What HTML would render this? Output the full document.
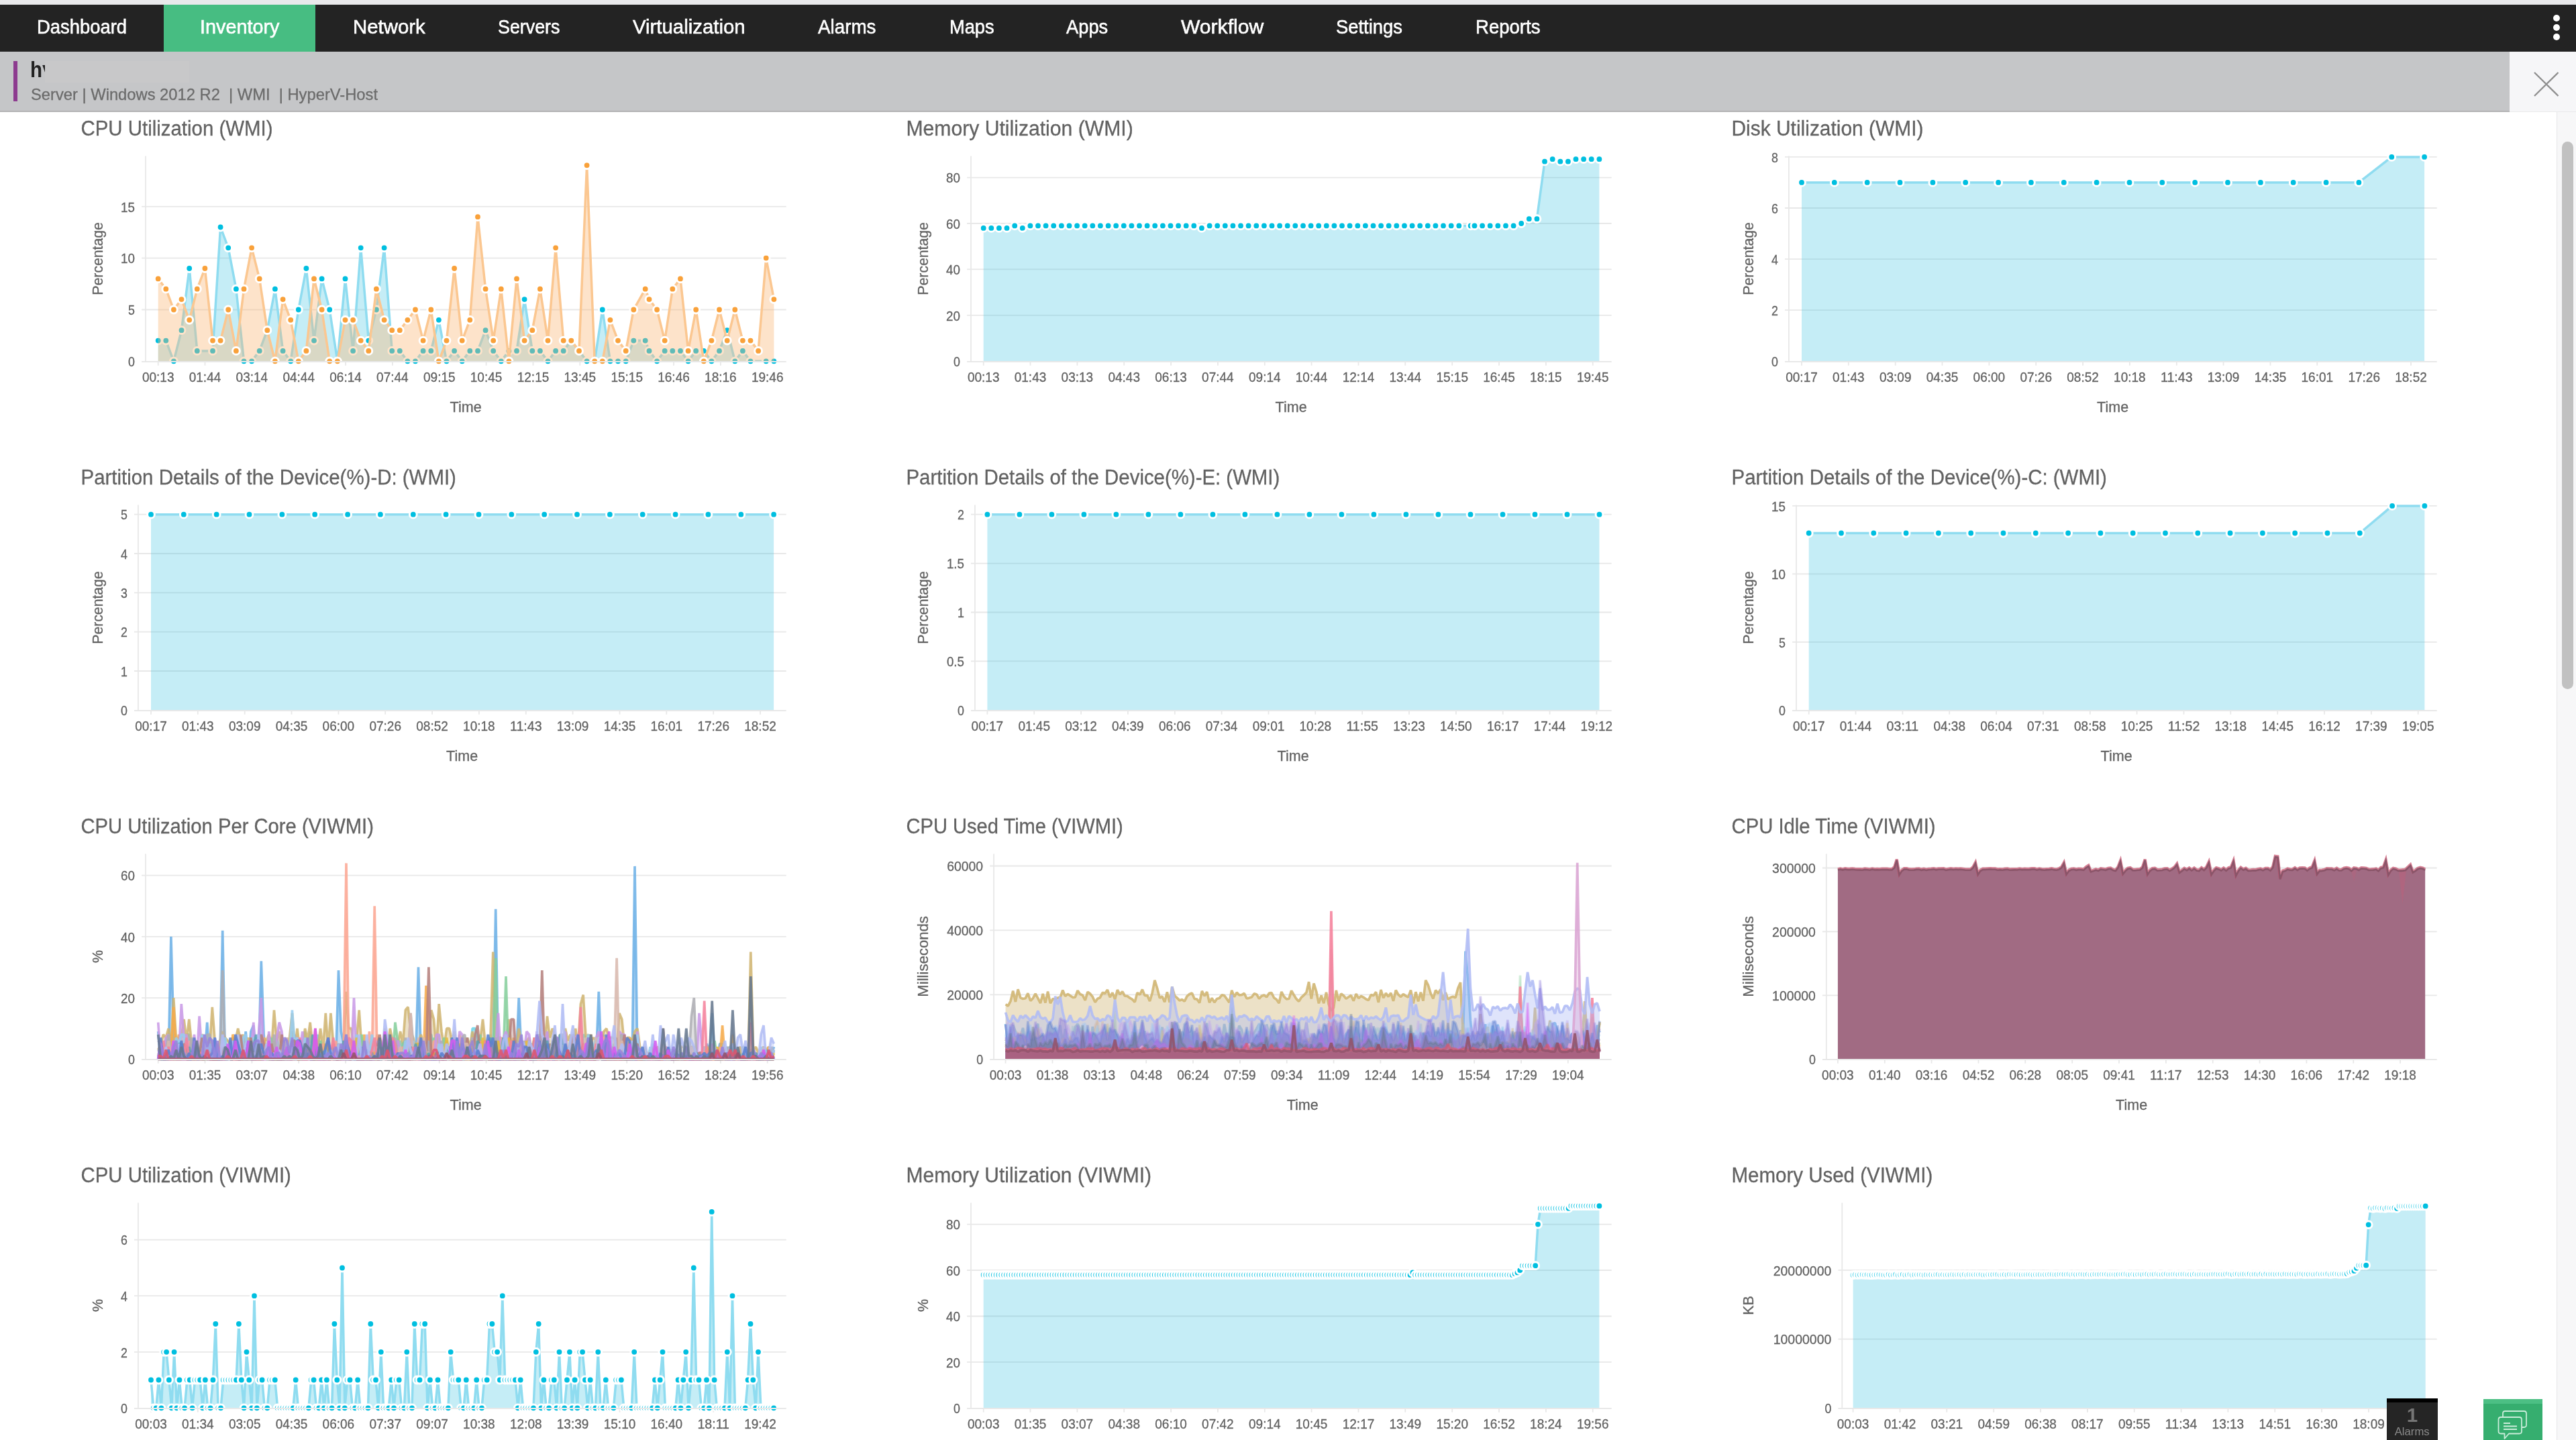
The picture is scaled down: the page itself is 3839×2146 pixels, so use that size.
<!DOCTYPE html>
<html lang="en">
<head>
<meta charset="utf-8">
<title>Inventory - Server graphs</title>
<style>
html,body{margin:0;padding:0;background:#fff;}
html{width:3839px;height:2146px;overflow:hidden;}
body{width:3839px;height:2146px;overflow:hidden;position:relative;font-family:"Liberation Sans", Arial, sans-serif;color:#666;}
.strip{position:absolute;left:0;top:0;width:100%;height:7px;background:#e9e9eb;}
.nav{position:absolute;left:0;top:7px;width:100%;height:70px;background:#232323;will-change:transform;}
.nav .tab{position:absolute;left:244px;top:0;width:226px;height:70px;background:#47bd82;}
.nav a{position:absolute;top:0;height:70px;line-height:66px;color:#fff;font-size:29.2px;-webkit-text-stroke:0.6px #fff;white-space:nowrap;text-decoration:none;}
.nav a span, .sub span, .alarms span{display:inline-block;transform-origin:0 50%;white-space:nowrap;}
.kebab{position:absolute;left:3805px;top:15px;width:11px;}
.kebab i{display:block;width:10.4px;height:10.4px;border-radius:50%;background:#fff;margin:0 0 3.4px 0;}
.hdr{position:absolute;left:0;top:77px;width:3740px;height:88px;background:#c5c6c8;border-bottom:2px solid #b3b3b5;will-change:transform;}
.hdr .bar{position:absolute;left:20px;top:14px;width:6px;height:60px;background:#8d3b8f;}
.hdr .name{position:absolute;left:45.4px;top:6.6px;font-size:33.5px;line-height:40px;height:31.6px;overflow:hidden;font-weight:bold;color:#222;transform:scaleX(0.88);transform-origin:0 50%;}
.hdr .mask{position:absolute;left:67px;top:13.8px;width:215px;height:32px;background:#c8c8c9;}
.hdr .sub{-webkit-text-stroke:0.3px #6b6b6b;position:absolute;left:46px;top:48.7px;font-size:24px;line-height:30px;color:#6b6b6b;white-space:nowrap;}
.close{position:absolute;left:3740px;top:77px;width:99px;height:89px;background:#f6f6f8;border-bottom:1px solid #e9e9eb;}
.track{position:absolute;left:3810px;top:167px;width:29px;height:1979px;background:#f7f7f8;border-left:1.5px solid #e7e7e9;box-sizing:border-box;}
.thumb{position:absolute;left:3817.5px;top:211px;width:17px;height:816px;border-radius:9px;background:#c1c1c1;}
svg.charts{position:absolute;left:0;top:0;will-change:transform;}
svg.charts text{stroke:#626262;stroke-width:0.3px;}
.alarms{position:absolute;left:3557px;top:2084px;width:76px;height:62px;background:#252525;border-top:6.5px solid #000;box-sizing:border-box;text-align:center;color:#777;will-change:transform;}
.alarms b{display:block;font-size:29.5px;line-height:28px;margin-top:5.2px;color:#757575;}
.alarms span{display:inline-block;font-size:16.5px;line-height:17px;color:#8a8a8a;transform-origin:50% 50%;position:relative;top:1.5px;}
.chat{overflow:hidden;position:absolute;left:3701px;top:2085px;width:88px;height:61px;background:#36ae6f;border-top:7.5px solid #4cbf84;box-sizing:border-box;}
.chat svg{position:absolute;left:20px;top:6px;}
</style>
</head>
<body>
<div class="strip"></div>
<div class="nav"><div class="tab"></div>
<a style="left:54.7px"><span id="nav_Dashboard" style="transform:scaleX(0.9391)">Dashboard</span></a>
<a class="act" style="left:298px"><span id="nav_Inventory" style="transform:scaleX(0.9862)">Inventory</span></a>
<a style="left:525.7px"><span id="nav_Network" style="transform:scaleX(1.0070)">Network</span></a>
<a style="left:742.4px"><span id="nav_Servers" style="transform:scaleX(0.9188)">Servers</span></a>
<a style="left:943px"><span id="nav_Virtualization" style="transform:scaleX(1.0061)">Virtualization</span></a>
<a style="left:1218.9px"><span id="nav_Alarms" style="transform:scaleX(0.9514)">Alarms</span></a>
<a style="left:1414.7px"><span id="nav_Maps" style="transform:scaleX(0.9317)">Maps</span></a>
<a style="left:1589px"><span id="nav_Apps" style="transform:scaleX(0.9349)">Apps</span></a>
<a style="left:1760px"><span id="nav_Workflow" style="transform:scaleX(1.0311)">Workflow</span></a>
<a style="left:1991px"><span id="nav_Settings" style="transform:scaleX(0.9387)">Settings</span></a>
<a style="left:2199.3px"><span id="nav_Reports" style="transform:scaleX(0.9432)">Reports</span></a>
<div class="kebab"><i></i><i></i><i></i></div>
</div>
<div class="hdr"><div class="bar"></div><div class="name">hy</div><div class="mask"></div>
<div class="sub"><span id="sub" style="transform:scaleX(0.9888)">Server | Windows 2012 R2&nbsp; | WMI&nbsp; | HyperV-Host</span></div></div>
<div class="close"><svg width="99" height="89" viewBox="0 0 99 89"><path d="M37 31L72.5 66M72.5 31L37 66" stroke="#8f8f8f" stroke-width="2.4" fill="none"/></svg></div>
<svg class="charts" width="3839" height="2146" viewBox="0 0 3839 2146" font-family='"Liberation Sans", Arial, sans-serif' fill="#626262">
<g>
<text x="120.5" y="202.3" font-size="30.6" textLength="286" lengthAdjust="spacingAndGlyphs">CPU Utilization (WMI)</text>
<text x="201" y="546" font-size="20.4" text-anchor="end" textLength="9.9" lengthAdjust="spacingAndGlyphs">0</text>
<path d="M211.1 461.5H1171.7" stroke="#e8e8e8" stroke-width="1.8"/>
<text x="201" y="469.2" font-size="20.4" text-anchor="end" textLength="9.9" lengthAdjust="spacingAndGlyphs">5</text>
<path d="M211.1 384.6H1171.7" stroke="#e8e8e8" stroke-width="1.8"/>
<text x="201" y="392.3" font-size="20.4" text-anchor="end" textLength="20.9" lengthAdjust="spacingAndGlyphs">10</text>
<path d="M211.1 307.8H1171.7" stroke="#e8e8e8" stroke-width="1.8"/>
<text x="201" y="315.5" font-size="20.4" text-anchor="end" textLength="20.9" lengthAdjust="spacingAndGlyphs">15</text>
<path d="M217 232.6V538.3" stroke="#e8e8e8" stroke-width="1.8"/>
<path d="M235.7 538.3V544.7" stroke="#e8e8e8" stroke-width="1.8"/>
<text x="235.7" y="569.2" font-size="20.4" text-anchor="middle" textLength="47.6" lengthAdjust="spacingAndGlyphs">00:13</text>
<path d="M305.5 538.3V544.7" stroke="#e8e8e8" stroke-width="1.8"/>
<text x="305.5" y="569.2" font-size="20.4" text-anchor="middle" textLength="47.6" lengthAdjust="spacingAndGlyphs">01:44</text>
<path d="M375.4 538.3V544.7" stroke="#e8e8e8" stroke-width="1.8"/>
<text x="375.4" y="569.2" font-size="20.4" text-anchor="middle" textLength="47.6" lengthAdjust="spacingAndGlyphs">03:14</text>
<path d="M445.2 538.3V544.7" stroke="#e8e8e8" stroke-width="1.8"/>
<text x="445.2" y="569.2" font-size="20.4" text-anchor="middle" textLength="47.6" lengthAdjust="spacingAndGlyphs">04:44</text>
<path d="M515.1 538.3V544.7" stroke="#e8e8e8" stroke-width="1.8"/>
<text x="515.1" y="569.2" font-size="20.4" text-anchor="middle" textLength="47.6" lengthAdjust="spacingAndGlyphs">06:14</text>
<path d="M584.9 538.3V544.7" stroke="#e8e8e8" stroke-width="1.8"/>
<text x="584.9" y="569.2" font-size="20.4" text-anchor="middle" textLength="47.6" lengthAdjust="spacingAndGlyphs">07:44</text>
<path d="M654.8 538.3V544.7" stroke="#e8e8e8" stroke-width="1.8"/>
<text x="654.8" y="569.2" font-size="20.4" text-anchor="middle" textLength="47.6" lengthAdjust="spacingAndGlyphs">09:15</text>
<path d="M724.6 538.3V544.7" stroke="#e8e8e8" stroke-width="1.8"/>
<text x="724.6" y="569.2" font-size="20.4" text-anchor="middle" textLength="47.6" lengthAdjust="spacingAndGlyphs">10:45</text>
<path d="M794.5 538.3V544.7" stroke="#e8e8e8" stroke-width="1.8"/>
<text x="794.5" y="569.2" font-size="20.4" text-anchor="middle" textLength="47.6" lengthAdjust="spacingAndGlyphs">12:15</text>
<path d="M864.3 538.3V544.7" stroke="#e8e8e8" stroke-width="1.8"/>
<text x="864.3" y="569.2" font-size="20.4" text-anchor="middle" textLength="47.6" lengthAdjust="spacingAndGlyphs">13:45</text>
<path d="M934.2 538.3V544.7" stroke="#e8e8e8" stroke-width="1.8"/>
<text x="934.2" y="569.2" font-size="20.4" text-anchor="middle" textLength="47.6" lengthAdjust="spacingAndGlyphs">15:15</text>
<path d="M1004 538.3V544.7" stroke="#e8e8e8" stroke-width="1.8"/>
<text x="1004" y="569.2" font-size="20.4" text-anchor="middle" textLength="47.6" lengthAdjust="spacingAndGlyphs">16:46</text>
<path d="M1073.9 538.3V544.7" stroke="#e8e8e8" stroke-width="1.8"/>
<text x="1073.9" y="569.2" font-size="20.4" text-anchor="middle" textLength="47.6" lengthAdjust="spacingAndGlyphs">18:16</text>
<path d="M1143.7 538.3V544.7" stroke="#e8e8e8" stroke-width="1.8"/>
<text x="1143.7" y="569.2" font-size="20.4" text-anchor="middle" textLength="47.6" lengthAdjust="spacingAndGlyphs">19:46</text>
<text x="694.1" y="613.7" font-size="21.5" text-anchor="middle" textLength="47" lengthAdjust="spacingAndGlyphs">Time</text>
<text transform="translate(152.5 385.4) rotate(-90)" font-size="21.5" text-anchor="middle" textLength="108.5" lengthAdjust="spacingAndGlyphs">Percentage</text>
<polygon points="235.7,538.3 235.7,507.6 247.3,507.6 258.9,538.3 270.5,492.2 282.2,400 293.8,522.9 305.4,522.9 317,522.9 328.6,338.5 340.2,369.3 351.9,430.7 363.5,538.3 375.1,538.3 386.7,522.9 398.3,492.2 409.9,430.7 421.6,522.9 433.2,538.3 444.8,461.5 456.4,400 468,507.6 479.6,415.4 491.2,461.5 502.9,538.3 514.5,415.4 526.1,522.9 537.7,369.3 549.3,507.6 560.9,461.5 572.6,369.3 584.2,522.9 595.8,522.9 607.4,538.3 619,538.3 630.6,522.9 642.3,522.9 653.9,476.8 665.5,538.3 677.1,522.9 688.7,538.3 700.3,522.9 712,522.9 723.6,492.2 735.2,522.9 746.8,538.3 758.4,522.9 770,522.9 781.6,446.1 793.3,522.9 804.9,522.9 816.5,538.3 828.1,522.9 839.7,522.9 851.3,507.6 863,522.9 874.6,538.3 886.2,538.3 897.8,461.5 909.4,538.3 921,538.3 932.7,538.3 944.3,507.6 961.7,507.6 967.5,522.9 979.1,538.3 990.7,522.9 1002.3,522.9 1014,522.9 1025.6,538.3 1037.2,522.9 1048.8,522.9 1060.4,538.3 1072,522.9 1083.7,492.2 1095.3,538.3 1106.9,522.9 1118.5,538.3 1130.1,538.3 1141.7,538.3 1153.4,538.3 1153.4,538.3" fill="rgba(30,185,220,0.26)"/>
<polyline points="235.7,507.6 247.3,507.6 258.9,538.3 270.5,492.2 282.2,400 293.8,522.9 305.4,522.9 317,522.9 328.6,338.5 340.2,369.3 351.9,430.7 363.5,538.3 375.1,538.3 386.7,522.9 398.3,492.2 409.9,430.7 421.6,522.9 433.2,538.3 444.8,461.5 456.4,400 468,507.6 479.6,415.4 491.2,461.5 502.9,538.3 514.5,415.4 526.1,522.9 537.7,369.3 549.3,507.6 560.9,461.5 572.6,369.3 584.2,522.9 595.8,522.9 607.4,538.3 619,538.3 630.6,522.9 642.3,522.9 653.9,476.8 665.5,538.3 677.1,522.9 688.7,538.3 700.3,522.9 712,522.9 723.6,492.2 735.2,522.9 746.8,538.3 758.4,522.9 770,522.9 781.6,446.1 793.3,522.9 804.9,522.9 816.5,538.3 828.1,522.9 839.7,522.9 851.3,507.6 863,522.9 874.6,538.3 886.2,538.3 897.8,461.5 909.4,538.3 921,538.3 932.7,538.3 944.3,507.6 961.7,507.6 967.5,522.9 979.1,538.3 990.7,522.9 1002.3,522.9 1014,522.9 1025.6,538.3 1037.2,522.9 1048.8,522.9 1060.4,538.3 1072,522.9 1083.7,492.2 1095.3,538.3 1106.9,522.9 1118.5,538.3 1130.1,538.3 1141.7,538.3 1153.4,538.3" fill="none" stroke="#8fdcf0" stroke-width="3.5" stroke-linejoin="round"/>
<g fill="#00bfe0" stroke="#fff" stroke-width="3"><circle cx="235.7" cy="507.6" r="5.4"/><circle cx="247.3" cy="507.6" r="5.4"/><circle cx="258.9" cy="538.3" r="5.4"/><circle cx="270.5" cy="492.2" r="5.4"/><circle cx="282.2" cy="400" r="5.4"/><circle cx="293.8" cy="522.9" r="5.4"/><circle cx="317" cy="522.9" r="5.4"/><circle cx="328.6" cy="338.5" r="5.4"/><circle cx="340.2" cy="369.3" r="5.4"/><circle cx="351.9" cy="430.7" r="5.4"/><circle cx="363.5" cy="538.3" r="5.4"/><circle cx="375.1" cy="538.3" r="5.4"/><circle cx="386.7" cy="522.9" r="5.4"/><circle cx="398.3" cy="492.2" r="5.4"/><circle cx="409.9" cy="430.7" r="5.4"/><circle cx="421.6" cy="522.9" r="5.4"/><circle cx="433.2" cy="538.3" r="5.4"/><circle cx="444.8" cy="461.5" r="5.4"/><circle cx="456.4" cy="400" r="5.4"/><circle cx="468" cy="507.6" r="5.4"/><circle cx="479.6" cy="415.4" r="5.4"/><circle cx="491.2" cy="461.5" r="5.4"/><circle cx="502.9" cy="538.3" r="5.4"/><circle cx="514.5" cy="415.4" r="5.4"/><circle cx="526.1" cy="522.9" r="5.4"/><circle cx="537.7" cy="369.3" r="5.4"/><circle cx="549.3" cy="507.6" r="5.4"/><circle cx="560.9" cy="461.5" r="5.4"/><circle cx="572.6" cy="369.3" r="5.4"/><circle cx="584.2" cy="522.9" r="5.4"/><circle cx="595.8" cy="522.9" r="5.4"/><circle cx="607.4" cy="538.3" r="5.4"/><circle cx="619" cy="538.3" r="5.4"/><circle cx="630.6" cy="522.9" r="5.4"/><circle cx="642.3" cy="522.9" r="5.4"/><circle cx="653.9" cy="476.8" r="5.4"/><circle cx="665.5" cy="538.3" r="5.4"/><circle cx="677.1" cy="522.9" r="5.4"/><circle cx="688.7" cy="538.3" r="5.4"/><circle cx="700.3" cy="522.9" r="5.4"/><circle cx="712" cy="522.9" r="5.4"/><circle cx="723.6" cy="492.2" r="5.4"/><circle cx="735.2" cy="522.9" r="5.4"/><circle cx="746.8" cy="538.3" r="5.4"/><circle cx="758.4" cy="522.9" r="5.4"/><circle cx="770" cy="522.9" r="5.4"/><circle cx="781.6" cy="446.1" r="5.4"/><circle cx="793.3" cy="522.9" r="5.4"/><circle cx="804.9" cy="522.9" r="5.4"/><circle cx="816.5" cy="538.3" r="5.4"/><circle cx="828.1" cy="522.9" r="5.4"/><circle cx="839.7" cy="522.9" r="5.4"/><circle cx="851.3" cy="507.6" r="5.4"/><circle cx="863" cy="522.9" r="5.4"/><circle cx="874.6" cy="538.3" r="5.4"/><circle cx="886.2" cy="538.3" r="5.4"/><circle cx="897.8" cy="461.5" r="5.4"/><circle cx="909.4" cy="538.3" r="5.4"/><circle cx="921" cy="538.3" r="5.4"/><circle cx="932.7" cy="538.3" r="5.4"/><circle cx="944.3" cy="507.6" r="5.4"/><circle cx="961.7" cy="507.6" r="5.4"/><circle cx="967.5" cy="522.9" r="5.4"/><circle cx="979.1" cy="538.3" r="5.4"/><circle cx="990.7" cy="522.9" r="5.4"/><circle cx="1002.3" cy="522.9" r="5.4"/><circle cx="1014" cy="522.9" r="5.4"/><circle cx="1025.6" cy="538.3" r="5.4"/><circle cx="1037.2" cy="522.9" r="5.4"/><circle cx="1048.8" cy="522.9" r="5.4"/><circle cx="1060.4" cy="538.3" r="5.4"/><circle cx="1072" cy="522.9" r="5.4"/><circle cx="1083.7" cy="492.2" r="5.4"/><circle cx="1095.3" cy="538.3" r="5.4"/><circle cx="1106.9" cy="522.9" r="5.4"/><circle cx="1118.5" cy="538.3" r="5.4"/><circle cx="1141.7" cy="538.3" r="5.4"/><circle cx="1153.4" cy="538.3" r="5.4"/></g>
<polygon points="235.7,538.3 235.7,415.4 247.3,430.7 258.9,461.5 270.5,446.1 282.2,476.8 293.8,430.7 305.4,400 317,507.6 328.6,507.6 340.2,461.5 351.9,522.9 363.5,430.7 375.1,369.3 386.7,415.4 398.3,492.2 409.9,538.3 421.6,446.1 433.2,476.8 444.8,538.3 456.4,522.9 468,415.4 479.6,461.5 491.2,538.3 502.9,538.3 514.5,476.8 526.1,476.8 537.7,507.6 549.3,522.9 560.9,430.7 572.6,476.8 584.2,492.2 595.8,492.2 607.4,476.8 619,461.5 630.6,507.6 642.3,461.5 653.9,538.3 665.5,507.6 677.1,400 688.7,507.6 700.3,476.8 712,323.2 723.6,430.7 735.2,507.6 746.8,430.7 758.4,538.3 770,415.4 781.6,507.6 793.3,492.2 804.9,430.7 816.5,507.6 828.1,369.3 839.7,507.6 851.3,507.6 863,522.9 874.6,246.3 886.2,538.3 897.8,538.3 909.4,476.8 921,507.6 932.7,522.9 944.3,461.5 961.7,430.7 967.5,446.1 979.1,461.5 990.7,507.6 1002.3,430.7 1014,415.4 1025.6,522.9 1037.2,461.5 1048.8,538.3 1060.4,507.6 1072,461.5 1083.7,507.6 1095.3,461.5 1106.9,507.6 1118.5,507.6 1130.1,522.9 1141.7,384.6 1153.4,446.1 1153.4,538.3" fill="rgba(251,182,115,0.38)"/>
<polyline points="235.7,415.4 247.3,430.7 258.9,461.5 270.5,446.1 282.2,476.8 293.8,430.7 305.4,400 317,507.6 328.6,507.6 340.2,461.5 351.9,522.9 363.5,430.7 375.1,369.3 386.7,415.4 398.3,492.2 409.9,538.3 421.6,446.1 433.2,476.8 444.8,538.3 456.4,522.9 468,415.4 479.6,461.5 491.2,538.3 502.9,538.3 514.5,476.8 526.1,476.8 537.7,507.6 549.3,522.9 560.9,430.7 572.6,476.8 584.2,492.2 595.8,492.2 607.4,476.8 619,461.5 630.6,507.6 642.3,461.5 653.9,538.3 665.5,507.6 677.1,400 688.7,507.6 700.3,476.8 712,323.2 723.6,430.7 735.2,507.6 746.8,430.7 758.4,538.3 770,415.4 781.6,507.6 793.3,492.2 804.9,430.7 816.5,507.6 828.1,369.3 839.7,507.6 851.3,507.6 863,522.9 874.6,246.3 886.2,538.3 897.8,538.3 909.4,476.8 921,507.6 932.7,522.9 944.3,461.5 961.7,430.7 967.5,446.1 979.1,461.5 990.7,507.6 1002.3,430.7 1014,415.4 1025.6,522.9 1037.2,461.5 1048.8,538.3 1060.4,507.6 1072,461.5 1083.7,507.6 1095.3,461.5 1106.9,507.6 1118.5,507.6 1130.1,522.9 1141.7,384.6 1153.4,446.1" fill="none" stroke="#fbc791" stroke-width="3.5" stroke-linejoin="round"/>
<g fill="#f9a13a" stroke="#fff" stroke-width="3"><circle cx="235.7" cy="415.4" r="5.4"/><circle cx="247.3" cy="430.7" r="5.4"/><circle cx="258.9" cy="461.5" r="5.4"/><circle cx="270.5" cy="446.1" r="5.4"/><circle cx="282.2" cy="476.8" r="5.4"/><circle cx="293.8" cy="430.7" r="5.4"/><circle cx="305.4" cy="400" r="5.4"/><circle cx="317" cy="507.6" r="5.4"/><circle cx="328.6" cy="507.6" r="5.4"/><circle cx="340.2" cy="461.5" r="5.4"/><circle cx="351.9" cy="522.9" r="5.4"/><circle cx="363.5" cy="430.7" r="5.4"/><circle cx="375.1" cy="369.3" r="5.4"/><circle cx="386.7" cy="415.4" r="5.4"/><circle cx="398.3" cy="492.2" r="5.4"/><circle cx="409.9" cy="538.3" r="5.4"/><circle cx="421.6" cy="446.1" r="5.4"/><circle cx="433.2" cy="476.8" r="5.4"/><circle cx="444.8" cy="538.3" r="5.4"/><circle cx="456.4" cy="522.9" r="5.4"/><circle cx="468" cy="415.4" r="5.4"/><circle cx="479.6" cy="461.5" r="5.4"/><circle cx="491.2" cy="538.3" r="5.4"/><circle cx="502.9" cy="538.3" r="5.4"/><circle cx="514.5" cy="476.8" r="5.4"/><circle cx="526.1" cy="476.8" r="5.4"/><circle cx="537.7" cy="507.6" r="5.4"/><circle cx="549.3" cy="522.9" r="5.4"/><circle cx="560.9" cy="430.7" r="5.4"/><circle cx="572.6" cy="476.8" r="5.4"/><circle cx="584.2" cy="492.2" r="5.4"/><circle cx="595.8" cy="492.2" r="5.4"/><circle cx="607.4" cy="476.8" r="5.4"/><circle cx="619" cy="461.5" r="5.4"/><circle cx="630.6" cy="507.6" r="5.4"/><circle cx="642.3" cy="461.5" r="5.4"/><circle cx="653.9" cy="538.3" r="5.4"/><circle cx="665.5" cy="507.6" r="5.4"/><circle cx="677.1" cy="400" r="5.4"/><circle cx="688.7" cy="507.6" r="5.4"/><circle cx="700.3" cy="476.8" r="5.4"/><circle cx="712" cy="323.2" r="5.4"/><circle cx="723.6" cy="430.7" r="5.4"/><circle cx="735.2" cy="507.6" r="5.4"/><circle cx="746.8" cy="430.7" r="5.4"/><circle cx="758.4" cy="538.3" r="5.4"/><circle cx="770" cy="415.4" r="5.4"/><circle cx="781.6" cy="507.6" r="5.4"/><circle cx="793.3" cy="492.2" r="5.4"/><circle cx="804.9" cy="430.7" r="5.4"/><circle cx="816.5" cy="507.6" r="5.4"/><circle cx="828.1" cy="369.3" r="5.4"/><circle cx="839.7" cy="507.6" r="5.4"/><circle cx="851.3" cy="507.6" r="5.4"/><circle cx="863" cy="522.9" r="5.4"/><circle cx="874.6" cy="246.3" r="5.4"/><circle cx="886.2" cy="538.3" r="5.4"/><circle cx="897.8" cy="538.3" r="5.4"/><circle cx="909.4" cy="476.8" r="5.4"/><circle cx="921" cy="507.6" r="5.4"/><circle cx="932.7" cy="522.9" r="5.4"/><circle cx="944.3" cy="461.5" r="5.4"/><circle cx="961.7" cy="430.7" r="5.4"/><circle cx="967.5" cy="446.1" r="5.4"/><circle cx="979.1" cy="461.5" r="5.4"/><circle cx="990.7" cy="507.6" r="5.4"/><circle cx="1002.3" cy="430.7" r="5.4"/><circle cx="1014" cy="415.4" r="5.4"/><circle cx="1025.6" cy="522.9" r="5.4"/><circle cx="1037.2" cy="461.5" r="5.4"/><circle cx="1048.8" cy="538.3" r="5.4"/><circle cx="1060.4" cy="507.6" r="5.4"/><circle cx="1072" cy="461.5" r="5.4"/><circle cx="1083.7" cy="507.6" r="5.4"/><circle cx="1095.3" cy="461.5" r="5.4"/><circle cx="1106.9" cy="507.6" r="5.4"/><circle cx="1118.5" cy="507.6" r="5.4"/><circle cx="1130.1" cy="522.9" r="5.4"/><circle cx="1141.7" cy="384.6" r="5.4"/><circle cx="1153.4" cy="446.1" r="5.4"/></g>
<path d="M211.1 539.1H1171.7" stroke="#e8e8e8" stroke-width="2"/>
</g>
<g>
<text x="1350.5" y="202.3" font-size="30.6" textLength="338.2" lengthAdjust="spacingAndGlyphs">Memory Utilization (WMI)</text>
<text x="1431" y="546" font-size="20.4" text-anchor="end" textLength="9.9" lengthAdjust="spacingAndGlyphs">0</text>
<path d="M1441.1 469.9H2401.7" stroke="#e8e8e8" stroke-width="1.8"/>
<text x="1431" y="477.6" font-size="20.4" text-anchor="end" textLength="20.9" lengthAdjust="spacingAndGlyphs">20</text>
<path d="M1441.1 401.4H2401.7" stroke="#e8e8e8" stroke-width="1.8"/>
<text x="1431" y="409.1" font-size="20.4" text-anchor="end" textLength="20.9" lengthAdjust="spacingAndGlyphs">40</text>
<path d="M1441.1 333H2401.7" stroke="#e8e8e8" stroke-width="1.8"/>
<text x="1431" y="340.7" font-size="20.4" text-anchor="end" textLength="20.9" lengthAdjust="spacingAndGlyphs">60</text>
<path d="M1441.1 264.6H2401.7" stroke="#e8e8e8" stroke-width="1.8"/>
<text x="1431" y="272.3" font-size="20.4" text-anchor="end" textLength="20.9" lengthAdjust="spacingAndGlyphs">80</text>
<path d="M1447 232.6V538.3" stroke="#e8e8e8" stroke-width="1.8"/>
<path d="M1465.7 538.3V544.7" stroke="#e8e8e8" stroke-width="1.8"/>
<text x="1465.7" y="569.2" font-size="20.4" text-anchor="middle" textLength="47.6" lengthAdjust="spacingAndGlyphs">00:13</text>
<path d="M1535.5 538.3V544.7" stroke="#e8e8e8" stroke-width="1.8"/>
<text x="1535.5" y="569.2" font-size="20.4" text-anchor="middle" textLength="47.6" lengthAdjust="spacingAndGlyphs">01:43</text>
<path d="M1605.4 538.3V544.7" stroke="#e8e8e8" stroke-width="1.8"/>
<text x="1605.4" y="569.2" font-size="20.4" text-anchor="middle" textLength="47.6" lengthAdjust="spacingAndGlyphs">03:13</text>
<path d="M1675.2 538.3V544.7" stroke="#e8e8e8" stroke-width="1.8"/>
<text x="1675.2" y="569.2" font-size="20.4" text-anchor="middle" textLength="47.6" lengthAdjust="spacingAndGlyphs">04:43</text>
<path d="M1745.1 538.3V544.7" stroke="#e8e8e8" stroke-width="1.8"/>
<text x="1745.1" y="569.2" font-size="20.4" text-anchor="middle" textLength="47.6" lengthAdjust="spacingAndGlyphs">06:13</text>
<path d="M1814.9 538.3V544.7" stroke="#e8e8e8" stroke-width="1.8"/>
<text x="1814.9" y="569.2" font-size="20.4" text-anchor="middle" textLength="47.6" lengthAdjust="spacingAndGlyphs">07:44</text>
<path d="M1884.8 538.3V544.7" stroke="#e8e8e8" stroke-width="1.8"/>
<text x="1884.8" y="569.2" font-size="20.4" text-anchor="middle" textLength="47.6" lengthAdjust="spacingAndGlyphs">09:14</text>
<path d="M1954.6 538.3V544.7" stroke="#e8e8e8" stroke-width="1.8"/>
<text x="1954.6" y="569.2" font-size="20.4" text-anchor="middle" textLength="47.6" lengthAdjust="spacingAndGlyphs">10:44</text>
<path d="M2024.5 538.3V544.7" stroke="#e8e8e8" stroke-width="1.8"/>
<text x="2024.5" y="569.2" font-size="20.4" text-anchor="middle" textLength="47.6" lengthAdjust="spacingAndGlyphs">12:14</text>
<path d="M2094.3 538.3V544.7" stroke="#e8e8e8" stroke-width="1.8"/>
<text x="2094.3" y="569.2" font-size="20.4" text-anchor="middle" textLength="47.6" lengthAdjust="spacingAndGlyphs">13:44</text>
<path d="M2164.2 538.3V544.7" stroke="#e8e8e8" stroke-width="1.8"/>
<text x="2164.2" y="569.2" font-size="20.4" text-anchor="middle" textLength="47.6" lengthAdjust="spacingAndGlyphs">15:15</text>
<path d="M2234 538.3V544.7" stroke="#e8e8e8" stroke-width="1.8"/>
<text x="2234" y="569.2" font-size="20.4" text-anchor="middle" textLength="47.6" lengthAdjust="spacingAndGlyphs">16:45</text>
<path d="M2303.9 538.3V544.7" stroke="#e8e8e8" stroke-width="1.8"/>
<text x="2303.9" y="569.2" font-size="20.4" text-anchor="middle" textLength="47.6" lengthAdjust="spacingAndGlyphs">18:15</text>
<path d="M2373.7 538.3V544.7" stroke="#e8e8e8" stroke-width="1.8"/>
<text x="2373.7" y="569.2" font-size="20.4" text-anchor="middle" textLength="47.6" lengthAdjust="spacingAndGlyphs">19:45</text>
<text x="1924.1" y="613.7" font-size="21.5" text-anchor="middle" textLength="47" lengthAdjust="spacingAndGlyphs">Time</text>
<text transform="translate(1382.5 385.4) rotate(-90)" font-size="21.5" text-anchor="middle" textLength="108.5" lengthAdjust="spacingAndGlyphs">Percentage</text>
<polygon points="1465.7,538.3 1465.7,339.9 1477.3,339.9 1488.9,339.9 1500.5,339.9 1512.2,336.4 1523.8,339.9 1535.4,336.4 1547,336.4 1558.6,336.4 1570.2,336.4 1581.9,336.4 1593.5,336.4 1605.1,336.4 1616.7,336.4 1628.3,336.4 1639.9,336.4 1651.6,336.4 1663.2,336.4 1674.8,336.4 1686.4,336.4 1698,336.4 1709.6,336.4 1721.2,336.4 1732.9,336.4 1744.5,336.4 1756.1,336.4 1767.7,336.4 1779.3,336.4 1790.9,339.9 1802.6,336.4 1814.2,336.4 1825.8,336.4 1837.4,336.4 1849,336.4 1860.6,336.4 1872.3,336.4 1883.9,336.4 1895.5,336.4 1907.1,336.4 1918.7,336.4 1930.3,336.4 1942,336.4 1953.6,336.4 1965.2,336.4 1976.8,336.4 1988.4,336.4 2000,336.4 2011.6,336.4 2023.3,336.4 2034.9,336.4 2046.5,336.4 2058.1,336.4 2069.7,336.4 2081.3,336.4 2093,336.4 2104.6,336.4 2116.2,336.4 2127.8,336.4 2139.4,336.4 2151,336.4 2162.7,336.4 2174.3,336.4 2191.7,336.4 2197.5,336.4 2209.1,336.4 2220.7,336.4 2232.3,336.4 2244,336.4 2255.6,336.4 2267.2,333 2278.8,326.2 2290.4,326.2 2302,240.7 2313.7,237.2 2325.3,240.7 2336.9,240.7 2348.5,237.2 2360.1,237.2 2371.7,237.2 2383.4,237.2 2383.4,538.3" fill="rgba(30,185,220,0.26)"/>
<polyline points="1465.7,339.9 1477.3,339.9 1488.9,339.9 1500.5,339.9 1512.2,336.4 1523.8,339.9 1535.4,336.4 1547,336.4 1558.6,336.4 1570.2,336.4 1581.9,336.4 1593.5,336.4 1605.1,336.4 1616.7,336.4 1628.3,336.4 1639.9,336.4 1651.6,336.4 1663.2,336.4 1674.8,336.4 1686.4,336.4 1698,336.4 1709.6,336.4 1721.2,336.4 1732.9,336.4 1744.5,336.4 1756.1,336.4 1767.7,336.4 1779.3,336.4 1790.9,339.9 1802.6,336.4 1814.2,336.4 1825.8,336.4 1837.4,336.4 1849,336.4 1860.6,336.4 1872.3,336.4 1883.9,336.4 1895.5,336.4 1907.1,336.4 1918.7,336.4 1930.3,336.4 1942,336.4 1953.6,336.4 1965.2,336.4 1976.8,336.4 1988.4,336.4 2000,336.4 2011.6,336.4 2023.3,336.4 2034.9,336.4 2046.5,336.4 2058.1,336.4 2069.7,336.4 2081.3,336.4 2093,336.4 2104.6,336.4 2116.2,336.4 2127.8,336.4 2139.4,336.4 2151,336.4 2162.7,336.4 2174.3,336.4 2191.7,336.4 2197.5,336.4 2209.1,336.4 2220.7,336.4 2232.3,336.4 2244,336.4 2255.6,336.4 2267.2,333 2278.8,326.2 2290.4,326.2 2302,240.7 2313.7,237.2 2325.3,240.7 2336.9,240.7 2348.5,237.2 2360.1,237.2 2371.7,237.2 2383.4,237.2" fill="none" stroke="#8fdcf0" stroke-width="3.5" stroke-linejoin="round"/>
<g fill="#00bfe0" stroke="#fff" stroke-width="3"><circle cx="1465.7" cy="339.9" r="5.4"/><circle cx="1477.3" cy="339.9" r="5.4"/><circle cx="1488.9" cy="339.9" r="5.4"/><circle cx="1500.5" cy="339.9" r="5.4"/><circle cx="1512.2" cy="336.4" r="5.4"/><circle cx="1523.8" cy="339.9" r="5.4"/><circle cx="1535.4" cy="336.4" r="5.4"/><circle cx="1547" cy="336.4" r="5.4"/><circle cx="1558.6" cy="336.4" r="5.4"/><circle cx="1570.2" cy="336.4" r="5.4"/><circle cx="1581.9" cy="336.4" r="5.4"/><circle cx="1593.5" cy="336.4" r="5.4"/><circle cx="1605.1" cy="336.4" r="5.4"/><circle cx="1616.7" cy="336.4" r="5.4"/><circle cx="1628.3" cy="336.4" r="5.4"/><circle cx="1639.9" cy="336.4" r="5.4"/><circle cx="1651.6" cy="336.4" r="5.4"/><circle cx="1663.2" cy="336.4" r="5.4"/><circle cx="1674.8" cy="336.4" r="5.4"/><circle cx="1686.4" cy="336.4" r="5.4"/><circle cx="1698" cy="336.4" r="5.4"/><circle cx="1709.6" cy="336.4" r="5.4"/><circle cx="1721.2" cy="336.4" r="5.4"/><circle cx="1732.9" cy="336.4" r="5.4"/><circle cx="1744.5" cy="336.4" r="5.4"/><circle cx="1756.1" cy="336.4" r="5.4"/><circle cx="1767.7" cy="336.4" r="5.4"/><circle cx="1779.3" cy="336.4" r="5.4"/><circle cx="1790.9" cy="339.9" r="5.4"/><circle cx="1802.6" cy="336.4" r="5.4"/><circle cx="1814.2" cy="336.4" r="5.4"/><circle cx="1825.8" cy="336.4" r="5.4"/><circle cx="1837.4" cy="336.4" r="5.4"/><circle cx="1849" cy="336.4" r="5.4"/><circle cx="1860.6" cy="336.4" r="5.4"/><circle cx="1872.3" cy="336.4" r="5.4"/><circle cx="1883.9" cy="336.4" r="5.4"/><circle cx="1895.5" cy="336.4" r="5.4"/><circle cx="1907.1" cy="336.4" r="5.4"/><circle cx="1918.7" cy="336.4" r="5.4"/><circle cx="1930.3" cy="336.4" r="5.4"/><circle cx="1942" cy="336.4" r="5.4"/><circle cx="1953.6" cy="336.4" r="5.4"/><circle cx="1965.2" cy="336.4" r="5.4"/><circle cx="1976.8" cy="336.4" r="5.4"/><circle cx="1988.4" cy="336.4" r="5.4"/><circle cx="2000" cy="336.4" r="5.4"/><circle cx="2011.6" cy="336.4" r="5.4"/><circle cx="2023.3" cy="336.4" r="5.4"/><circle cx="2034.9" cy="336.4" r="5.4"/><circle cx="2046.5" cy="336.4" r="5.4"/><circle cx="2058.1" cy="336.4" r="5.4"/><circle cx="2069.7" cy="336.4" r="5.4"/><circle cx="2081.3" cy="336.4" r="5.4"/><circle cx="2093" cy="336.4" r="5.4"/><circle cx="2104.6" cy="336.4" r="5.4"/><circle cx="2116.2" cy="336.4" r="5.4"/><circle cx="2127.8" cy="336.4" r="5.4"/><circle cx="2139.4" cy="336.4" r="5.4"/><circle cx="2151" cy="336.4" r="5.4"/><circle cx="2162.7" cy="336.4" r="5.4"/><circle cx="2174.3" cy="336.4" r="5.4"/><circle cx="2191.7" cy="336.4" r="5.4"/><circle cx="2197.5" cy="336.4" r="5.4"/><circle cx="2209.1" cy="336.4" r="5.4"/><circle cx="2220.7" cy="336.4" r="5.4"/><circle cx="2232.3" cy="336.4" r="5.4"/><circle cx="2244" cy="336.4" r="5.4"/><circle cx="2255.6" cy="336.4" r="5.4"/><circle cx="2267.2" cy="333" r="5.4"/><circle cx="2278.8" cy="326.2" r="5.4"/><circle cx="2290.4" cy="326.2" r="5.4"/><circle cx="2302" cy="240.7" r="5.4"/><circle cx="2313.7" cy="237.2" r="5.4"/><circle cx="2325.3" cy="240.7" r="5.4"/><circle cx="2336.9" cy="240.7" r="5.4"/><circle cx="2348.5" cy="237.2" r="5.4"/><circle cx="2360.1" cy="237.2" r="5.4"/><circle cx="2371.7" cy="237.2" r="5.4"/><circle cx="2383.4" cy="237.2" r="5.4"/></g>
<path d="M1441.1 539.1H2401.7" stroke="#e8e8e8" stroke-width="2"/>
</g>
<g>
<text x="2580.5" y="202.3" font-size="30.6" textLength="286" lengthAdjust="spacingAndGlyphs">Disk Utilization (WMI)</text>
<text x="2649.9" y="546" font-size="20.4" text-anchor="end" textLength="9.9" lengthAdjust="spacingAndGlyphs">0</text>
<path d="M2660 462.2H3631.7" stroke="#e8e8e8" stroke-width="1.8"/>
<text x="2649.9" y="469.9" font-size="20.4" text-anchor="end" textLength="9.9" lengthAdjust="spacingAndGlyphs">2</text>
<path d="M2660 386.1H3631.7" stroke="#e8e8e8" stroke-width="1.8"/>
<text x="2649.9" y="393.8" font-size="20.4" text-anchor="end" textLength="9.9" lengthAdjust="spacingAndGlyphs">4</text>
<path d="M2660 310H3631.7" stroke="#e8e8e8" stroke-width="1.8"/>
<text x="2649.9" y="317.7" font-size="20.4" text-anchor="end" textLength="9.9" lengthAdjust="spacingAndGlyphs">6</text>
<path d="M2660 233.9H3631.7" stroke="#e8e8e8" stroke-width="1.8"/>
<text x="2649.9" y="241.6" font-size="20.4" text-anchor="end" textLength="9.9" lengthAdjust="spacingAndGlyphs">8</text>
<path d="M2665.9 232.6V538.3" stroke="#e8e8e8" stroke-width="1.8"/>
<path d="M2685 538.3V544.7" stroke="#e8e8e8" stroke-width="1.8"/>
<text x="2685" y="569.2" font-size="20.4" text-anchor="middle" textLength="47.6" lengthAdjust="spacingAndGlyphs">00:17</text>
<path d="M2754.8 538.3V544.7" stroke="#e8e8e8" stroke-width="1.8"/>
<text x="2754.8" y="569.2" font-size="20.4" text-anchor="middle" textLength="47.6" lengthAdjust="spacingAndGlyphs">01:43</text>
<path d="M2824.7 538.3V544.7" stroke="#e8e8e8" stroke-width="1.8"/>
<text x="2824.7" y="569.2" font-size="20.4" text-anchor="middle" textLength="47.6" lengthAdjust="spacingAndGlyphs">03:09</text>
<path d="M2894.5 538.3V544.7" stroke="#e8e8e8" stroke-width="1.8"/>
<text x="2894.5" y="569.2" font-size="20.4" text-anchor="middle" textLength="47.6" lengthAdjust="spacingAndGlyphs">04:35</text>
<path d="M2964.4 538.3V544.7" stroke="#e8e8e8" stroke-width="1.8"/>
<text x="2964.4" y="569.2" font-size="20.4" text-anchor="middle" textLength="47.6" lengthAdjust="spacingAndGlyphs">06:00</text>
<path d="M3034.2 538.3V544.7" stroke="#e8e8e8" stroke-width="1.8"/>
<text x="3034.2" y="569.2" font-size="20.4" text-anchor="middle" textLength="47.6" lengthAdjust="spacingAndGlyphs">07:26</text>
<path d="M3104.1 538.3V544.7" stroke="#e8e8e8" stroke-width="1.8"/>
<text x="3104.1" y="569.2" font-size="20.4" text-anchor="middle" textLength="47.6" lengthAdjust="spacingAndGlyphs">08:52</text>
<path d="M3173.9 538.3V544.7" stroke="#e8e8e8" stroke-width="1.8"/>
<text x="3173.9" y="569.2" font-size="20.4" text-anchor="middle" textLength="47.6" lengthAdjust="spacingAndGlyphs">10:18</text>
<path d="M3243.8 538.3V544.7" stroke="#e8e8e8" stroke-width="1.8"/>
<text x="3243.8" y="569.2" font-size="20.4" text-anchor="middle" textLength="47.6" lengthAdjust="spacingAndGlyphs">11:43</text>
<path d="M3313.6 538.3V544.7" stroke="#e8e8e8" stroke-width="1.8"/>
<text x="3313.6" y="569.2" font-size="20.4" text-anchor="middle" textLength="47.6" lengthAdjust="spacingAndGlyphs">13:09</text>
<path d="M3383.5 538.3V544.7" stroke="#e8e8e8" stroke-width="1.8"/>
<text x="3383.5" y="569.2" font-size="20.4" text-anchor="middle" textLength="47.6" lengthAdjust="spacingAndGlyphs">14:35</text>
<path d="M3453.3 538.3V544.7" stroke="#e8e8e8" stroke-width="1.8"/>
<text x="3453.3" y="569.2" font-size="20.4" text-anchor="middle" textLength="47.6" lengthAdjust="spacingAndGlyphs">16:01</text>
<path d="M3523.2 538.3V544.7" stroke="#e8e8e8" stroke-width="1.8"/>
<text x="3523.2" y="569.2" font-size="20.4" text-anchor="middle" textLength="47.6" lengthAdjust="spacingAndGlyphs">17:26</text>
<path d="M3593 538.3V544.7" stroke="#e8e8e8" stroke-width="1.8"/>
<text x="3593" y="569.2" font-size="20.4" text-anchor="middle" textLength="47.6" lengthAdjust="spacingAndGlyphs">18:52</text>
<text x="3148.6" y="613.7" font-size="21.5" text-anchor="middle" textLength="47" lengthAdjust="spacingAndGlyphs">Time</text>
<text transform="translate(2612.5 385.4) rotate(-90)" font-size="21.5" text-anchor="middle" textLength="108.5" lengthAdjust="spacingAndGlyphs">Percentage</text>
<polygon points="2685,538.3 2685,271.9 2733.8,271.9 2782.7,271.9 2831.5,271.9 2880.4,271.9 2929.2,271.9 2978.1,271.9 3026.9,271.9 3075.8,271.9 3124.6,271.9 3173.5,271.9 3222.3,271.9 3271.2,271.9 3320,271.9 3368.9,271.9 3417.7,271.9 3466.6,271.9 3515.4,271.9 3564.3,233.9 3613.1,233.9 3613.1,538.3" fill="rgba(30,185,220,0.26)"/>
<polyline points="2685,271.9 2733.8,271.9 2782.7,271.9 2831.5,271.9 2880.4,271.9 2929.2,271.9 2978.1,271.9 3026.9,271.9 3075.8,271.9 3124.6,271.9 3173.5,271.9 3222.3,271.9 3271.2,271.9 3320,271.9 3368.9,271.9 3417.7,271.9 3466.6,271.9 3515.4,271.9 3564.3,233.9 3613.1,233.9" fill="none" stroke="#8fdcf0" stroke-width="3.5" stroke-linejoin="round"/>
<g fill="#00bfe0" stroke="#fff" stroke-width="3"><circle cx="2685" cy="271.9" r="5.4"/><circle cx="2733.8" cy="271.9" r="5.4"/><circle cx="2782.7" cy="271.9" r="5.4"/><circle cx="2831.5" cy="271.9" r="5.4"/><circle cx="2880.4" cy="271.9" r="5.4"/><circle cx="2929.2" cy="271.9" r="5.4"/><circle cx="2978.1" cy="271.9" r="5.4"/><circle cx="3026.9" cy="271.9" r="5.4"/><circle cx="3075.8" cy="271.9" r="5.4"/><circle cx="3124.6" cy="271.9" r="5.4"/><circle cx="3173.5" cy="271.9" r="5.4"/><circle cx="3222.3" cy="271.9" r="5.4"/><circle cx="3271.2" cy="271.9" r="5.4"/><circle cx="3320" cy="271.9" r="5.4"/><circle cx="3368.9" cy="271.9" r="5.4"/><circle cx="3417.7" cy="271.9" r="5.4"/><circle cx="3466.6" cy="271.9" r="5.4"/><circle cx="3515.4" cy="271.9" r="5.4"/><circle cx="3564.3" cy="233.9" r="5.4"/><circle cx="3613.1" cy="233.9" r="5.4"/></g>
<path d="M2660 539.1H3631.7" stroke="#e8e8e8" stroke-width="2"/>
</g>
<g>
<text x="120.5" y="722.3" font-size="30.6" textLength="559.4" lengthAdjust="spacingAndGlyphs">Partition Details of the Device(%)-D: (WMI)</text>
<text x="189.9" y="1066" font-size="20.4" text-anchor="end" textLength="9.9" lengthAdjust="spacingAndGlyphs">0</text>
<path d="M200 1000H1171.7" stroke="#e8e8e8" stroke-width="1.8"/>
<text x="189.9" y="1007.7" font-size="20.4" text-anchor="end" textLength="9.9" lengthAdjust="spacingAndGlyphs">1</text>
<path d="M200 941.7H1171.7" stroke="#e8e8e8" stroke-width="1.8"/>
<text x="189.9" y="949.4" font-size="20.4" text-anchor="end" textLength="9.9" lengthAdjust="spacingAndGlyphs">2</text>
<path d="M200 883.3H1171.7" stroke="#e8e8e8" stroke-width="1.8"/>
<text x="189.9" y="891" font-size="20.4" text-anchor="end" textLength="9.9" lengthAdjust="spacingAndGlyphs">3</text>
<path d="M200 825H1171.7" stroke="#e8e8e8" stroke-width="1.8"/>
<text x="189.9" y="832.7" font-size="20.4" text-anchor="end" textLength="9.9" lengthAdjust="spacingAndGlyphs">4</text>
<path d="M200 766.7H1171.7" stroke="#e8e8e8" stroke-width="1.8"/>
<text x="189.9" y="774.4" font-size="20.4" text-anchor="end" textLength="9.9" lengthAdjust="spacingAndGlyphs">5</text>
<path d="M205.9 752.6V1058.3" stroke="#e8e8e8" stroke-width="1.8"/>
<path d="M225 1058.3V1064.7" stroke="#e8e8e8" stroke-width="1.8"/>
<text x="225" y="1089.2" font-size="20.4" text-anchor="middle" textLength="47.6" lengthAdjust="spacingAndGlyphs">00:17</text>
<path d="M294.8 1058.3V1064.7" stroke="#e8e8e8" stroke-width="1.8"/>
<text x="294.8" y="1089.2" font-size="20.4" text-anchor="middle" textLength="47.6" lengthAdjust="spacingAndGlyphs">01:43</text>
<path d="M364.7 1058.3V1064.7" stroke="#e8e8e8" stroke-width="1.8"/>
<text x="364.7" y="1089.2" font-size="20.4" text-anchor="middle" textLength="47.6" lengthAdjust="spacingAndGlyphs">03:09</text>
<path d="M434.5 1058.3V1064.7" stroke="#e8e8e8" stroke-width="1.8"/>
<text x="434.5" y="1089.2" font-size="20.4" text-anchor="middle" textLength="47.6" lengthAdjust="spacingAndGlyphs">04:35</text>
<path d="M504.4 1058.3V1064.7" stroke="#e8e8e8" stroke-width="1.8"/>
<text x="504.4" y="1089.2" font-size="20.4" text-anchor="middle" textLength="47.6" lengthAdjust="spacingAndGlyphs">06:00</text>
<path d="M574.2 1058.3V1064.7" stroke="#e8e8e8" stroke-width="1.8"/>
<text x="574.2" y="1089.2" font-size="20.4" text-anchor="middle" textLength="47.6" lengthAdjust="spacingAndGlyphs">07:26</text>
<path d="M644.1 1058.3V1064.7" stroke="#e8e8e8" stroke-width="1.8"/>
<text x="644.1" y="1089.2" font-size="20.4" text-anchor="middle" textLength="47.6" lengthAdjust="spacingAndGlyphs">08:52</text>
<path d="M713.9 1058.3V1064.7" stroke="#e8e8e8" stroke-width="1.8"/>
<text x="713.9" y="1089.2" font-size="20.4" text-anchor="middle" textLength="47.6" lengthAdjust="spacingAndGlyphs">10:18</text>
<path d="M783.8 1058.3V1064.7" stroke="#e8e8e8" stroke-width="1.8"/>
<text x="783.8" y="1089.2" font-size="20.4" text-anchor="middle" textLength="47.6" lengthAdjust="spacingAndGlyphs">11:43</text>
<path d="M853.6 1058.3V1064.7" stroke="#e8e8e8" stroke-width="1.8"/>
<text x="853.6" y="1089.2" font-size="20.4" text-anchor="middle" textLength="47.6" lengthAdjust="spacingAndGlyphs">13:09</text>
<path d="M923.5 1058.3V1064.7" stroke="#e8e8e8" stroke-width="1.8"/>
<text x="923.5" y="1089.2" font-size="20.4" text-anchor="middle" textLength="47.6" lengthAdjust="spacingAndGlyphs">14:35</text>
<path d="M993.3 1058.3V1064.7" stroke="#e8e8e8" stroke-width="1.8"/>
<text x="993.3" y="1089.2" font-size="20.4" text-anchor="middle" textLength="47.6" lengthAdjust="spacingAndGlyphs">16:01</text>
<path d="M1063.2 1058.3V1064.7" stroke="#e8e8e8" stroke-width="1.8"/>
<text x="1063.2" y="1089.2" font-size="20.4" text-anchor="middle" textLength="47.6" lengthAdjust="spacingAndGlyphs">17:26</text>
<path d="M1133 1058.3V1064.7" stroke="#e8e8e8" stroke-width="1.8"/>
<text x="1133" y="1089.2" font-size="20.4" text-anchor="middle" textLength="47.6" lengthAdjust="spacingAndGlyphs">18:52</text>
<text x="688.6" y="1133.7" font-size="21.5" text-anchor="middle" textLength="47" lengthAdjust="spacingAndGlyphs">Time</text>
<text transform="translate(152.5 905.5) rotate(-90)" font-size="21.5" text-anchor="middle" textLength="108.5" lengthAdjust="spacingAndGlyphs">Percentage</text>
<polygon points="225,1058.3 225,766.7 273.8,766.7 322.7,766.7 371.5,766.7 420.4,766.7 469.2,766.7 518.1,766.7 566.9,766.7 615.8,766.7 664.6,766.7 713.5,766.7 762.3,766.7 811.2,766.7 860,766.7 908.9,766.7 957.7,766.7 1006.6,766.7 1055.4,766.7 1104.3,766.7 1153.1,766.7 1153.1,1058.3" fill="rgba(30,185,220,0.26)"/>
<polyline points="225,766.7 273.8,766.7 322.7,766.7 371.5,766.7 420.4,766.7 469.2,766.7 518.1,766.7 566.9,766.7 615.8,766.7 664.6,766.7 713.5,766.7 762.3,766.7 811.2,766.7 860,766.7 908.9,766.7 957.7,766.7 1006.6,766.7 1055.4,766.7 1104.3,766.7 1153.1,766.7" fill="none" stroke="#8fdcf0" stroke-width="3.5" stroke-linejoin="round"/>
<g fill="#00bfe0" stroke="#fff" stroke-width="3"><circle cx="225" cy="766.7" r="5.4"/><circle cx="273.8" cy="766.7" r="5.4"/><circle cx="322.7" cy="766.7" r="5.4"/><circle cx="371.5" cy="766.7" r="5.4"/><circle cx="420.4" cy="766.7" r="5.4"/><circle cx="469.2" cy="766.7" r="5.4"/><circle cx="518.1" cy="766.7" r="5.4"/><circle cx="566.9" cy="766.7" r="5.4"/><circle cx="615.8" cy="766.7" r="5.4"/><circle cx="664.6" cy="766.7" r="5.4"/><circle cx="713.5" cy="766.7" r="5.4"/><circle cx="762.3" cy="766.7" r="5.4"/><circle cx="811.2" cy="766.7" r="5.4"/><circle cx="860" cy="766.7" r="5.4"/><circle cx="908.9" cy="766.7" r="5.4"/><circle cx="957.7" cy="766.7" r="5.4"/><circle cx="1006.6" cy="766.7" r="5.4"/><circle cx="1055.4" cy="766.7" r="5.4"/><circle cx="1104.3" cy="766.7" r="5.4"/><circle cx="1153.1" cy="766.7" r="5.4"/></g>
<path d="M200 1059.1H1171.7" stroke="#e8e8e8" stroke-width="2"/>
</g>
<g>
<text x="1350.5" y="722.3" font-size="30.6" textLength="556.8" lengthAdjust="spacingAndGlyphs">Partition Details of the Device(%)-E: (WMI)</text>
<text x="1436.9" y="1066" font-size="20.4" text-anchor="end" textLength="9.9" lengthAdjust="spacingAndGlyphs">0</text>
<path d="M1447 985.4H2401.7" stroke="#e8e8e8" stroke-width="1.8"/>
<text x="1436.9" y="993.1" font-size="20.4" text-anchor="end" textLength="26" lengthAdjust="spacingAndGlyphs">0.5</text>
<path d="M1447 912.5H2401.7" stroke="#e8e8e8" stroke-width="1.8"/>
<text x="1436.9" y="920.2" font-size="20.4" text-anchor="end" textLength="9.9" lengthAdjust="spacingAndGlyphs">1</text>
<path d="M1447 839.6H2401.7" stroke="#e8e8e8" stroke-width="1.8"/>
<text x="1436.9" y="847.3" font-size="20.4" text-anchor="end" textLength="26" lengthAdjust="spacingAndGlyphs">1.5</text>
<path d="M1447 766.7H2401.7" stroke="#e8e8e8" stroke-width="1.8"/>
<text x="1436.9" y="774.4" font-size="20.4" text-anchor="end" textLength="9.9" lengthAdjust="spacingAndGlyphs">2</text>
<path d="M1452.9 752.6V1058.3" stroke="#e8e8e8" stroke-width="1.8"/>
<path d="M1471.4 1058.3V1064.7" stroke="#e8e8e8" stroke-width="1.8"/>
<text x="1471.4" y="1089.2" font-size="20.4" text-anchor="middle" textLength="47.6" lengthAdjust="spacingAndGlyphs">00:17</text>
<path d="M1541.2 1058.3V1064.7" stroke="#e8e8e8" stroke-width="1.8"/>
<text x="1541.2" y="1089.2" font-size="20.4" text-anchor="middle" textLength="47.6" lengthAdjust="spacingAndGlyphs">01:45</text>
<path d="M1611.1 1058.3V1064.7" stroke="#e8e8e8" stroke-width="1.8"/>
<text x="1611.1" y="1089.2" font-size="20.4" text-anchor="middle" textLength="47.6" lengthAdjust="spacingAndGlyphs">03:12</text>
<path d="M1680.9 1058.3V1064.7" stroke="#e8e8e8" stroke-width="1.8"/>
<text x="1680.9" y="1089.2" font-size="20.4" text-anchor="middle" textLength="47.6" lengthAdjust="spacingAndGlyphs">04:39</text>
<path d="M1750.8 1058.3V1064.7" stroke="#e8e8e8" stroke-width="1.8"/>
<text x="1750.8" y="1089.2" font-size="20.4" text-anchor="middle" textLength="47.6" lengthAdjust="spacingAndGlyphs">06:06</text>
<path d="M1820.6 1058.3V1064.7" stroke="#e8e8e8" stroke-width="1.8"/>
<text x="1820.6" y="1089.2" font-size="20.4" text-anchor="middle" textLength="47.6" lengthAdjust="spacingAndGlyphs">07:34</text>
<path d="M1890.5 1058.3V1064.7" stroke="#e8e8e8" stroke-width="1.8"/>
<text x="1890.5" y="1089.2" font-size="20.4" text-anchor="middle" textLength="47.6" lengthAdjust="spacingAndGlyphs">09:01</text>
<path d="M1960.3 1058.3V1064.7" stroke="#e8e8e8" stroke-width="1.8"/>
<text x="1960.3" y="1089.2" font-size="20.4" text-anchor="middle" textLength="47.6" lengthAdjust="spacingAndGlyphs">10:28</text>
<path d="M2030.2 1058.3V1064.7" stroke="#e8e8e8" stroke-width="1.8"/>
<text x="2030.2" y="1089.2" font-size="20.4" text-anchor="middle" textLength="47.6" lengthAdjust="spacingAndGlyphs">11:55</text>
<path d="M2100 1058.3V1064.7" stroke="#e8e8e8" stroke-width="1.8"/>
<text x="2100" y="1089.2" font-size="20.4" text-anchor="middle" textLength="47.6" lengthAdjust="spacingAndGlyphs">13:23</text>
<path d="M2169.9 1058.3V1064.7" stroke="#e8e8e8" stroke-width="1.8"/>
<text x="2169.9" y="1089.2" font-size="20.4" text-anchor="middle" textLength="47.6" lengthAdjust="spacingAndGlyphs">14:50</text>
<path d="M2239.7 1058.3V1064.7" stroke="#e8e8e8" stroke-width="1.8"/>
<text x="2239.7" y="1089.2" font-size="20.4" text-anchor="middle" textLength="47.6" lengthAdjust="spacingAndGlyphs">16:17</text>
<path d="M2309.6 1058.3V1064.7" stroke="#e8e8e8" stroke-width="1.8"/>
<text x="2309.6" y="1089.2" font-size="20.4" text-anchor="middle" textLength="47.6" lengthAdjust="spacingAndGlyphs">17:44</text>
<path d="M2379.4 1058.3V1064.7" stroke="#e8e8e8" stroke-width="1.8"/>
<text x="2379.4" y="1089.2" font-size="20.4" text-anchor="middle" textLength="47.6" lengthAdjust="spacingAndGlyphs">19:12</text>
<text x="1927.1" y="1133.7" font-size="21.5" text-anchor="middle" textLength="47" lengthAdjust="spacingAndGlyphs">Time</text>
<text transform="translate(1382.5 905.5) rotate(-90)" font-size="21.5" text-anchor="middle" textLength="108.5" lengthAdjust="spacingAndGlyphs">Percentage</text>
<polygon points="1471.4,1058.3 1471.4,766.7 1519.4,766.7 1567.4,766.7 1615.4,766.7 1663.4,766.7 1711.4,766.7 1759.4,766.7 1807.4,766.7 1855.4,766.7 1903.4,766.7 1951.4,766.7 1999.4,766.7 2047.4,766.7 2095.4,766.7 2143.4,766.7 2191.5,766.7 2239.5,766.7 2287.5,766.7 2335.5,766.7 2383.5,766.7 2383.5,1058.3" fill="rgba(30,185,220,0.26)"/>
<polyline points="1471.4,766.7 1519.4,766.7 1567.4,766.7 1615.4,766.7 1663.4,766.7 1711.4,766.7 1759.4,766.7 1807.4,766.7 1855.4,766.7 1903.4,766.7 1951.4,766.7 1999.4,766.7 2047.4,766.7 2095.4,766.7 2143.4,766.7 2191.5,766.7 2239.5,766.7 2287.5,766.7 2335.5,766.7 2383.5,766.7" fill="none" stroke="#8fdcf0" stroke-width="3.5" stroke-linejoin="round"/>
<g fill="#00bfe0" stroke="#fff" stroke-width="3"><circle cx="1471.4" cy="766.7" r="5.4"/><circle cx="1519.4" cy="766.7" r="5.4"/><circle cx="1567.4" cy="766.7" r="5.4"/><circle cx="1615.4" cy="766.7" r="5.4"/><circle cx="1663.4" cy="766.7" r="5.4"/><circle cx="1711.4" cy="766.7" r="5.4"/><circle cx="1759.4" cy="766.7" r="5.4"/><circle cx="1807.4" cy="766.7" r="5.4"/><circle cx="1855.4" cy="766.7" r="5.4"/><circle cx="1903.4" cy="766.7" r="5.4"/><circle cx="1951.4" cy="766.7" r="5.4"/><circle cx="1999.4" cy="766.7" r="5.4"/><circle cx="2047.4" cy="766.7" r="5.4"/><circle cx="2095.4" cy="766.7" r="5.4"/><circle cx="2143.4" cy="766.7" r="5.4"/><circle cx="2191.5" cy="766.7" r="5.4"/><circle cx="2239.5" cy="766.7" r="5.4"/><circle cx="2287.5" cy="766.7" r="5.4"/><circle cx="2335.5" cy="766.7" r="5.4"/><circle cx="2383.5" cy="766.7" r="5.4"/></g>
<path d="M1447 1059.1H2401.7" stroke="#e8e8e8" stroke-width="2"/>
</g>
<g>
<text x="2580.5" y="722.3" font-size="30.6" textLength="559.4" lengthAdjust="spacingAndGlyphs">Partition Details of the Device(%)-C: (WMI)</text>
<text x="2661" y="1066" font-size="20.4" text-anchor="end" textLength="9.9" lengthAdjust="spacingAndGlyphs">0</text>
<path d="M2671.1 956.8H3631.7" stroke="#e8e8e8" stroke-width="1.8"/>
<text x="2661" y="964.5" font-size="20.4" text-anchor="end" textLength="9.9" lengthAdjust="spacingAndGlyphs">5</text>
<path d="M2671.1 855.4H3631.7" stroke="#e8e8e8" stroke-width="1.8"/>
<text x="2661" y="863.1" font-size="20.4" text-anchor="end" textLength="20.9" lengthAdjust="spacingAndGlyphs">10</text>
<path d="M2671.1 753.9H3631.7" stroke="#e8e8e8" stroke-width="1.8"/>
<text x="2661" y="761.6" font-size="20.4" text-anchor="end" textLength="20.9" lengthAdjust="spacingAndGlyphs">15</text>
<path d="M2677 752.6V1058.3" stroke="#e8e8e8" stroke-width="1.8"/>
<path d="M2695.7 1058.3V1064.7" stroke="#e8e8e8" stroke-width="1.8"/>
<text x="2695.7" y="1089.2" font-size="20.4" text-anchor="middle" textLength="47.6" lengthAdjust="spacingAndGlyphs">00:17</text>
<path d="M2765.5 1058.3V1064.7" stroke="#e8e8e8" stroke-width="1.8"/>
<text x="2765.5" y="1089.2" font-size="20.4" text-anchor="middle" textLength="47.6" lengthAdjust="spacingAndGlyphs">01:44</text>
<path d="M2835.4 1058.3V1064.7" stroke="#e8e8e8" stroke-width="1.8"/>
<text x="2835.4" y="1089.2" font-size="20.4" text-anchor="middle" textLength="47.6" lengthAdjust="spacingAndGlyphs">03:11</text>
<path d="M2905.2 1058.3V1064.7" stroke="#e8e8e8" stroke-width="1.8"/>
<text x="2905.2" y="1089.2" font-size="20.4" text-anchor="middle" textLength="47.6" lengthAdjust="spacingAndGlyphs">04:38</text>
<path d="M2975.1 1058.3V1064.7" stroke="#e8e8e8" stroke-width="1.8"/>
<text x="2975.1" y="1089.2" font-size="20.4" text-anchor="middle" textLength="47.6" lengthAdjust="spacingAndGlyphs">06:04</text>
<path d="M3044.9 1058.3V1064.7" stroke="#e8e8e8" stroke-width="1.8"/>
<text x="3044.9" y="1089.2" font-size="20.4" text-anchor="middle" textLength="47.6" lengthAdjust="spacingAndGlyphs">07:31</text>
<path d="M3114.8 1058.3V1064.7" stroke="#e8e8e8" stroke-width="1.8"/>
<text x="3114.8" y="1089.2" font-size="20.4" text-anchor="middle" textLength="47.6" lengthAdjust="spacingAndGlyphs">08:58</text>
<path d="M3184.6 1058.3V1064.7" stroke="#e8e8e8" stroke-width="1.8"/>
<text x="3184.6" y="1089.2" font-size="20.4" text-anchor="middle" textLength="47.6" lengthAdjust="spacingAndGlyphs">10:25</text>
<path d="M3254.5 1058.3V1064.7" stroke="#e8e8e8" stroke-width="1.8"/>
<text x="3254.5" y="1089.2" font-size="20.4" text-anchor="middle" textLength="47.6" lengthAdjust="spacingAndGlyphs">11:52</text>
<path d="M3324.3 1058.3V1064.7" stroke="#e8e8e8" stroke-width="1.8"/>
<text x="3324.3" y="1089.2" font-size="20.4" text-anchor="middle" textLength="47.6" lengthAdjust="spacingAndGlyphs">13:18</text>
<path d="M3394.2 1058.3V1064.7" stroke="#e8e8e8" stroke-width="1.8"/>
<text x="3394.2" y="1089.2" font-size="20.4" text-anchor="middle" textLength="47.6" lengthAdjust="spacingAndGlyphs">14:45</text>
<path d="M3464 1058.3V1064.7" stroke="#e8e8e8" stroke-width="1.8"/>
<text x="3464" y="1089.2" font-size="20.4" text-anchor="middle" textLength="47.6" lengthAdjust="spacingAndGlyphs">16:12</text>
<path d="M3533.9 1058.3V1064.7" stroke="#e8e8e8" stroke-width="1.8"/>
<text x="3533.9" y="1089.2" font-size="20.4" text-anchor="middle" textLength="47.6" lengthAdjust="spacingAndGlyphs">17:39</text>
<path d="M3603.7 1058.3V1064.7" stroke="#e8e8e8" stroke-width="1.8"/>
<text x="3603.7" y="1089.2" font-size="20.4" text-anchor="middle" textLength="47.6" lengthAdjust="spacingAndGlyphs">19:05</text>
<text x="3154.1" y="1133.7" font-size="21.5" text-anchor="middle" textLength="47" lengthAdjust="spacingAndGlyphs">Time</text>
<text transform="translate(2612.5 905.5) rotate(-90)" font-size="21.5" text-anchor="middle" textLength="108.5" lengthAdjust="spacingAndGlyphs">Percentage</text>
<polygon points="2695.7,1058.3 2695.7,794.5 2744,794.5 2792.3,794.5 2840.6,794.5 2888.9,794.5 2937.2,794.5 2985.5,794.5 3033.8,794.5 3082.1,794.5 3130.4,794.5 3178.7,794.5 3227,794.5 3275.3,794.5 3323.6,794.5 3371.9,794.5 3420.2,794.5 3468.5,794.5 3516.8,794.5 3565.1,753.9 3613.4,753.9 3613.4,1058.3" fill="rgba(30,185,220,0.26)"/>
<polyline points="2695.7,794.5 2744,794.5 2792.3,794.5 2840.6,794.5 2888.9,794.5 2937.2,794.5 2985.5,794.5 3033.8,794.5 3082.1,794.5 3130.4,794.5 3178.7,794.5 3227,794.5 3275.3,794.5 3323.6,794.5 3371.9,794.5 3420.2,794.5 3468.5,794.5 3516.8,794.5 3565.1,753.9 3613.4,753.9" fill="none" stroke="#8fdcf0" stroke-width="3.5" stroke-linejoin="round"/>
<g fill="#00bfe0" stroke="#fff" stroke-width="3"><circle cx="2695.7" cy="794.5" r="5.4"/><circle cx="2744" cy="794.5" r="5.4"/><circle cx="2792.3" cy="794.5" r="5.4"/><circle cx="2840.6" cy="794.5" r="5.4"/><circle cx="2888.9" cy="794.5" r="5.4"/><circle cx="2937.2" cy="794.5" r="5.4"/><circle cx="2985.5" cy="794.5" r="5.4"/><circle cx="3033.8" cy="794.5" r="5.4"/><circle cx="3082.1" cy="794.5" r="5.4"/><circle cx="3130.4" cy="794.5" r="5.4"/><circle cx="3178.7" cy="794.5" r="5.4"/><circle cx="3227" cy="794.5" r="5.4"/><circle cx="3275.3" cy="794.5" r="5.4"/><circle cx="3323.6" cy="794.5" r="5.4"/><circle cx="3371.9" cy="794.5" r="5.4"/><circle cx="3420.2" cy="794.5" r="5.4"/><circle cx="3468.5" cy="794.5" r="5.4"/><circle cx="3516.8" cy="794.5" r="5.4"/><circle cx="3565.1" cy="753.9" r="5.4"/><circle cx="3613.4" cy="753.9" r="5.4"/></g>
<path d="M2671.1 1059.1H3631.7" stroke="#e8e8e8" stroke-width="2"/>
</g>
<g>
<text x="120.5" y="1242.3" font-size="30.6" textLength="436.4" lengthAdjust="spacingAndGlyphs">CPU Utilization Per Core (VIWMI)</text>
<text x="201" y="1586" font-size="20.4" text-anchor="end" textLength="9.9" lengthAdjust="spacingAndGlyphs">0</text>
<path d="M211.1 1487.1H1171.7" stroke="#e8e8e8" stroke-width="1.8"/>
<text x="201" y="1494.8" font-size="20.4" text-anchor="end" textLength="20.9" lengthAdjust="spacingAndGlyphs">20</text>
<path d="M211.1 1395.8H1171.7" stroke="#e8e8e8" stroke-width="1.8"/>
<text x="201" y="1403.5" font-size="20.4" text-anchor="end" textLength="20.9" lengthAdjust="spacingAndGlyphs">40</text>
<path d="M211.1 1304.6H1171.7" stroke="#e8e8e8" stroke-width="1.8"/>
<text x="201" y="1312.3" font-size="20.4" text-anchor="end" textLength="20.9" lengthAdjust="spacingAndGlyphs">60</text>
<path d="M217 1272.6V1578.3" stroke="#e8e8e8" stroke-width="1.8"/>
<path d="M235.7 1578.3V1584.7" stroke="#e8e8e8" stroke-width="1.8"/>
<text x="235.7" y="1609.2" font-size="20.4" text-anchor="middle" textLength="47.6" lengthAdjust="spacingAndGlyphs">00:03</text>
<path d="M305.5 1578.3V1584.7" stroke="#e8e8e8" stroke-width="1.8"/>
<text x="305.5" y="1609.2" font-size="20.4" text-anchor="middle" textLength="47.6" lengthAdjust="spacingAndGlyphs">01:35</text>
<path d="M375.4 1578.3V1584.7" stroke="#e8e8e8" stroke-width="1.8"/>
<text x="375.4" y="1609.2" font-size="20.4" text-anchor="middle" textLength="47.6" lengthAdjust="spacingAndGlyphs">03:07</text>
<path d="M445.2 1578.3V1584.7" stroke="#e8e8e8" stroke-width="1.8"/>
<text x="445.2" y="1609.2" font-size="20.4" text-anchor="middle" textLength="47.6" lengthAdjust="spacingAndGlyphs">04:38</text>
<path d="M515.1 1578.3V1584.7" stroke="#e8e8e8" stroke-width="1.8"/>
<text x="515.1" y="1609.2" font-size="20.4" text-anchor="middle" textLength="47.6" lengthAdjust="spacingAndGlyphs">06:10</text>
<path d="M584.9 1578.3V1584.7" stroke="#e8e8e8" stroke-width="1.8"/>
<text x="584.9" y="1609.2" font-size="20.4" text-anchor="middle" textLength="47.6" lengthAdjust="spacingAndGlyphs">07:42</text>
<path d="M654.8 1578.3V1584.7" stroke="#e8e8e8" stroke-width="1.8"/>
<text x="654.8" y="1609.2" font-size="20.4" text-anchor="middle" textLength="47.6" lengthAdjust="spacingAndGlyphs">09:14</text>
<path d="M724.6 1578.3V1584.7" stroke="#e8e8e8" stroke-width="1.8"/>
<text x="724.6" y="1609.2" font-size="20.4" text-anchor="middle" textLength="47.6" lengthAdjust="spacingAndGlyphs">10:45</text>
<path d="M794.5 1578.3V1584.7" stroke="#e8e8e8" stroke-width="1.8"/>
<text x="794.5" y="1609.2" font-size="20.4" text-anchor="middle" textLength="47.6" lengthAdjust="spacingAndGlyphs">12:17</text>
<path d="M864.3 1578.3V1584.7" stroke="#e8e8e8" stroke-width="1.8"/>
<text x="864.3" y="1609.2" font-size="20.4" text-anchor="middle" textLength="47.6" lengthAdjust="spacingAndGlyphs">13:49</text>
<path d="M934.2 1578.3V1584.7" stroke="#e8e8e8" stroke-width="1.8"/>
<text x="934.2" y="1609.2" font-size="20.4" text-anchor="middle" textLength="47.6" lengthAdjust="spacingAndGlyphs">15:20</text>
<path d="M1004 1578.3V1584.7" stroke="#e8e8e8" stroke-width="1.8"/>
<text x="1004" y="1609.2" font-size="20.4" text-anchor="middle" textLength="47.6" lengthAdjust="spacingAndGlyphs">16:52</text>
<path d="M1073.9 1578.3V1584.7" stroke="#e8e8e8" stroke-width="1.8"/>
<text x="1073.9" y="1609.2" font-size="20.4" text-anchor="middle" textLength="47.6" lengthAdjust="spacingAndGlyphs">18:24</text>
<path d="M1143.7 1578.3V1584.7" stroke="#e8e8e8" stroke-width="1.8"/>
<text x="1143.7" y="1609.2" font-size="20.4" text-anchor="middle" textLength="47.6" lengthAdjust="spacingAndGlyphs">19:56</text>
<text x="694.1" y="1653.7" font-size="21.5" text-anchor="middle" textLength="47" lengthAdjust="spacingAndGlyphs">Time</text>
<text transform="translate(152.5 1425.4) rotate(-90)" font-size="21.5" text-anchor="middle">%</text>
<polygon points="235.7,1578.3 235.7,1564.6 239.5,1569.2 243.4,1578.3 247.2,1546.4 251.1,1578.3 254.9,1541.8 258.7,1569.2 262.6,1569.2 266.4,1578.3 270.3,1550.9 274.1,1578.3 277.9,1541.8 281.8,1573.7 285.6,1550.9 289.5,1550.9 293.3,1564.6 297.1,1573.7 301,1578.3 304.8,1560.1 308.7,1578.3 312.5,1569.2 316.3,1564.6 320.2,1578.3 324,1573.7 327.8,1578.3 331.7,1555.5 335.5,1578.3 339.4,1578.3 343.2,1578.3 347,1546.4 350.9,1564.6 354.7,1569.2 358.6,1550.9 362.4,1578.3 366.2,1569.2 370.1,1569.2 373.9,1578.3 377.8,1578.3 381.6,1546.4 385.4,1578.3 389.3,1578.3 393.1,1573.7 397,1573.7 400.8,1546.4 404.6,1578.3 408.5,1569.2 412.3,1541.8 416.2,1569.2 420,1578.3 423.8,1578.3 427.7,1573.7 431.5,1578.3 435.4,1546.4 439.2,1569.2 443,1578.3 446.9,1578.3 450.7,1555.5 454.6,1537.2 458.4,1573.7 462.2,1573.7 466.1,1578.3 469.9,1578.3 473.8,1541.8 477.6,1578.3 481.4,1560.1 485.3,1573.7 489.1,1578.3 492.9,1573.7 496.8,1578.3 500.6,1573.7 504.5,1569.2 508.3,1578.3 512.1,1578.3 516,1578.3 519.8,1578.3 523.7,1573.7 527.5,1573.7 531.3,1573.7 535.2,1569.2 539,1578.3 542.9,1578.3 546.7,1560.1 550.5,1578.3 554.4,1578.3 558.2,1578.3 562.1,1578.3 565.9,1550.9 569.7,1564.6 573.6,1578.3 577.4,1573.7 581.3,1569.2 585.1,1578.3 588.9,1569.2 592.8,1578.3 596.6,1550.9 600.5,1560.1 604.3,1550.9 608.1,1564.6 612,1578.3 615.8,1573.7 619.7,1573.7 623.5,1569.2 627.3,1578.3 631.2,1569.2 635,1578.3 638.9,1541.8 642.7,1541.8 646.5,1569.2 650.4,1578.3 654.2,1541.8 658.1,1578.3 661.9,1569.2 665.7,1573.7 669.6,1573.7 673.4,1573.7 677.2,1578.3 681.1,1550.9 684.9,1569.2 688.8,1573.7 692.6,1578.3 696.4,1546.4 700.3,1578.3 704.1,1532.7 708,1532.7 711.8,1546.4 715.6,1578.3 719.5,1578.3 723.3,1555.5 727.2,1578.3 731,1541.8 734.8,1569.2 738.7,1578.3 742.5,1578.3 746.4,1578.3 750.2,1569.2 754,1546.4 757.9,1573.7 761.7,1573.7 765.6,1569.2 769.4,1578.3 773.2,1578.3 777.1,1578.3 780.9,1569.2 784.8,1573.7 788.6,1578.3 792.4,1560.1 796.3,1578.3 800.1,1578.3 804,1541.8 807.8,1578.3 811.6,1569.2 815.5,1569.2 819.3,1564.6 823.2,1578.3 827,1573.7 830.8,1573.7 834.7,1578.3 838.5,1578.3 842.4,1578.3 846.2,1578.3 850,1578.3 853.9,1578.3 857.7,1541.8 861.5,1578.3 865.4,1573.7 869.2,1541.8 873.1,1546.4 876.9,1578.3 880.7,1578.3 884.6,1555.5 888.4,1578.3 892.3,1573.7 896.1,1578.3 899.9,1569.2 903.8,1569.2 907.6,1578.3 911.5,1573.7 915.3,1573.7 919.1,1564.6 923,1564.6 926.8,1569.2 930.7,1560.1 934.5,1578.3 938.3,1578.3 942.2,1560.1 946,1578.3 949.9,1578.3 953.7,1569.2 957.5,1578.3 961.4,1573.7 965.2,1573.7 969.1,1573.7 972.9,1560.1 976.7,1573.7 980.6,1569.2 984.4,1578.3 988.3,1573.7 992.1,1578.3 995.9,1564.6 999.8,1578.3 1003.6,1578.3 1007.5,1569.2 1011.3,1578.3 1015.1,1569.2 1019,1573.7 1022.8,1569.2 1026.6,1578.3 1030.5,1578.3 1034.3,1578.3 1038.2,1573.7 1042,1569.2 1045.8,1578.3 1049.7,1578.3 1053.5,1564.6 1057.4,1573.7 1061.2,1578.3 1065,1573.7 1068.9,1578.3 1072.7,1569.2 1076.6,1578.3 1080.4,1569.2 1084.2,1578.3 1088.1,1578.3 1091.9,1578.3 1095.8,1573.7 1099.6,1573.7 1103.4,1569.2 1107.3,1578.3 1111.1,1578.3 1115,1569.2 1118.8,1578.3 1122.6,1569.2 1126.5,1578.3 1130.3,1578.3 1134.2,1573.7 1138,1573.7 1141.8,1569.2 1145.7,1564.6 1149.5,1573.7 1153.4,1578.3 1153.4,1578.3" fill="#6fd3e6" fill-opacity="0.4"/>
<polyline points="235.7,1564.6 239.5,1569.2 243.4,1578.3 247.2,1546.4 251.1,1578.3 254.9,1541.8 258.7,1569.2 262.6,1569.2 266.4,1578.3 270.3,1550.9 274.1,1578.3 277.9,1541.8 281.8,1573.7 285.6,1550.9 289.5,1550.9 293.3,1564.6 297.1,1573.7 301,1578.3 304.8,1560.1 308.7,1578.3 312.5,1569.2 316.3,1564.6 320.2,1578.3 324,1573.7 327.8,1578.3 331.7,1555.5 335.5,1578.3 339.4,1578.3 343.2,1578.3 347,1546.4 350.9,1564.6 354.7,1569.2 358.6,1550.9 362.4,1578.3 366.2,1569.2 370.1,1569.2 373.9,1578.3 377.8,1578.3 381.6,1546.4 385.4,1578.3 389.3,1578.3 393.1,1573.7 397,1573.7 400.8,1546.4 404.6,1578.3 408.5,1569.2 412.3,1541.8 416.2,1569.2 420,1578.3 423.8,1578.3 427.7,1573.7 431.5,1578.3 435.4,1546.4 439.2,1569.2 443,1578.3 446.9,1578.3 450.7,1555.5 454.6,1537.2 458.4,1573.7 462.2,1573.7 466.1,1578.3 469.9,1578.3 473.8,1541.8 477.6,1578.3 481.4,1560.1 485.3,1573.7 489.1,1578.3 492.9,1573.7 496.8,1578.3 500.6,1573.7 504.5,1569.2 508.3,1578.3 512.1,1578.3 516,1578.3 519.8,1578.3 523.7,1573.7 527.5,1573.7 531.3,1573.7 535.2,1569.2 539,1578.3 542.9,1578.3 546.7,1560.1 550.5,1578.3 554.4,1578.3 558.2,1578.3 562.1,1578.3 565.9,1550.9 569.7,1564.6 573.6,1578.3 577.4,1573.7 581.3,1569.2 585.1,1578.3 588.9,1569.2 592.8,1578.3 596.6,1550.9 600.5,1560.1 604.3,1550.9 608.1,1564.6 612,1578.3 615.8,1573.7 619.7,1573.7 623.5,1569.2 627.3,1578.3 631.2,1569.2 635,1578.3 638.9,1541.8 642.7,1541.8 646.5,1569.2 650.4,1578.3 654.2,1541.8 658.1,1578.3 661.9,1569.2 665.7,1573.7 669.6,1573.7 673.4,1573.7 677.2,1578.3 681.1,1550.9 684.9,1569.2 688.8,1573.7 692.6,1578.3 696.4,1546.4 700.3,1578.3 704.1,1532.7 708,1532.7 711.8,1546.4 715.6,1578.3 719.5,1578.3 723.3,1555.5 727.2,1578.3 731,1541.8 734.8,1569.2 738.7,1578.3 742.5,1578.3 746.4,1578.3 750.2,1569.2 754,1546.4 757.9,1573.7 761.7,1573.7 765.6,1569.2 769.4,1578.3 773.2,1578.3 777.1,1578.3 780.9,1569.2 784.8,1573.7 788.6,1578.3 792.4,1560.1 796.3,1578.3 800.1,1578.3 804,1541.8 807.8,1578.3 811.6,1569.2 815.5,1569.2 819.3,1564.6 823.2,1578.3 827,1573.7 830.8,1573.7 834.7,1578.3 838.5,1578.3 842.4,1578.3 846.2,1578.3 850,1578.3 853.9,1578.3 857.7,1541.8 861.5,1578.3 865.4,1573.7 869.2,1541.8 873.1,1546.4 876.9,1578.3 880.7,1578.3 884.6,1555.5 888.4,1578.3 892.3,1573.7 896.1,1578.3 899.9,1569.2 903.8,1569.2 907.6,1578.3 911.5,1573.7 915.3,1573.7 919.1,1564.6 923,1564.6 926.8,1569.2 930.7,1560.1 934.5,1578.3 938.3,1578.3 942.2,1560.1 946,1578.3 949.9,1578.3 953.7,1569.2 957.5,1578.3 961.4,1573.7 965.2,1573.7 969.1,1573.7 972.9,1560.1 976.7,1573.7 980.6,1569.2 984.4,1578.3 988.3,1573.7 992.1,1578.3 995.9,1564.6 999.8,1578.3 1003.6,1578.3 1007.5,1569.2 1011.3,1578.3 1015.1,1569.2 1019,1573.7 1022.8,1569.2 1026.6,1578.3 1030.5,1578.3 1034.3,1578.3 1038.2,1573.7 1042,1569.2 1045.8,1578.3 1049.7,1578.3 1053.5,1564.6 1057.4,1573.7 1061.2,1578.3 1065,1573.7 1068.9,1578.3 1072.7,1569.2 1076.6,1578.3 1080.4,1569.2 1084.2,1578.3 1088.1,1578.3 1091.9,1578.3 1095.8,1573.7 1099.6,1573.7 1103.4,1569.2 1107.3,1578.3 1111.1,1578.3 1115,1569.2 1118.8,1578.3 1122.6,1569.2 1126.5,1578.3 1130.3,1578.3 1134.2,1573.7 1138,1573.7 1141.8,1569.2 1145.7,1564.6 1149.5,1573.7 1153.4,1578.3" fill="none" stroke="#6fd3e6" stroke-width="3.7" stroke-linejoin="bevel" stroke-opacity="0.85"/>
<polygon points="235.7,1578.3 235.7,1537.2 239.5,1578.3 243.4,1578.3 247.2,1555.5 251.1,1578.3 254.9,1395.8 258.7,1537.2 262.6,1578.3 266.4,1578.3 270.3,1578.3 274.1,1578.3 277.9,1541.8 281.8,1541.8 285.6,1573.7 289.5,1578.3 293.3,1578.3 297.1,1578.3 301,1578.3 304.8,1578.3 308.7,1523.6 312.5,1578.3 316.3,1578.3 320.2,1578.3 324,1578.3 327.8,1578.3 331.7,1386.7 335.5,1578.3 339.4,1569.2 343.2,1578.3 347,1578.3 350.9,1569.2 354.7,1550.9 358.6,1573.7 362.4,1578.3 366.2,1537.2 370.1,1578.3 373.9,1537.2 377.8,1528.1 381.6,1578.3 385.4,1578.3 389.3,1432.3 393.1,1541.8 397,1578.3 400.8,1541.8 404.6,1560.1 408.5,1573.7 412.3,1578.3 416.2,1578.3 420,1578.3 423.8,1578.3 427.7,1546.4 431.5,1578.3 435.4,1537.2 439.2,1573.7 443,1578.3 446.9,1560.1 450.7,1569.2 454.6,1578.3 458.4,1569.2 462.2,1537.2 466.1,1578.3 469.9,1573.7 473.8,1564.6 477.6,1578.3 481.4,1578.3 485.3,1555.5 489.1,1564.6 492.9,1573.7 496.8,1573.7 500.6,1578.3 504.5,1446 508.3,1537.2 512.1,1555.5 516,1573.7 519.8,1578.3 523.7,1578.3 527.5,1569.2 531.3,1573.7 535.2,1578.3 539,1550.9 542.9,1564.6 546.7,1573.7 550.5,1564.6 554.4,1578.3 558.2,1578.3 562.1,1569.2 565.9,1578.3 569.7,1578.3 573.6,1555.5 577.4,1578.3 581.3,1578.3 585.1,1578.3 588.9,1564.6 592.8,1573.7 596.6,1573.7 600.5,1578.3 604.3,1569.2 608.1,1573.7 612,1573.7 615.8,1573.7 619.7,1573.7 623.5,1441.4 627.3,1569.2 631.2,1569.2 635,1578.3 638.9,1564.6 642.7,1578.3 646.5,1573.7 650.4,1578.3 654.2,1578.3 658.1,1564.6 661.9,1578.3 665.7,1578.3 669.6,1578.3 673.4,1578.3 677.2,1578.3 681.1,1564.6 684.9,1573.7 688.8,1573.7 692.6,1569.2 696.4,1560.1 700.3,1578.3 704.1,1578.3 708,1578.3 711.8,1573.7 715.6,1578.3 719.5,1564.6 723.3,1578.3 727.2,1569.2 731,1564.6 734.8,1573.7 738.7,1354.8 742.5,1578.3 746.4,1578.3 750.2,1578.3 754,1573.7 757.9,1546.4 761.7,1560.1 765.6,1578.3 769.4,1578.3 773.2,1487.1 777.1,1569.2 780.9,1578.3 784.8,1578.3 788.6,1569.2 792.4,1555.5 796.3,1560.1 800.1,1564.6 804,1578.3 807.8,1573.7 811.6,1578.3 815.5,1537.2 819.3,1578.3 823.2,1564.6 827,1578.3 830.8,1573.7 834.7,1546.4 838.5,1578.3 842.4,1578.3 846.2,1569.2 850,1550.9 853.9,1550.9 857.7,1578.3 861.5,1550.9 865.4,1573.7 869.2,1573.7 873.1,1569.2 876.9,1578.3 880.7,1578.3 884.6,1569.2 888.4,1578.3 892.3,1477.9 896.1,1578.3 899.9,1541.8 903.8,1564.6 907.6,1555.5 911.5,1573.7 915.3,1573.7 919.1,1573.7 923,1569.2 926.8,1569.2 930.7,1578.3 934.5,1578.3 938.3,1573.7 942.2,1578.3 946,1290.9 949.9,1578.3 953.7,1573.7 957.5,1573.7 961.4,1573.7 965.2,1578.3 969.1,1578.3 972.9,1555.5 976.7,1569.2 980.6,1578.3 984.4,1573.7 988.3,1578.3 992.1,1569.2 995.9,1578.3 999.8,1578.3 1003.6,1578.3 1007.5,1578.3 1011.3,1578.3 1015.1,1578.3 1019,1569.2 1022.8,1560.1 1026.6,1564.6 1030.5,1569.2 1034.3,1573.7 1038.2,1578.3 1042,1578.3 1045.8,1573.7 1049.7,1573.7 1053.5,1555.5 1057.4,1573.7 1061.2,1509.9 1065,1569.2 1068.9,1578.3 1072.7,1555.5 1076.6,1555.5 1080.4,1573.7 1084.2,1578.3 1088.1,1564.6 1091.9,1569.2 1095.8,1578.3 1099.6,1573.7 1103.4,1578.3 1107.3,1569.2 1111.1,1573.7 1115,1578.3 1118.8,1569.2 1122.6,1578.3 1126.5,1569.2 1130.3,1578.3 1134.2,1578.3 1138,1564.6 1141.8,1569.2 1145.7,1578.3 1149.5,1573.7 1153.4,1560.1 1153.4,1578.3" fill="#6cb0e6" fill-opacity="0.4"/>
<polyline points="235.7,1537.2 239.5,1578.3 243.4,1578.3 247.2,1555.5 251.1,1578.3 254.9,1395.8 258.7,1537.2 262.6,1578.3 266.4,1578.3 270.3,1578.3 274.1,1578.3 277.9,1541.8 281.8,1541.8 285.6,1573.7 289.5,1578.3 293.3,1578.3 297.1,1578.3 301,1578.3 304.8,1578.3 308.7,1523.6 312.5,1578.3 316.3,1578.3 320.2,1578.3 324,1578.3 327.8,1578.3 331.7,1386.7 335.5,1578.3 339.4,1569.2 343.2,1578.3 347,1578.3 350.9,1569.2 354.7,1550.9 358.6,1573.7 362.4,1578.3 366.2,1537.2 370.1,1578.3 373.9,1537.2 377.8,1528.1 381.6,1578.3 385.4,1578.3 389.3,1432.3 393.1,1541.8 397,1578.3 400.8,1541.8 404.6,1560.1 408.5,1573.7 412.3,1578.3 416.2,1578.3 420,1578.3 423.8,1578.3 427.7,1546.4 431.5,1578.3 435.4,1537.2 439.2,1573.7 443,1578.3 446.9,1560.1 450.7,1569.2 454.6,1578.3 458.4,1569.2 462.2,1537.2 466.1,1578.3 469.9,1573.7 473.8,1564.6 477.6,1578.3 481.4,1578.3 485.3,1555.5 489.1,1564.6 492.9,1573.7 496.8,1573.7 500.6,1578.3 504.5,1446 508.3,1537.2 512.1,1555.5 516,1573.7 519.8,1578.3 523.7,1578.3 527.5,1569.2 531.3,1573.7 535.2,1578.3 539,1550.9 542.9,1564.6 546.7,1573.7 550.5,1564.6 554.4,1578.3 558.2,1578.3 562.1,1569.2 565.9,1578.3 569.7,1578.3 573.6,1555.5 577.4,1578.3 581.3,1578.3 585.1,1578.3 588.9,1564.6 592.8,1573.7 596.6,1573.7 600.5,1578.3 604.3,1569.2 608.1,1573.7 612,1573.7 615.8,1573.7 619.7,1573.7 623.5,1441.4 627.3,1569.2 631.2,1569.2 635,1578.3 638.9,1564.6 642.7,1578.3 646.5,1573.7 650.4,1578.3 654.2,1578.3 658.1,1564.6 661.9,1578.3 665.7,1578.3 669.6,1578.3 673.4,1578.3 677.2,1578.3 681.1,1564.6 684.9,1573.7 688.8,1573.7 692.6,1569.2 696.4,1560.1 700.3,1578.3 704.1,1578.3 708,1578.3 711.8,1573.7 715.6,1578.3 719.5,1564.6 723.3,1578.3 727.2,1569.2 731,1564.6 734.8,1573.7 738.7,1354.8 742.5,1578.3 746.4,1578.3 750.2,1578.3 754,1573.7 757.9,1546.4 761.7,1560.1 765.6,1578.3 769.4,1578.3 773.2,1487.1 777.1,1569.2 780.9,1578.3 784.8,1578.3 788.6,1569.2 792.4,1555.5 796.3,1560.1 800.1,1564.6 804,1578.3 807.8,1573.7 811.6,1578.3 815.5,1537.2 819.3,1578.3 823.2,1564.6 827,1578.3 830.8,1573.7 834.7,1546.4 838.5,1578.3 842.4,1578.3 846.2,1569.2 850,1550.9 853.9,1550.9 857.7,1578.3 861.5,1550.9 865.4,1573.7 869.2,1573.7 873.1,1569.2 876.9,1578.3 880.7,1578.3 884.6,1569.2 888.4,1578.3 892.3,1477.9 896.1,1578.3 899.9,1541.8 903.8,1564.6 907.6,1555.5 911.5,1573.7 915.3,1573.7 919.1,1573.7 923,1569.2 926.8,1569.2 930.7,1578.3 934.5,1578.3 938.3,1573.7 942.2,1578.3 946,1290.9 949.9,1578.3 953.7,1573.7 957.5,1573.7 961.4,1573.7 965.2,1578.3 969.1,1578.3 972.9,1555.5 976.7,1569.2 980.6,1578.3 984.4,1573.7 988.3,1578.3 992.1,1569.2 995.9,1578.3 999.8,1578.3 1003.6,1578.3 1007.5,1578.3 1011.3,1578.3 1015.1,1578.3 1019,1569.2 1022.8,1560.1 1026.6,1564.6 1030.5,1569.2 1034.3,1573.7 1038.2,1578.3 1042,1578.3 1045.8,1573.7 1049.7,1573.7 1053.5,1555.5 1057.4,1573.7 1061.2,1509.9 1065,1569.2 1068.9,1578.3 1072.7,1555.5 1076.6,1555.5 1080.4,1573.7 1084.2,1578.3 1088.1,1564.6 1091.9,1569.2 1095.8,1578.3 1099.6,1573.7 1103.4,1578.3 1107.3,1569.2 1111.1,1573.7 1115,1578.3 1118.8,1569.2 1122.6,1578.3 1126.5,1569.2 1130.3,1578.3 1134.2,1578.3 1138,1564.6 1141.8,1569.2 1145.7,1578.3 1149.5,1573.7 1153.4,1560.1" fill="none" stroke="#6cb0e6" stroke-width="3.7" stroke-linejoin="bevel" stroke-opacity="0.85"/>
<polygon points="235.7,1578.3 235.7,1564.6 239.5,1555.5 243.4,1541.8 247.2,1546.4 251.1,1532.7 254.9,1560.1 258.7,1487.1 262.6,1550.9 266.4,1546.4 270.3,1546.4 274.1,1519 277.9,1550.9 281.8,1519 285.6,1555.5 289.5,1546.4 293.3,1560.1 297.1,1564.6 301,1541.8 304.8,1546.4 308.7,1555.5 312.5,1560.1 316.3,1500.8 320.2,1550.9 324,1564.6 327.8,1550.9 331.7,1537.2 335.5,1546.4 339.4,1550.9 343.2,1555.5 347,1546.4 350.9,1550.9 354.7,1532.7 358.6,1550.9 362.4,1541.8 366.2,1560.1 370.1,1546.4 373.9,1564.6 377.8,1546.4 381.6,1555.5 385.4,1564.6 389.3,1555.5 393.1,1546.4 397,1550.9 400.8,1541.8 404.6,1564.6 408.5,1505.3 412.3,1550.9 416.2,1537.2 420,1564.6 423.8,1555.5 427.7,1560.1 431.5,1546.4 435.4,1509.9 439.2,1564.6 443,1532.7 446.9,1564.6 450.7,1564.6 454.6,1532.7 458.4,1550.9 462.2,1523.6 466.1,1560.1 469.9,1550.9 473.8,1560.1 477.6,1532.7 481.4,1564.6 485.3,1509.9 489.1,1564.6 492.9,1509.9 496.8,1555.5 500.6,1564.6 504.5,1555.5 508.3,1564.6 512.1,1560.1 516,1477.9 519.8,1532.7 523.7,1532.7 527.5,1560.1 531.3,1550.9 535.2,1505.3 539,1560.1 542.9,1555.5 546.7,1555.5 550.5,1555.5 554.4,1550.9 558.2,1564.6 562.1,1541.8 565.9,1555.5 569.7,1564.6 573.6,1532.7 577.4,1564.6 581.3,1532.7 585.1,1550.9 588.9,1564.6 592.8,1555.5 596.6,1537.2 600.5,1555.5 604.3,1505.3 608.1,1500.8 612,1537.2 615.8,1546.4 619.7,1564.6 623.5,1555.5 627.3,1541.8 631.2,1555.5 635,1555.5 638.9,1550.9 642.7,1505.3 646.5,1519 650.4,1564.6 654.2,1496.2 658.1,1537.2 661.9,1560.1 665.7,1532.7 669.6,1532.7 673.4,1550.9 677.2,1537.2 681.1,1564.6 684.9,1560.1 688.8,1560.1 692.6,1564.6 696.4,1546.4 700.3,1560.1 704.1,1537.2 708,1560.1 711.8,1550.9 715.6,1550.9 719.5,1519 723.3,1555.5 727.2,1560.1 731,1546.4 734.8,1418.6 738.7,1560.1 742.5,1546.4 746.4,1546.4 750.2,1560.1 754,1555.5 757.9,1519 761.7,1555.5 765.6,1550.9 769.4,1564.6 773.2,1532.7 777.1,1555.5 780.9,1564.6 784.8,1550.9 788.6,1546.4 792.4,1564.6 796.3,1546.4 800.1,1564.6 804,1564.6 807.8,1564.6 811.6,1555.5 815.5,1514.4 819.3,1546.4 823.2,1532.7 827,1541.8 830.8,1550.9 834.7,1546.4 838.5,1560.1 842.4,1532.7 846.2,1550.9 850,1541.8 853.9,1555.5 857.7,1532.7 861.5,1560.1 865.4,1496.2 869.2,1482.5 873.1,1546.4 876.9,1541.8 880.7,1550.9 884.6,1546.4 888.4,1550.9 892.3,1541.8 896.1,1550.9 899.9,1537.2 903.8,1532.7 907.6,1546.4 911.5,1546.4 915.3,1546.4 919.1,1560.1 923,1509.9 926.8,1519 930.7,1560.1 934.5,1546.4 938.3,1546.4 942.2,1550.9 946,1537.2 949.9,1532.7 953.7,1560.1 957.5,1573.7 961.4,1560.1 965.2,1573.7 969.1,1573.7 972.9,1564.6 976.7,1573.7 980.6,1564.6 984.4,1564.6 988.3,1578.3 992.1,1569.2 995.9,1564.6 999.8,1564.6 1003.6,1578.3 1007.5,1573.7 1011.3,1569.2 1015.1,1560.1 1019,1560.1 1022.8,1560.1 1026.6,1569.2 1030.5,1560.1 1034.3,1560.1 1038.2,1578.3 1042,1573.7 1045.8,1569.2 1049.7,1560.1 1053.5,1578.3 1057.4,1564.6 1061.2,1564.6 1065,1578.3 1068.9,1569.2 1072.7,1564.6 1076.6,1560.1 1080.4,1578.3 1084.2,1569.2 1088.1,1560.1 1091.9,1569.2 1095.8,1569.2 1099.6,1564.6 1103.4,1560.1 1107.3,1573.7 1111.1,1560.1 1115,1573.7 1118.8,1418.6 1122.6,1564.6 1126.5,1560.1 1130.3,1569.2 1134.2,1564.6 1138,1560.1 1141.8,1564.6 1145.7,1560.1 1149.5,1569.2 1153.4,1573.7 1153.4,1578.3" fill="#d0b572" fill-opacity="0.4"/>
<polyline points="235.7,1564.6 239.5,1555.5 243.4,1541.8 247.2,1546.4 251.1,1532.7 254.9,1560.1 258.7,1487.1 262.6,1550.9 266.4,1546.4 270.3,1546.4 274.1,1519 277.9,1550.9 281.8,1519 285.6,1555.5 289.5,1546.4 293.3,1560.1 297.1,1564.6 301,1541.8 304.8,1546.4 308.7,1555.5 312.5,1560.1 316.3,1500.8 320.2,1550.9 324,1564.6 327.8,1550.9 331.7,1537.2 335.5,1546.4 339.4,1550.9 343.2,1555.5 347,1546.4 350.9,1550.9 354.7,1532.7 358.6,1550.9 362.4,1541.8 366.2,1560.1 370.1,1546.4 373.9,1564.6 377.8,1546.4 381.6,1555.5 385.4,1564.6 389.3,1555.5 393.1,1546.4 397,1550.9 400.8,1541.8 404.6,1564.6 408.5,1505.3 412.3,1550.9 416.2,1537.2 420,1564.6 423.8,1555.5 427.7,1560.1 431.5,1546.4 435.4,1509.9 439.2,1564.6 443,1532.7 446.9,1564.6 450.7,1564.6 454.6,1532.7 458.4,1550.9 462.2,1523.6 466.1,1560.1 469.9,1550.9 473.8,1560.1 477.6,1532.7 481.4,1564.6 485.3,1509.9 489.1,1564.6 492.9,1509.9 496.8,1555.5 500.6,1564.6 504.5,1555.5 508.3,1564.6 512.1,1560.1 516,1477.9 519.8,1532.7 523.7,1532.7 527.5,1560.1 531.3,1550.9 535.2,1505.3 539,1560.1 542.9,1555.5 546.7,1555.5 550.5,1555.5 554.4,1550.9 558.2,1564.6 562.1,1541.8 565.9,1555.5 569.7,1564.6 573.6,1532.7 577.4,1564.6 581.3,1532.7 585.1,1550.9 588.9,1564.6 592.8,1555.5 596.6,1537.2 600.5,1555.5 604.3,1505.3 608.1,1500.8 612,1537.2 615.8,1546.4 619.7,1564.6 623.5,1555.5 627.3,1541.8 631.2,1555.5 635,1555.5 638.9,1550.9 642.7,1505.3 646.5,1519 650.4,1564.6 654.2,1496.2 658.1,1537.2 661.9,1560.1 665.7,1532.7 669.6,1532.7 673.4,1550.9 677.2,1537.2 681.1,1564.6 684.9,1560.1 688.8,1560.1 692.6,1564.6 696.4,1546.4 700.3,1560.1 704.1,1537.2 708,1560.1 711.8,1550.9 715.6,1550.9 719.5,1519 723.3,1555.5 727.2,1560.1 731,1546.4 734.8,1418.6 738.7,1560.1 742.5,1546.4 746.4,1546.4 750.2,1560.1 754,1555.5 757.9,1519 761.7,1555.5 765.6,1550.9 769.4,1564.6 773.2,1532.7 777.1,1555.5 780.9,1564.6 784.8,1550.9 788.6,1546.4 792.4,1564.6 796.3,1546.4 800.1,1564.6 804,1564.6 807.8,1564.6 811.6,1555.5 815.5,1514.4 819.3,1546.4 823.2,1532.7 827,1541.8 830.8,1550.9 834.7,1546.4 838.5,1560.1 842.4,1532.7 846.2,1550.9 850,1541.8 853.9,1555.5 857.7,1532.7 861.5,1560.1 865.4,1496.2 869.2,1482.5 873.1,1546.4 876.9,1541.8 880.7,1550.9 884.6,1546.4 888.4,1550.9 892.3,1541.8 896.1,1550.9 899.9,1537.2 903.8,1532.7 907.6,1546.4 911.5,1546.4 915.3,1546.4 919.1,1560.1 923,1509.9 926.8,1519 930.7,1560.1 934.5,1546.4 938.3,1546.4 942.2,1550.9 946,1537.2 949.9,1532.7 953.7,1560.1 957.5,1573.7 961.4,1560.1 965.2,1573.7 969.1,1573.7 972.9,1564.6 976.7,1573.7 980.6,1564.6 984.4,1564.6 988.3,1578.3 992.1,1569.2 995.9,1564.6 999.8,1564.6 1003.6,1578.3 1007.5,1573.7 1011.3,1569.2 1015.1,1560.1 1019,1560.1 1022.8,1560.1 1026.6,1569.2 1030.5,1560.1 1034.3,1560.1 1038.2,1578.3 1042,1573.7 1045.8,1569.2 1049.7,1560.1 1053.5,1578.3 1057.4,1564.6 1061.2,1564.6 1065,1578.3 1068.9,1569.2 1072.7,1564.6 1076.6,1560.1 1080.4,1578.3 1084.2,1569.2 1088.1,1560.1 1091.9,1569.2 1095.8,1569.2 1099.6,1564.6 1103.4,1560.1 1107.3,1573.7 1111.1,1560.1 1115,1573.7 1118.8,1418.6 1122.6,1564.6 1126.5,1560.1 1130.3,1569.2 1134.2,1564.6 1138,1560.1 1141.8,1564.6 1145.7,1560.1 1149.5,1569.2 1153.4,1573.7" fill="none" stroke="#d0b572" stroke-width="3.7" stroke-linejoin="bevel" stroke-opacity="0.85"/>
<polygon points="235.7,1578.3 235.7,1569.2 239.5,1573.7 243.4,1578.3 247.2,1569.2 251.1,1578.3 254.9,1569.2 258.7,1500.8 262.6,1569.2 266.4,1541.8 270.3,1555.5 274.1,1569.2 277.9,1578.3 281.8,1578.3 285.6,1578.3 289.5,1578.3 293.3,1578.3 297.1,1573.7 301,1578.3 304.8,1573.7 308.7,1578.3 312.5,1569.2 316.3,1578.3 320.2,1578.3 324,1555.5 327.8,1578.3 331.7,1573.7 335.5,1578.3 339.4,1569.2 343.2,1578.3 347,1541.8 350.9,1550.9 354.7,1578.3 358.6,1578.3 362.4,1578.3 366.2,1573.7 370.1,1578.3 373.9,1550.9 377.8,1578.3 381.6,1578.3 385.4,1578.3 389.3,1578.3 393.1,1546.4 397,1578.3 400.8,1573.7 404.6,1569.2 408.5,1578.3 412.3,1573.7 416.2,1578.3 420,1578.3 423.8,1573.7 427.7,1573.7 431.5,1560.1 435.4,1578.3 439.2,1578.3 443,1569.2 446.9,1573.7 450.7,1573.7 454.6,1550.9 458.4,1573.7 462.2,1578.3 466.1,1578.3 469.9,1578.3 473.8,1573.7 477.6,1578.3 481.4,1573.7 485.3,1578.3 489.1,1555.5 492.9,1578.3 496.8,1555.5 500.6,1564.6 504.5,1573.7 508.3,1578.3 512.1,1578.3 516,1578.3 519.8,1573.7 523.7,1569.2 527.5,1569.2 531.3,1578.3 535.2,1578.3 539,1569.2 542.9,1541.8 546.7,1578.3 550.5,1578.3 554.4,1555.5 558.2,1578.3 562.1,1578.3 565.9,1578.3 569.7,1573.7 573.6,1569.2 577.4,1578.3 581.3,1564.6 585.1,1578.3 588.9,1578.3 592.8,1578.3 596.6,1569.2 600.5,1573.7 604.3,1573.7 608.1,1578.3 612,1578.3 615.8,1560.1 619.7,1578.3 623.5,1564.6 627.3,1578.3 631.2,1578.3 635,1468.8 638.9,1546.4 642.7,1569.2 646.5,1578.3 650.4,1560.1 654.2,1573.7 658.1,1578.3 661.9,1578.3 665.7,1578.3 669.6,1573.7 673.4,1578.3 677.2,1569.2 681.1,1578.3 684.9,1541.8 688.8,1578.3 692.6,1546.4 696.4,1560.1 700.3,1578.3 704.1,1578.3 708,1578.3 711.8,1564.6 715.6,1578.3 719.5,1555.5 723.3,1550.9 727.2,1578.3 731,1578.3 734.8,1569.2 738.7,1573.7 742.5,1564.6 746.4,1569.2 750.2,1578.3 754,1578.3 757.9,1541.8 761.7,1578.3 765.6,1546.4 769.4,1573.7 773.2,1555.5 777.1,1569.2 780.9,1573.7 784.8,1578.3 788.6,1569.2 792.4,1578.3 796.3,1569.2 800.1,1578.3 804,1541.8 807.8,1569.2 811.6,1578.3 815.5,1550.9 819.3,1578.3 823.2,1578.3 827,1550.9 830.8,1569.2 834.7,1578.3 838.5,1573.7 842.4,1578.3 846.2,1573.7 850,1573.7 853.9,1578.3 857.7,1573.7 861.5,1569.2 865.4,1578.3 869.2,1578.3 873.1,1578.3 876.9,1578.3 880.7,1541.8 884.6,1578.3 888.4,1578.3 892.3,1546.4 896.1,1550.9 899.9,1578.3 903.8,1569.2 907.6,1569.2 911.5,1560.1 915.3,1578.3 919.1,1578.3 923,1541.8 926.8,1578.3 930.7,1569.2 934.5,1573.7 938.3,1546.4 942.2,1578.3 946,1546.4 949.9,1573.7 953.7,1573.7 957.5,1573.7 961.4,1569.2 965.2,1578.3 969.1,1573.7 972.9,1569.2 976.7,1564.6 980.6,1578.3 984.4,1578.3 988.3,1578.3 992.1,1573.7 995.9,1573.7 999.8,1573.7 1003.6,1578.3 1007.5,1569.2 1011.3,1578.3 1015.1,1578.3 1019,1573.7 1022.8,1578.3 1026.6,1569.2 1030.5,1578.3 1034.3,1578.3 1038.2,1578.3 1042,1578.3 1045.8,1573.7 1049.7,1578.3 1053.5,1573.7 1057.4,1573.7 1061.2,1573.7 1065,1578.3 1068.9,1578.3 1072.7,1578.3 1076.6,1528.1 1080.4,1578.3 1084.2,1578.3 1088.1,1569.2 1091.9,1541.8 1095.8,1578.3 1099.6,1578.3 1103.4,1569.2 1107.3,1560.1 1111.1,1578.3 1115,1573.7 1118.8,1573.7 1122.6,1578.3 1126.5,1573.7 1130.3,1578.3 1134.2,1573.7 1138,1578.3 1141.8,1573.7 1145.7,1560.1 1149.5,1578.3 1153.4,1578.3 1153.4,1578.3" fill="#f6ab4c" fill-opacity="0.4"/>
<polyline points="235.7,1569.2 239.5,1573.7 243.4,1578.3 247.2,1569.2 251.1,1578.3 254.9,1569.2 258.7,1500.8 262.6,1569.2 266.4,1541.8 270.3,1555.5 274.1,1569.2 277.9,1578.3 281.8,1578.3 285.6,1578.3 289.5,1578.3 293.3,1578.3 297.1,1573.7 301,1578.3 304.8,1573.7 308.7,1578.3 312.5,1569.2 316.3,1578.3 320.2,1578.3 324,1555.5 327.8,1578.3 331.7,1573.7 335.5,1578.3 339.4,1569.2 343.2,1578.3 347,1541.8 350.9,1550.9 354.7,1578.3 358.6,1578.3 362.4,1578.3 366.2,1573.7 370.1,1578.3 373.9,1550.9 377.8,1578.3 381.6,1578.3 385.4,1578.3 389.3,1578.3 393.1,1546.4 397,1578.3 400.8,1573.7 404.6,1569.2 408.5,1578.3 412.3,1573.7 416.2,1578.3 420,1578.3 423.8,1573.7 427.7,1573.7 431.5,1560.1 435.4,1578.3 439.2,1578.3 443,1569.2 446.9,1573.7 450.7,1573.7 454.6,1550.9 458.4,1573.7 462.2,1578.3 466.1,1578.3 469.9,1578.3 473.8,1573.7 477.6,1578.3 481.4,1573.7 485.3,1578.3 489.1,1555.5 492.9,1578.3 496.8,1555.5 500.6,1564.6 504.5,1573.7 508.3,1578.3 512.1,1578.3 516,1578.3 519.8,1573.7 523.7,1569.2 527.5,1569.2 531.3,1578.3 535.2,1578.3 539,1569.2 542.9,1541.8 546.7,1578.3 550.5,1578.3 554.4,1555.5 558.2,1578.3 562.1,1578.3 565.9,1578.3 569.7,1573.7 573.6,1569.2 577.4,1578.3 581.3,1564.6 585.1,1578.3 588.9,1578.3 592.8,1578.3 596.6,1569.2 600.5,1573.7 604.3,1573.7 608.1,1578.3 612,1578.3 615.8,1560.1 619.7,1578.3 623.5,1564.6 627.3,1578.3 631.2,1578.3 635,1468.8 638.9,1546.4 642.7,1569.2 646.5,1578.3 650.4,1560.1 654.2,1573.7 658.1,1578.3 661.9,1578.3 665.7,1578.3 669.6,1573.7 673.4,1578.3 677.2,1569.2 681.1,1578.3 684.9,1541.8 688.8,1578.3 692.6,1546.4 696.4,1560.1 700.3,1578.3 704.1,1578.3 708,1578.3 711.8,1564.6 715.6,1578.3 719.5,1555.5 723.3,1550.9 727.2,1578.3 731,1578.3 734.8,1569.2 738.7,1573.7 742.5,1564.6 746.4,1569.2 750.2,1578.3 754,1578.3 757.9,1541.8 761.7,1578.3 765.6,1546.4 769.4,1573.7 773.2,1555.5 777.1,1569.2 780.9,1573.7 784.8,1578.3 788.6,1569.2 792.4,1578.3 796.3,1569.2 800.1,1578.3 804,1541.8 807.8,1569.2 811.6,1578.3 815.5,1550.9 819.3,1578.3 823.2,1578.3 827,1550.9 830.8,1569.2 834.7,1578.3 838.5,1573.7 842.4,1578.3 846.2,1573.7 850,1573.7 853.9,1578.3 857.7,1573.7 861.5,1569.2 865.4,1578.3 869.2,1578.3 873.1,1578.3 876.9,1578.3 880.7,1541.8 884.6,1578.3 888.4,1578.3 892.3,1546.4 896.1,1550.9 899.9,1578.3 903.8,1569.2 907.6,1569.2 911.5,1560.1 915.3,1578.3 919.1,1578.3 923,1541.8 926.8,1578.3 930.7,1569.2 934.5,1573.7 938.3,1546.4 942.2,1578.3 946,1546.4 949.9,1573.7 953.7,1573.7 957.5,1573.7 961.4,1569.2 965.2,1578.3 969.1,1573.7 972.9,1569.2 976.7,1564.6 980.6,1578.3 984.4,1578.3 988.3,1578.3 992.1,1573.7 995.9,1573.7 999.8,1573.7 1003.6,1578.3 1007.5,1569.2 1011.3,1578.3 1015.1,1578.3 1019,1573.7 1022.8,1578.3 1026.6,1569.2 1030.5,1578.3 1034.3,1578.3 1038.2,1578.3 1042,1578.3 1045.8,1573.7 1049.7,1578.3 1053.5,1573.7 1057.4,1573.7 1061.2,1573.7 1065,1578.3 1068.9,1578.3 1072.7,1578.3 1076.6,1528.1 1080.4,1578.3 1084.2,1578.3 1088.1,1569.2 1091.9,1541.8 1095.8,1578.3 1099.6,1578.3 1103.4,1569.2 1107.3,1560.1 1111.1,1578.3 1115,1573.7 1118.8,1573.7 1122.6,1578.3 1126.5,1573.7 1130.3,1578.3 1134.2,1573.7 1138,1578.3 1141.8,1573.7 1145.7,1560.1 1149.5,1578.3 1153.4,1578.3" fill="none" stroke="#f6ab4c" stroke-width="3.7" stroke-linejoin="bevel" stroke-opacity="0.85"/>
<polygon points="235.7,1578.3 235.7,1569.2 239.5,1569.2 243.4,1578.3 247.2,1578.3 251.1,1578.3 254.9,1564.6 258.7,1573.7 262.6,1564.6 266.4,1550.9 270.3,1569.2 274.1,1555.5 277.9,1569.2 281.8,1578.3 285.6,1578.3 289.5,1569.2 293.3,1578.3 297.1,1569.2 301,1578.3 304.8,1573.7 308.7,1578.3 312.5,1560.1 316.3,1578.3 320.2,1578.3 324,1578.3 327.8,1578.3 331.7,1578.3 335.5,1578.3 339.4,1573.7 343.2,1578.3 347,1578.3 350.9,1569.2 354.7,1578.3 358.6,1578.3 362.4,1578.3 366.2,1578.3 370.1,1578.3 373.9,1578.3 377.8,1578.3 381.6,1546.4 385.4,1578.3 389.3,1578.3 393.1,1569.2 397,1578.3 400.8,1578.3 404.6,1546.4 408.5,1578.3 412.3,1578.3 416.2,1578.3 420,1550.9 423.8,1578.3 427.7,1578.3 431.5,1569.2 435.4,1578.3 439.2,1578.3 443,1578.3 446.9,1573.7 450.7,1578.3 454.6,1560.1 458.4,1550.9 462.2,1578.3 466.1,1578.3 469.9,1578.3 473.8,1578.3 477.6,1550.9 481.4,1573.7 485.3,1560.1 489.1,1578.3 492.9,1578.3 496.8,1569.2 500.6,1578.3 504.5,1578.3 508.3,1573.7 512.1,1578.3 516,1569.2 519.8,1578.3 523.7,1560.1 527.5,1578.3 531.3,1578.3 535.2,1578.3 539,1541.8 542.9,1578.3 546.7,1578.3 550.5,1569.2 554.4,1569.2 558.2,1573.7 562.1,1560.1 565.9,1578.3 569.7,1564.6 573.6,1578.3 577.4,1541.8 581.3,1578.3 585.1,1578.3 588.9,1523.6 592.8,1550.9 596.6,1578.3 600.5,1555.5 604.3,1550.9 608.1,1569.2 612,1578.3 615.8,1569.2 619.7,1555.5 623.5,1569.2 627.3,1578.3 631.2,1578.3 635,1578.3 638.9,1569.2 642.7,1578.3 646.5,1546.4 650.4,1578.3 654.2,1569.2 658.1,1564.6 661.9,1546.4 665.7,1578.3 669.6,1569.2 673.4,1573.7 677.2,1564.6 681.1,1569.2 684.9,1569.2 688.8,1569.2 692.6,1578.3 696.4,1578.3 700.3,1578.3 704.1,1560.1 708,1578.3 711.8,1569.2 715.6,1541.8 719.5,1578.3 723.3,1578.3 727.2,1578.3 731,1578.3 734.8,1578.3 738.7,1427.8 742.5,1578.3 746.4,1569.2 750.2,1573.7 754,1455.1 757.9,1578.3 761.7,1560.1 765.6,1569.2 769.4,1578.3 773.2,1564.6 777.1,1569.2 780.9,1578.3 784.8,1573.7 788.6,1578.3 792.4,1578.3 796.3,1578.3 800.1,1578.3 804,1541.8 807.8,1555.5 811.6,1555.5 815.5,1578.3 819.3,1555.5 823.2,1578.3 827,1578.3 830.8,1569.2 834.7,1541.8 838.5,1569.2 842.4,1541.8 846.2,1578.3 850,1560.1 853.9,1569.2 857.7,1578.3 861.5,1578.3 865.4,1578.3 869.2,1573.7 873.1,1578.3 876.9,1573.7 880.7,1578.3 884.6,1578.3 888.4,1578.3 892.3,1578.3 896.1,1578.3 899.9,1578.3 903.8,1578.3 907.6,1578.3 911.5,1569.2 915.3,1555.5 919.1,1573.7 923,1578.3 926.8,1573.7 930.7,1578.3 934.5,1569.2 938.3,1578.3 942.2,1578.3 946,1578.3 949.9,1560.1 953.7,1578.3 957.5,1578.3 961.4,1578.3 965.2,1573.7 969.1,1573.7 972.9,1573.7 976.7,1569.2 980.6,1569.2 984.4,1569.2 988.3,1578.3 992.1,1569.2 995.9,1573.7 999.8,1578.3 1003.6,1578.3 1007.5,1569.2 1011.3,1578.3 1015.1,1578.3 1019,1578.3 1022.8,1578.3 1026.6,1569.2 1030.5,1569.2 1034.3,1573.7 1038.2,1578.3 1042,1578.3 1045.8,1578.3 1049.7,1560.1 1053.5,1573.7 1057.4,1578.3 1061.2,1578.3 1065,1550.9 1068.9,1578.3 1072.7,1573.7 1076.6,1578.3 1080.4,1578.3 1084.2,1560.1 1088.1,1573.7 1091.9,1573.7 1095.8,1578.3 1099.6,1573.7 1103.4,1578.3 1107.3,1560.1 1111.1,1564.6 1115,1578.3 1118.8,1564.6 1122.6,1578.3 1126.5,1569.2 1130.3,1578.3 1134.2,1569.2 1138,1573.7 1141.8,1573.7 1145.7,1578.3 1149.5,1578.3 1153.4,1573.7 1153.4,1578.3" fill="#86cf9c" fill-opacity="0.4"/>
<polyline points="235.7,1569.2 239.5,1569.2 243.4,1578.3 247.2,1578.3 251.1,1578.3 254.9,1564.6 258.7,1573.7 262.6,1564.6 266.4,1550.9 270.3,1569.2 274.1,1555.5 277.9,1569.2 281.8,1578.3 285.6,1578.3 289.5,1569.2 293.3,1578.3 297.1,1569.2 301,1578.3 304.8,1573.7 308.7,1578.3 312.5,1560.1 316.3,1578.3 320.2,1578.3 324,1578.3 327.8,1578.3 331.7,1578.3 335.5,1578.3 339.4,1573.7 343.2,1578.3 347,1578.3 350.9,1569.2 354.7,1578.3 358.6,1578.3 362.4,1578.3 366.2,1578.3 370.1,1578.3 373.9,1578.3 377.8,1578.3 381.6,1546.4 385.4,1578.3 389.3,1578.3 393.1,1569.2 397,1578.3 400.8,1578.3 404.6,1546.4 408.5,1578.3 412.3,1578.3 416.2,1578.3 420,1550.9 423.8,1578.3 427.7,1578.3 431.5,1569.2 435.4,1578.3 439.2,1578.3 443,1578.3 446.9,1573.7 450.7,1578.3 454.6,1560.1 458.4,1550.9 462.2,1578.3 466.1,1578.3 469.9,1578.3 473.8,1578.3 477.6,1550.9 481.4,1573.7 485.3,1560.1 489.1,1578.3 492.9,1578.3 496.8,1569.2 500.6,1578.3 504.5,1578.3 508.3,1573.7 512.1,1578.3 516,1569.2 519.8,1578.3 523.7,1560.1 527.5,1578.3 531.3,1578.3 535.2,1578.3 539,1541.8 542.9,1578.3 546.7,1578.3 550.5,1569.2 554.4,1569.2 558.2,1573.7 562.1,1560.1 565.9,1578.3 569.7,1564.6 573.6,1578.3 577.4,1541.8 581.3,1578.3 585.1,1578.3 588.9,1523.6 592.8,1550.9 596.6,1578.3 600.5,1555.5 604.3,1550.9 608.1,1569.2 612,1578.3 615.8,1569.2 619.7,1555.5 623.5,1569.2 627.3,1578.3 631.2,1578.3 635,1578.3 638.9,1569.2 642.7,1578.3 646.5,1546.4 650.4,1578.3 654.2,1569.2 658.1,1564.6 661.9,1546.4 665.7,1578.3 669.6,1569.2 673.4,1573.7 677.2,1564.6 681.1,1569.2 684.9,1569.2 688.8,1569.2 692.6,1578.3 696.4,1578.3 700.3,1578.3 704.1,1560.1 708,1578.3 711.8,1569.2 715.6,1541.8 719.5,1578.3 723.3,1578.3 727.2,1578.3 731,1578.3 734.8,1578.3 738.7,1427.8 742.5,1578.3 746.4,1569.2 750.2,1573.7 754,1455.1 757.9,1578.3 761.7,1560.1 765.6,1569.2 769.4,1578.3 773.2,1564.6 777.1,1569.2 780.9,1578.3 784.8,1573.7 788.6,1578.3 792.4,1578.3 796.3,1578.3 800.1,1578.3 804,1541.8 807.8,1555.5 811.6,1555.5 815.5,1578.3 819.3,1555.5 823.2,1578.3 827,1578.3 830.8,1569.2 834.7,1541.8 838.5,1569.2 842.4,1541.8 846.2,1578.3 850,1560.1 853.9,1569.2 857.7,1578.3 861.5,1578.3 865.4,1578.3 869.2,1573.7 873.1,1578.3 876.9,1573.7 880.7,1578.3 884.6,1578.3 888.4,1578.3 892.3,1578.3 896.1,1578.3 899.9,1578.3 903.8,1578.3 907.6,1578.3 911.5,1569.2 915.3,1555.5 919.1,1573.7 923,1578.3 926.8,1573.7 930.7,1578.3 934.5,1569.2 938.3,1578.3 942.2,1578.3 946,1578.3 949.9,1560.1 953.7,1578.3 957.5,1578.3 961.4,1578.3 965.2,1573.7 969.1,1573.7 972.9,1573.7 976.7,1569.2 980.6,1569.2 984.4,1569.2 988.3,1578.3 992.1,1569.2 995.9,1573.7 999.8,1578.3 1003.6,1578.3 1007.5,1569.2 1011.3,1578.3 1015.1,1578.3 1019,1578.3 1022.8,1578.3 1026.6,1569.2 1030.5,1569.2 1034.3,1573.7 1038.2,1578.3 1042,1578.3 1045.8,1578.3 1049.7,1560.1 1053.5,1573.7 1057.4,1578.3 1061.2,1578.3 1065,1550.9 1068.9,1578.3 1072.7,1573.7 1076.6,1578.3 1080.4,1578.3 1084.2,1560.1 1088.1,1573.7 1091.9,1573.7 1095.8,1578.3 1099.6,1573.7 1103.4,1578.3 1107.3,1560.1 1111.1,1564.6 1115,1578.3 1118.8,1564.6 1122.6,1578.3 1126.5,1569.2 1130.3,1578.3 1134.2,1569.2 1138,1573.7 1141.8,1573.7 1145.7,1578.3 1149.5,1578.3 1153.4,1573.7" fill="none" stroke="#86cf9c" stroke-width="3.7" stroke-linejoin="bevel" stroke-opacity="0.85"/>
<polygon points="235.7,1578.3 235.7,1564.6 239.5,1569.2 243.4,1569.2 247.2,1573.7 251.1,1569.2 254.9,1578.3 258.7,1573.7 262.6,1573.7 266.4,1578.3 270.3,1546.4 274.1,1573.7 277.9,1578.3 281.8,1550.9 285.6,1578.3 289.5,1569.2 293.3,1578.3 297.1,1569.2 301,1578.3 304.8,1569.2 308.7,1550.9 312.5,1578.3 316.3,1578.3 320.2,1578.3 324,1578.3 327.8,1550.9 331.7,1569.2 335.5,1550.9 339.4,1578.3 343.2,1569.2 347,1578.3 350.9,1578.3 354.7,1555.5 358.6,1578.3 362.4,1578.3 366.2,1569.2 370.1,1569.2 373.9,1578.3 377.8,1578.3 381.6,1573.7 385.4,1560.1 389.3,1578.3 393.1,1578.3 397,1573.7 400.8,1578.3 404.6,1578.3 408.5,1550.9 412.3,1578.3 416.2,1578.3 420,1578.3 423.8,1569.2 427.7,1578.3 431.5,1578.3 435.4,1578.3 439.2,1569.2 443,1578.3 446.9,1555.5 450.7,1569.2 454.6,1578.3 458.4,1573.7 462.2,1578.3 466.1,1573.7 469.9,1578.3 473.8,1578.3 477.6,1578.3 481.4,1555.5 485.3,1573.7 489.1,1578.3 492.9,1564.6 496.8,1578.3 500.6,1550.9 504.5,1578.3 508.3,1573.7 512.1,1569.2 516,1286.4 519.8,1578.3 523.7,1578.3 527.5,1573.7 531.3,1569.2 535.2,1560.1 539,1578.3 542.9,1578.3 546.7,1578.3 550.5,1537.2 554.4,1573.7 558.2,1350.2 562.1,1578.3 565.9,1578.3 569.7,1578.3 573.6,1573.7 577.4,1573.7 581.3,1573.7 585.1,1578.3 588.9,1578.3 592.8,1560.1 596.6,1578.3 600.5,1560.1 604.3,1564.6 608.1,1578.3 612,1578.3 615.8,1573.7 619.7,1560.1 623.5,1573.7 627.3,1573.7 631.2,1550.9 635,1578.3 638.9,1578.3 642.7,1578.3 646.5,1550.9 650.4,1555.5 654.2,1569.2 658.1,1569.2 661.9,1569.2 665.7,1578.3 669.6,1578.3 673.4,1578.3 677.2,1573.7 681.1,1578.3 684.9,1546.4 688.8,1550.9 692.6,1578.3 696.4,1578.3 700.3,1578.3 704.1,1578.3 708,1573.7 711.8,1578.3 715.6,1550.9 719.5,1578.3 723.3,1569.2 727.2,1578.3 731,1578.3 734.8,1578.3 738.7,1546.4 742.5,1569.2 746.4,1546.4 750.2,1573.7 754,1578.3 757.9,1578.3 761.7,1578.3 765.6,1560.1 769.4,1578.3 773.2,1573.7 777.1,1573.7 780.9,1569.2 784.8,1578.3 788.6,1569.2 792.4,1569.2 796.3,1564.6 800.1,1546.4 804,1546.4 807.8,1578.3 811.6,1578.3 815.5,1578.3 819.3,1560.1 823.2,1569.2 827,1569.2 830.8,1569.2 834.7,1578.3 838.5,1578.3 842.4,1560.1 846.2,1569.2 850,1578.3 853.9,1578.3 857.7,1578.3 861.5,1555.5 865.4,1569.2 869.2,1573.7 873.1,1569.2 876.9,1573.7 880.7,1546.4 884.6,1569.2 888.4,1578.3 892.3,1560.1 896.1,1569.2 899.9,1546.4 903.8,1546.4 907.6,1555.5 911.5,1569.2 915.3,1573.7 919.1,1578.3 923,1578.3 926.8,1550.9 930.7,1546.4 934.5,1578.3 938.3,1578.3 942.2,1569.2 946,1578.3 949.9,1550.9 953.7,1578.3 957.5,1569.2 961.4,1573.7 965.2,1573.7 969.1,1578.3 972.9,1573.7 976.7,1578.3 980.6,1578.3 984.4,1578.3 988.3,1578.3 992.1,1578.3 995.9,1569.2 999.8,1578.3 1003.6,1569.2 1007.5,1569.2 1011.3,1578.3 1015.1,1573.7 1019,1578.3 1022.8,1560.1 1026.6,1560.1 1030.5,1578.3 1034.3,1569.2 1038.2,1573.7 1042,1569.2 1045.8,1569.2 1049.7,1578.3 1053.5,1573.7 1057.4,1569.2 1061.2,1578.3 1065,1578.3 1068.9,1578.3 1072.7,1560.1 1076.6,1578.3 1080.4,1578.3 1084.2,1573.7 1088.1,1578.3 1091.9,1569.2 1095.8,1578.3 1099.6,1573.7 1103.4,1578.3 1107.3,1578.3 1111.1,1578.3 1115,1573.7 1118.8,1573.7 1122.6,1569.2 1126.5,1573.7 1130.3,1569.2 1134.2,1564.6 1138,1578.3 1141.8,1573.7 1145.7,1578.3 1149.5,1578.3 1153.4,1564.6 1153.4,1578.3" fill="#fba692" fill-opacity="0.4"/>
<polyline points="235.7,1564.6 239.5,1569.2 243.4,1569.2 247.2,1573.7 251.1,1569.2 254.9,1578.3 258.7,1573.7 262.6,1573.7 266.4,1578.3 270.3,1546.4 274.1,1573.7 277.9,1578.3 281.8,1550.9 285.6,1578.3 289.5,1569.2 293.3,1578.3 297.1,1569.2 301,1578.3 304.8,1569.2 308.7,1550.9 312.5,1578.3 316.3,1578.3 320.2,1578.3 324,1578.3 327.8,1550.9 331.7,1569.2 335.5,1550.9 339.4,1578.3 343.2,1569.2 347,1578.3 350.9,1578.3 354.7,1555.5 358.6,1578.3 362.4,1578.3 366.2,1569.2 370.1,1569.2 373.9,1578.3 377.8,1578.3 381.6,1573.7 385.4,1560.1 389.3,1578.3 393.1,1578.3 397,1573.7 400.8,1578.3 404.6,1578.3 408.5,1550.9 412.3,1578.3 416.2,1578.3 420,1578.3 423.8,1569.2 427.7,1578.3 431.5,1578.3 435.4,1578.3 439.2,1569.2 443,1578.3 446.9,1555.5 450.7,1569.2 454.6,1578.3 458.4,1573.7 462.2,1578.3 466.1,1573.7 469.9,1578.3 473.8,1578.3 477.6,1578.3 481.4,1555.5 485.3,1573.7 489.1,1578.3 492.9,1564.6 496.8,1578.3 500.6,1550.9 504.5,1578.3 508.3,1573.7 512.1,1569.2 516,1286.4 519.8,1578.3 523.7,1578.3 527.5,1573.7 531.3,1569.2 535.2,1560.1 539,1578.3 542.9,1578.3 546.7,1578.3 550.5,1537.2 554.4,1573.7 558.2,1350.2 562.1,1578.3 565.9,1578.3 569.7,1578.3 573.6,1573.7 577.4,1573.7 581.3,1573.7 585.1,1578.3 588.9,1578.3 592.8,1560.1 596.6,1578.3 600.5,1560.1 604.3,1564.6 608.1,1578.3 612,1578.3 615.8,1573.7 619.7,1560.1 623.5,1573.7 627.3,1573.7 631.2,1550.9 635,1578.3 638.9,1578.3 642.7,1578.3 646.5,1550.9 650.4,1555.5 654.2,1569.2 658.1,1569.2 661.9,1569.2 665.7,1578.3 669.6,1578.3 673.4,1578.3 677.2,1573.7 681.1,1578.3 684.9,1546.4 688.8,1550.9 692.6,1578.3 696.4,1578.3 700.3,1578.3 704.1,1578.3 708,1573.7 711.8,1578.3 715.6,1550.9 719.5,1578.3 723.3,1569.2 727.2,1578.3 731,1578.3 734.8,1578.3 738.7,1546.4 742.5,1569.2 746.4,1546.4 750.2,1573.7 754,1578.3 757.9,1578.3 761.7,1578.3 765.6,1560.1 769.4,1578.3 773.2,1573.7 777.1,1573.7 780.9,1569.2 784.8,1578.3 788.6,1569.2 792.4,1569.2 796.3,1564.6 800.1,1546.4 804,1546.4 807.8,1578.3 811.6,1578.3 815.5,1578.3 819.3,1560.1 823.2,1569.2 827,1569.2 830.8,1569.2 834.7,1578.3 838.5,1578.3 842.4,1560.1 846.2,1569.2 850,1578.3 853.9,1578.3 857.7,1578.3 861.5,1555.5 865.4,1569.2 869.2,1573.7 873.1,1569.2 876.9,1573.7 880.7,1546.4 884.6,1569.2 888.4,1578.3 892.3,1560.1 896.1,1569.2 899.9,1546.4 903.8,1546.4 907.6,1555.5 911.5,1569.2 915.3,1573.7 919.1,1578.3 923,1578.3 926.8,1550.9 930.7,1546.4 934.5,1578.3 938.3,1578.3 942.2,1569.2 946,1578.3 949.9,1550.9 953.7,1578.3 957.5,1569.2 961.4,1573.7 965.2,1573.7 969.1,1578.3 972.9,1573.7 976.7,1578.3 980.6,1578.3 984.4,1578.3 988.3,1578.3 992.1,1578.3 995.9,1569.2 999.8,1578.3 1003.6,1569.2 1007.5,1569.2 1011.3,1578.3 1015.1,1573.7 1019,1578.3 1022.8,1560.1 1026.6,1560.1 1030.5,1578.3 1034.3,1569.2 1038.2,1573.7 1042,1569.2 1045.8,1569.2 1049.7,1578.3 1053.5,1573.7 1057.4,1569.2 1061.2,1578.3 1065,1578.3 1068.9,1578.3 1072.7,1560.1 1076.6,1578.3 1080.4,1578.3 1084.2,1573.7 1088.1,1578.3 1091.9,1569.2 1095.8,1578.3 1099.6,1573.7 1103.4,1578.3 1107.3,1578.3 1111.1,1578.3 1115,1573.7 1118.8,1573.7 1122.6,1569.2 1126.5,1573.7 1130.3,1569.2 1134.2,1564.6 1138,1578.3 1141.8,1573.7 1145.7,1578.3 1149.5,1578.3 1153.4,1564.6" fill="none" stroke="#fba692" stroke-width="3.7" stroke-linejoin="bevel" stroke-opacity="0.85"/>
<polygon points="235.7,1578.3 235.7,1523.6 239.5,1578.3 243.4,1573.7 247.2,1546.4 251.1,1541.8 254.9,1573.7 258.7,1550.9 262.6,1569.2 266.4,1573.7 270.3,1496.2 274.1,1546.4 277.9,1541.8 281.8,1578.3 285.6,1578.3 289.5,1541.8 293.3,1578.3 297.1,1514.4 301,1569.2 304.8,1560.1 308.7,1573.7 312.5,1578.3 316.3,1578.3 320.2,1546.4 324,1573.7 327.8,1578.3 331.7,1578.3 335.5,1578.3 339.4,1569.2 343.2,1569.2 347,1569.2 350.9,1578.3 354.7,1578.3 358.6,1564.6 362.4,1564.6 366.2,1560.1 370.1,1564.6 373.9,1569.2 377.8,1523.6 381.6,1578.3 385.4,1541.8 389.3,1487.1 393.1,1578.3 397,1578.3 400.8,1537.2 404.6,1573.7 408.5,1569.2 412.3,1546.4 416.2,1523.6 420,1537.2 423.8,1578.3 427.7,1555.5 431.5,1578.3 435.4,1546.4 439.2,1550.9 443,1546.4 446.9,1564.6 450.7,1537.2 454.6,1578.3 458.4,1569.2 462.2,1573.7 466.1,1560.1 469.9,1573.7 473.8,1564.6 477.6,1569.2 481.4,1578.3 485.3,1578.3 489.1,1546.4 492.9,1578.3 496.8,1564.6 500.6,1578.3 504.5,1573.7 508.3,1578.3 512.1,1573.7 516,1564.6 519.8,1564.6 523.7,1573.7 527.5,1487.1 531.3,1578.3 535.2,1573.7 539,1560.1 542.9,1564.6 546.7,1564.6 550.5,1560.1 554.4,1569.2 558.2,1573.7 562.1,1550.9 565.9,1578.3 569.7,1573.7 573.6,1578.3 577.4,1578.3 581.3,1569.2 585.1,1569.2 588.9,1555.5 592.8,1550.9 596.6,1569.2 600.5,1578.3 604.3,1569.2 608.1,1578.3 612,1546.4 615.8,1578.3 619.7,1564.6 623.5,1569.2 627.3,1573.7 631.2,1564.6 635,1569.2 638.9,1578.3 642.7,1569.2 646.5,1578.3 650.4,1541.8 654.2,1541.8 658.1,1578.3 661.9,1573.7 665.7,1569.2 669.6,1578.3 673.4,1560.1 677.2,1550.9 681.1,1573.7 684.9,1537.2 688.8,1541.8 692.6,1578.3 696.4,1578.3 700.3,1573.7 704.1,1546.4 708,1555.5 711.8,1569.2 715.6,1569.2 719.5,1578.3 723.3,1573.7 727.2,1578.3 731,1569.2 734.8,1578.3 738.7,1560.1 742.5,1509.9 746.4,1573.7 750.2,1546.4 754,1537.2 757.9,1550.9 761.7,1560.1 765.6,1578.3 769.4,1578.3 773.2,1578.3 777.1,1573.7 780.9,1569.2 784.8,1537.2 788.6,1541.8 792.4,1573.7 796.3,1578.3 800.1,1537.2 804,1578.3 807.8,1550.9 811.6,1555.5 815.5,1537.2 819.3,1578.3 823.2,1578.3 827,1564.6 830.8,1578.3 834.7,1578.3 838.5,1578.3 842.4,1537.2 846.2,1578.3 850,1578.3 853.9,1578.3 857.7,1546.4 861.5,1541.8 865.4,1578.3 869.2,1564.6 873.1,1578.3 876.9,1578.3 880.7,1578.3 884.6,1578.3 888.4,1546.4 892.3,1537.2 896.1,1555.5 899.9,1550.9 903.8,1550.9 907.6,1578.3 911.5,1569.2 915.3,1578.3 919.1,1578.3 923,1537.2 926.8,1541.8 930.7,1541.8 934.5,1573.7 938.3,1569.2 942.2,1578.3 946,1573.7 949.9,1537.2 953.7,1578.3 957.5,1573.7 961.4,1573.7 965.2,1578.3 969.1,1578.3 972.9,1569.2 976.7,1573.7 980.6,1578.3 984.4,1578.3 988.3,1578.3 992.1,1578.3 995.9,1573.7 999.8,1578.3 1003.6,1578.3 1007.5,1578.3 1011.3,1569.2 1015.1,1578.3 1019,1569.2 1022.8,1578.3 1026.6,1578.3 1030.5,1578.3 1034.3,1578.3 1038.2,1578.3 1042,1509.9 1045.8,1555.5 1049.7,1578.3 1053.5,1560.1 1057.4,1573.7 1061.2,1555.5 1065,1578.3 1068.9,1578.3 1072.7,1578.3 1076.6,1578.3 1080.4,1573.7 1084.2,1578.3 1088.1,1573.7 1091.9,1578.3 1095.8,1578.3 1099.6,1578.3 1103.4,1573.7 1107.3,1573.7 1111.1,1564.6 1115,1578.3 1118.8,1569.2 1122.6,1564.6 1126.5,1578.3 1130.3,1578.3 1134.2,1578.3 1138,1578.3 1141.8,1578.3 1145.7,1573.7 1149.5,1573.7 1153.4,1573.7 1153.4,1578.3" fill="#c99ae6" fill-opacity="0.4"/>
<polyline points="235.7,1523.6 239.5,1578.3 243.4,1573.7 247.2,1546.4 251.1,1541.8 254.9,1573.7 258.7,1550.9 262.6,1569.2 266.4,1573.7 270.3,1496.2 274.1,1546.4 277.9,1541.8 281.8,1578.3 285.6,1578.3 289.5,1541.8 293.3,1578.3 297.1,1514.4 301,1569.2 304.8,1560.1 308.7,1573.7 312.5,1578.3 316.3,1578.3 320.2,1546.4 324,1573.7 327.8,1578.3 331.7,1578.3 335.5,1578.3 339.4,1569.2 343.2,1569.2 347,1569.2 350.9,1578.3 354.7,1578.3 358.6,1564.6 362.4,1564.6 366.2,1560.1 370.1,1564.6 373.9,1569.2 377.8,1523.6 381.6,1578.3 385.4,1541.8 389.3,1487.1 393.1,1578.3 397,1578.3 400.8,1537.2 404.6,1573.7 408.5,1569.2 412.3,1546.4 416.2,1523.6 420,1537.2 423.8,1578.3 427.7,1555.5 431.5,1578.3 435.4,1546.4 439.2,1550.9 443,1546.4 446.9,1564.6 450.7,1537.2 454.6,1578.3 458.4,1569.2 462.2,1573.7 466.1,1560.1 469.9,1573.7 473.8,1564.6 477.6,1569.2 481.4,1578.3 485.3,1578.3 489.1,1546.4 492.9,1578.3 496.8,1564.6 500.6,1578.3 504.5,1573.7 508.3,1578.3 512.1,1573.7 516,1564.6 519.8,1564.6 523.7,1573.7 527.5,1487.1 531.3,1578.3 535.2,1573.7 539,1560.1 542.9,1564.6 546.7,1564.6 550.5,1560.1 554.4,1569.2 558.2,1573.7 562.1,1550.9 565.9,1578.3 569.7,1573.7 573.6,1578.3 577.4,1578.3 581.3,1569.2 585.1,1569.2 588.9,1555.5 592.8,1550.9 596.6,1569.2 600.5,1578.3 604.3,1569.2 608.1,1578.3 612,1546.4 615.8,1578.3 619.7,1564.6 623.5,1569.2 627.3,1573.7 631.2,1564.6 635,1569.2 638.9,1578.3 642.7,1569.2 646.5,1578.3 650.4,1541.8 654.2,1541.8 658.1,1578.3 661.9,1573.7 665.7,1569.2 669.6,1578.3 673.4,1560.1 677.2,1550.9 681.1,1573.7 684.9,1537.2 688.8,1541.8 692.6,1578.3 696.4,1578.3 700.3,1573.7 704.1,1546.4 708,1555.5 711.8,1569.2 715.6,1569.2 719.5,1578.3 723.3,1573.7 727.2,1578.3 731,1569.2 734.8,1578.3 738.7,1560.1 742.5,1509.9 746.4,1573.7 750.2,1546.4 754,1537.2 757.9,1550.9 761.7,1560.1 765.6,1578.3 769.4,1578.3 773.2,1578.3 777.1,1573.7 780.9,1569.2 784.8,1537.2 788.6,1541.8 792.4,1573.7 796.3,1578.3 800.1,1537.2 804,1578.3 807.8,1550.9 811.6,1555.5 815.5,1537.2 819.3,1578.3 823.2,1578.3 827,1564.6 830.8,1578.3 834.7,1578.3 838.5,1578.3 842.4,1537.2 846.2,1578.3 850,1578.3 853.9,1578.3 857.7,1546.4 861.5,1541.8 865.4,1578.3 869.2,1564.6 873.1,1578.3 876.9,1578.3 880.7,1578.3 884.6,1578.3 888.4,1546.4 892.3,1537.2 896.1,1555.5 899.9,1550.9 903.8,1550.9 907.6,1578.3 911.5,1569.2 915.3,1578.3 919.1,1578.3 923,1537.2 926.8,1541.8 930.7,1541.8 934.5,1573.7 938.3,1569.2 942.2,1578.3 946,1573.7 949.9,1537.2 953.7,1578.3 957.5,1573.7 961.4,1573.7 965.2,1578.3 969.1,1578.3 972.9,1569.2 976.7,1573.7 980.6,1578.3 984.4,1578.3 988.3,1578.3 992.1,1578.3 995.9,1573.7 999.8,1578.3 1003.6,1578.3 1007.5,1578.3 1011.3,1569.2 1015.1,1578.3 1019,1569.2 1022.8,1578.3 1026.6,1578.3 1030.5,1578.3 1034.3,1578.3 1038.2,1578.3 1042,1509.9 1045.8,1555.5 1049.7,1578.3 1053.5,1560.1 1057.4,1573.7 1061.2,1555.5 1065,1578.3 1068.9,1578.3 1072.7,1578.3 1076.6,1578.3 1080.4,1573.7 1084.2,1578.3 1088.1,1573.7 1091.9,1578.3 1095.8,1578.3 1099.6,1578.3 1103.4,1573.7 1107.3,1573.7 1111.1,1564.6 1115,1578.3 1118.8,1569.2 1122.6,1564.6 1126.5,1578.3 1130.3,1578.3 1134.2,1578.3 1138,1578.3 1141.8,1578.3 1145.7,1573.7 1149.5,1573.7 1153.4,1573.7" fill="none" stroke="#c99ae6" stroke-width="3.7" stroke-linejoin="bevel" stroke-opacity="0.85"/>
<polygon points="235.7,1578.3 235.7,1578.3 239.5,1578.3 243.4,1578.3 247.2,1569.2 251.1,1541.8 254.9,1569.2 258.7,1578.3 262.6,1578.3 266.4,1573.7 270.3,1578.3 274.1,1573.7 277.9,1578.3 281.8,1569.2 285.6,1546.4 289.5,1578.3 293.3,1578.3 297.1,1578.3 301,1569.2 304.8,1578.3 308.7,1541.8 312.5,1541.8 316.3,1578.3 320.2,1573.7 324,1573.7 327.8,1573.7 331.7,1446 335.5,1578.3 339.4,1569.2 343.2,1578.3 347,1569.2 350.9,1578.3 354.7,1578.3 358.6,1569.2 362.4,1546.4 366.2,1578.3 370.1,1573.7 373.9,1578.3 377.8,1578.3 381.6,1578.3 385.4,1573.7 389.3,1578.3 393.1,1573.7 397,1578.3 400.8,1555.5 404.6,1578.3 408.5,1541.8 412.3,1573.7 416.2,1569.2 420,1573.7 423.8,1564.6 427.7,1578.3 431.5,1578.3 435.4,1578.3 439.2,1541.8 443,1578.3 446.9,1578.3 450.7,1578.3 454.6,1569.2 458.4,1546.4 462.2,1578.3 466.1,1578.3 469.9,1578.3 473.8,1578.3 477.6,1573.7 481.4,1578.3 485.3,1573.7 489.1,1578.3 492.9,1569.2 496.8,1578.3 500.6,1573.7 504.5,1569.2 508.3,1578.3 512.1,1573.7 516,1541.8 519.8,1573.7 523.7,1550.9 527.5,1555.5 531.3,1573.7 535.2,1569.2 539,1578.3 542.9,1573.7 546.7,1555.5 550.5,1560.1 554.4,1573.7 558.2,1573.7 562.1,1569.2 565.9,1573.7 569.7,1564.6 573.6,1573.7 577.4,1578.3 581.3,1578.3 585.1,1578.3 588.9,1546.4 592.8,1573.7 596.6,1569.2 600.5,1573.7 604.3,1546.4 608.1,1578.3 612,1509.9 615.8,1555.5 619.7,1573.7 623.5,1560.1 627.3,1578.3 631.2,1573.7 635,1578.3 638.9,1569.2 642.7,1578.3 646.5,1569.2 650.4,1578.3 654.2,1573.7 658.1,1550.9 661.9,1578.3 665.7,1550.9 669.6,1573.7 673.4,1573.7 677.2,1550.9 681.1,1569.2 684.9,1573.7 688.8,1546.4 692.6,1541.8 696.4,1569.2 700.3,1578.3 704.1,1546.4 708,1573.7 711.8,1578.3 715.6,1573.7 719.5,1573.7 723.3,1564.6 727.2,1578.3 731,1569.2 734.8,1564.6 738.7,1546.4 742.5,1578.3 746.4,1560.1 750.2,1546.4 754,1578.3 757.9,1578.3 761.7,1573.7 765.6,1578.3 769.4,1550.9 773.2,1578.3 777.1,1578.3 780.9,1550.9 784.8,1578.3 788.6,1578.3 792.4,1578.3 796.3,1578.3 800.1,1541.8 804,1550.9 807.8,1578.3 811.6,1578.3 815.5,1560.1 819.3,1569.2 823.2,1560.1 827,1578.3 830.8,1569.2 834.7,1541.8 838.5,1541.8 842.4,1578.3 846.2,1578.3 850,1578.3 853.9,1578.3 857.7,1573.7 861.5,1555.5 865.4,1578.3 869.2,1578.3 873.1,1573.7 876.9,1550.9 880.7,1573.7 884.6,1555.5 888.4,1578.3 892.3,1569.2 896.1,1573.7 899.9,1550.9 903.8,1564.6 907.6,1560.1 911.5,1573.7 915.3,1573.7 919.1,1573.7 923,1546.4 926.8,1541.8 930.7,1578.3 934.5,1578.3 938.3,1578.3 942.2,1578.3 946,1578.3 949.9,1578.3 953.7,1578.3 957.5,1578.3 961.4,1578.3 965.2,1578.3 969.1,1564.6 972.9,1578.3 976.7,1578.3 980.6,1560.1 984.4,1564.6 988.3,1569.2 992.1,1578.3 995.9,1569.2 999.8,1564.6 1003.6,1578.3 1007.5,1578.3 1011.3,1569.2 1015.1,1578.3 1019,1578.3 1022.8,1578.3 1026.6,1578.3 1030.5,1514.4 1034.3,1487.1 1038.2,1578.3 1042,1578.3 1045.8,1578.3 1049.7,1569.2 1053.5,1560.1 1057.4,1560.1 1061.2,1578.3 1065,1573.7 1068.9,1578.3 1072.7,1569.2 1076.6,1569.2 1080.4,1569.2 1084.2,1560.1 1088.1,1578.3 1091.9,1569.2 1095.8,1569.2 1099.6,1578.3 1103.4,1578.3 1107.3,1578.3 1111.1,1578.3 1115,1569.2 1118.8,1578.3 1122.6,1560.1 1126.5,1578.3 1130.3,1569.2 1134.2,1578.3 1138,1578.3 1141.8,1578.3 1145.7,1578.3 1149.5,1560.1 1153.4,1569.2 1153.4,1578.3" fill="#aeaeb4" fill-opacity="0.4"/>
<polyline points="235.7,1578.3 239.5,1578.3 243.4,1578.3 247.2,1569.2 251.1,1541.8 254.9,1569.2 258.7,1578.3 262.6,1578.3 266.4,1573.7 270.3,1578.3 274.1,1573.7 277.9,1578.3 281.8,1569.2 285.6,1546.4 289.5,1578.3 293.3,1578.3 297.1,1578.3 301,1569.2 304.8,1578.3 308.7,1541.8 312.5,1541.8 316.3,1578.3 320.2,1573.7 324,1573.7 327.8,1573.7 331.7,1446 335.5,1578.3 339.4,1569.2 343.2,1578.3 347,1569.2 350.9,1578.3 354.7,1578.3 358.6,1569.2 362.4,1546.4 366.2,1578.3 370.1,1573.7 373.9,1578.3 377.8,1578.3 381.6,1578.3 385.4,1573.7 389.3,1578.3 393.1,1573.7 397,1578.3 400.8,1555.5 404.6,1578.3 408.5,1541.8 412.3,1573.7 416.2,1569.2 420,1573.7 423.8,1564.6 427.7,1578.3 431.5,1578.3 435.4,1578.3 439.2,1541.8 443,1578.3 446.9,1578.3 450.7,1578.3 454.6,1569.2 458.4,1546.4 462.2,1578.3 466.1,1578.3 469.9,1578.3 473.8,1578.3 477.6,1573.7 481.4,1578.3 485.3,1573.7 489.1,1578.3 492.9,1569.2 496.8,1578.3 500.6,1573.7 504.5,1569.2 508.3,1578.3 512.1,1573.7 516,1541.8 519.8,1573.7 523.7,1550.9 527.5,1555.5 531.3,1573.7 535.2,1569.2 539,1578.3 542.9,1573.7 546.7,1555.5 550.5,1560.1 554.4,1573.7 558.2,1573.7 562.1,1569.2 565.9,1573.7 569.7,1564.6 573.6,1573.7 577.4,1578.3 581.3,1578.3 585.1,1578.3 588.9,1546.4 592.8,1573.7 596.6,1569.2 600.5,1573.7 604.3,1546.4 608.1,1578.3 612,1509.9 615.8,1555.5 619.7,1573.7 623.5,1560.1 627.3,1578.3 631.2,1573.7 635,1578.3 638.9,1569.2 642.7,1578.3 646.5,1569.2 650.4,1578.3 654.2,1573.7 658.1,1550.9 661.9,1578.3 665.7,1550.9 669.6,1573.7 673.4,1573.7 677.2,1550.9 681.1,1569.2 684.9,1573.7 688.8,1546.4 692.6,1541.8 696.4,1569.2 700.3,1578.3 704.1,1546.4 708,1573.7 711.8,1578.3 715.6,1573.7 719.5,1573.7 723.3,1564.6 727.2,1578.3 731,1569.2 734.8,1564.6 738.7,1546.4 742.5,1578.3 746.4,1560.1 750.2,1546.4 754,1578.3 757.9,1578.3 761.7,1573.7 765.6,1578.3 769.4,1550.9 773.2,1578.3 777.1,1578.3 780.9,1550.9 784.8,1578.3 788.6,1578.3 792.4,1578.3 796.3,1578.3 800.1,1541.8 804,1550.9 807.8,1578.3 811.6,1578.3 815.5,1560.1 819.3,1569.2 823.2,1560.1 827,1578.3 830.8,1569.2 834.7,1541.8 838.5,1541.8 842.4,1578.3 846.2,1578.3 850,1578.3 853.9,1578.3 857.7,1573.7 861.5,1555.5 865.4,1578.3 869.2,1578.3 873.1,1573.7 876.9,1550.9 880.7,1573.7 884.6,1555.5 888.4,1578.3 892.3,1569.2 896.1,1573.7 899.9,1550.9 903.8,1564.6 907.6,1560.1 911.5,1573.7 915.3,1573.7 919.1,1573.7 923,1546.4 926.8,1541.8 930.7,1578.3 934.5,1578.3 938.3,1578.3 942.2,1578.3 946,1578.3 949.9,1578.3 953.7,1578.3 957.5,1578.3 961.4,1578.3 965.2,1578.3 969.1,1564.6 972.9,1578.3 976.7,1578.3 980.6,1560.1 984.4,1564.6 988.3,1569.2 992.1,1578.3 995.9,1569.2 999.8,1564.6 1003.6,1578.3 1007.5,1578.3 1011.3,1569.2 1015.1,1578.3 1019,1578.3 1022.8,1578.3 1026.6,1578.3 1030.5,1514.4 1034.3,1487.1 1038.2,1578.3 1042,1578.3 1045.8,1578.3 1049.7,1569.2 1053.5,1560.1 1057.4,1560.1 1061.2,1578.3 1065,1573.7 1068.9,1578.3 1072.7,1569.2 1076.6,1569.2 1080.4,1569.2 1084.2,1560.1 1088.1,1578.3 1091.9,1569.2 1095.8,1569.2 1099.6,1578.3 1103.4,1578.3 1107.3,1578.3 1111.1,1578.3 1115,1569.2 1118.8,1578.3 1122.6,1560.1 1126.5,1578.3 1130.3,1569.2 1134.2,1578.3 1138,1578.3 1141.8,1578.3 1145.7,1578.3 1149.5,1560.1 1153.4,1569.2" fill="none" stroke="#aeaeb4" stroke-width="3.7" stroke-linejoin="bevel" stroke-opacity="0.85"/>
<polygon points="235.7,1578.3 235.7,1578.3 239.5,1573.7 243.4,1578.3 247.2,1578.3 251.1,1573.7 254.9,1578.3 258.7,1578.3 262.6,1546.4 266.4,1555.5 270.3,1541.8 274.1,1541.8 277.9,1573.7 281.8,1578.3 285.6,1578.3 289.5,1569.2 293.3,1573.7 297.1,1578.3 301,1541.8 304.8,1578.3 308.7,1573.7 312.5,1555.5 316.3,1578.3 320.2,1550.9 324,1578.3 327.8,1578.3 331.7,1569.2 335.5,1546.4 339.4,1569.2 343.2,1560.1 347,1578.3 350.9,1564.6 354.7,1573.7 358.6,1573.7 362.4,1546.4 366.2,1541.8 370.1,1578.3 373.9,1555.5 377.8,1546.4 381.6,1550.9 385.4,1578.3 389.3,1569.2 393.1,1578.3 397,1573.7 400.8,1578.3 404.6,1578.3 408.5,1578.3 412.3,1573.7 416.2,1569.2 420,1555.5 423.8,1550.9 427.7,1555.5 431.5,1578.3 435.4,1505.3 439.2,1555.5 443,1546.4 446.9,1578.3 450.7,1578.3 454.6,1546.4 458.4,1578.3 462.2,1555.5 466.1,1578.3 469.9,1578.3 473.8,1569.2 477.6,1573.7 481.4,1578.3 485.3,1578.3 489.1,1578.3 492.9,1560.1 496.8,1569.2 500.6,1578.3 504.5,1560.1 508.3,1573.7 512.1,1569.2 516,1578.3 519.8,1569.2 523.7,1569.2 527.5,1578.3 531.3,1541.8 535.2,1560.1 539,1569.2 542.9,1573.7 546.7,1564.6 550.5,1569.2 554.4,1541.8 558.2,1564.6 562.1,1578.3 565.9,1578.3 569.7,1578.3 573.6,1569.2 577.4,1555.5 581.3,1578.3 585.1,1555.5 588.9,1573.7 592.8,1578.3 596.6,1578.3 600.5,1578.3 604.3,1550.9 608.1,1555.5 612,1578.3 615.8,1550.9 619.7,1578.3 623.5,1573.7 627.3,1573.7 631.2,1573.7 635,1569.2 638.9,1550.9 642.7,1578.3 646.5,1578.3 650.4,1578.3 654.2,1555.5 658.1,1578.3 661.9,1578.3 665.7,1560.1 669.6,1573.7 673.4,1578.3 677.2,1541.8 681.1,1573.7 684.9,1569.2 688.8,1578.3 692.6,1555.5 696.4,1578.3 700.3,1564.6 704.1,1573.7 708,1578.3 711.8,1578.3 715.6,1573.7 719.5,1555.5 723.3,1578.3 727.2,1564.6 731,1578.3 734.8,1578.3 738.7,1564.6 742.5,1578.3 746.4,1578.3 750.2,1569.2 754,1546.4 757.9,1569.2 761.7,1578.3 765.6,1578.3 769.4,1578.3 773.2,1578.3 777.1,1573.7 780.9,1578.3 784.8,1578.3 788.6,1573.7 792.4,1578.3 796.3,1569.2 800.1,1573.7 804,1541.8 807.8,1573.7 811.6,1569.2 815.5,1569.2 819.3,1578.3 823.2,1573.7 827,1578.3 830.8,1578.3 834.7,1573.7 838.5,1569.2 842.4,1573.7 846.2,1578.3 850,1573.7 853.9,1555.5 857.7,1569.2 861.5,1564.6 865.4,1573.7 869.2,1578.3 873.1,1555.5 876.9,1541.8 880.7,1550.9 884.6,1560.1 888.4,1546.4 892.3,1578.3 896.1,1578.3 899.9,1578.3 903.8,1578.3 907.6,1569.2 911.5,1573.7 915.3,1578.3 919.1,1550.9 923,1569.2 926.8,1578.3 930.7,1578.3 934.5,1578.3 938.3,1578.3 942.2,1578.3 946,1578.3 949.9,1541.8 953.7,1578.3 957.5,1578.3 961.4,1578.3 965.2,1578.3 969.1,1560.1 972.9,1578.3 976.7,1578.3 980.6,1569.2 984.4,1564.6 988.3,1569.2 992.1,1573.7 995.9,1569.2 999.8,1573.7 1003.6,1578.3 1007.5,1578.3 1011.3,1578.3 1015.1,1578.3 1019,1573.7 1022.8,1578.3 1026.6,1569.2 1030.5,1578.3 1034.3,1569.2 1038.2,1578.3 1042,1573.7 1045.8,1578.3 1049.7,1560.1 1053.5,1578.3 1057.4,1578.3 1061.2,1573.7 1065,1569.2 1068.9,1578.3 1072.7,1578.3 1076.6,1578.3 1080.4,1569.2 1084.2,1573.7 1088.1,1578.3 1091.9,1569.2 1095.8,1573.7 1099.6,1573.7 1103.4,1578.3 1107.3,1578.3 1111.1,1578.3 1115,1573.7 1118.8,1578.3 1122.6,1569.2 1126.5,1578.3 1130.3,1578.3 1134.2,1560.1 1138,1569.2 1141.8,1578.3 1145.7,1564.6 1149.5,1578.3 1153.4,1564.6 1153.4,1578.3" fill="#98cdf0" fill-opacity="0.4"/>
<polyline points="235.7,1578.3 239.5,1573.7 243.4,1578.3 247.2,1578.3 251.1,1573.7 254.9,1578.3 258.7,1578.3 262.6,1546.4 266.4,1555.5 270.3,1541.8 274.1,1541.8 277.9,1573.7 281.8,1578.3 285.6,1578.3 289.5,1569.2 293.3,1573.7 297.1,1578.3 301,1541.8 304.8,1578.3 308.7,1573.7 312.5,1555.5 316.3,1578.3 320.2,1550.9 324,1578.3 327.8,1578.3 331.7,1569.2 335.5,1546.4 339.4,1569.2 343.2,1560.1 347,1578.3 350.9,1564.6 354.7,1573.7 358.6,1573.7 362.4,1546.4 366.2,1541.8 370.1,1578.3 373.9,1555.5 377.8,1546.4 381.6,1550.9 385.4,1578.3 389.3,1569.2 393.1,1578.3 397,1573.7 400.8,1578.3 404.6,1578.3 408.5,1578.3 412.3,1573.7 416.2,1569.2 420,1555.5 423.8,1550.9 427.7,1555.5 431.5,1578.3 435.4,1505.3 439.2,1555.5 443,1546.4 446.9,1578.3 450.7,1578.3 454.6,1546.4 458.4,1578.3 462.2,1555.5 466.1,1578.3 469.9,1578.3 473.8,1569.2 477.6,1573.7 481.4,1578.3 485.3,1578.3 489.1,1578.3 492.9,1560.1 496.8,1569.2 500.6,1578.3 504.5,1560.1 508.3,1573.7 512.1,1569.2 516,1578.3 519.8,1569.2 523.7,1569.2 527.5,1578.3 531.3,1541.8 535.2,1560.1 539,1569.2 542.9,1573.7 546.7,1564.6 550.5,1569.2 554.4,1541.8 558.2,1564.6 562.1,1578.3 565.9,1578.3 569.7,1578.3 573.6,1569.2 577.4,1555.5 581.3,1578.3 585.1,1555.5 588.9,1573.7 592.8,1578.3 596.6,1578.3 600.5,1578.3 604.3,1550.9 608.1,1555.5 612,1578.3 615.8,1550.9 619.7,1578.3 623.5,1573.7 627.3,1573.7 631.2,1573.7 635,1569.2 638.9,1550.9 642.7,1578.3 646.5,1578.3 650.4,1578.3 654.2,1555.5 658.1,1578.3 661.9,1578.3 665.7,1560.1 669.6,1573.7 673.4,1578.3 677.2,1541.8 681.1,1573.7 684.9,1569.2 688.8,1578.3 692.6,1555.5 696.4,1578.3 700.3,1564.6 704.1,1573.7 708,1578.3 711.8,1578.3 715.6,1573.7 719.5,1555.5 723.3,1578.3 727.2,1564.6 731,1578.3 734.8,1578.3 738.7,1564.6 742.5,1578.3 746.4,1578.3 750.2,1569.2 754,1546.4 757.9,1569.2 761.7,1578.3 765.6,1578.3 769.4,1578.3 773.2,1578.3 777.1,1573.7 780.9,1578.3 784.8,1578.3 788.6,1573.7 792.4,1578.3 796.3,1569.2 800.1,1573.7 804,1541.8 807.8,1573.7 811.6,1569.2 815.5,1569.2 819.3,1578.3 823.2,1573.7 827,1578.3 830.8,1578.3 834.7,1573.7 838.5,1569.2 842.4,1573.7 846.2,1578.3 850,1573.7 853.9,1555.5 857.7,1569.2 861.5,1564.6 865.4,1573.7 869.2,1578.3 873.1,1555.5 876.9,1541.8 880.7,1550.9 884.6,1560.1 888.4,1546.4 892.3,1578.3 896.1,1578.3 899.9,1578.3 903.8,1578.3 907.6,1569.2 911.5,1573.7 915.3,1578.3 919.1,1550.9 923,1569.2 926.8,1578.3 930.7,1578.3 934.5,1578.3 938.3,1578.3 942.2,1578.3 946,1578.3 949.9,1541.8 953.7,1578.3 957.5,1578.3 961.4,1578.3 965.2,1578.3 969.1,1560.1 972.9,1578.3 976.7,1578.3 980.6,1569.2 984.4,1564.6 988.3,1569.2 992.1,1573.7 995.9,1569.2 999.8,1573.7 1003.6,1578.3 1007.5,1578.3 1011.3,1578.3 1015.1,1578.3 1019,1573.7 1022.8,1578.3 1026.6,1569.2 1030.5,1578.3 1034.3,1569.2 1038.2,1578.3 1042,1573.7 1045.8,1578.3 1049.7,1560.1 1053.5,1578.3 1057.4,1578.3 1061.2,1573.7 1065,1569.2 1068.9,1578.3 1072.7,1578.3 1076.6,1578.3 1080.4,1569.2 1084.2,1573.7 1088.1,1578.3 1091.9,1569.2 1095.8,1573.7 1099.6,1573.7 1103.4,1578.3 1107.3,1578.3 1111.1,1578.3 1115,1573.7 1118.8,1578.3 1122.6,1569.2 1126.5,1578.3 1130.3,1578.3 1134.2,1560.1 1138,1569.2 1141.8,1578.3 1145.7,1564.6 1149.5,1578.3 1153.4,1564.6" fill="none" stroke="#98cdf0" stroke-width="3.7" stroke-linejoin="bevel" stroke-opacity="0.85"/>
<polygon points="235.7,1578.3 235.7,1573.7 239.5,1569.2 243.4,1578.3 247.2,1578.3 251.1,1578.3 254.9,1578.3 258.7,1573.7 262.6,1569.2 266.4,1555.5 270.3,1578.3 274.1,1555.5 277.9,1560.1 281.8,1578.3 285.6,1569.2 289.5,1578.3 293.3,1573.7 297.1,1573.7 301,1546.4 304.8,1578.3 308.7,1569.2 312.5,1569.2 316.3,1578.3 320.2,1578.3 324,1578.3 327.8,1573.7 331.7,1560.1 335.5,1578.3 339.4,1573.7 343.2,1578.3 347,1560.1 350.9,1578.3 354.7,1578.3 358.6,1541.8 362.4,1573.7 366.2,1578.3 370.1,1569.2 373.9,1546.4 377.8,1573.7 381.6,1578.3 385.4,1578.3 389.3,1541.8 393.1,1555.5 397,1573.7 400.8,1578.3 404.6,1555.5 408.5,1573.7 412.3,1578.3 416.2,1578.3 420,1541.8 423.8,1578.3 427.7,1573.7 431.5,1578.3 435.4,1550.9 439.2,1550.9 443,1578.3 446.9,1578.3 450.7,1578.3 454.6,1578.3 458.4,1578.3 462.2,1578.3 466.1,1578.3 469.9,1564.6 473.8,1578.3 477.6,1573.7 481.4,1578.3 485.3,1564.6 489.1,1550.9 492.9,1578.3 496.8,1555.5 500.6,1578.3 504.5,1578.3 508.3,1578.3 512.1,1569.2 516,1573.7 519.8,1564.6 523.7,1578.3 527.5,1578.3 531.3,1569.2 535.2,1578.3 539,1578.3 542.9,1573.7 546.7,1578.3 550.5,1578.3 554.4,1578.3 558.2,1573.7 562.1,1560.1 565.9,1541.8 569.7,1569.2 573.6,1578.3 577.4,1578.3 581.3,1578.3 585.1,1578.3 588.9,1573.7 592.8,1569.2 596.6,1578.3 600.5,1573.7 604.3,1578.3 608.1,1578.3 612,1578.3 615.8,1578.3 619.7,1573.7 623.5,1564.6 627.3,1573.7 631.2,1578.3 635,1578.3 638.9,1441.4 642.7,1578.3 646.5,1578.3 650.4,1578.3 654.2,1569.2 658.1,1578.3 661.9,1578.3 665.7,1578.3 669.6,1573.7 673.4,1578.3 677.2,1541.8 681.1,1569.2 684.9,1569.2 688.8,1573.7 692.6,1573.7 696.4,1546.4 700.3,1578.3 704.1,1578.3 708,1541.8 711.8,1528.1 715.6,1573.7 719.5,1569.2 723.3,1569.2 727.2,1578.3 731,1569.2 734.8,1578.3 738.7,1578.3 742.5,1578.3 746.4,1578.3 750.2,1578.3 754,1578.3 757.9,1569.2 761.7,1519 765.6,1519 769.4,1578.3 773.2,1573.7 777.1,1578.3 780.9,1578.3 784.8,1578.3 788.6,1550.9 792.4,1573.7 796.3,1578.3 800.1,1578.3 804,1578.3 807.8,1446 811.6,1578.3 815.5,1569.2 819.3,1555.5 823.2,1578.3 827,1573.7 830.8,1578.3 834.7,1564.6 838.5,1573.7 842.4,1573.7 846.2,1569.2 850,1569.2 853.9,1541.8 857.7,1550.9 861.5,1564.6 865.4,1569.2 869.2,1555.5 873.1,1560.1 876.9,1578.3 880.7,1578.3 884.6,1578.3 888.4,1573.7 892.3,1569.2 896.1,1546.4 899.9,1573.7 903.8,1578.3 907.6,1555.5 911.5,1578.3 915.3,1573.7 919.1,1546.4 923,1578.3 926.8,1564.6 930.7,1541.8 934.5,1578.3 938.3,1569.2 942.2,1564.6 946,1560.1 949.9,1555.5 953.7,1578.3 957.5,1578.3 961.4,1578.3 965.2,1569.2 969.1,1578.3 972.9,1560.1 976.7,1564.6 980.6,1573.7 984.4,1578.3 988.3,1532.7 992.1,1578.3 995.9,1578.3 999.8,1578.3 1003.6,1578.3 1007.5,1578.3 1011.3,1578.3 1015.1,1569.2 1019,1578.3 1022.8,1578.3 1026.6,1578.3 1030.5,1578.3 1034.3,1578.3 1038.2,1573.7 1042,1569.2 1045.8,1569.2 1049.7,1573.7 1053.5,1578.3 1057.4,1578.3 1061.2,1578.3 1065,1578.3 1068.9,1578.3 1072.7,1578.3 1076.6,1573.7 1080.4,1578.3 1084.2,1578.3 1088.1,1560.1 1091.9,1569.2 1095.8,1578.3 1099.6,1569.2 1103.4,1578.3 1107.3,1578.3 1111.1,1578.3 1115,1569.2 1118.8,1569.2 1122.6,1578.3 1126.5,1578.3 1130.3,1578.3 1134.2,1569.2 1138,1578.3 1141.8,1578.3 1145.7,1578.3 1149.5,1578.3 1153.4,1578.3 1153.4,1578.3" fill="#b5807c" fill-opacity="0.4"/>
<polyline points="235.7,1573.7 239.5,1569.2 243.4,1578.3 247.2,1578.3 251.1,1578.3 254.9,1578.3 258.7,1573.7 262.6,1569.2 266.4,1555.5 270.3,1578.3 274.1,1555.5 277.9,1560.1 281.8,1578.3 285.6,1569.2 289.5,1578.3 293.3,1573.7 297.1,1573.7 301,1546.4 304.8,1578.3 308.7,1569.2 312.5,1569.2 316.3,1578.3 320.2,1578.3 324,1578.3 327.8,1573.7 331.7,1560.1 335.5,1578.3 339.4,1573.7 343.2,1578.3 347,1560.1 350.9,1578.3 354.7,1578.3 358.6,1541.8 362.4,1573.7 366.2,1578.3 370.1,1569.2 373.9,1546.4 377.8,1573.7 381.6,1578.3 385.4,1578.3 389.3,1541.8 393.1,1555.5 397,1573.7 400.8,1578.3 404.6,1555.5 408.5,1573.7 412.3,1578.3 416.2,1578.3 420,1541.8 423.8,1578.3 427.7,1573.7 431.5,1578.3 435.4,1550.9 439.2,1550.9 443,1578.3 446.9,1578.3 450.7,1578.3 454.6,1578.3 458.4,1578.3 462.2,1578.3 466.1,1578.3 469.9,1564.6 473.8,1578.3 477.6,1573.7 481.4,1578.3 485.3,1564.6 489.1,1550.9 492.9,1578.3 496.8,1555.5 500.6,1578.3 504.5,1578.3 508.3,1578.3 512.1,1569.2 516,1573.7 519.8,1564.6 523.7,1578.3 527.5,1578.3 531.3,1569.2 535.2,1578.3 539,1578.3 542.9,1573.7 546.7,1578.3 550.5,1578.3 554.4,1578.3 558.2,1573.7 562.1,1560.1 565.9,1541.8 569.7,1569.2 573.6,1578.3 577.4,1578.3 581.3,1578.3 585.1,1578.3 588.9,1573.7 592.8,1569.2 596.6,1578.3 600.5,1573.7 604.3,1578.3 608.1,1578.3 612,1578.3 615.8,1578.3 619.7,1573.7 623.5,1564.6 627.3,1573.7 631.2,1578.3 635,1578.3 638.9,1441.4 642.7,1578.3 646.5,1578.3 650.4,1578.3 654.2,1569.2 658.1,1578.3 661.9,1578.3 665.7,1578.3 669.6,1573.7 673.4,1578.3 677.2,1541.8 681.1,1569.2 684.9,1569.2 688.8,1573.7 692.6,1573.7 696.4,1546.4 700.3,1578.3 704.1,1578.3 708,1541.8 711.8,1528.1 715.6,1573.7 719.5,1569.2 723.3,1569.2 727.2,1578.3 731,1569.2 734.8,1578.3 738.7,1578.3 742.5,1578.3 746.4,1578.3 750.2,1578.3 754,1578.3 757.9,1569.2 761.7,1519 765.6,1519 769.4,1578.3 773.2,1573.7 777.1,1578.3 780.9,1578.3 784.8,1578.3 788.6,1550.9 792.4,1573.7 796.3,1578.3 800.1,1578.3 804,1578.3 807.8,1446 811.6,1578.3 815.5,1569.2 819.3,1555.5 823.2,1578.3 827,1573.7 830.8,1578.3 834.7,1564.6 838.5,1573.7 842.4,1573.7 846.2,1569.2 850,1569.2 853.9,1541.8 857.7,1550.9 861.5,1564.6 865.4,1569.2 869.2,1555.5 873.1,1560.1 876.9,1578.3 880.7,1578.3 884.6,1578.3 888.4,1573.7 892.3,1569.2 896.1,1546.4 899.9,1573.7 903.8,1578.3 907.6,1555.5 911.5,1578.3 915.3,1573.7 919.1,1546.4 923,1578.3 926.8,1564.6 930.7,1541.8 934.5,1578.3 938.3,1569.2 942.2,1564.6 946,1560.1 949.9,1555.5 953.7,1578.3 957.5,1578.3 961.4,1578.3 965.2,1569.2 969.1,1578.3 972.9,1560.1 976.7,1564.6 980.6,1573.7 984.4,1578.3 988.3,1532.7 992.1,1578.3 995.9,1578.3 999.8,1578.3 1003.6,1578.3 1007.5,1578.3 1011.3,1578.3 1015.1,1569.2 1019,1578.3 1022.8,1578.3 1026.6,1578.3 1030.5,1578.3 1034.3,1578.3 1038.2,1573.7 1042,1569.2 1045.8,1569.2 1049.7,1573.7 1053.5,1578.3 1057.4,1578.3 1061.2,1578.3 1065,1578.3 1068.9,1578.3 1072.7,1578.3 1076.6,1573.7 1080.4,1578.3 1084.2,1578.3 1088.1,1560.1 1091.9,1569.2 1095.8,1578.3 1099.6,1569.2 1103.4,1578.3 1107.3,1578.3 1111.1,1578.3 1115,1569.2 1118.8,1569.2 1122.6,1578.3 1126.5,1578.3 1130.3,1578.3 1134.2,1569.2 1138,1578.3 1141.8,1578.3 1145.7,1578.3 1149.5,1578.3 1153.4,1578.3" fill="none" stroke="#b5807c" stroke-width="3.7" stroke-linejoin="bevel" stroke-opacity="0.85"/>
<polygon points="235.7,1578.3 235.7,1573.7 239.5,1573.7 243.4,1569.2 247.2,1578.3 251.1,1550.9 254.9,1578.3 258.7,1578.3 262.6,1569.2 266.4,1564.6 270.3,1578.3 274.1,1569.2 277.9,1573.7 281.8,1569.2 285.6,1573.7 289.5,1578.3 293.3,1578.3 297.1,1573.7 301,1578.3 304.8,1578.3 308.7,1569.2 312.5,1569.2 316.3,1578.3 320.2,1573.7 324,1578.3 327.8,1564.6 331.7,1555.5 335.5,1564.6 339.4,1564.6 343.2,1578.3 347,1578.3 350.9,1560.1 354.7,1578.3 358.6,1578.3 362.4,1573.7 366.2,1578.3 370.1,1573.7 373.9,1569.2 377.8,1578.3 381.6,1578.3 385.4,1573.7 389.3,1569.2 393.1,1578.3 397,1569.2 400.8,1578.3 404.6,1578.3 408.5,1578.3 412.3,1573.7 416.2,1578.3 420,1569.2 423.8,1555.5 427.7,1546.4 431.5,1578.3 435.4,1569.2 439.2,1569.2 443,1578.3 446.9,1578.3 450.7,1573.7 454.6,1569.2 458.4,1550.9 462.2,1564.6 466.1,1546.4 469.9,1578.3 473.8,1569.2 477.6,1578.3 481.4,1573.7 485.3,1573.7 489.1,1578.3 492.9,1578.3 496.8,1578.3 500.6,1569.2 504.5,1569.2 508.3,1573.7 512.1,1578.3 516,1550.9 519.8,1578.3 523.7,1555.5 527.5,1569.2 531.3,1573.7 535.2,1569.2 539,1578.3 542.9,1569.2 546.7,1550.9 550.5,1573.7 554.4,1578.3 558.2,1569.2 562.1,1560.1 565.9,1578.3 569.7,1569.2 573.6,1555.5 577.4,1578.3 581.3,1578.3 585.1,1578.3 588.9,1578.3 592.8,1578.3 596.6,1560.1 600.5,1573.7 604.3,1578.3 608.1,1573.7 612,1509.9 615.8,1573.7 619.7,1578.3 623.5,1546.4 627.3,1569.2 631.2,1546.4 635,1569.2 638.9,1569.2 642.7,1578.3 646.5,1569.2 650.4,1573.7 654.2,1578.3 658.1,1578.3 661.9,1578.3 665.7,1578.3 669.6,1578.3 673.4,1578.3 677.2,1573.7 681.1,1578.3 684.9,1560.1 688.8,1578.3 692.6,1555.5 696.4,1555.5 700.3,1578.3 704.1,1578.3 708,1573.7 711.8,1578.3 715.6,1578.3 719.5,1578.3 723.3,1578.3 727.2,1578.3 731,1573.7 734.8,1550.9 738.7,1578.3 742.5,1578.3 746.4,1569.2 750.2,1569.2 754,1573.7 757.9,1578.3 761.7,1578.3 765.6,1578.3 769.4,1573.7 773.2,1578.3 777.1,1573.7 780.9,1578.3 784.8,1573.7 788.6,1578.3 792.4,1578.3 796.3,1578.3 800.1,1560.1 804,1578.3 807.8,1578.3 811.6,1578.3 815.5,1578.3 819.3,1578.3 823.2,1573.7 827,1578.3 830.8,1578.3 834.7,1578.3 838.5,1573.7 842.4,1578.3 846.2,1578.3 850,1578.3 853.9,1573.7 857.7,1578.3 861.5,1546.4 865.4,1578.3 869.2,1569.2 873.1,1546.4 876.9,1569.2 880.7,1564.6 884.6,1578.3 888.4,1546.4 892.3,1573.7 896.1,1578.3 899.9,1578.3 903.8,1578.3 907.6,1578.3 911.5,1569.2 915.3,1573.7 919.1,1427.8 923,1578.3 926.8,1550.9 930.7,1569.2 934.5,1578.3 938.3,1569.2 942.2,1578.3 946,1578.3 949.9,1573.7 953.7,1573.7 957.5,1564.6 961.4,1573.7 965.2,1569.2 969.1,1578.3 972.9,1578.3 976.7,1578.3 980.6,1560.1 984.4,1578.3 988.3,1573.7 992.1,1578.3 995.9,1578.3 999.8,1573.7 1003.6,1569.2 1007.5,1578.3 1011.3,1573.7 1015.1,1578.3 1019,1578.3 1022.8,1578.3 1026.6,1573.7 1030.5,1560.1 1034.3,1578.3 1038.2,1578.3 1042,1578.3 1045.8,1578.3 1049.7,1573.7 1053.5,1573.7 1057.4,1569.2 1061.2,1569.2 1065,1578.3 1068.9,1578.3 1072.7,1578.3 1076.6,1569.2 1080.4,1569.2 1084.2,1573.7 1088.1,1564.6 1091.9,1578.3 1095.8,1578.3 1099.6,1578.3 1103.4,1569.2 1107.3,1569.2 1111.1,1573.7 1115,1578.3 1118.8,1564.6 1122.6,1564.6 1126.5,1578.3 1130.3,1573.7 1134.2,1578.3 1138,1560.1 1141.8,1578.3 1145.7,1578.3 1149.5,1578.3 1153.4,1578.3 1153.4,1578.3" fill="#d8b9ae" fill-opacity="0.4"/>
<polyline points="235.7,1573.7 239.5,1573.7 243.4,1569.2 247.2,1578.3 251.1,1550.9 254.9,1578.3 258.7,1578.3 262.6,1569.2 266.4,1564.6 270.3,1578.3 274.1,1569.2 277.9,1573.7 281.8,1569.2 285.6,1573.7 289.5,1578.3 293.3,1578.3 297.1,1573.7 301,1578.3 304.8,1578.3 308.7,1569.2 312.5,1569.2 316.3,1578.3 320.2,1573.7 324,1578.3 327.8,1564.6 331.7,1555.5 335.5,1564.6 339.4,1564.6 343.2,1578.3 347,1578.3 350.9,1560.1 354.7,1578.3 358.6,1578.3 362.4,1573.7 366.2,1578.3 370.1,1573.7 373.9,1569.2 377.8,1578.3 381.6,1578.3 385.4,1573.7 389.3,1569.2 393.1,1578.3 397,1569.2 400.8,1578.3 404.6,1578.3 408.5,1578.3 412.3,1573.7 416.2,1578.3 420,1569.2 423.8,1555.5 427.7,1546.4 431.5,1578.3 435.4,1569.2 439.2,1569.2 443,1578.3 446.9,1578.3 450.7,1573.7 454.6,1569.2 458.4,1550.9 462.2,1564.6 466.1,1546.4 469.9,1578.3 473.8,1569.2 477.6,1578.3 481.4,1573.7 485.3,1573.7 489.1,1578.3 492.9,1578.3 496.8,1578.3 500.6,1569.2 504.5,1569.2 508.3,1573.7 512.1,1578.3 516,1550.9 519.8,1578.3 523.7,1555.5 527.5,1569.2 531.3,1573.7 535.2,1569.2 539,1578.3 542.9,1569.2 546.7,1550.9 550.5,1573.7 554.4,1578.3 558.2,1569.2 562.1,1560.1 565.9,1578.3 569.7,1569.2 573.6,1555.5 577.4,1578.3 581.3,1578.3 585.1,1578.3 588.9,1578.3 592.8,1578.3 596.6,1560.1 600.5,1573.7 604.3,1578.3 608.1,1573.7 612,1509.9 615.8,1573.7 619.7,1578.3 623.5,1546.4 627.3,1569.2 631.2,1546.4 635,1569.2 638.9,1569.2 642.7,1578.3 646.5,1569.2 650.4,1573.7 654.2,1578.3 658.1,1578.3 661.9,1578.3 665.7,1578.3 669.6,1578.3 673.4,1578.3 677.2,1573.7 681.1,1578.3 684.9,1560.1 688.8,1578.3 692.6,1555.5 696.4,1555.5 700.3,1578.3 704.1,1578.3 708,1573.7 711.8,1578.3 715.6,1578.3 719.5,1578.3 723.3,1578.3 727.2,1578.3 731,1573.7 734.8,1550.9 738.7,1578.3 742.5,1578.3 746.4,1569.2 750.2,1569.2 754,1573.7 757.9,1578.3 761.7,1578.3 765.6,1578.3 769.4,1573.7 773.2,1578.3 777.1,1573.7 780.9,1578.3 784.8,1573.7 788.6,1578.3 792.4,1578.3 796.3,1578.3 800.1,1560.1 804,1578.3 807.8,1578.3 811.6,1578.3 815.5,1578.3 819.3,1578.3 823.2,1573.7 827,1578.3 830.8,1578.3 834.7,1578.3 838.5,1573.7 842.4,1578.3 846.2,1578.3 850,1578.3 853.9,1573.7 857.7,1578.3 861.5,1546.4 865.4,1578.3 869.2,1569.2 873.1,1546.4 876.9,1569.2 880.7,1564.6 884.6,1578.3 888.4,1546.4 892.3,1573.7 896.1,1578.3 899.9,1578.3 903.8,1578.3 907.6,1578.3 911.5,1569.2 915.3,1573.7 919.1,1427.8 923,1578.3 926.8,1550.9 930.7,1569.2 934.5,1578.3 938.3,1569.2 942.2,1578.3 946,1578.3 949.9,1573.7 953.7,1573.7 957.5,1564.6 961.4,1573.7 965.2,1569.2 969.1,1578.3 972.9,1578.3 976.7,1578.3 980.6,1560.1 984.4,1578.3 988.3,1573.7 992.1,1578.3 995.9,1578.3 999.8,1573.7 1003.6,1569.2 1007.5,1578.3 1011.3,1573.7 1015.1,1578.3 1019,1578.3 1022.8,1578.3 1026.6,1573.7 1030.5,1560.1 1034.3,1578.3 1038.2,1578.3 1042,1578.3 1045.8,1578.3 1049.7,1573.7 1053.5,1573.7 1057.4,1569.2 1061.2,1569.2 1065,1578.3 1068.9,1578.3 1072.7,1578.3 1076.6,1569.2 1080.4,1569.2 1084.2,1573.7 1088.1,1564.6 1091.9,1578.3 1095.8,1578.3 1099.6,1578.3 1103.4,1569.2 1107.3,1569.2 1111.1,1573.7 1115,1578.3 1118.8,1564.6 1122.6,1564.6 1126.5,1578.3 1130.3,1573.7 1134.2,1578.3 1138,1560.1 1141.8,1578.3 1145.7,1578.3 1149.5,1578.3 1153.4,1578.3" fill="none" stroke="#d8b9ae" stroke-width="3.7" stroke-linejoin="bevel" stroke-opacity="0.85"/>
<polygon points="235.7,1578.3 235.7,1578.3 239.5,1573.7 243.4,1569.2 247.2,1573.7 251.1,1569.2 254.9,1573.7 258.7,1578.3 262.6,1578.3 266.4,1578.3 270.3,1578.3 274.1,1573.7 277.9,1578.3 281.8,1573.7 285.6,1578.3 289.5,1578.3 293.3,1573.7 297.1,1578.3 301,1578.3 304.8,1578.3 308.7,1578.3 312.5,1578.3 316.3,1578.3 320.2,1578.3 324,1578.3 327.8,1573.7 331.7,1569.2 335.5,1578.3 339.4,1578.3 343.2,1564.6 347,1578.3 350.9,1569.2 354.7,1578.3 358.6,1578.3 362.4,1578.3 366.2,1578.3 370.1,1569.2 373.9,1569.2 377.8,1569.2 381.6,1573.7 385.4,1578.3 389.3,1578.3 393.1,1564.6 397,1569.2 400.8,1578.3 404.6,1569.2 408.5,1578.3 412.3,1578.3 416.2,1573.7 420,1578.3 423.8,1578.3 427.7,1569.2 431.5,1578.3 435.4,1569.2 439.2,1573.7 443,1578.3 446.9,1578.3 450.7,1569.2 454.6,1569.2 458.4,1564.6 462.2,1569.2 466.1,1578.3 469.9,1578.3 473.8,1578.3 477.6,1560.1 481.4,1578.3 485.3,1555.5 489.1,1578.3 492.9,1578.3 496.8,1564.6 500.6,1578.3 504.5,1578.3 508.3,1578.3 512.1,1573.7 516,1564.6 519.8,1578.3 523.7,1564.6 527.5,1578.3 531.3,1546.4 535.2,1578.3 539,1573.7 542.9,1564.6 546.7,1578.3 550.5,1578.3 554.4,1569.2 558.2,1569.2 562.1,1573.7 565.9,1578.3 569.7,1564.6 573.6,1578.3 577.4,1569.2 581.3,1578.3 585.1,1573.7 588.9,1578.3 592.8,1578.3 596.6,1578.3 600.5,1578.3 604.3,1578.3 608.1,1573.7 612,1560.1 615.8,1578.3 619.7,1555.5 623.5,1555.5 627.3,1573.7 631.2,1573.7 635,1569.2 638.9,1578.3 642.7,1578.3 646.5,1569.2 650.4,1573.7 654.2,1578.3 658.1,1573.7 661.9,1569.2 665.7,1546.4 669.6,1573.7 673.4,1578.3 677.2,1578.3 681.1,1578.3 684.9,1555.5 688.8,1569.2 692.6,1578.3 696.4,1578.3 700.3,1578.3 704.1,1550.9 708,1569.2 711.8,1578.3 715.6,1578.3 719.5,1546.4 723.3,1578.3 727.2,1573.7 731,1550.9 734.8,1578.3 738.7,1578.3 742.5,1550.9 746.4,1578.3 750.2,1569.2 754,1578.3 757.9,1546.4 761.7,1560.1 765.6,1569.2 769.4,1578.3 773.2,1573.7 777.1,1578.3 780.9,1578.3 784.8,1550.9 788.6,1578.3 792.4,1573.7 796.3,1569.2 800.1,1546.4 804,1578.3 807.8,1573.7 811.6,1573.7 815.5,1573.7 819.3,1578.3 823.2,1550.9 827,1578.3 830.8,1578.3 834.7,1578.3 838.5,1578.3 842.4,1564.6 846.2,1578.3 850,1578.3 853.9,1578.3 857.7,1578.3 861.5,1569.2 865.4,1578.3 869.2,1569.2 873.1,1578.3 876.9,1578.3 880.7,1560.1 884.6,1578.3 888.4,1578.3 892.3,1573.7 896.1,1569.2 899.9,1573.7 903.8,1578.3 907.6,1578.3 911.5,1569.2 915.3,1578.3 919.1,1569.2 923,1578.3 926.8,1578.3 930.7,1578.3 934.5,1578.3 938.3,1560.1 942.2,1569.2 946,1573.7 949.9,1578.3 953.7,1578.3 957.5,1578.3 961.4,1578.3 965.2,1578.3 969.1,1578.3 972.9,1569.2 976.7,1564.6 980.6,1560.1 984.4,1578.3 988.3,1578.3 992.1,1569.2 995.9,1569.2 999.8,1578.3 1003.6,1564.6 1007.5,1578.3 1011.3,1578.3 1015.1,1573.7 1019,1578.3 1022.8,1578.3 1026.6,1569.2 1030.5,1573.7 1034.3,1573.7 1038.2,1578.3 1042,1573.7 1045.8,1578.3 1049.7,1578.3 1053.5,1560.1 1057.4,1578.3 1061.2,1578.3 1065,1578.3 1068.9,1560.1 1072.7,1578.3 1076.6,1578.3 1080.4,1569.2 1084.2,1578.3 1088.1,1573.7 1091.9,1578.3 1095.8,1578.3 1099.6,1578.3 1103.4,1560.1 1107.3,1578.3 1111.1,1578.3 1115,1578.3 1118.8,1578.3 1122.6,1578.3 1126.5,1578.3 1130.3,1578.3 1134.2,1569.2 1138,1569.2 1141.8,1578.3 1145.7,1573.7 1149.5,1578.3 1153.4,1569.2 1153.4,1578.3" fill="#e6bc3c" fill-opacity="0.4"/>
<polyline points="235.7,1578.3 239.5,1573.7 243.4,1569.2 247.2,1573.7 251.1,1569.2 254.9,1573.7 258.7,1578.3 262.6,1578.3 266.4,1578.3 270.3,1578.3 274.1,1573.7 277.9,1578.3 281.8,1573.7 285.6,1578.3 289.5,1578.3 293.3,1573.7 297.1,1578.3 301,1578.3 304.8,1578.3 308.7,1578.3 312.5,1578.3 316.3,1578.3 320.2,1578.3 324,1578.3 327.8,1573.7 331.7,1569.2 335.5,1578.3 339.4,1578.3 343.2,1564.6 347,1578.3 350.9,1569.2 354.7,1578.3 358.6,1578.3 362.4,1578.3 366.2,1578.3 370.1,1569.2 373.9,1569.2 377.8,1569.2 381.6,1573.7 385.4,1578.3 389.3,1578.3 393.1,1564.6 397,1569.2 400.8,1578.3 404.6,1569.2 408.5,1578.3 412.3,1578.3 416.2,1573.7 420,1578.3 423.8,1578.3 427.7,1569.2 431.5,1578.3 435.4,1569.2 439.2,1573.7 443,1578.3 446.9,1578.3 450.7,1569.2 454.6,1569.2 458.4,1564.6 462.2,1569.2 466.1,1578.3 469.9,1578.3 473.8,1578.3 477.6,1560.1 481.4,1578.3 485.3,1555.5 489.1,1578.3 492.9,1578.3 496.8,1564.6 500.6,1578.3 504.5,1578.3 508.3,1578.3 512.1,1573.7 516,1564.6 519.8,1578.3 523.7,1564.6 527.5,1578.3 531.3,1546.4 535.2,1578.3 539,1573.7 542.9,1564.6 546.7,1578.3 550.5,1578.3 554.4,1569.2 558.2,1569.2 562.1,1573.7 565.9,1578.3 569.7,1564.6 573.6,1578.3 577.4,1569.2 581.3,1578.3 585.1,1573.7 588.9,1578.3 592.8,1578.3 596.6,1578.3 600.5,1578.3 604.3,1578.3 608.1,1573.7 612,1560.1 615.8,1578.3 619.7,1555.5 623.5,1555.5 627.3,1573.7 631.2,1573.7 635,1569.2 638.9,1578.3 642.7,1578.3 646.5,1569.2 650.4,1573.7 654.2,1578.3 658.1,1573.7 661.9,1569.2 665.7,1546.4 669.6,1573.7 673.4,1578.3 677.2,1578.3 681.1,1578.3 684.9,1555.5 688.8,1569.2 692.6,1578.3 696.4,1578.3 700.3,1578.3 704.1,1550.9 708,1569.2 711.8,1578.3 715.6,1578.3 719.5,1546.4 723.3,1578.3 727.2,1573.7 731,1550.9 734.8,1578.3 738.7,1578.3 742.5,1550.9 746.4,1578.3 750.2,1569.2 754,1578.3 757.9,1546.4 761.7,1560.1 765.6,1569.2 769.4,1578.3 773.2,1573.7 777.1,1578.3 780.9,1578.3 784.8,1550.9 788.6,1578.3 792.4,1573.7 796.3,1569.2 800.1,1546.4 804,1578.3 807.8,1573.7 811.6,1573.7 815.5,1573.7 819.3,1578.3 823.2,1550.9 827,1578.3 830.8,1578.3 834.7,1578.3 838.5,1578.3 842.4,1564.6 846.2,1578.3 850,1578.3 853.9,1578.3 857.7,1578.3 861.5,1569.2 865.4,1578.3 869.2,1569.2 873.1,1578.3 876.9,1578.3 880.7,1560.1 884.6,1578.3 888.4,1578.3 892.3,1573.7 896.1,1569.2 899.9,1573.7 903.8,1578.3 907.6,1578.3 911.5,1569.2 915.3,1578.3 919.1,1569.2 923,1578.3 926.8,1578.3 930.7,1578.3 934.5,1578.3 938.3,1560.1 942.2,1569.2 946,1573.7 949.9,1578.3 953.7,1578.3 957.5,1578.3 961.4,1578.3 965.2,1578.3 969.1,1578.3 972.9,1569.2 976.7,1564.6 980.6,1560.1 984.4,1578.3 988.3,1578.3 992.1,1569.2 995.9,1569.2 999.8,1578.3 1003.6,1564.6 1007.5,1578.3 1011.3,1578.3 1015.1,1573.7 1019,1578.3 1022.8,1578.3 1026.6,1569.2 1030.5,1573.7 1034.3,1573.7 1038.2,1578.3 1042,1573.7 1045.8,1578.3 1049.7,1578.3 1053.5,1560.1 1057.4,1578.3 1061.2,1578.3 1065,1578.3 1068.9,1560.1 1072.7,1578.3 1076.6,1578.3 1080.4,1569.2 1084.2,1578.3 1088.1,1573.7 1091.9,1578.3 1095.8,1578.3 1099.6,1578.3 1103.4,1560.1 1107.3,1578.3 1111.1,1578.3 1115,1578.3 1118.8,1578.3 1122.6,1578.3 1126.5,1578.3 1130.3,1578.3 1134.2,1569.2 1138,1569.2 1141.8,1578.3 1145.7,1573.7 1149.5,1578.3 1153.4,1569.2" fill="none" stroke="#e6bc3c" stroke-width="3.7" stroke-linejoin="bevel" stroke-opacity="0.85"/>
<polygon points="235.7,1578.3 235.7,1578.3 239.5,1578.3 243.4,1578.3 247.2,1573.7 251.1,1578.3 254.9,1569.2 258.7,1569.2 262.6,1578.3 266.4,1555.5 270.3,1555.5 274.1,1569.2 277.9,1578.3 281.8,1560.1 285.6,1578.3 289.5,1573.7 293.3,1564.6 297.1,1569.2 301,1578.3 304.8,1578.3 308.7,1578.3 312.5,1573.7 316.3,1578.3 320.2,1578.3 324,1578.3 327.8,1578.3 331.7,1569.2 335.5,1578.3 339.4,1573.7 343.2,1578.3 347,1550.9 350.9,1578.3 354.7,1569.2 358.6,1569.2 362.4,1569.2 366.2,1578.3 370.1,1578.3 373.9,1578.3 377.8,1560.1 381.6,1541.8 385.4,1578.3 389.3,1569.2 393.1,1578.3 397,1573.7 400.8,1573.7 404.6,1578.3 408.5,1578.3 412.3,1578.3 416.2,1578.3 420,1569.2 423.8,1578.3 427.7,1569.2 431.5,1569.2 435.4,1573.7 439.2,1578.3 443,1560.1 446.9,1578.3 450.7,1573.7 454.6,1564.6 458.4,1578.3 462.2,1573.7 466.1,1541.8 469.9,1564.6 473.8,1578.3 477.6,1578.3 481.4,1569.2 485.3,1564.6 489.1,1578.3 492.9,1578.3 496.8,1560.1 500.6,1578.3 504.5,1555.5 508.3,1578.3 512.1,1550.9 516,1573.7 519.8,1573.7 523.7,1578.3 527.5,1573.7 531.3,1569.2 535.2,1573.7 539,1560.1 542.9,1578.3 546.7,1564.6 550.5,1569.2 554.4,1569.2 558.2,1578.3 562.1,1578.3 565.9,1578.3 569.7,1578.3 573.6,1546.4 577.4,1578.3 581.3,1578.3 585.1,1569.2 588.9,1578.3 592.8,1578.3 596.6,1578.3 600.5,1578.3 604.3,1569.2 608.1,1578.3 612,1560.1 615.8,1569.2 619.7,1555.5 623.5,1578.3 627.3,1569.2 631.2,1578.3 635,1578.3 638.9,1569.2 642.7,1578.3 646.5,1578.3 650.4,1569.2 654.2,1569.2 658.1,1573.7 661.9,1578.3 665.7,1569.2 669.6,1560.1 673.4,1578.3 677.2,1578.3 681.1,1569.2 684.9,1569.2 688.8,1578.3 692.6,1578.3 696.4,1560.1 700.3,1573.7 704.1,1569.2 708,1578.3 711.8,1550.9 715.6,1560.1 719.5,1578.3 723.3,1569.2 727.2,1555.5 731,1546.4 734.8,1573.7 738.7,1578.3 742.5,1578.3 746.4,1578.3 750.2,1546.4 754,1578.3 757.9,1578.3 761.7,1573.7 765.6,1573.7 769.4,1578.3 773.2,1569.2 777.1,1573.7 780.9,1573.7 784.8,1578.3 788.6,1573.7 792.4,1578.3 796.3,1550.9 800.1,1569.2 804,1578.3 807.8,1578.3 811.6,1569.2 815.5,1550.9 819.3,1573.7 823.2,1578.3 827,1578.3 830.8,1569.2 834.7,1541.8 838.5,1555.5 842.4,1555.5 846.2,1573.7 850,1578.3 853.9,1564.6 857.7,1573.7 861.5,1578.3 865.4,1569.2 869.2,1578.3 873.1,1578.3 876.9,1546.4 880.7,1569.2 884.6,1578.3 888.4,1578.3 892.3,1578.3 896.1,1573.7 899.9,1578.3 903.8,1578.3 907.6,1550.9 911.5,1573.7 915.3,1573.7 919.1,1578.3 923,1569.2 926.8,1578.3 930.7,1578.3 934.5,1578.3 938.3,1569.2 942.2,1578.3 946,1578.3 949.9,1578.3 953.7,1578.3 957.5,1578.3 961.4,1578.3 965.2,1573.7 969.1,1569.2 972.9,1569.2 976.7,1569.2 980.6,1569.2 984.4,1573.7 988.3,1569.2 992.1,1578.3 995.9,1573.7 999.8,1578.3 1003.6,1564.6 1007.5,1578.3 1011.3,1578.3 1015.1,1569.2 1019,1578.3 1022.8,1573.7 1026.6,1569.2 1030.5,1578.3 1034.3,1569.2 1038.2,1569.2 1042,1578.3 1045.8,1569.2 1049.7,1578.3 1053.5,1578.3 1057.4,1578.3 1061.2,1578.3 1065,1573.7 1068.9,1578.3 1072.7,1573.7 1076.6,1573.7 1080.4,1578.3 1084.2,1578.3 1088.1,1564.6 1091.9,1560.1 1095.8,1573.7 1099.6,1578.3 1103.4,1578.3 1107.3,1569.2 1111.1,1578.3 1115,1569.2 1118.8,1578.3 1122.6,1578.3 1126.5,1569.2 1130.3,1578.3 1134.2,1578.3 1138,1578.3 1141.8,1564.6 1145.7,1578.3 1149.5,1578.3 1153.4,1578.3 1153.4,1578.3" fill="#5aa0b4" fill-opacity="0.4"/>
<polyline points="235.7,1578.3 239.5,1578.3 243.4,1578.3 247.2,1573.7 251.1,1578.3 254.9,1569.2 258.7,1569.2 262.6,1578.3 266.4,1555.5 270.3,1555.5 274.1,1569.2 277.9,1578.3 281.8,1560.1 285.6,1578.3 289.5,1573.7 293.3,1564.6 297.1,1569.2 301,1578.3 304.8,1578.3 308.7,1578.3 312.5,1573.7 316.3,1578.3 320.2,1578.3 324,1578.3 327.8,1578.3 331.7,1569.2 335.5,1578.3 339.4,1573.7 343.2,1578.3 347,1550.9 350.9,1578.3 354.7,1569.2 358.6,1569.2 362.4,1569.2 366.2,1578.3 370.1,1578.3 373.9,1578.3 377.8,1560.1 381.6,1541.8 385.4,1578.3 389.3,1569.2 393.1,1578.3 397,1573.7 400.8,1573.7 404.6,1578.3 408.5,1578.3 412.3,1578.3 416.2,1578.3 420,1569.2 423.8,1578.3 427.7,1569.2 431.5,1569.2 435.4,1573.7 439.2,1578.3 443,1560.1 446.9,1578.3 450.7,1573.7 454.6,1564.6 458.4,1578.3 462.2,1573.7 466.1,1541.8 469.9,1564.6 473.8,1578.3 477.6,1578.3 481.4,1569.2 485.3,1564.6 489.1,1578.3 492.9,1578.3 496.8,1560.1 500.6,1578.3 504.5,1555.5 508.3,1578.3 512.1,1550.9 516,1573.7 519.8,1573.7 523.7,1578.3 527.5,1573.7 531.3,1569.2 535.2,1573.7 539,1560.1 542.9,1578.3 546.7,1564.6 550.5,1569.2 554.4,1569.2 558.2,1578.3 562.1,1578.3 565.9,1578.3 569.7,1578.3 573.6,1546.4 577.4,1578.3 581.3,1578.3 585.1,1569.2 588.9,1578.3 592.8,1578.3 596.6,1578.3 600.5,1578.3 604.3,1569.2 608.1,1578.3 612,1560.1 615.8,1569.2 619.7,1555.5 623.5,1578.3 627.3,1569.2 631.2,1578.3 635,1578.3 638.9,1569.2 642.7,1578.3 646.5,1578.3 650.4,1569.2 654.2,1569.2 658.1,1573.7 661.9,1578.3 665.7,1569.2 669.6,1560.1 673.4,1578.3 677.2,1578.3 681.1,1569.2 684.9,1569.2 688.8,1578.3 692.6,1578.3 696.4,1560.1 700.3,1573.7 704.1,1569.2 708,1578.3 711.8,1550.9 715.6,1560.1 719.5,1578.3 723.3,1569.2 727.2,1555.5 731,1546.4 734.8,1573.7 738.7,1578.3 742.5,1578.3 746.4,1578.3 750.2,1546.4 754,1578.3 757.9,1578.3 761.7,1573.7 765.6,1573.7 769.4,1578.3 773.2,1569.2 777.1,1573.7 780.9,1573.7 784.8,1578.3 788.6,1573.7 792.4,1578.3 796.3,1550.9 800.1,1569.2 804,1578.3 807.8,1578.3 811.6,1569.2 815.5,1550.9 819.3,1573.7 823.2,1578.3 827,1578.3 830.8,1569.2 834.7,1541.8 838.5,1555.5 842.4,1555.5 846.2,1573.7 850,1578.3 853.9,1564.6 857.7,1573.7 861.5,1578.3 865.4,1569.2 869.2,1578.3 873.1,1578.3 876.9,1546.4 880.7,1569.2 884.6,1578.3 888.4,1578.3 892.3,1578.3 896.1,1573.7 899.9,1578.3 903.8,1578.3 907.6,1550.9 911.5,1573.7 915.3,1573.7 919.1,1578.3 923,1569.2 926.8,1578.3 930.7,1578.3 934.5,1578.3 938.3,1569.2 942.2,1578.3 946,1578.3 949.9,1578.3 953.7,1578.3 957.5,1578.3 961.4,1578.3 965.2,1573.7 969.1,1569.2 972.9,1569.2 976.7,1569.2 980.6,1569.2 984.4,1573.7 988.3,1569.2 992.1,1578.3 995.9,1573.7 999.8,1578.3 1003.6,1564.6 1007.5,1578.3 1011.3,1578.3 1015.1,1569.2 1019,1578.3 1022.8,1573.7 1026.6,1569.2 1030.5,1578.3 1034.3,1569.2 1038.2,1569.2 1042,1578.3 1045.8,1569.2 1049.7,1578.3 1053.5,1578.3 1057.4,1578.3 1061.2,1578.3 1065,1573.7 1068.9,1578.3 1072.7,1573.7 1076.6,1573.7 1080.4,1578.3 1084.2,1578.3 1088.1,1564.6 1091.9,1560.1 1095.8,1573.7 1099.6,1578.3 1103.4,1578.3 1107.3,1569.2 1111.1,1578.3 1115,1569.2 1118.8,1578.3 1122.6,1578.3 1126.5,1569.2 1130.3,1578.3 1134.2,1578.3 1138,1578.3 1141.8,1564.6 1145.7,1578.3 1149.5,1578.3 1153.4,1578.3" fill="none" stroke="#5aa0b4" stroke-width="3.7" stroke-linejoin="bevel" stroke-opacity="0.85"/>
<polygon points="235.7,1578.3 235.7,1578.3 239.5,1578.3 243.4,1550.9 247.2,1573.7 251.1,1560.1 254.9,1578.3 258.7,1578.3 262.6,1555.5 266.4,1578.3 270.3,1569.2 274.1,1573.7 277.9,1546.4 281.8,1578.3 285.6,1569.2 289.5,1573.7 293.3,1569.2 297.1,1569.2 301,1569.2 304.8,1573.7 308.7,1573.7 312.5,1578.3 316.3,1578.3 320.2,1578.3 324,1578.3 327.8,1560.1 331.7,1578.3 335.5,1564.6 339.4,1569.2 343.2,1573.7 347,1578.3 350.9,1578.3 354.7,1578.3 358.6,1578.3 362.4,1573.7 366.2,1578.3 370.1,1569.2 373.9,1560.1 377.8,1573.7 381.6,1578.3 385.4,1555.5 389.3,1573.7 393.1,1569.2 397,1578.3 400.8,1573.7 404.6,1578.3 408.5,1569.2 412.3,1578.3 416.2,1569.2 420,1578.3 423.8,1578.3 427.7,1564.6 431.5,1573.7 435.4,1569.2 439.2,1560.1 443,1573.7 446.9,1546.4 450.7,1578.3 454.6,1578.3 458.4,1578.3 462.2,1564.6 466.1,1573.7 469.9,1532.7 473.8,1578.3 477.6,1578.3 481.4,1578.3 485.3,1578.3 489.1,1573.7 492.9,1569.2 496.8,1546.4 500.6,1578.3 504.5,1578.3 508.3,1569.2 512.1,1578.3 516,1578.3 519.8,1546.4 523.7,1550.9 527.5,1578.3 531.3,1578.3 535.2,1573.7 539,1578.3 542.9,1578.3 546.7,1578.3 550.5,1573.7 554.4,1564.6 558.2,1546.4 562.1,1578.3 565.9,1578.3 569.7,1569.2 573.6,1578.3 577.4,1560.1 581.3,1569.2 585.1,1546.4 588.9,1555.5 592.8,1578.3 596.6,1578.3 600.5,1569.2 604.3,1573.7 608.1,1578.3 612,1578.3 615.8,1560.1 619.7,1578.3 623.5,1578.3 627.3,1550.9 631.2,1578.3 635,1573.7 638.9,1578.3 642.7,1578.3 646.5,1573.7 650.4,1578.3 654.2,1578.3 658.1,1578.3 661.9,1573.7 665.7,1573.7 669.6,1578.3 673.4,1578.3 677.2,1578.3 681.1,1569.2 684.9,1578.3 688.8,1578.3 692.6,1569.2 696.4,1578.3 700.3,1564.6 704.1,1578.3 708,1578.3 711.8,1569.2 715.6,1555.5 719.5,1578.3 723.3,1550.9 727.2,1578.3 731,1555.5 734.8,1578.3 738.7,1578.3 742.5,1578.3 746.4,1564.6 750.2,1578.3 754,1578.3 757.9,1573.7 761.7,1550.9 765.6,1573.7 769.4,1578.3 773.2,1569.2 777.1,1560.1 780.9,1578.3 784.8,1560.1 788.6,1578.3 792.4,1578.3 796.3,1546.4 800.1,1578.3 804,1578.3 807.8,1578.3 811.6,1569.2 815.5,1573.7 819.3,1578.3 823.2,1578.3 827,1578.3 830.8,1573.7 834.7,1578.3 838.5,1578.3 842.4,1578.3 846.2,1569.2 850,1569.2 853.9,1569.2 857.7,1555.5 861.5,1573.7 865.4,1500.8 869.2,1578.3 873.1,1573.7 876.9,1578.3 880.7,1578.3 884.6,1578.3 888.4,1555.5 892.3,1578.3 896.1,1578.3 899.9,1578.3 903.8,1550.9 907.6,1578.3 911.5,1578.3 915.3,1578.3 919.1,1578.3 923,1578.3 926.8,1578.3 930.7,1569.2 934.5,1573.7 938.3,1578.3 942.2,1578.3 946,1546.4 949.9,1578.3 953.7,1578.3 957.5,1578.3 961.4,1573.7 965.2,1578.3 969.1,1569.2 972.9,1573.7 976.7,1560.1 980.6,1578.3 984.4,1569.2 988.3,1569.2 992.1,1560.1 995.9,1564.6 999.8,1569.2 1003.6,1578.3 1007.5,1569.2 1011.3,1573.7 1015.1,1578.3 1019,1573.7 1022.8,1578.3 1026.6,1569.2 1030.5,1578.3 1034.3,1578.3 1038.2,1578.3 1042,1573.7 1045.8,1578.3 1049.7,1491.6 1053.5,1578.3 1057.4,1564.6 1061.2,1578.3 1065,1573.7 1068.9,1578.3 1072.7,1578.3 1076.6,1569.2 1080.4,1573.7 1084.2,1578.3 1088.1,1578.3 1091.9,1573.7 1095.8,1578.3 1099.6,1578.3 1103.4,1578.3 1107.3,1578.3 1111.1,1573.7 1115,1578.3 1118.8,1523.6 1122.6,1578.3 1126.5,1578.3 1130.3,1578.3 1134.2,1569.2 1138,1573.7 1141.8,1578.3 1145.7,1569.2 1149.5,1578.3 1153.4,1578.3 1153.4,1578.3" fill="#f5829c" fill-opacity="0.4"/>
<polyline points="235.7,1578.3 239.5,1578.3 243.4,1550.9 247.2,1573.7 251.1,1560.1 254.9,1578.3 258.7,1578.3 262.6,1555.5 266.4,1578.3 270.3,1569.2 274.1,1573.7 277.9,1546.4 281.8,1578.3 285.6,1569.2 289.5,1573.7 293.3,1569.2 297.1,1569.2 301,1569.2 304.8,1573.7 308.7,1573.7 312.5,1578.3 316.3,1578.3 320.2,1578.3 324,1578.3 327.8,1560.1 331.7,1578.3 335.5,1564.6 339.4,1569.2 343.2,1573.7 347,1578.3 350.9,1578.3 354.7,1578.3 358.6,1578.3 362.4,1573.7 366.2,1578.3 370.1,1569.2 373.9,1560.1 377.8,1573.7 381.6,1578.3 385.4,1555.5 389.3,1573.7 393.1,1569.2 397,1578.3 400.8,1573.7 404.6,1578.3 408.5,1569.2 412.3,1578.3 416.2,1569.2 420,1578.3 423.8,1578.3 427.7,1564.6 431.5,1573.7 435.4,1569.2 439.2,1560.1 443,1573.7 446.9,1546.4 450.7,1578.3 454.6,1578.3 458.4,1578.3 462.2,1564.6 466.1,1573.7 469.9,1532.7 473.8,1578.3 477.6,1578.3 481.4,1578.3 485.3,1578.3 489.1,1573.7 492.9,1569.2 496.8,1546.4 500.6,1578.3 504.5,1578.3 508.3,1569.2 512.1,1578.3 516,1578.3 519.8,1546.4 523.7,1550.9 527.5,1578.3 531.3,1578.3 535.2,1573.7 539,1578.3 542.9,1578.3 546.7,1578.3 550.5,1573.7 554.4,1564.6 558.2,1546.4 562.1,1578.3 565.9,1578.3 569.7,1569.2 573.6,1578.3 577.4,1560.1 581.3,1569.2 585.1,1546.4 588.9,1555.5 592.8,1578.3 596.6,1578.3 600.5,1569.2 604.3,1573.7 608.1,1578.3 612,1578.3 615.8,1560.1 619.7,1578.3 623.5,1578.3 627.3,1550.9 631.2,1578.3 635,1573.7 638.9,1578.3 642.7,1578.3 646.5,1573.7 650.4,1578.3 654.2,1578.3 658.1,1578.3 661.9,1573.7 665.7,1573.7 669.6,1578.3 673.4,1578.3 677.2,1578.3 681.1,1569.2 684.9,1578.3 688.8,1578.3 692.6,1569.2 696.4,1578.3 700.3,1564.6 704.1,1578.3 708,1578.3 711.8,1569.2 715.6,1555.5 719.5,1578.3 723.3,1550.9 727.2,1578.3 731,1555.5 734.8,1578.3 738.7,1578.3 742.5,1578.3 746.4,1564.6 750.2,1578.3 754,1578.3 757.9,1573.7 761.7,1550.9 765.6,1573.7 769.4,1578.3 773.2,1569.2 777.1,1560.1 780.9,1578.3 784.8,1560.1 788.6,1578.3 792.4,1578.3 796.3,1546.4 800.1,1578.3 804,1578.3 807.8,1578.3 811.6,1569.2 815.5,1573.7 819.3,1578.3 823.2,1578.3 827,1578.3 830.8,1573.7 834.7,1578.3 838.5,1578.3 842.4,1578.3 846.2,1569.2 850,1569.2 853.9,1569.2 857.7,1555.5 861.5,1573.7 865.4,1500.8 869.2,1578.3 873.1,1573.7 876.9,1578.3 880.7,1578.3 884.6,1578.3 888.4,1555.5 892.3,1578.3 896.1,1578.3 899.9,1578.3 903.8,1550.9 907.6,1578.3 911.5,1578.3 915.3,1578.3 919.1,1578.3 923,1578.3 926.8,1578.3 930.7,1569.2 934.5,1573.7 938.3,1578.3 942.2,1578.3 946,1546.4 949.9,1578.3 953.7,1578.3 957.5,1578.3 961.4,1573.7 965.2,1578.3 969.1,1569.2 972.9,1573.7 976.7,1560.1 980.6,1578.3 984.4,1569.2 988.3,1569.2 992.1,1560.1 995.9,1564.6 999.8,1569.2 1003.6,1578.3 1007.5,1569.2 1011.3,1573.7 1015.1,1578.3 1019,1573.7 1022.8,1578.3 1026.6,1569.2 1030.5,1578.3 1034.3,1578.3 1038.2,1578.3 1042,1573.7 1045.8,1578.3 1049.7,1491.6 1053.5,1578.3 1057.4,1564.6 1061.2,1578.3 1065,1573.7 1068.9,1578.3 1072.7,1578.3 1076.6,1569.2 1080.4,1573.7 1084.2,1578.3 1088.1,1578.3 1091.9,1573.7 1095.8,1578.3 1099.6,1578.3 1103.4,1578.3 1107.3,1578.3 1111.1,1573.7 1115,1578.3 1118.8,1523.6 1122.6,1578.3 1126.5,1578.3 1130.3,1578.3 1134.2,1569.2 1138,1573.7 1141.8,1578.3 1145.7,1569.2 1149.5,1578.3 1153.4,1578.3" fill="none" stroke="#f5829c" stroke-width="3.7" stroke-linejoin="bevel" stroke-opacity="0.85"/>
<polygon points="235.7,1578.3 235.7,1541.8 239.5,1569.2 243.4,1578.3 247.2,1560.1 251.1,1578.3 254.9,1569.2 258.7,1578.3 262.6,1578.3 266.4,1555.5 270.3,1569.2 274.1,1578.3 277.9,1578.3 281.8,1578.3 285.6,1578.3 289.5,1569.2 293.3,1578.3 297.1,1578.3 301,1578.3 304.8,1541.8 308.7,1564.6 312.5,1573.7 316.3,1573.7 320.2,1546.4 324,1569.2 327.8,1578.3 331.7,1541.8 335.5,1578.3 339.4,1578.3 343.2,1573.7 347,1550.9 350.9,1578.3 354.7,1541.8 358.6,1569.2 362.4,1573.7 366.2,1555.5 370.1,1550.9 373.9,1578.3 377.8,1569.2 381.6,1573.7 385.4,1541.8 389.3,1578.3 393.1,1578.3 397,1555.5 400.8,1578.3 404.6,1578.3 408.5,1569.2 412.3,1578.3 416.2,1564.6 420,1578.3 423.8,1578.3 427.7,1578.3 431.5,1578.3 435.4,1560.1 439.2,1573.7 443,1564.6 446.9,1560.1 450.7,1578.3 454.6,1560.1 458.4,1573.7 462.2,1578.3 466.1,1573.7 469.9,1578.3 473.8,1578.3 477.6,1569.2 481.4,1578.3 485.3,1564.6 489.1,1578.3 492.9,1564.6 496.8,1578.3 500.6,1578.3 504.5,1555.5 508.3,1578.3 512.1,1578.3 516,1578.3 519.8,1578.3 523.7,1578.3 527.5,1578.3 531.3,1573.7 535.2,1541.8 539,1578.3 542.9,1573.7 546.7,1541.8 550.5,1578.3 554.4,1578.3 558.2,1573.7 562.1,1578.3 565.9,1550.9 569.7,1578.3 573.6,1519 577.4,1546.4 581.3,1578.3 585.1,1578.3 588.9,1578.3 592.8,1573.7 596.6,1578.3 600.5,1578.3 604.3,1578.3 608.1,1546.4 612,1564.6 615.8,1573.7 619.7,1578.3 623.5,1560.1 627.3,1578.3 631.2,1569.2 635,1578.3 638.9,1573.7 642.7,1578.3 646.5,1578.3 650.4,1578.3 654.2,1578.3 658.1,1555.5 661.9,1578.3 665.7,1555.5 669.6,1564.6 673.4,1569.2 677.2,1519 681.1,1573.7 684.9,1578.3 688.8,1555.5 692.6,1573.7 696.4,1578.3 700.3,1560.1 704.1,1578.3 708,1564.6 711.8,1569.2 715.6,1555.5 719.5,1578.3 723.3,1564.6 727.2,1560.1 731,1578.3 734.8,1578.3 738.7,1578.3 742.5,1578.3 746.4,1578.3 750.2,1550.9 754,1541.8 757.9,1569.2 761.7,1573.7 765.6,1578.3 769.4,1578.3 773.2,1555.5 777.1,1550.9 780.9,1555.5 784.8,1578.3 788.6,1550.9 792.4,1560.1 796.3,1569.2 800.1,1541.8 804,1491.6 807.8,1541.8 811.6,1550.9 815.5,1578.3 819.3,1578.3 823.2,1550.9 827,1528.1 830.8,1578.3 834.7,1578.3 838.5,1496.2 842.4,1569.2 846.2,1578.3 850,1550.9 853.9,1528.1 857.7,1578.3 861.5,1578.3 865.4,1578.3 869.2,1578.3 873.1,1578.3 876.9,1573.7 880.7,1578.3 884.6,1578.3 888.4,1569.2 892.3,1546.4 896.1,1546.4 899.9,1578.3 903.8,1569.2 907.6,1578.3 911.5,1550.9 915.3,1528.1 919.1,1578.3 923,1569.2 926.8,1555.5 930.7,1569.2 934.5,1569.2 938.3,1578.3 942.2,1550.9 946,1578.3 949.9,1578.3 953.7,1564.6 957.5,1569.2 961.4,1550.9 965.2,1578.3 969.1,1578.3 972.9,1541.8 976.7,1578.3 980.6,1578.3 984.4,1528.1 988.3,1555.5 992.1,1550.9 995.9,1541.8 999.8,1578.3 1003.6,1541.8 1007.5,1560.1 1011.3,1578.3 1015.1,1546.4 1019,1560.1 1022.8,1569.2 1026.6,1546.4 1030.5,1550.9 1034.3,1560.1 1038.2,1573.7 1042,1578.3 1045.8,1578.3 1049.7,1578.3 1053.5,1578.3 1057.4,1569.2 1061.2,1578.3 1065,1560.1 1068.9,1573.7 1072.7,1573.7 1076.6,1569.2 1080.4,1550.9 1084.2,1578.3 1088.1,1560.1 1091.9,1555.5 1095.8,1569.2 1099.6,1546.4 1103.4,1541.8 1107.3,1569.2 1111.1,1550.9 1115,1573.7 1118.8,1573.7 1122.6,1573.7 1126.5,1578.3 1130.3,1578.3 1134.2,1541.8 1138,1528.1 1141.8,1578.3 1145.7,1569.2 1149.5,1546.4 1153.4,1555.5 1153.4,1578.3" fill="#b0bcf5" fill-opacity="0.4"/>
<polyline points="235.7,1541.8 239.5,1569.2 243.4,1578.3 247.2,1560.1 251.1,1578.3 254.9,1569.2 258.7,1578.3 262.6,1578.3 266.4,1555.5 270.3,1569.2 274.1,1578.3 277.9,1578.3 281.8,1578.3 285.6,1578.3 289.5,1569.2 293.3,1578.3 297.1,1578.3 301,1578.3 304.8,1541.8 308.7,1564.6 312.5,1573.7 316.3,1573.7 320.2,1546.4 324,1569.2 327.8,1578.3 331.7,1541.8 335.5,1578.3 339.4,1578.3 343.2,1573.7 347,1550.9 350.9,1578.3 354.7,1541.8 358.6,1569.2 362.4,1573.7 366.2,1555.5 370.1,1550.9 373.9,1578.3 377.8,1569.2 381.6,1573.7 385.4,1541.8 389.3,1578.3 393.1,1578.3 397,1555.5 400.8,1578.3 404.6,1578.3 408.5,1569.2 412.3,1578.3 416.2,1564.6 420,1578.3 423.8,1578.3 427.7,1578.3 431.5,1578.3 435.4,1560.1 439.2,1573.7 443,1564.6 446.9,1560.1 450.7,1578.3 454.6,1560.1 458.4,1573.7 462.2,1578.3 466.1,1573.7 469.9,1578.3 473.8,1578.3 477.6,1569.2 481.4,1578.3 485.3,1564.6 489.1,1578.3 492.9,1564.6 496.8,1578.3 500.6,1578.3 504.5,1555.5 508.3,1578.3 512.1,1578.3 516,1578.3 519.8,1578.3 523.7,1578.3 527.5,1578.3 531.3,1573.7 535.2,1541.8 539,1578.3 542.9,1573.7 546.7,1541.8 550.5,1578.3 554.4,1578.3 558.2,1573.7 562.1,1578.3 565.9,1550.9 569.7,1578.3 573.6,1519 577.4,1546.4 581.3,1578.3 585.1,1578.3 588.9,1578.3 592.8,1573.7 596.6,1578.3 600.5,1578.3 604.3,1578.3 608.1,1546.4 612,1564.6 615.8,1573.7 619.7,1578.3 623.5,1560.1 627.3,1578.3 631.2,1569.2 635,1578.3 638.9,1573.7 642.7,1578.3 646.5,1578.3 650.4,1578.3 654.2,1578.3 658.1,1555.5 661.9,1578.3 665.7,1555.5 669.6,1564.6 673.4,1569.2 677.2,1519 681.1,1573.7 684.9,1578.3 688.8,1555.5 692.6,1573.7 696.4,1578.3 700.3,1560.1 704.1,1578.3 708,1564.6 711.8,1569.2 715.6,1555.5 719.5,1578.3 723.3,1564.6 727.2,1560.1 731,1578.3 734.8,1578.3 738.7,1578.3 742.5,1578.3 746.4,1578.3 750.2,1550.9 754,1541.8 757.9,1569.2 761.7,1573.7 765.6,1578.3 769.4,1578.3 773.2,1555.5 777.1,1550.9 780.9,1555.5 784.8,1578.3 788.6,1550.9 792.4,1560.1 796.3,1569.2 800.1,1541.8 804,1491.6 807.8,1541.8 811.6,1550.9 815.5,1578.3 819.3,1578.3 823.2,1550.9 827,1528.1 830.8,1578.3 834.7,1578.3 838.5,1496.2 842.4,1569.2 846.2,1578.3 850,1550.9 853.9,1528.1 857.7,1578.3 861.5,1578.3 865.4,1578.3 869.2,1578.3 873.1,1578.3 876.9,1573.7 880.7,1578.3 884.6,1578.3 888.4,1569.2 892.3,1546.4 896.1,1546.4 899.9,1578.3 903.8,1569.2 907.6,1578.3 911.5,1550.9 915.3,1528.1 919.1,1578.3 923,1569.2 926.8,1555.5 930.7,1569.2 934.5,1569.2 938.3,1578.3 942.2,1550.9 946,1578.3 949.9,1578.3 953.7,1564.6 957.5,1569.2 961.4,1550.9 965.2,1578.3 969.1,1578.3 972.9,1541.8 976.7,1578.3 980.6,1578.3 984.4,1528.1 988.3,1555.5 992.1,1550.9 995.9,1541.8 999.8,1578.3 1003.6,1541.8 1007.5,1560.1 1011.3,1578.3 1015.1,1546.4 1019,1560.1 1022.8,1569.2 1026.6,1546.4 1030.5,1550.9 1034.3,1560.1 1038.2,1573.7 1042,1578.3 1045.8,1578.3 1049.7,1578.3 1053.5,1578.3 1057.4,1569.2 1061.2,1578.3 1065,1560.1 1068.9,1573.7 1072.7,1573.7 1076.6,1569.2 1080.4,1550.9 1084.2,1578.3 1088.1,1560.1 1091.9,1555.5 1095.8,1569.2 1099.6,1546.4 1103.4,1541.8 1107.3,1569.2 1111.1,1550.9 1115,1573.7 1118.8,1573.7 1122.6,1573.7 1126.5,1578.3 1130.3,1578.3 1134.2,1541.8 1138,1528.1 1141.8,1578.3 1145.7,1569.2 1149.5,1546.4 1153.4,1555.5" fill="none" stroke="#b0bcf5" stroke-width="3.7" stroke-linejoin="bevel" stroke-opacity="0.85"/>
<polygon points="235.7,1578.3 235.7,1578.3 239.5,1546.4 243.4,1578.3 247.2,1573.7 251.1,1564.6 254.9,1578.3 258.7,1564.6 262.6,1569.2 266.4,1578.3 270.3,1550.9 274.1,1573.7 277.9,1578.3 281.8,1569.2 285.6,1578.3 289.5,1546.4 293.3,1578.3 297.1,1578.3 301,1573.7 304.8,1573.7 308.7,1578.3 312.5,1573.7 316.3,1569.2 320.2,1546.4 324,1578.3 327.8,1578.3 331.7,1573.7 335.5,1578.3 339.4,1578.3 343.2,1546.4 347,1578.3 350.9,1541.8 354.7,1555.5 358.6,1569.2 362.4,1573.7 366.2,1578.3 370.1,1550.9 373.9,1578.3 377.8,1578.3 381.6,1573.7 385.4,1569.2 389.3,1555.5 393.1,1569.2 397,1573.7 400.8,1578.3 404.6,1569.2 408.5,1573.7 412.3,1569.2 416.2,1578.3 420,1578.3 423.8,1578.3 427.7,1578.3 431.5,1578.3 435.4,1578.3 439.2,1573.7 443,1550.9 446.9,1550.9 450.7,1564.6 454.6,1578.3 458.4,1569.2 462.2,1578.3 466.1,1578.3 469.9,1578.3 473.8,1560.1 477.6,1578.3 481.4,1578.3 485.3,1560.1 489.1,1546.4 492.9,1569.2 496.8,1573.7 500.6,1578.3 504.5,1578.3 508.3,1578.3 512.1,1578.3 516,1550.9 519.8,1564.6 523.7,1573.7 527.5,1578.3 531.3,1578.3 535.2,1578.3 539,1578.3 542.9,1578.3 546.7,1578.3 550.5,1578.3 554.4,1578.3 558.2,1573.7 562.1,1578.3 565.9,1578.3 569.7,1573.7 573.6,1569.2 577.4,1560.1 581.3,1564.6 585.1,1578.3 588.9,1578.3 592.8,1569.2 596.6,1573.7 600.5,1578.3 604.3,1578.3 608.1,1578.3 612,1573.7 615.8,1573.7 619.7,1578.3 623.5,1569.2 627.3,1546.4 631.2,1573.7 635,1578.3 638.9,1578.3 642.7,1578.3 646.5,1578.3 650.4,1578.3 654.2,1578.3 658.1,1569.2 661.9,1573.7 665.7,1578.3 669.6,1573.7 673.4,1546.4 677.2,1569.2 681.1,1546.4 684.9,1573.7 688.8,1555.5 692.6,1569.2 696.4,1569.2 700.3,1560.1 704.1,1578.3 708,1578.3 711.8,1564.6 715.6,1573.7 719.5,1578.3 723.3,1573.7 727.2,1541.8 731,1560.1 734.8,1546.4 738.7,1578.3 742.5,1578.3 746.4,1573.7 750.2,1578.3 754,1578.3 757.9,1578.3 761.7,1578.3 765.6,1550.9 769.4,1578.3 773.2,1573.7 777.1,1578.3 780.9,1560.1 784.8,1560.1 788.6,1578.3 792.4,1578.3 796.3,1573.7 800.1,1578.3 804,1550.9 807.8,1578.3 811.6,1569.2 815.5,1555.5 819.3,1573.7 823.2,1578.3 827,1578.3 830.8,1560.1 834.7,1569.2 838.5,1578.3 842.4,1555.5 846.2,1578.3 850,1569.2 853.9,1578.3 857.7,1564.6 861.5,1541.8 865.4,1578.3 869.2,1569.2 873.1,1578.3 876.9,1546.4 880.7,1578.3 884.6,1573.7 888.4,1564.6 892.3,1569.2 896.1,1578.3 899.9,1578.3 903.8,1541.8 907.6,1578.3 911.5,1578.3 915.3,1569.2 919.1,1573.7 923,1569.2 926.8,1578.3 930.7,1573.7 934.5,1546.4 938.3,1550.9 942.2,1578.3 946,1578.3 949.9,1578.3 953.7,1569.2 957.5,1560.1 961.4,1578.3 965.2,1578.3 969.1,1569.2 972.9,1578.3 976.7,1578.3 980.6,1578.3 984.4,1569.2 988.3,1578.3 992.1,1578.3 995.9,1560.1 999.8,1578.3 1003.6,1578.3 1007.5,1569.2 1011.3,1573.7 1015.1,1578.3 1019,1578.3 1022.8,1573.7 1026.6,1578.3 1030.5,1578.3 1034.3,1578.3 1038.2,1578.3 1042,1573.7 1045.8,1573.7 1049.7,1569.2 1053.5,1573.7 1057.4,1569.2 1061.2,1569.2 1065,1569.2 1068.9,1578.3 1072.7,1573.7 1076.6,1573.7 1080.4,1573.7 1084.2,1569.2 1088.1,1578.3 1091.9,1578.3 1095.8,1578.3 1099.6,1569.2 1103.4,1578.3 1107.3,1573.7 1111.1,1560.1 1115,1578.3 1118.8,1569.2 1122.6,1569.2 1126.5,1578.3 1130.3,1578.3 1134.2,1578.3 1138,1569.2 1141.8,1578.3 1145.7,1578.3 1149.5,1573.7 1153.4,1578.3 1153.4,1578.3" fill="#5b7fd0" fill-opacity="0.4"/>
<polyline points="235.7,1578.3 239.5,1546.4 243.4,1578.3 247.2,1573.7 251.1,1564.6 254.9,1578.3 258.7,1564.6 262.6,1569.2 266.4,1578.3 270.3,1550.9 274.1,1573.7 277.9,1578.3 281.8,1569.2 285.6,1578.3 289.5,1546.4 293.3,1578.3 297.1,1578.3 301,1573.7 304.8,1573.7 308.7,1578.3 312.5,1573.7 316.3,1569.2 320.2,1546.4 324,1578.3 327.8,1578.3 331.7,1573.7 335.5,1578.3 339.4,1578.3 343.2,1546.4 347,1578.3 350.9,1541.8 354.7,1555.5 358.6,1569.2 362.4,1573.7 366.2,1578.3 370.1,1550.9 373.9,1578.3 377.8,1578.3 381.6,1573.7 385.4,1569.2 389.3,1555.5 393.1,1569.2 397,1573.7 400.8,1578.3 404.6,1569.2 408.5,1573.7 412.3,1569.2 416.2,1578.3 420,1578.3 423.8,1578.3 427.7,1578.3 431.5,1578.3 435.4,1578.3 439.2,1573.7 443,1550.9 446.9,1550.9 450.7,1564.6 454.6,1578.3 458.4,1569.2 462.2,1578.3 466.1,1578.3 469.9,1578.3 473.8,1560.1 477.6,1578.3 481.4,1578.3 485.3,1560.1 489.1,1546.4 492.9,1569.2 496.8,1573.7 500.6,1578.3 504.5,1578.3 508.3,1578.3 512.1,1578.3 516,1550.9 519.8,1564.6 523.7,1573.7 527.5,1578.3 531.3,1578.3 535.2,1578.3 539,1578.3 542.9,1578.3 546.7,1578.3 550.5,1578.3 554.4,1578.3 558.2,1573.7 562.1,1578.3 565.9,1578.3 569.7,1573.7 573.6,1569.2 577.4,1560.1 581.3,1564.6 585.1,1578.3 588.9,1578.3 592.8,1569.2 596.6,1573.7 600.5,1578.3 604.3,1578.3 608.1,1578.3 612,1573.7 615.8,1573.7 619.7,1578.3 623.5,1569.2 627.3,1546.4 631.2,1573.7 635,1578.3 638.9,1578.3 642.7,1578.3 646.5,1578.3 650.4,1578.3 654.2,1578.3 658.1,1569.2 661.9,1573.7 665.7,1578.3 669.6,1573.7 673.4,1546.4 677.2,1569.2 681.1,1546.4 684.9,1573.7 688.8,1555.5 692.6,1569.2 696.4,1569.2 700.3,1560.1 704.1,1578.3 708,1578.3 711.8,1564.6 715.6,1573.7 719.5,1578.3 723.3,1573.7 727.2,1541.8 731,1560.1 734.8,1546.4 738.7,1578.3 742.5,1578.3 746.4,1573.7 750.2,1578.3 754,1578.3 757.9,1578.3 761.7,1578.3 765.6,1550.9 769.4,1578.3 773.2,1573.7 777.1,1578.3 780.9,1560.1 784.8,1560.1 788.6,1578.3 792.4,1578.3 796.3,1573.7 800.1,1578.3 804,1550.9 807.8,1578.3 811.6,1569.2 815.5,1555.5 819.3,1573.7 823.2,1578.3 827,1578.3 830.8,1560.1 834.7,1569.2 838.5,1578.3 842.4,1555.5 846.2,1578.3 850,1569.2 853.9,1578.3 857.7,1564.6 861.5,1541.8 865.4,1578.3 869.2,1569.2 873.1,1578.3 876.9,1546.4 880.7,1578.3 884.6,1573.7 888.4,1564.6 892.3,1569.2 896.1,1578.3 899.9,1578.3 903.8,1541.8 907.6,1578.3 911.5,1578.3 915.3,1569.2 919.1,1573.7 923,1569.2 926.8,1578.3 930.7,1573.7 934.5,1546.4 938.3,1550.9 942.2,1578.3 946,1578.3 949.9,1578.3 953.7,1569.2 957.5,1560.1 961.4,1578.3 965.2,1578.3 969.1,1569.2 972.9,1578.3 976.7,1578.3 980.6,1578.3 984.4,1569.2 988.3,1578.3 992.1,1578.3 995.9,1560.1 999.8,1578.3 1003.6,1578.3 1007.5,1569.2 1011.3,1573.7 1015.1,1578.3 1019,1578.3 1022.8,1573.7 1026.6,1578.3 1030.5,1578.3 1034.3,1578.3 1038.2,1578.3 1042,1573.7 1045.8,1573.7 1049.7,1569.2 1053.5,1573.7 1057.4,1569.2 1061.2,1569.2 1065,1569.2 1068.9,1578.3 1072.7,1573.7 1076.6,1573.7 1080.4,1573.7 1084.2,1569.2 1088.1,1578.3 1091.9,1578.3 1095.8,1578.3 1099.6,1569.2 1103.4,1578.3 1107.3,1573.7 1111.1,1560.1 1115,1578.3 1118.8,1569.2 1122.6,1569.2 1126.5,1578.3 1130.3,1578.3 1134.2,1578.3 1138,1569.2 1141.8,1578.3 1145.7,1578.3 1149.5,1573.7 1153.4,1578.3" fill="none" stroke="#5b7fd0" stroke-width="3.7" stroke-linejoin="bevel" stroke-opacity="0.85"/>
<polygon points="235.7,1578.3 235.7,1578.3 239.5,1555.5 243.4,1578.3 247.2,1578.3 251.1,1578.3 254.9,1578.3 258.7,1550.9 262.6,1578.3 266.4,1578.3 270.3,1578.3 274.1,1578.3 277.9,1578.3 281.8,1578.3 285.6,1578.3 289.5,1578.3 293.3,1573.7 297.1,1578.3 301,1573.7 304.8,1573.7 308.7,1578.3 312.5,1578.3 316.3,1578.3 320.2,1578.3 324,1578.3 327.8,1578.3 331.7,1578.3 335.5,1578.3 339.4,1555.5 343.2,1578.3 347,1573.7 350.9,1550.9 354.7,1578.3 358.6,1578.3 362.4,1578.3 366.2,1578.3 370.1,1550.9 373.9,1578.3 377.8,1578.3 381.6,1578.3 385.4,1578.3 389.3,1578.3 393.1,1578.3 397,1578.3 400.8,1550.9 404.6,1578.3 408.5,1578.3 412.3,1560.1 416.2,1578.3 420,1578.3 423.8,1573.7 427.7,1560.1 431.5,1578.3 435.4,1578.3 439.2,1578.3 443,1550.9 446.9,1555.5 450.7,1578.3 454.6,1578.3 458.4,1578.3 462.2,1578.3 466.1,1578.3 469.9,1532.7 473.8,1578.3 477.6,1578.3 481.4,1578.3 485.3,1578.3 489.1,1578.3 492.9,1578.3 496.8,1573.7 500.6,1578.3 504.5,1578.3 508.3,1578.3 512.1,1578.3 516,1578.3 519.8,1578.3 523.7,1573.7 527.5,1550.9 531.3,1578.3 535.2,1578.3 539,1578.3 542.9,1578.3 546.7,1578.3 550.5,1578.3 554.4,1578.3 558.2,1578.3 562.1,1573.7 565.9,1578.3 569.7,1564.6 573.6,1537.2 577.4,1560.1 581.3,1578.3 585.1,1550.9 588.9,1578.3 592.8,1573.7 596.6,1578.3 600.5,1578.3 604.3,1564.6 608.1,1578.3 612,1578.3 615.8,1573.7 619.7,1573.7 623.5,1578.3 627.3,1578.3 631.2,1578.3 635,1578.3 638.9,1578.3 642.7,1578.3 646.5,1578.3 650.4,1578.3 654.2,1578.3 658.1,1578.3 661.9,1578.3 665.7,1578.3 669.6,1573.7 673.4,1550.9 677.2,1550.9 681.1,1578.3 684.9,1578.3 688.8,1578.3 692.6,1564.6 696.4,1578.3 700.3,1573.7 704.1,1578.3 708,1578.3 711.8,1578.3 715.6,1578.3 719.5,1578.3 723.3,1578.3 727.2,1550.9 731,1578.3 734.8,1578.3 738.7,1578.3 742.5,1578.3 746.4,1578.3 750.2,1578.3 754,1573.7 757.9,1560.1 761.7,1578.3 765.6,1578.3 769.4,1578.3 773.2,1564.6 777.1,1578.3 780.9,1578.3 784.8,1578.3 788.6,1578.3 792.4,1578.3 796.3,1578.3 800.1,1578.3 804,1560.1 807.8,1578.3 811.6,1578.3 815.5,1573.7 819.3,1578.3 823.2,1578.3 827,1578.3 830.8,1578.3 834.7,1573.7 838.5,1578.3 842.4,1578.3 846.2,1578.3 850,1578.3 853.9,1578.3 857.7,1578.3 861.5,1578.3 865.4,1578.3 869.2,1578.3 873.1,1555.5 876.9,1555.5 880.7,1578.3 884.6,1578.3 888.4,1578.3 892.3,1578.3 896.1,1537.2 899.9,1578.3 903.8,1578.3 907.6,1537.2 911.5,1578.3 915.3,1560.1 919.1,1573.7 923,1578.3 926.8,1578.3 930.7,1573.7 934.5,1578.3 938.3,1555.5 942.2,1573.7 946,1578.3 949.9,1578.3 953.7,1573.7 957.5,1573.7 961.4,1578.3 965.2,1573.7 969.1,1578.3 972.9,1578.3 976.7,1550.9 980.6,1578.3 984.4,1578.3 988.3,1573.7 992.1,1573.7 995.9,1564.6 999.8,1578.3 1003.6,1578.3 1007.5,1573.7 1011.3,1578.3 1015.1,1573.7 1019,1578.3 1022.8,1578.3 1026.6,1578.3 1030.5,1578.3 1034.3,1578.3 1038.2,1578.3 1042,1578.3 1045.8,1578.3 1049.7,1578.3 1053.5,1578.3 1057.4,1578.3 1061.2,1578.3 1065,1573.7 1068.9,1573.7 1072.7,1578.3 1076.6,1573.7 1080.4,1578.3 1084.2,1578.3 1088.1,1578.3 1091.9,1578.3 1095.8,1578.3 1099.6,1573.7 1103.4,1578.3 1107.3,1578.3 1111.1,1578.3 1115,1578.3 1118.8,1578.3 1122.6,1578.3 1126.5,1578.3 1130.3,1573.7 1134.2,1578.3 1138,1564.6 1141.8,1578.3 1145.7,1578.3 1149.5,1573.7 1153.4,1578.3 1153.4,1578.3" fill="#d35cf0" fill-opacity="0.4"/>
<polyline points="235.7,1578.3 239.5,1555.5 243.4,1578.3 247.2,1578.3 251.1,1578.3 254.9,1578.3 258.7,1550.9 262.6,1578.3 266.4,1578.3 270.3,1578.3 274.1,1578.3 277.9,1578.3 281.8,1578.3 285.6,1578.3 289.5,1578.3 293.3,1573.7 297.1,1578.3 301,1573.7 304.8,1573.7 308.7,1578.3 312.5,1578.3 316.3,1578.3 320.2,1578.3 324,1578.3 327.8,1578.3 331.7,1578.3 335.5,1578.3 339.4,1555.5 343.2,1578.3 347,1573.7 350.9,1550.9 354.7,1578.3 358.6,1578.3 362.4,1578.3 366.2,1578.3 370.1,1550.9 373.9,1578.3 377.8,1578.3 381.6,1578.3 385.4,1578.3 389.3,1578.3 393.1,1578.3 397,1578.3 400.8,1550.9 404.6,1578.3 408.5,1578.3 412.3,1560.1 416.2,1578.3 420,1578.3 423.8,1573.7 427.7,1560.1 431.5,1578.3 435.4,1578.3 439.2,1578.3 443,1550.9 446.9,1555.5 450.7,1578.3 454.6,1578.3 458.4,1578.3 462.2,1578.3 466.1,1578.3 469.9,1532.7 473.8,1578.3 477.6,1578.3 481.4,1578.3 485.3,1578.3 489.1,1578.3 492.9,1578.3 496.8,1573.7 500.6,1578.3 504.5,1578.3 508.3,1578.3 512.1,1578.3 516,1578.3 519.8,1578.3 523.7,1573.7 527.5,1550.9 531.3,1578.3 535.2,1578.3 539,1578.3 542.9,1578.3 546.7,1578.3 550.5,1578.3 554.4,1578.3 558.2,1578.3 562.1,1573.7 565.9,1578.3 569.7,1564.6 573.6,1537.2 577.4,1560.1 581.3,1578.3 585.1,1550.9 588.9,1578.3 592.8,1573.7 596.6,1578.3 600.5,1578.3 604.3,1564.6 608.1,1578.3 612,1578.3 615.8,1573.7 619.7,1573.7 623.5,1578.3 627.3,1578.3 631.2,1578.3 635,1578.3 638.9,1578.3 642.7,1578.3 646.5,1578.3 650.4,1578.3 654.2,1578.3 658.1,1578.3 661.9,1578.3 665.7,1578.3 669.6,1573.7 673.4,1550.9 677.2,1550.9 681.1,1578.3 684.9,1578.3 688.8,1578.3 692.6,1564.6 696.4,1578.3 700.3,1573.7 704.1,1578.3 708,1578.3 711.8,1578.3 715.6,1578.3 719.5,1578.3 723.3,1578.3 727.2,1550.9 731,1578.3 734.8,1578.3 738.7,1578.3 742.5,1578.3 746.4,1578.3 750.2,1578.3 754,1573.7 757.9,1560.1 761.7,1578.3 765.6,1578.3 769.4,1578.3 773.2,1564.6 777.1,1578.3 780.9,1578.3 784.8,1578.3 788.6,1578.3 792.4,1578.3 796.3,1578.3 800.1,1578.3 804,1560.1 807.8,1578.3 811.6,1578.3 815.5,1573.7 819.3,1578.3 823.2,1578.3 827,1578.3 830.8,1578.3 834.7,1573.7 838.5,1578.3 842.4,1578.3 846.2,1578.3 850,1578.3 853.9,1578.3 857.7,1578.3 861.5,1578.3 865.4,1578.3 869.2,1578.3 873.1,1555.5 876.9,1555.5 880.7,1578.3 884.6,1578.3 888.4,1578.3 892.3,1578.3 896.1,1537.2 899.9,1578.3 903.8,1578.3 907.6,1537.2 911.5,1578.3 915.3,1560.1 919.1,1573.7 923,1578.3 926.8,1578.3 930.7,1573.7 934.5,1578.3 938.3,1555.5 942.2,1573.7 946,1578.3 949.9,1578.3 953.7,1573.7 957.5,1573.7 961.4,1578.3 965.2,1573.7 969.1,1578.3 972.9,1578.3 976.7,1550.9 980.6,1578.3 984.4,1578.3 988.3,1573.7 992.1,1573.7 995.9,1564.6 999.8,1578.3 1003.6,1578.3 1007.5,1573.7 1011.3,1578.3 1015.1,1573.7 1019,1578.3 1022.8,1578.3 1026.6,1578.3 1030.5,1578.3 1034.3,1578.3 1038.2,1578.3 1042,1578.3 1045.8,1578.3 1049.7,1578.3 1053.5,1578.3 1057.4,1578.3 1061.2,1578.3 1065,1573.7 1068.9,1573.7 1072.7,1578.3 1076.6,1573.7 1080.4,1578.3 1084.2,1578.3 1088.1,1578.3 1091.9,1578.3 1095.8,1578.3 1099.6,1573.7 1103.4,1578.3 1107.3,1578.3 1111.1,1578.3 1115,1578.3 1118.8,1578.3 1122.6,1578.3 1126.5,1578.3 1130.3,1573.7 1134.2,1578.3 1138,1564.6 1141.8,1578.3 1145.7,1578.3 1149.5,1573.7 1153.4,1578.3" fill="none" stroke="#d35cf0" stroke-width="3.7" stroke-linejoin="bevel" stroke-opacity="0.85"/>
<polygon points="235.7,1578.3 235.7,1550.9 239.5,1555.5 243.4,1578.3 247.2,1578.3 251.1,1573.7 254.9,1578.3 258.7,1560.1 262.6,1550.9 266.4,1578.3 270.3,1569.2 274.1,1569.2 277.9,1578.3 281.8,1578.3 285.6,1578.3 289.5,1550.9 293.3,1560.1 297.1,1573.7 301,1578.3 304.8,1541.8 308.7,1560.1 312.5,1546.4 316.3,1550.9 320.2,1578.3 324,1550.9 327.8,1578.3 331.7,1578.3 335.5,1578.3 339.4,1578.3 343.2,1578.3 347,1578.3 350.9,1569.2 354.7,1578.3 358.6,1578.3 362.4,1564.6 366.2,1578.3 370.1,1569.2 373.9,1578.3 377.8,1555.5 381.6,1550.9 385.4,1550.9 389.3,1578.3 393.1,1578.3 397,1564.6 400.8,1560.1 404.6,1578.3 408.5,1578.3 412.3,1569.2 416.2,1569.2 420,1578.3 423.8,1546.4 427.7,1550.9 431.5,1569.2 435.4,1546.4 439.2,1578.3 443,1578.3 446.9,1569.2 450.7,1573.7 454.6,1578.3 458.4,1546.4 462.2,1578.3 466.1,1578.3 469.9,1578.3 473.8,1578.3 477.6,1578.3 481.4,1573.7 485.3,1573.7 489.1,1569.2 492.9,1578.3 496.8,1569.2 500.6,1560.1 504.5,1578.3 508.3,1555.5 512.1,1564.6 516,1541.8 519.8,1578.3 523.7,1578.3 527.5,1578.3 531.3,1578.3 535.2,1578.3 539,1578.3 542.9,1550.9 546.7,1578.3 550.5,1573.7 554.4,1578.3 558.2,1578.3 562.1,1569.2 565.9,1578.3 569.7,1560.1 573.6,1578.3 577.4,1573.7 581.3,1560.1 585.1,1569.2 588.9,1573.7 592.8,1573.7 596.6,1569.2 600.5,1569.2 604.3,1573.7 608.1,1569.2 612,1578.3 615.8,1573.7 619.7,1560.1 623.5,1578.3 627.3,1578.3 631.2,1550.9 635,1578.3 638.9,1578.3 642.7,1578.3 646.5,1578.3 650.4,1573.7 654.2,1578.3 658.1,1578.3 661.9,1578.3 665.7,1578.3 669.6,1569.2 673.4,1578.3 677.2,1578.3 681.1,1550.9 684.9,1578.3 688.8,1546.4 692.6,1573.7 696.4,1569.2 700.3,1560.1 704.1,1550.9 708,1573.7 711.8,1578.3 715.6,1578.3 719.5,1578.3 723.3,1555.5 727.2,1578.3 731,1578.3 734.8,1578.3 738.7,1569.2 742.5,1578.3 746.4,1578.3 750.2,1564.6 754,1578.3 757.9,1578.3 761.7,1569.2 765.6,1573.7 769.4,1555.5 773.2,1560.1 777.1,1541.8 780.9,1578.3 784.8,1573.7 788.6,1578.3 792.4,1578.3 796.3,1578.3 800.1,1541.8 804,1555.5 807.8,1578.3 811.6,1560.1 815.5,1564.6 819.3,1578.3 823.2,1569.2 827,1546.4 830.8,1546.4 834.7,1578.3 838.5,1578.3 842.4,1578.3 846.2,1569.2 850,1578.3 853.9,1578.3 857.7,1578.3 861.5,1578.3 865.4,1564.6 869.2,1569.2 873.1,1578.3 876.9,1546.4 880.7,1578.3 884.6,1573.7 888.4,1569.2 892.3,1573.7 896.1,1569.2 899.9,1555.5 903.8,1546.4 907.6,1560.1 911.5,1578.3 915.3,1578.3 919.1,1573.7 923,1564.6 926.8,1569.2 930.7,1573.7 934.5,1578.3 938.3,1578.3 942.2,1578.3 946,1555.5 949.9,1560.1 953.7,1564.6 957.5,1578.3 961.4,1578.3 965.2,1578.3 969.1,1578.3 972.9,1578.3 976.7,1573.7 980.6,1578.3 984.4,1578.3 988.3,1578.3 992.1,1578.3 995.9,1573.7 999.8,1578.3 1003.6,1560.1 1007.5,1569.2 1011.3,1578.3 1015.1,1569.2 1019,1573.7 1022.8,1560.1 1026.6,1578.3 1030.5,1578.3 1034.3,1569.2 1038.2,1578.3 1042,1578.3 1045.8,1573.7 1049.7,1578.3 1053.5,1578.3 1057.4,1573.7 1061.2,1578.3 1065,1569.2 1068.9,1564.6 1072.7,1578.3 1076.6,1560.1 1080.4,1578.3 1084.2,1569.2 1088.1,1569.2 1091.9,1573.7 1095.8,1578.3 1099.6,1578.3 1103.4,1578.3 1107.3,1578.3 1111.1,1578.3 1115,1578.3 1118.8,1578.3 1122.6,1564.6 1126.5,1573.7 1130.3,1578.3 1134.2,1569.2 1138,1573.7 1141.8,1573.7 1145.7,1569.2 1149.5,1569.2 1153.4,1578.3 1153.4,1578.3" fill="#9584dc" fill-opacity="0.4"/>
<polyline points="235.7,1550.9 239.5,1555.5 243.4,1578.3 247.2,1578.3 251.1,1573.7 254.9,1578.3 258.7,1560.1 262.6,1550.9 266.4,1578.3 270.3,1569.2 274.1,1569.2 277.9,1578.3 281.8,1578.3 285.6,1578.3 289.5,1550.9 293.3,1560.1 297.1,1573.7 301,1578.3 304.8,1541.8 308.7,1560.1 312.5,1546.4 316.3,1550.9 320.2,1578.3 324,1550.9 327.8,1578.3 331.7,1578.3 335.5,1578.3 339.4,1578.3 343.2,1578.3 347,1578.3 350.9,1569.2 354.7,1578.3 358.6,1578.3 362.4,1564.6 366.2,1578.3 370.1,1569.2 373.9,1578.3 377.8,1555.5 381.6,1550.9 385.4,1550.9 389.3,1578.3 393.1,1578.3 397,1564.6 400.8,1560.1 404.6,1578.3 408.5,1578.3 412.3,1569.2 416.2,1569.2 420,1578.3 423.8,1546.4 427.7,1550.9 431.5,1569.2 435.4,1546.4 439.2,1578.3 443,1578.3 446.9,1569.2 450.7,1573.7 454.6,1578.3 458.4,1546.4 462.2,1578.3 466.1,1578.3 469.9,1578.3 473.8,1578.3 477.6,1578.3 481.4,1573.7 485.3,1573.7 489.1,1569.2 492.9,1578.3 496.8,1569.2 500.6,1560.1 504.5,1578.3 508.3,1555.5 512.1,1564.6 516,1541.8 519.8,1578.3 523.7,1578.3 527.5,1578.3 531.3,1578.3 535.2,1578.3 539,1578.3 542.9,1550.9 546.7,1578.3 550.5,1573.7 554.4,1578.3 558.2,1578.3 562.1,1569.2 565.9,1578.3 569.7,1560.1 573.6,1578.3 577.4,1573.7 581.3,1560.1 585.1,1569.2 588.9,1573.7 592.8,1573.7 596.6,1569.2 600.5,1569.2 604.3,1573.7 608.1,1569.2 612,1578.3 615.8,1573.7 619.7,1560.1 623.5,1578.3 627.3,1578.3 631.2,1550.9 635,1578.3 638.9,1578.3 642.7,1578.3 646.5,1578.3 650.4,1573.7 654.2,1578.3 658.1,1578.3 661.9,1578.3 665.7,1578.3 669.6,1569.2 673.4,1578.3 677.2,1578.3 681.1,1550.9 684.9,1578.3 688.8,1546.4 692.6,1573.7 696.4,1569.2 700.3,1560.1 704.1,1550.9 708,1573.7 711.8,1578.3 715.6,1578.3 719.5,1578.3 723.3,1555.5 727.2,1578.3 731,1578.3 734.8,1578.3 738.7,1569.2 742.5,1578.3 746.4,1578.3 750.2,1564.6 754,1578.3 757.9,1578.3 761.7,1569.2 765.6,1573.7 769.4,1555.5 773.2,1560.1 777.1,1541.8 780.9,1578.3 784.8,1573.7 788.6,1578.3 792.4,1578.3 796.3,1578.3 800.1,1541.8 804,1555.5 807.8,1578.3 811.6,1560.1 815.5,1564.6 819.3,1578.3 823.2,1569.2 827,1546.4 830.8,1546.4 834.7,1578.3 838.5,1578.3 842.4,1578.3 846.2,1569.2 850,1578.3 853.9,1578.3 857.7,1578.3 861.5,1578.3 865.4,1564.6 869.2,1569.2 873.1,1578.3 876.9,1546.4 880.7,1578.3 884.6,1573.7 888.4,1569.2 892.3,1573.7 896.1,1569.2 899.9,1555.5 903.8,1546.4 907.6,1560.1 911.5,1578.3 915.3,1578.3 919.1,1573.7 923,1564.6 926.8,1569.2 930.7,1573.7 934.5,1578.3 938.3,1578.3 942.2,1578.3 946,1555.5 949.9,1560.1 953.7,1564.6 957.5,1578.3 961.4,1578.3 965.2,1578.3 969.1,1578.3 972.9,1578.3 976.7,1573.7 980.6,1578.3 984.4,1578.3 988.3,1578.3 992.1,1578.3 995.9,1573.7 999.8,1578.3 1003.6,1560.1 1007.5,1569.2 1011.3,1578.3 1015.1,1569.2 1019,1573.7 1022.8,1560.1 1026.6,1578.3 1030.5,1578.3 1034.3,1569.2 1038.2,1578.3 1042,1578.3 1045.8,1573.7 1049.7,1578.3 1053.5,1578.3 1057.4,1573.7 1061.2,1578.3 1065,1569.2 1068.9,1564.6 1072.7,1578.3 1076.6,1560.1 1080.4,1578.3 1084.2,1569.2 1088.1,1569.2 1091.9,1573.7 1095.8,1578.3 1099.6,1578.3 1103.4,1578.3 1107.3,1578.3 1111.1,1578.3 1115,1578.3 1118.8,1578.3 1122.6,1564.6 1126.5,1573.7 1130.3,1578.3 1134.2,1569.2 1138,1573.7 1141.8,1573.7 1145.7,1569.2 1149.5,1569.2 1153.4,1578.3" fill="none" stroke="#9584dc" stroke-width="3.7" stroke-linejoin="bevel" stroke-opacity="0.85"/>
<polygon points="235.7,1578.3 235.7,1541.8 239.5,1578.3 243.4,1578.3 247.2,1578.3 251.1,1578.3 254.9,1573.7 258.7,1578.3 262.6,1564.6 266.4,1578.3 270.3,1560.1 274.1,1573.7 277.9,1578.3 281.8,1578.3 285.6,1578.3 289.5,1578.3 293.3,1550.9 297.1,1573.7 301,1578.3 304.8,1573.7 308.7,1578.3 312.5,1578.3 316.3,1578.3 320.2,1578.3 324,1578.3 327.8,1578.3 331.7,1578.3 335.5,1560.1 339.4,1564.6 343.2,1578.3 347,1578.3 350.9,1564.6 354.7,1578.3 358.6,1578.3 362.4,1578.3 366.2,1578.3 370.1,1578.3 373.9,1550.9 377.8,1578.3 381.6,1578.3 385.4,1555.5 389.3,1578.3 393.1,1573.7 397,1578.3 400.8,1578.3 404.6,1578.3 408.5,1578.3 412.3,1578.3 416.2,1578.3 420,1578.3 423.8,1573.7 427.7,1578.3 431.5,1573.7 435.4,1578.3 439.2,1560.1 443,1564.6 446.9,1578.3 450.7,1573.7 454.6,1555.5 458.4,1560.1 462.2,1564.6 466.1,1573.7 469.9,1578.3 473.8,1573.7 477.6,1555.5 481.4,1578.3 485.3,1578.3 489.1,1578.3 492.9,1573.7 496.8,1578.3 500.6,1578.3 504.5,1578.3 508.3,1564.6 512.1,1578.3 516,1578.3 519.8,1578.3 523.7,1578.3 527.5,1578.3 531.3,1578.3 535.2,1578.3 539,1578.3 542.9,1578.3 546.7,1578.3 550.5,1578.3 554.4,1578.3 558.2,1573.7 562.1,1578.3 565.9,1546.4 569.7,1578.3 573.6,1541.8 577.4,1578.3 581.3,1541.8 585.1,1573.7 588.9,1578.3 592.8,1578.3 596.6,1573.7 600.5,1578.3 604.3,1578.3 608.1,1578.3 612,1578.3 615.8,1578.3 619.7,1578.3 623.5,1560.1 627.3,1578.3 631.2,1578.3 635,1578.3 638.9,1573.7 642.7,1573.7 646.5,1578.3 650.4,1578.3 654.2,1573.7 658.1,1578.3 661.9,1578.3 665.7,1578.3 669.6,1578.3 673.4,1564.6 677.2,1578.3 681.1,1578.3 684.9,1578.3 688.8,1578.3 692.6,1578.3 696.4,1560.1 700.3,1578.3 704.1,1573.7 708,1578.3 711.8,1578.3 715.6,1573.7 719.5,1573.7 723.3,1573.7 727.2,1578.3 731,1578.3 734.8,1578.3 738.7,1550.9 742.5,1578.3 746.4,1578.3 750.2,1578.3 754,1573.7 757.9,1578.3 761.7,1578.3 765.6,1578.3 769.4,1578.3 773.2,1578.3 777.1,1578.3 780.9,1578.3 784.8,1578.3 788.6,1560.1 792.4,1578.3 796.3,1578.3 800.1,1578.3 804,1573.7 807.8,1564.6 811.6,1546.4 815.5,1578.3 819.3,1578.3 823.2,1560.1 827,1541.8 830.8,1573.7 834.7,1578.3 838.5,1573.7 842.4,1578.3 846.2,1564.6 850,1578.3 853.9,1555.5 857.7,1578.3 861.5,1578.3 865.4,1573.7 869.2,1578.3 873.1,1578.3 876.9,1573.7 880.7,1541.8 884.6,1578.3 888.4,1578.3 892.3,1555.5 896.1,1578.3 899.9,1578.3 903.8,1578.3 907.6,1578.3 911.5,1578.3 915.3,1578.3 919.1,1578.3 923,1578.3 926.8,1578.3 930.7,1578.3 934.5,1578.3 938.3,1578.3 942.2,1578.3 946,1541.8 949.9,1573.7 953.7,1578.3 957.5,1573.7 961.4,1578.3 965.2,1573.7 969.1,1578.3 972.9,1573.7 976.7,1578.3 980.6,1578.3 984.4,1578.3 988.3,1532.7 992.1,1578.3 995.9,1578.3 999.8,1578.3 1003.6,1578.3 1007.5,1578.3 1011.3,1532.7 1015.1,1578.3 1019,1573.7 1022.8,1532.7 1026.6,1573.7 1030.5,1573.7 1034.3,1578.3 1038.2,1573.7 1042,1578.3 1045.8,1578.3 1049.7,1573.7 1053.5,1578.3 1057.4,1573.7 1061.2,1491.6 1065,1578.3 1068.9,1578.3 1072.7,1578.3 1076.6,1578.3 1080.4,1578.3 1084.2,1578.3 1088.1,1578.3 1091.9,1505.3 1095.8,1578.3 1099.6,1560.1 1103.4,1578.3 1107.3,1578.3 1111.1,1578.3 1115,1578.3 1118.8,1455.1 1122.6,1573.7 1126.5,1573.7 1130.3,1578.3 1134.2,1578.3 1138,1578.3 1141.8,1573.7 1145.7,1578.3 1149.5,1578.3 1153.4,1578.3 1153.4,1578.3" fill="#66788e" fill-opacity="0.4"/>
<polyline points="235.7,1541.8 239.5,1578.3 243.4,1578.3 247.2,1578.3 251.1,1578.3 254.9,1573.7 258.7,1578.3 262.6,1564.6 266.4,1578.3 270.3,1560.1 274.1,1573.7 277.9,1578.3 281.8,1578.3 285.6,1578.3 289.5,1578.3 293.3,1550.9 297.1,1573.7 301,1578.3 304.8,1573.7 308.7,1578.3 312.5,1578.3 316.3,1578.3 320.2,1578.3 324,1578.3 327.8,1578.3 331.7,1578.3 335.5,1560.1 339.4,1564.6 343.2,1578.3 347,1578.3 350.9,1564.6 354.7,1578.3 358.6,1578.3 362.4,1578.3 366.2,1578.3 370.1,1578.3 373.9,1550.9 377.8,1578.3 381.6,1578.3 385.4,1555.5 389.3,1578.3 393.1,1573.7 397,1578.3 400.8,1578.3 404.6,1578.3 408.5,1578.3 412.3,1578.3 416.2,1578.3 420,1578.3 423.8,1573.7 427.7,1578.3 431.5,1573.7 435.4,1578.3 439.2,1560.1 443,1564.6 446.9,1578.3 450.7,1573.7 454.6,1555.5 458.4,1560.1 462.2,1564.6 466.1,1573.7 469.9,1578.3 473.8,1573.7 477.6,1555.5 481.4,1578.3 485.3,1578.3 489.1,1578.3 492.9,1573.7 496.8,1578.3 500.6,1578.3 504.5,1578.3 508.3,1564.6 512.1,1578.3 516,1578.3 519.8,1578.3 523.7,1578.3 527.5,1578.3 531.3,1578.3 535.2,1578.3 539,1578.3 542.9,1578.3 546.7,1578.3 550.5,1578.3 554.4,1578.3 558.2,1573.7 562.1,1578.3 565.9,1546.4 569.7,1578.3 573.6,1541.8 577.4,1578.3 581.3,1541.8 585.1,1573.7 588.9,1578.3 592.8,1578.3 596.6,1573.7 600.5,1578.3 604.3,1578.3 608.1,1578.3 612,1578.3 615.8,1578.3 619.7,1578.3 623.5,1560.1 627.3,1578.3 631.2,1578.3 635,1578.3 638.9,1573.7 642.7,1573.7 646.5,1578.3 650.4,1578.3 654.2,1573.7 658.1,1578.3 661.9,1578.3 665.7,1578.3 669.6,1578.3 673.4,1564.6 677.2,1578.3 681.1,1578.3 684.9,1578.3 688.8,1578.3 692.6,1578.3 696.4,1560.1 700.3,1578.3 704.1,1573.7 708,1578.3 711.8,1578.3 715.6,1573.7 719.5,1573.7 723.3,1573.7 727.2,1578.3 731,1578.3 734.8,1578.3 738.7,1550.9 742.5,1578.3 746.4,1578.3 750.2,1578.3 754,1573.7 757.9,1578.3 761.7,1578.3 765.6,1578.3 769.4,1578.3 773.2,1578.3 777.1,1578.3 780.9,1578.3 784.8,1578.3 788.6,1560.1 792.4,1578.3 796.3,1578.3 800.1,1578.3 804,1573.7 807.8,1564.6 811.6,1546.4 815.5,1578.3 819.3,1578.3 823.2,1560.1 827,1541.8 830.8,1573.7 834.7,1578.3 838.5,1573.7 842.4,1578.3 846.2,1564.6 850,1578.3 853.9,1555.5 857.7,1578.3 861.5,1578.3 865.4,1573.7 869.2,1578.3 873.1,1578.3 876.9,1573.7 880.7,1541.8 884.6,1578.3 888.4,1578.3 892.3,1555.5 896.1,1578.3 899.9,1578.3 903.8,1578.3 907.6,1578.3 911.5,1578.3 915.3,1578.3 919.1,1578.3 923,1578.3 926.8,1578.3 930.7,1578.3 934.5,1578.3 938.3,1578.3 942.2,1578.3 946,1541.8 949.9,1573.7 953.7,1578.3 957.5,1573.7 961.4,1578.3 965.2,1573.7 969.1,1578.3 972.9,1573.7 976.7,1578.3 980.6,1578.3 984.4,1578.3 988.3,1532.7 992.1,1578.3 995.9,1578.3 999.8,1578.3 1003.6,1578.3 1007.5,1578.3 1011.3,1532.7 1015.1,1578.3 1019,1573.7 1022.8,1532.7 1026.6,1573.7 1030.5,1573.7 1034.3,1578.3 1038.2,1573.7 1042,1578.3 1045.8,1578.3 1049.7,1573.7 1053.5,1578.3 1057.4,1573.7 1061.2,1491.6 1065,1578.3 1068.9,1578.3 1072.7,1578.3 1076.6,1578.3 1080.4,1578.3 1084.2,1578.3 1088.1,1578.3 1091.9,1505.3 1095.8,1578.3 1099.6,1560.1 1103.4,1578.3 1107.3,1578.3 1111.1,1578.3 1115,1578.3 1118.8,1455.1 1122.6,1573.7 1126.5,1573.7 1130.3,1578.3 1134.2,1578.3 1138,1578.3 1141.8,1573.7 1145.7,1578.3 1149.5,1578.3 1153.4,1578.3" fill="none" stroke="#66788e" stroke-width="3.7" stroke-linejoin="bevel" stroke-opacity="0.85"/>
<polygon points="235.7,1578.3 235.7,1573.7 239.5,1573.7 243.4,1578.3 247.2,1564.6 251.1,1578.3 254.9,1578.3 258.7,1578.3 262.6,1578.3 266.4,1578.3 270.3,1578.3 274.1,1578.3 277.9,1578.3 281.8,1578.3 285.6,1573.7 289.5,1578.3 293.3,1578.3 297.1,1578.3 301,1578.3 304.8,1578.3 308.7,1564.6 312.5,1578.3 316.3,1578.3 320.2,1578.3 324,1578.3 327.8,1578.3 331.7,1578.3 335.5,1578.3 339.4,1573.7 343.2,1578.3 347,1578.3 350.9,1578.3 354.7,1578.3 358.6,1578.3 362.4,1564.6 366.2,1578.3 370.1,1578.3 373.9,1578.3 377.8,1578.3 381.6,1578.3 385.4,1578.3 389.3,1578.3 393.1,1578.3 397,1573.7 400.8,1578.3 404.6,1578.3 408.5,1578.3 412.3,1578.3 416.2,1578.3 420,1578.3 423.8,1578.3 427.7,1578.3 431.5,1578.3 435.4,1578.3 439.2,1573.7 443,1578.3 446.9,1578.3 450.7,1578.3 454.6,1578.3 458.4,1578.3 462.2,1573.7 466.1,1578.3 469.9,1578.3 473.8,1578.3 477.6,1578.3 481.4,1578.3 485.3,1578.3 489.1,1578.3 492.9,1578.3 496.8,1578.3 500.6,1578.3 504.5,1578.3 508.3,1578.3 512.1,1578.3 516,1564.6 519.8,1578.3 523.7,1578.3 527.5,1573.7 531.3,1578.3 535.2,1578.3 539,1578.3 542.9,1578.3 546.7,1573.7 550.5,1578.3 554.4,1578.3 558.2,1578.3 562.1,1578.3 565.9,1578.3 569.7,1573.7 573.6,1578.3 577.4,1564.6 581.3,1578.3 585.1,1578.3 588.9,1573.7 592.8,1578.3 596.6,1578.3 600.5,1578.3 604.3,1578.3 608.1,1578.3 612,1578.3 615.8,1578.3 619.7,1578.3 623.5,1578.3 627.3,1578.3 631.2,1578.3 635,1573.7 638.9,1578.3 642.7,1573.7 646.5,1564.6 650.4,1564.6 654.2,1578.3 658.1,1578.3 661.9,1578.3 665.7,1578.3 669.6,1573.7 673.4,1578.3 677.2,1578.3 681.1,1578.3 684.9,1578.3 688.8,1578.3 692.6,1573.7 696.4,1573.7 700.3,1578.3 704.1,1578.3 708,1573.7 711.8,1578.3 715.6,1578.3 719.5,1578.3 723.3,1573.7 727.2,1578.3 731,1578.3 734.8,1578.3 738.7,1578.3 742.5,1578.3 746.4,1564.6 750.2,1578.3 754,1564.6 757.9,1578.3 761.7,1578.3 765.6,1578.3 769.4,1578.3 773.2,1578.3 777.1,1578.3 780.9,1578.3 784.8,1578.3 788.6,1578.3 792.4,1578.3 796.3,1564.6 800.1,1578.3 804,1578.3 807.8,1578.3 811.6,1578.3 815.5,1578.3 819.3,1578.3 823.2,1573.7 827,1578.3 830.8,1578.3 834.7,1573.7 838.5,1578.3 842.4,1578.3 846.2,1564.6 850,1578.3 853.9,1578.3 857.7,1578.3 861.5,1578.3 865.4,1578.3 869.2,1578.3 873.1,1578.3 876.9,1578.3 880.7,1578.3 884.6,1578.3 888.4,1578.3 892.3,1578.3 896.1,1564.6 899.9,1578.3 903.8,1578.3 907.6,1578.3 911.5,1578.3 915.3,1578.3 919.1,1578.3 923,1578.3 926.8,1578.3 930.7,1578.3 934.5,1578.3 938.3,1578.3 942.2,1573.7 946,1578.3 949.9,1578.3 953.7,1578.3 957.5,1578.3 961.4,1573.7 965.2,1578.3 969.1,1578.3 972.9,1578.3 976.7,1578.3 980.6,1578.3 984.4,1578.3 988.3,1578.3 992.1,1573.7 995.9,1573.7 999.8,1578.3 1003.6,1578.3 1007.5,1578.3 1011.3,1578.3 1015.1,1578.3 1019,1578.3 1022.8,1578.3 1026.6,1578.3 1030.5,1578.3 1034.3,1578.3 1038.2,1578.3 1042,1578.3 1045.8,1578.3 1049.7,1578.3 1053.5,1578.3 1057.4,1578.3 1061.2,1578.3 1065,1578.3 1068.9,1564.6 1072.7,1573.7 1076.6,1578.3 1080.4,1578.3 1084.2,1573.7 1088.1,1564.6 1091.9,1573.7 1095.8,1564.6 1099.6,1578.3 1103.4,1578.3 1107.3,1573.7 1111.1,1578.3 1115,1578.3 1118.8,1578.3 1122.6,1573.7 1126.5,1578.3 1130.3,1578.3 1134.2,1578.3 1138,1578.3 1141.8,1578.3 1145.7,1564.6 1149.5,1578.3 1153.4,1573.7 1153.4,1578.3" fill="#dd566e" fill-opacity="0.4"/>
<polyline points="235.7,1573.7 239.5,1573.7 243.4,1578.3 247.2,1564.6 251.1,1578.3 254.9,1578.3 258.7,1578.3 262.6,1578.3 266.4,1578.3 270.3,1578.3 274.1,1578.3 277.9,1578.3 281.8,1578.3 285.6,1573.7 289.5,1578.3 293.3,1578.3 297.1,1578.3 301,1578.3 304.8,1578.3 308.7,1564.6 312.5,1578.3 316.3,1578.3 320.2,1578.3 324,1578.3 327.8,1578.3 331.7,1578.3 335.5,1578.3 339.4,1573.7 343.2,1578.3 347,1578.3 350.9,1578.3 354.7,1578.3 358.6,1578.3 362.4,1564.6 366.2,1578.3 370.1,1578.3 373.9,1578.3 377.8,1578.3 381.6,1578.3 385.4,1578.3 389.3,1578.3 393.1,1578.3 397,1573.7 400.8,1578.3 404.6,1578.3 408.5,1578.3 412.3,1578.3 416.2,1578.3 420,1578.3 423.8,1578.3 427.7,1578.3 431.5,1578.3 435.4,1578.3 439.2,1573.7 443,1578.3 446.9,1578.3 450.7,1578.3 454.6,1578.3 458.4,1578.3 462.2,1573.7 466.1,1578.3 469.9,1578.3 473.8,1578.3 477.6,1578.3 481.4,1578.3 485.3,1578.3 489.1,1578.3 492.9,1578.3 496.8,1578.3 500.6,1578.3 504.5,1578.3 508.3,1578.3 512.1,1578.3 516,1564.6 519.8,1578.3 523.7,1578.3 527.5,1573.7 531.3,1578.3 535.2,1578.3 539,1578.3 542.9,1578.3 546.7,1573.7 550.5,1578.3 554.4,1578.3 558.2,1578.3 562.1,1578.3 565.9,1578.3 569.7,1573.7 573.6,1578.3 577.4,1564.6 581.3,1578.3 585.1,1578.3 588.9,1573.7 592.8,1578.3 596.6,1578.3 600.5,1578.3 604.3,1578.3 608.1,1578.3 612,1578.3 615.8,1578.3 619.7,1578.3 623.5,1578.3 627.3,1578.3 631.2,1578.3 635,1573.7 638.9,1578.3 642.7,1573.7 646.5,1564.6 650.4,1564.6 654.2,1578.3 658.1,1578.3 661.9,1578.3 665.7,1578.3 669.6,1573.7 673.4,1578.3 677.2,1578.3 681.1,1578.3 684.9,1578.3 688.8,1578.3 692.6,1573.7 696.4,1573.7 700.3,1578.3 704.1,1578.3 708,1573.7 711.8,1578.3 715.6,1578.3 719.5,1578.3 723.3,1573.7 727.2,1578.3 731,1578.3 734.8,1578.3 738.7,1578.3 742.5,1578.3 746.4,1564.6 750.2,1578.3 754,1564.6 757.9,1578.3 761.7,1578.3 765.6,1578.3 769.4,1578.3 773.2,1578.3 777.1,1578.3 780.9,1578.3 784.8,1578.3 788.6,1578.3 792.4,1578.3 796.3,1564.6 800.1,1578.3 804,1578.3 807.8,1578.3 811.6,1578.3 815.5,1578.3 819.3,1578.3 823.2,1573.7 827,1578.3 830.8,1578.3 834.7,1573.7 838.5,1578.3 842.4,1578.3 846.2,1564.6 850,1578.3 853.9,1578.3 857.7,1578.3 861.5,1578.3 865.4,1578.3 869.2,1578.3 873.1,1578.3 876.9,1578.3 880.7,1578.3 884.6,1578.3 888.4,1578.3 892.3,1578.3 896.1,1564.6 899.9,1578.3 903.8,1578.3 907.6,1578.3 911.5,1578.3 915.3,1578.3 919.1,1578.3 923,1578.3 926.8,1578.3 930.7,1578.3 934.5,1578.3 938.3,1578.3 942.2,1573.7 946,1578.3 949.9,1578.3 953.7,1578.3 957.5,1578.3 961.4,1573.7 965.2,1578.3 969.1,1578.3 972.9,1578.3 976.7,1578.3 980.6,1578.3 984.4,1578.3 988.3,1578.3 992.1,1573.7 995.9,1573.7 999.8,1578.3 1003.6,1578.3 1007.5,1578.3 1011.3,1578.3 1015.1,1578.3 1019,1578.3 1022.8,1578.3 1026.6,1578.3 1030.5,1578.3 1034.3,1578.3 1038.2,1578.3 1042,1578.3 1045.8,1578.3 1049.7,1578.3 1053.5,1578.3 1057.4,1578.3 1061.2,1578.3 1065,1578.3 1068.9,1564.6 1072.7,1573.7 1076.6,1578.3 1080.4,1578.3 1084.2,1573.7 1088.1,1564.6 1091.9,1573.7 1095.8,1564.6 1099.6,1578.3 1103.4,1578.3 1107.3,1573.7 1111.1,1578.3 1115,1578.3 1118.8,1578.3 1122.6,1573.7 1126.5,1578.3 1130.3,1578.3 1134.2,1578.3 1138,1578.3 1141.8,1578.3 1145.7,1564.6 1149.5,1578.3 1153.4,1573.7" fill="none" stroke="#dd566e" stroke-width="3.7" stroke-linejoin="bevel" stroke-opacity="0.85"/>
<polygon points="235.7,1578.3 235.7,1578.3 239.5,1578.3 243.4,1578.3 247.2,1578.3 251.1,1578.3 254.9,1578.3 258.7,1578.3 262.6,1578.3 266.4,1578.3 270.3,1578.3 274.1,1578.3 277.9,1578.3 281.8,1578.3 285.6,1578.3 289.5,1578.3 293.3,1578.3 297.1,1578.3 301,1578.3 304.8,1578.3 308.7,1578.3 312.5,1578.3 316.3,1578.3 320.2,1578.3 324,1578.3 327.8,1578.3 331.7,1578.3 335.5,1578.3 339.4,1578.3 343.2,1578.3 347,1578.3 350.9,1578.3 354.7,1578.3 358.6,1578.3 362.4,1578.3 366.2,1578.3 370.1,1578.3 373.9,1578.3 377.8,1578.3 381.6,1578.3 385.4,1578.3 389.3,1578.3 393.1,1578.3 397,1578.3 400.8,1578.3 404.6,1578.3 408.5,1578.3 412.3,1578.3 416.2,1578.3 420,1578.3 423.8,1578.3 427.7,1578.3 431.5,1578.3 435.4,1578.3 439.2,1578.3 443,1578.3 446.9,1578.3 450.7,1578.3 454.6,1578.3 458.4,1578.3 462.2,1578.3 466.1,1578.3 469.9,1578.3 473.8,1578.3 477.6,1578.3 481.4,1578.3 485.3,1578.3 489.1,1578.3 492.9,1578.3 496.8,1578.3 500.6,1578.3 504.5,1578.3 508.3,1578.3 512.1,1569.2 516,1578.3 519.8,1578.3 523.7,1578.3 527.5,1569.2 531.3,1578.3 535.2,1578.3 539,1578.3 542.9,1578.3 546.7,1578.3 550.5,1578.3 554.4,1578.3 558.2,1578.3 562.1,1578.3 565.9,1578.3 569.7,1578.3 573.6,1578.3 577.4,1578.3 581.3,1578.3 585.1,1578.3 588.9,1578.3 592.8,1578.3 596.6,1578.3 600.5,1578.3 604.3,1578.3 608.1,1578.3 612,1578.3 615.8,1578.3 619.7,1578.3 623.5,1578.3 627.3,1578.3 631.2,1578.3 635,1578.3 638.9,1578.3 642.7,1578.3 646.5,1578.3 650.4,1578.3 654.2,1578.3 658.1,1578.3 661.9,1578.3 665.7,1569.2 669.6,1578.3 673.4,1578.3 677.2,1578.3 681.1,1578.3 684.9,1578.3 688.8,1578.3 692.6,1578.3 696.4,1578.3 700.3,1578.3 704.1,1578.3 708,1578.3 711.8,1578.3 715.6,1578.3 719.5,1578.3 723.3,1578.3 727.2,1578.3 731,1578.3 734.8,1578.3 738.7,1578.3 742.5,1578.3 746.4,1578.3 750.2,1578.3 754,1578.3 757.9,1578.3 761.7,1578.3 765.6,1578.3 769.4,1578.3 773.2,1578.3 777.1,1578.3 780.9,1578.3 784.8,1569.2 788.6,1578.3 792.4,1578.3 796.3,1578.3 800.1,1578.3 804,1578.3 807.8,1578.3 811.6,1578.3 815.5,1578.3 819.3,1578.3 823.2,1578.3 827,1578.3 830.8,1578.3 834.7,1578.3 838.5,1578.3 842.4,1578.3 846.2,1578.3 850,1578.3 853.9,1578.3 857.7,1578.3 861.5,1578.3 865.4,1578.3 869.2,1578.3 873.1,1578.3 876.9,1578.3 880.7,1578.3 884.6,1578.3 888.4,1578.3 892.3,1569.2 896.1,1578.3 899.9,1578.3 903.8,1578.3 907.6,1578.3 911.5,1578.3 915.3,1578.3 919.1,1578.3 923,1578.3 926.8,1578.3 930.7,1578.3 934.5,1578.3 938.3,1578.3 942.2,1578.3 946,1578.3 949.9,1578.3 953.7,1578.3 957.5,1578.3 961.4,1578.3 965.2,1578.3 969.1,1578.3 972.9,1578.3 976.7,1578.3 980.6,1578.3 984.4,1578.3 988.3,1578.3 992.1,1578.3 995.9,1578.3 999.8,1578.3 1003.6,1578.3 1007.5,1578.3 1011.3,1578.3 1015.1,1578.3 1019,1578.3 1022.8,1578.3 1026.6,1578.3 1030.5,1578.3 1034.3,1578.3 1038.2,1578.3 1042,1578.3 1045.8,1578.3 1049.7,1578.3 1053.5,1578.3 1057.4,1578.3 1061.2,1569.2 1065,1578.3 1068.9,1578.3 1072.7,1578.3 1076.6,1578.3 1080.4,1569.2 1084.2,1578.3 1088.1,1578.3 1091.9,1578.3 1095.8,1578.3 1099.6,1569.2 1103.4,1578.3 1107.3,1578.3 1111.1,1578.3 1115,1578.3 1118.8,1578.3 1122.6,1578.3 1126.5,1578.3 1130.3,1578.3 1134.2,1578.3 1138,1578.3 1141.8,1578.3 1145.7,1578.3 1149.5,1578.3 1153.4,1578.3 1153.4,1578.3" fill="#93546c" fill-opacity="0.4"/>
<polyline points="235.7,1578.3 239.5,1578.3 243.4,1578.3 247.2,1578.3 251.1,1578.3 254.9,1578.3 258.7,1578.3 262.6,1578.3 266.4,1578.3 270.3,1578.3 274.1,1578.3 277.9,1578.3 281.8,1578.3 285.6,1578.3 289.5,1578.3 293.3,1578.3 297.1,1578.3 301,1578.3 304.8,1578.3 308.7,1578.3 312.5,1578.3 316.3,1578.3 320.2,1578.3 324,1578.3 327.8,1578.3 331.7,1578.3 335.5,1578.3 339.4,1578.3 343.2,1578.3 347,1578.3 350.9,1578.3 354.7,1578.3 358.6,1578.3 362.4,1578.3 366.2,1578.3 370.1,1578.3 373.9,1578.3 377.8,1578.3 381.6,1578.3 385.4,1578.3 389.3,1578.3 393.1,1578.3 397,1578.3 400.8,1578.3 404.6,1578.3 408.5,1578.3 412.3,1578.3 416.2,1578.3 420,1578.3 423.8,1578.3 427.7,1578.3 431.5,1578.3 435.4,1578.3 439.2,1578.3 443,1578.3 446.9,1578.3 450.7,1578.3 454.6,1578.3 458.4,1578.3 462.2,1578.3 466.1,1578.3 469.9,1578.3 473.8,1578.3 477.6,1578.3 481.4,1578.3 485.3,1578.3 489.1,1578.3 492.9,1578.3 496.8,1578.3 500.6,1578.3 504.5,1578.3 508.3,1578.3 512.1,1569.2 516,1578.3 519.8,1578.3 523.7,1578.3 527.5,1569.2 531.3,1578.3 535.2,1578.3 539,1578.3 542.9,1578.3 546.7,1578.3 550.5,1578.3 554.4,1578.3 558.2,1578.3 562.1,1578.3 565.9,1578.3 569.7,1578.3 573.6,1578.3 577.4,1578.3 581.3,1578.3 585.1,1578.3 588.9,1578.3 592.8,1578.3 596.6,1578.3 600.5,1578.3 604.3,1578.3 608.1,1578.3 612,1578.3 615.8,1578.3 619.7,1578.3 623.5,1578.3 627.3,1578.3 631.2,1578.3 635,1578.3 638.9,1578.3 642.7,1578.3 646.5,1578.3 650.4,1578.3 654.2,1578.3 658.1,1578.3 661.9,1578.3 665.7,1569.2 669.6,1578.3 673.4,1578.3 677.2,1578.3 681.1,1578.3 684.9,1578.3 688.8,1578.3 692.6,1578.3 696.4,1578.3 700.3,1578.3 704.1,1578.3 708,1578.3 711.8,1578.3 715.6,1578.3 719.5,1578.3 723.3,1578.3 727.2,1578.3 731,1578.3 734.8,1578.3 738.7,1578.3 742.5,1578.3 746.4,1578.3 750.2,1578.3 754,1578.3 757.9,1578.3 761.7,1578.3 765.6,1578.3 769.4,1578.3 773.2,1578.3 777.1,1578.3 780.9,1578.3 784.8,1569.2 788.6,1578.3 792.4,1578.3 796.3,1578.3 800.1,1578.3 804,1578.3 807.8,1578.3 811.6,1578.3 815.5,1578.3 819.3,1578.3 823.2,1578.3 827,1578.3 830.8,1578.3 834.7,1578.3 838.5,1578.3 842.4,1578.3 846.2,1578.3 850,1578.3 853.9,1578.3 857.7,1578.3 861.5,1578.3 865.4,1578.3 869.2,1578.3 873.1,1578.3 876.9,1578.3 880.7,1578.3 884.6,1578.3 888.4,1578.3 892.3,1569.2 896.1,1578.3 899.9,1578.3 903.8,1578.3 907.6,1578.3 911.5,1578.3 915.3,1578.3 919.1,1578.3 923,1578.3 926.8,1578.3 930.7,1578.3 934.5,1578.3 938.3,1578.3 942.2,1578.3 946,1578.3 949.9,1578.3 953.7,1578.3 957.5,1578.3 961.4,1578.3 965.2,1578.3 969.1,1578.3 972.9,1578.3 976.7,1578.3 980.6,1578.3 984.4,1578.3 988.3,1578.3 992.1,1578.3 995.9,1578.3 999.8,1578.3 1003.6,1578.3 1007.5,1578.3 1011.3,1578.3 1015.1,1578.3 1019,1578.3 1022.8,1578.3 1026.6,1578.3 1030.5,1578.3 1034.3,1578.3 1038.2,1578.3 1042,1578.3 1045.8,1578.3 1049.7,1578.3 1053.5,1578.3 1057.4,1578.3 1061.2,1569.2 1065,1578.3 1068.9,1578.3 1072.7,1578.3 1076.6,1578.3 1080.4,1569.2 1084.2,1578.3 1088.1,1578.3 1091.9,1578.3 1095.8,1578.3 1099.6,1569.2 1103.4,1578.3 1107.3,1578.3 1111.1,1578.3 1115,1578.3 1118.8,1578.3 1122.6,1578.3 1126.5,1578.3 1130.3,1578.3 1134.2,1578.3 1138,1578.3 1141.8,1578.3 1145.7,1578.3 1149.5,1578.3 1153.4,1578.3" fill="none" stroke="#93546c" stroke-width="3.7" stroke-linejoin="bevel" stroke-opacity="0.85"/>
<path d="M211.1 1579.1H1171.7" stroke="#e8e8e8" stroke-width="2"/>
</g>
<g>
<text x="1350.5" y="1242.3" font-size="30.6" textLength="323.2" lengthAdjust="spacingAndGlyphs">CPU Used Time (VIWMI)</text>
<text x="1465.1" y="1586" font-size="20.4" text-anchor="end" textLength="9.9" lengthAdjust="spacingAndGlyphs">0</text>
<path d="M1475.2 1482.4H2401.7" stroke="#e8e8e8" stroke-width="1.8"/>
<text x="1465.1" y="1490.1" font-size="20.4" text-anchor="end" textLength="53.8" lengthAdjust="spacingAndGlyphs">20000</text>
<path d="M1475.2 1386.4H2401.7" stroke="#e8e8e8" stroke-width="1.8"/>
<text x="1465.1" y="1394.1" font-size="20.4" text-anchor="end" textLength="53.8" lengthAdjust="spacingAndGlyphs">40000</text>
<path d="M1475.2 1290.5H2401.7" stroke="#e8e8e8" stroke-width="1.8"/>
<text x="1465.1" y="1298.2" font-size="20.4" text-anchor="end" textLength="53.8" lengthAdjust="spacingAndGlyphs">60000</text>
<path d="M1481.1 1272.6V1578.3" stroke="#e8e8e8" stroke-width="1.8"/>
<path d="M1498.6 1578.3V1584.7" stroke="#e8e8e8" stroke-width="1.8"/>
<text x="1498.6" y="1609.2" font-size="20.4" text-anchor="middle" textLength="47.6" lengthAdjust="spacingAndGlyphs">00:03</text>
<path d="M1568.5 1578.3V1584.7" stroke="#e8e8e8" stroke-width="1.8"/>
<text x="1568.5" y="1609.2" font-size="20.4" text-anchor="middle" textLength="47.6" lengthAdjust="spacingAndGlyphs">01:38</text>
<path d="M1638.3 1578.3V1584.7" stroke="#e8e8e8" stroke-width="1.8"/>
<text x="1638.3" y="1609.2" font-size="20.4" text-anchor="middle" textLength="47.6" lengthAdjust="spacingAndGlyphs">03:13</text>
<path d="M1708.2 1578.3V1584.7" stroke="#e8e8e8" stroke-width="1.8"/>
<text x="1708.2" y="1609.2" font-size="20.4" text-anchor="middle" textLength="47.6" lengthAdjust="spacingAndGlyphs">04:48</text>
<path d="M1778 1578.3V1584.7" stroke="#e8e8e8" stroke-width="1.8"/>
<text x="1778" y="1609.2" font-size="20.4" text-anchor="middle" textLength="47.6" lengthAdjust="spacingAndGlyphs">06:24</text>
<path d="M1847.9 1578.3V1584.7" stroke="#e8e8e8" stroke-width="1.8"/>
<text x="1847.9" y="1609.2" font-size="20.4" text-anchor="middle" textLength="47.6" lengthAdjust="spacingAndGlyphs">07:59</text>
<path d="M1917.7 1578.3V1584.7" stroke="#e8e8e8" stroke-width="1.8"/>
<text x="1917.7" y="1609.2" font-size="20.4" text-anchor="middle" textLength="47.6" lengthAdjust="spacingAndGlyphs">09:34</text>
<path d="M1987.6 1578.3V1584.7" stroke="#e8e8e8" stroke-width="1.8"/>
<text x="1987.6" y="1609.2" font-size="20.4" text-anchor="middle" textLength="47.6" lengthAdjust="spacingAndGlyphs">11:09</text>
<path d="M2057.4 1578.3V1584.7" stroke="#e8e8e8" stroke-width="1.8"/>
<text x="2057.4" y="1609.2" font-size="20.4" text-anchor="middle" textLength="47.6" lengthAdjust="spacingAndGlyphs">12:44</text>
<path d="M2127.3 1578.3V1584.7" stroke="#e8e8e8" stroke-width="1.8"/>
<text x="2127.3" y="1609.2" font-size="20.4" text-anchor="middle" textLength="47.6" lengthAdjust="spacingAndGlyphs">14:19</text>
<path d="M2197.1 1578.3V1584.7" stroke="#e8e8e8" stroke-width="1.8"/>
<text x="2197.1" y="1609.2" font-size="20.4" text-anchor="middle" textLength="47.6" lengthAdjust="spacingAndGlyphs">15:54</text>
<path d="M2267 1578.3V1584.7" stroke="#e8e8e8" stroke-width="1.8"/>
<text x="2267" y="1609.2" font-size="20.4" text-anchor="middle" textLength="47.6" lengthAdjust="spacingAndGlyphs">17:29</text>
<path d="M2336.8 1578.3V1584.7" stroke="#e8e8e8" stroke-width="1.8"/>
<text x="2336.8" y="1609.2" font-size="20.4" text-anchor="middle" textLength="47.6" lengthAdjust="spacingAndGlyphs">19:04</text>
<text x="1941.2" y="1653.7" font-size="21.5" text-anchor="middle" textLength="47" lengthAdjust="spacingAndGlyphs">Time</text>
<text transform="translate(1382.5 1425.4) rotate(-90)" font-size="21.5" text-anchor="middle" textLength="120.5" lengthAdjust="spacingAndGlyphs">Milliseconds</text>
<polygon points="1498.6,1578.3 1498.6,1551.6 1502.3,1542.5 1506,1546.3 1509.7,1556.5 1513.4,1557.8 1517.1,1548 1520.8,1558.9 1524.5,1533.2 1528.2,1549.4 1531.9,1553.8 1535.7,1538.9 1539.4,1543.8 1543.1,1543.8 1546.8,1556.1 1550.5,1534 1554.2,1541.8 1557.9,1544.6 1561.6,1540.1 1565.3,1556.3 1569,1556.4 1572.7,1545.1 1576.4,1549.3 1580.1,1560.1 1583.8,1562.5 1587.5,1542.6 1591.2,1559.5 1594.9,1553.6 1598.6,1529.1 1602.3,1544.1 1606,1530.3 1609.7,1545 1613.4,1528.8 1617.2,1560 1620.9,1549.9 1624.6,1559.7 1628.3,1538.1 1632,1544.9 1635.7,1552.7 1639.4,1537.8 1643.1,1550.9 1646.8,1550.1 1650.5,1546.1 1654.2,1528.5 1657.9,1550.7 1661.6,1558.7 1665.3,1557.4 1669,1551.8 1672.7,1554.1 1676.4,1533.6 1680.1,1542.3 1683.8,1543.4 1687.5,1538.9 1691.2,1535.8 1694.9,1545 1698.7,1541 1702.4,1537.8 1706.1,1552.6 1709.8,1543.9 1713.5,1559.4 1717.2,1535.1 1720.9,1543.1 1724.6,1559.7 1728.3,1543.1 1732,1557.5 1735.7,1549.5 1739.4,1542.4 1743.1,1557.1 1746.8,1553 1750.5,1541.9 1754.2,1557.4 1757.9,1558.3 1761.6,1548 1765.3,1544.6 1769,1531.3 1772.7,1560.3 1776.4,1535.4 1780.2,1560.7 1783.9,1561.3 1787.6,1555.2 1791.3,1543.4 1795,1540.2 1798.7,1554.4 1802.4,1560.5 1806.1,1559.8 1809.8,1539.8 1813.5,1551.8 1817.2,1551.8 1820.9,1559.8 1824.6,1529.9 1828.3,1549.9 1832,1546.5 1835.7,1535.5 1839.4,1560.9 1843.1,1549.8 1846.8,1553.3 1850.5,1562.3 1854.2,1561.5 1858,1553.6 1861.7,1536.4 1865.4,1553.3 1869.1,1548.9 1872.8,1550.5 1876.5,1533.5 1880.2,1556.2 1883.9,1562.4 1887.6,1559.8 1891.3,1551.3 1895,1548.8 1898.7,1532.4 1902.4,1547.9 1906.1,1535.3 1909.8,1541.1 1913.5,1536.1 1917.2,1551.5 1920.9,1549.7 1924.6,1560.7 1928.3,1542.3 1932,1543.6 1935.7,1550.7 1939.5,1556.5 1943.2,1549 1946.9,1532.1 1950.6,1549.2 1954.3,1554.1 1958,1556.1 1961.7,1554.1 1965.4,1530.2 1969.1,1544.8 1972.8,1556.4 1976.5,1555.3 1980.2,1552.3 1983.9,1529.9 1987.6,1555.5 1991.3,1551.3 1995,1560.4 1998.7,1562 2002.4,1558.5 2006.1,1542.2 2009.8,1546.4 2013.5,1551.5 2017.2,1559.9 2021,1534.2 2024.7,1543.7 2028.4,1540.2 2032.1,1550.6 2035.8,1538.9 2039.5,1558.6 2043.2,1533 2046.9,1559.2 2050.6,1532.9 2054.3,1532.4 2058,1550.5 2061.7,1545.7 2065.4,1540.3 2069.1,1560.8 2072.8,1560 2076.5,1535.3 2080.2,1556.4 2083.9,1550.8 2087.6,1553.1 2091.3,1553 2095,1547.9 2098.7,1540.2 2102.5,1559.9 2106.2,1559.5 2109.9,1544.6 2113.6,1554.6 2117.3,1549.6 2121,1543.3 2124.7,1558.6 2128.4,1535.8 2132.1,1556.9 2135.8,1554.4 2139.5,1551.2 2143.2,1558.1 2146.9,1546.5 2150.6,1549.4 2154.3,1534.6 2158,1558.4 2161.7,1536.8 2165.4,1549 2169.1,1554 2172.8,1542.2 2176.5,1546.4 2180.3,1558.9 2184,1540 2187.7,1531.8 2191.4,1545.6 2195.1,1549.7 2198.8,1557.9 2202.5,1561.9 2206.2,1551.6 2209.9,1542.6 2213.6,1550.3 2217.3,1542.4 2221,1552.3 2224.7,1541.6 2228.4,1552.1 2232.1,1539.6 2235.8,1539 2239.5,1530.2 2243.2,1547.2 2246.9,1559.9 2250.6,1545.4 2254.3,1542.7 2258,1555.2 2261.8,1555.9 2265.5,1529 2269.2,1538.6 2272.9,1529.8 2276.6,1549.2 2280.3,1558.8 2284,1560.8 2287.7,1555.9 2291.4,1553.7 2295.1,1554.1 2298.8,1547.2 2302.5,1551.7 2306.2,1555.2 2309.9,1552.6 2313.6,1550.9 2317.3,1536 2321,1555.1 2324.7,1545.9 2328.4,1548.7 2332.1,1537.6 2335.8,1553.8 2339.5,1540.8 2343.3,1560.5 2347,1541 2350.7,1541.9 2354.4,1556.2 2358.1,1554.2 2361.8,1545.2 2365.5,1554.2 2369.2,1543.7 2372.9,1561.8 2376.6,1543.5 2380.3,1534.9 2384,1532.8 2384,1578.3" fill="#6fd3e6" fill-opacity="0.5"/>
<polyline points="1498.6,1551.6 1502.3,1542.5 1506,1546.3 1509.7,1556.5 1513.4,1557.8 1517.1,1548 1520.8,1558.9 1524.5,1533.2 1528.2,1549.4 1531.9,1553.8 1535.7,1538.9 1539.4,1543.8 1543.1,1543.8 1546.8,1556.1 1550.5,1534 1554.2,1541.8 1557.9,1544.6 1561.6,1540.1 1565.3,1556.3 1569,1556.4 1572.7,1545.1 1576.4,1549.3 1580.1,1560.1 1583.8,1562.5 1587.5,1542.6 1591.2,1559.5 1594.9,1553.6 1598.6,1529.1 1602.3,1544.1 1606,1530.3 1609.7,1545 1613.4,1528.8 1617.2,1560 1620.9,1549.9 1624.6,1559.7 1628.3,1538.1 1632,1544.9 1635.7,1552.7 1639.4,1537.8 1643.1,1550.9 1646.8,1550.1 1650.5,1546.1 1654.2,1528.5 1657.9,1550.7 1661.6,1558.7 1665.3,1557.4 1669,1551.8 1672.7,1554.1 1676.4,1533.6 1680.1,1542.3 1683.8,1543.4 1687.5,1538.9 1691.2,1535.8 1694.9,1545 1698.7,1541 1702.4,1537.8 1706.1,1552.6 1709.8,1543.9 1713.5,1559.4 1717.2,1535.1 1720.9,1543.1 1724.6,1559.7 1728.3,1543.1 1732,1557.5 1735.7,1549.5 1739.4,1542.4 1743.1,1557.1 1746.8,1553 1750.5,1541.9 1754.2,1557.4 1757.9,1558.3 1761.6,1548 1765.3,1544.6 1769,1531.3 1772.7,1560.3 1776.4,1535.4 1780.2,1560.7 1783.9,1561.3 1787.6,1555.2 1791.3,1543.4 1795,1540.2 1798.7,1554.4 1802.4,1560.5 1806.1,1559.8 1809.8,1539.8 1813.5,1551.8 1817.2,1551.8 1820.9,1559.8 1824.6,1529.9 1828.3,1549.9 1832,1546.5 1835.7,1535.5 1839.4,1560.9 1843.1,1549.8 1846.8,1553.3 1850.5,1562.3 1854.2,1561.5 1858,1553.6 1861.7,1536.4 1865.4,1553.3 1869.1,1548.9 1872.8,1550.5 1876.5,1533.5 1880.2,1556.2 1883.9,1562.4 1887.6,1559.8 1891.3,1551.3 1895,1548.8 1898.7,1532.4 1902.4,1547.9 1906.1,1535.3 1909.8,1541.1 1913.5,1536.1 1917.2,1551.5 1920.9,1549.7 1924.6,1560.7 1928.3,1542.3 1932,1543.6 1935.7,1550.7 1939.5,1556.5 1943.2,1549 1946.9,1532.1 1950.6,1549.2 1954.3,1554.1 1958,1556.1 1961.7,1554.1 1965.4,1530.2 1969.1,1544.8 1972.8,1556.4 1976.5,1555.3 1980.2,1552.3 1983.9,1529.9 1987.6,1555.5 1991.3,1551.3 1995,1560.4 1998.7,1562 2002.4,1558.5 2006.1,1542.2 2009.8,1546.4 2013.5,1551.5 2017.2,1559.9 2021,1534.2 2024.7,1543.7 2028.4,1540.2 2032.1,1550.6 2035.8,1538.9 2039.5,1558.6 2043.2,1533 2046.9,1559.2 2050.6,1532.9 2054.3,1532.4 2058,1550.5 2061.7,1545.7 2065.4,1540.3 2069.1,1560.8 2072.8,1560 2076.5,1535.3 2080.2,1556.4 2083.9,1550.8 2087.6,1553.1 2091.3,1553 2095,1547.9 2098.7,1540.2 2102.5,1559.9 2106.2,1559.5 2109.9,1544.6 2113.6,1554.6 2117.3,1549.6 2121,1543.3 2124.7,1558.6 2128.4,1535.8 2132.1,1556.9 2135.8,1554.4 2139.5,1551.2 2143.2,1558.1 2146.9,1546.5 2150.6,1549.4 2154.3,1534.6 2158,1558.4 2161.7,1536.8 2165.4,1549 2169.1,1554 2172.8,1542.2 2176.5,1546.4 2180.3,1558.9 2184,1540 2187.7,1531.8 2191.4,1545.6 2195.1,1549.7 2198.8,1557.9 2202.5,1561.9 2206.2,1551.6 2209.9,1542.6 2213.6,1550.3 2217.3,1542.4 2221,1552.3 2224.7,1541.6 2228.4,1552.1 2232.1,1539.6 2235.8,1539 2239.5,1530.2 2243.2,1547.2 2246.9,1559.9 2250.6,1545.4 2254.3,1542.7 2258,1555.2 2261.8,1555.9 2265.5,1529 2269.2,1538.6 2272.9,1529.8 2276.6,1549.2 2280.3,1558.8 2284,1560.8 2287.7,1555.9 2291.4,1553.7 2295.1,1554.1 2298.8,1547.2 2302.5,1551.7 2306.2,1555.2 2309.9,1552.6 2313.6,1550.9 2317.3,1536 2321,1555.1 2324.7,1545.9 2328.4,1548.7 2332.1,1537.6 2335.8,1553.8 2339.5,1540.8 2343.3,1560.5 2347,1541 2350.7,1541.9 2354.4,1556.2 2358.1,1554.2 2361.8,1545.2 2365.5,1554.2 2369.2,1543.7 2372.9,1561.8 2376.6,1543.5 2380.3,1534.9 2384,1532.8" fill="none" stroke="#6fd3e6" stroke-width="3.7" stroke-linejoin="bevel" stroke-opacity="0.35"/>
<polygon points="1498.6,1578.3 1498.6,1560.9 1502.3,1551.5 1506,1556 1509.7,1556.1 1513.4,1537.7 1517.1,1539.3 1520.8,1555.4 1524.5,1551.6 1528.2,1562.8 1531.9,1557.2 1535.7,1539.6 1539.4,1566.1 1543.1,1549.7 1546.8,1561.1 1550.5,1560.1 1554.2,1551.3 1557.9,1559.7 1561.6,1543.3 1565.3,1552.4 1569,1546 1572.7,1555.6 1576.4,1554.6 1580.1,1550.8 1583.8,1542.1 1587.5,1553.1 1591.2,1539.1 1594.9,1554.1 1598.6,1558.8 1602.3,1544.5 1606,1558.8 1609.7,1539.9 1613.4,1554 1617.2,1550.9 1620.9,1561 1624.6,1555.3 1628.3,1540.8 1632,1529 1635.7,1519.4 1639.4,1547.5 1643.1,1522.2 1646.8,1563.7 1650.5,1538.6 1654.2,1563.3 1657.9,1561.7 1661.6,1541.7 1665.3,1559.5 1669,1544.9 1672.7,1551.8 1676.4,1539.6 1680.1,1550.8 1683.8,1561.3 1687.5,1550.4 1691.2,1537.9 1694.9,1552.6 1698.7,1561.5 1702.4,1538.4 1706.1,1546 1709.8,1550.2 1713.5,1550.1 1717.2,1554.8 1720.9,1562.8 1724.6,1564.8 1728.3,1560.7 1732,1558.9 1735.7,1554.7 1739.4,1553 1743.1,1559.7 1746.8,1546.7 1750.5,1544.7 1754.2,1548 1757.9,1549.5 1761.6,1566 1765.3,1556.5 1769,1556.7 1772.7,1563.1 1776.4,1553.7 1780.2,1558.6 1783.9,1541.2 1787.6,1549.3 1791.3,1556.4 1795,1559.1 1798.7,1562 1802.4,1560.9 1806.1,1550.4 1809.8,1558.4 1813.5,1560.9 1817.2,1560.8 1820.9,1556 1824.6,1563.1 1828.3,1556.4 1832,1563.3 1835.7,1539.8 1839.4,1541.5 1843.1,1557 1846.8,1537.8 1850.5,1554.3 1854.2,1553.8 1858,1539 1861.7,1538.4 1865.4,1539.1 1869.1,1560.9 1872.8,1562.7 1876.5,1556.5 1880.2,1548 1883.9,1556.5 1887.6,1551.1 1891.3,1550.2 1895,1537.7 1898.7,1537.6 1902.4,1538.3 1906.1,1535.6 1909.8,1555.2 1913.5,1559.7 1917.2,1561.4 1920.9,1550.3 1924.6,1545 1928.3,1564 1932,1554.3 1935.7,1549.5 1939.5,1561.7 1943.2,1552.1 1946.9,1551.2 1950.6,1555.2 1954.3,1553 1958,1556.8 1961.7,1564.1 1965.4,1563.8 1969.1,1550.7 1972.8,1539.1 1976.5,1563.6 1980.2,1542.6 1983.9,1560.1 1987.6,1539.1 1991.3,1557.4 1995,1538.5 1998.7,1538.5 2002.4,1560.7 2006.1,1541.8 2009.8,1556.2 2013.5,1561.2 2017.2,1521.6 2021,1551.7 2024.7,1542 2028.4,1558.6 2032.1,1527.6 2035.8,1543.1 2039.5,1557.3 2043.2,1550.7 2046.9,1565 2050.6,1547.9 2054.3,1547.8 2058,1548 2061.7,1556.7 2065.4,1551.4 2069.1,1554.4 2072.8,1555.5 2076.5,1558.4 2080.2,1564.1 2083.9,1559.7 2087.6,1524.2 2091.3,1559.2 2095,1565.1 2098.7,1554.5 2102.5,1553.2 2106.2,1545.4 2109.9,1551.2 2113.6,1562.4 2117.3,1526.2 2121,1564.1 2124.7,1553 2128.4,1565.1 2132.1,1540.5 2135.8,1548.1 2139.5,1548 2143.2,1544.1 2146.9,1564.3 2150.6,1555.4 2154.3,1547.1 2158,1517.9 2161.7,1560.2 2165.4,1561.8 2169.1,1539.4 2172.8,1550.2 2176.5,1565.3 2180.3,1542.8 2184,1549.5 2187.7,1544.4 2191.4,1548.8 2195.1,1560.4 2198.8,1539.4 2202.5,1538.9 2206.2,1542.1 2209.9,1564.5 2213.6,1563.5 2217.3,1556.9 2221,1554.7 2224.7,1540.9 2228.4,1563.8 2232.1,1560.1 2235.8,1539.4 2239.5,1553.9 2243.2,1541.8 2246.9,1543.7 2250.6,1564.3 2254.3,1548.2 2258,1556 2261.8,1564.2 2265.5,1540 2269.2,1552.8 2272.9,1551.7 2276.6,1560.6 2280.3,1551 2284,1533.7 2287.7,1560 2291.4,1544 2295.1,1556.5 2298.8,1564.2 2302.5,1539.2 2306.2,1537.6 2309.9,1563 2313.6,1538.6 2317.3,1551 2321,1563.3 2324.7,1565.4 2328.4,1566.1 2332.1,1559.4 2335.8,1547.3 2339.5,1563.1 2343.3,1552.7 2347,1565.5 2350.7,1538.6 2354.4,1555.6 2358.1,1549 2361.8,1548.6 2365.5,1564.6 2369.2,1564.7 2372.9,1551.5 2376.6,1562.7 2380.3,1544.3 2384,1559.6 2384,1578.3" fill="#f6ab4c" fill-opacity="0.5"/>
<polyline points="1498.6,1560.9 1502.3,1551.5 1506,1556 1509.7,1556.1 1513.4,1537.7 1517.1,1539.3 1520.8,1555.4 1524.5,1551.6 1528.2,1562.8 1531.9,1557.2 1535.7,1539.6 1539.4,1566.1 1543.1,1549.7 1546.8,1561.1 1550.5,1560.1 1554.2,1551.3 1557.9,1559.7 1561.6,1543.3 1565.3,1552.4 1569,1546 1572.7,1555.6 1576.4,1554.6 1580.1,1550.8 1583.8,1542.1 1587.5,1553.1 1591.2,1539.1 1594.9,1554.1 1598.6,1558.8 1602.3,1544.5 1606,1558.8 1609.7,1539.9 1613.4,1554 1617.2,1550.9 1620.9,1561 1624.6,1555.3 1628.3,1540.8 1632,1529 1635.7,1519.4 1639.4,1547.5 1643.1,1522.2 1646.8,1563.7 1650.5,1538.6 1654.2,1563.3 1657.9,1561.7 1661.6,1541.7 1665.3,1559.5 1669,1544.9 1672.7,1551.8 1676.4,1539.6 1680.1,1550.8 1683.8,1561.3 1687.5,1550.4 1691.2,1537.9 1694.9,1552.6 1698.7,1561.5 1702.4,1538.4 1706.1,1546 1709.8,1550.2 1713.5,1550.1 1717.2,1554.8 1720.9,1562.8 1724.6,1564.8 1728.3,1560.7 1732,1558.9 1735.7,1554.7 1739.4,1553 1743.1,1559.7 1746.8,1546.7 1750.5,1544.7 1754.2,1548 1757.9,1549.5 1761.6,1566 1765.3,1556.5 1769,1556.7 1772.7,1563.1 1776.4,1553.7 1780.2,1558.6 1783.9,1541.2 1787.6,1549.3 1791.3,1556.4 1795,1559.1 1798.7,1562 1802.4,1560.9 1806.1,1550.4 1809.8,1558.4 1813.5,1560.9 1817.2,1560.8 1820.9,1556 1824.6,1563.1 1828.3,1556.4 1832,1563.3 1835.7,1539.8 1839.4,1541.5 1843.1,1557 1846.8,1537.8 1850.5,1554.3 1854.2,1553.8 1858,1539 1861.7,1538.4 1865.4,1539.1 1869.1,1560.9 1872.8,1562.7 1876.5,1556.5 1880.2,1548 1883.9,1556.5 1887.6,1551.1 1891.3,1550.2 1895,1537.7 1898.7,1537.6 1902.4,1538.3 1906.1,1535.6 1909.8,1555.2 1913.5,1559.7 1917.2,1561.4 1920.9,1550.3 1924.6,1545 1928.3,1564 1932,1554.3 1935.7,1549.5 1939.5,1561.7 1943.2,1552.1 1946.9,1551.2 1950.6,1555.2 1954.3,1553 1958,1556.8 1961.7,1564.1 1965.4,1563.8 1969.1,1550.7 1972.8,1539.1 1976.5,1563.6 1980.2,1542.6 1983.9,1560.1 1987.6,1539.1 1991.3,1557.4 1995,1538.5 1998.7,1538.5 2002.4,1560.7 2006.1,1541.8 2009.8,1556.2 2013.5,1561.2 2017.2,1521.6 2021,1551.7 2024.7,1542 2028.4,1558.6 2032.1,1527.6 2035.8,1543.1 2039.5,1557.3 2043.2,1550.7 2046.9,1565 2050.6,1547.9 2054.3,1547.8 2058,1548 2061.7,1556.7 2065.4,1551.4 2069.1,1554.4 2072.8,1555.5 2076.5,1558.4 2080.2,1564.1 2083.9,1559.7 2087.6,1524.2 2091.3,1559.2 2095,1565.1 2098.7,1554.5 2102.5,1553.2 2106.2,1545.4 2109.9,1551.2 2113.6,1562.4 2117.3,1526.2 2121,1564.1 2124.7,1553 2128.4,1565.1 2132.1,1540.5 2135.8,1548.1 2139.5,1548 2143.2,1544.1 2146.9,1564.3 2150.6,1555.4 2154.3,1547.1 2158,1517.9 2161.7,1560.2 2165.4,1561.8 2169.1,1539.4 2172.8,1550.2 2176.5,1565.3 2180.3,1542.8 2184,1549.5 2187.7,1544.4 2191.4,1548.8 2195.1,1560.4 2198.8,1539.4 2202.5,1538.9 2206.2,1542.1 2209.9,1564.5 2213.6,1563.5 2217.3,1556.9 2221,1554.7 2224.7,1540.9 2228.4,1563.8 2232.1,1560.1 2235.8,1539.4 2239.5,1553.9 2243.2,1541.8 2246.9,1543.7 2250.6,1564.3 2254.3,1548.2 2258,1556 2261.8,1564.2 2265.5,1540 2269.2,1552.8 2272.9,1551.7 2276.6,1560.6 2280.3,1551 2284,1533.7 2287.7,1560 2291.4,1544 2295.1,1556.5 2298.8,1564.2 2302.5,1539.2 2306.2,1537.6 2309.9,1563 2313.6,1538.6 2317.3,1551 2321,1563.3 2324.7,1565.4 2328.4,1566.1 2332.1,1559.4 2335.8,1547.3 2339.5,1563.1 2343.3,1552.7 2347,1565.5 2350.7,1538.6 2354.4,1555.6 2358.1,1549 2361.8,1548.6 2365.5,1564.6 2369.2,1564.7 2372.9,1551.5 2376.6,1562.7 2380.3,1544.3 2384,1559.6" fill="none" stroke="#f6ab4c" stroke-width="3.7" stroke-linejoin="bevel" stroke-opacity="0.35"/>
<polygon points="1498.6,1578.3 1498.6,1552.6 1502.3,1559 1506,1552.9 1509.7,1566.7 1513.4,1552.5 1517.1,1540.4 1520.8,1554.3 1524.5,1542.4 1528.2,1563.4 1531.9,1559.5 1535.7,1554.8 1539.4,1557.8 1543.1,1556.7 1546.8,1548.6 1550.5,1551.2 1554.2,1559.4 1557.9,1555.8 1561.6,1548.9 1565.3,1561.4 1569,1560.6 1572.7,1565.9 1576.4,1544.5 1580.1,1555.2 1583.8,1543.9 1587.5,1546.3 1591.2,1552.1 1594.9,1560.7 1598.6,1551.7 1602.3,1565.4 1606,1546.5 1609.7,1543.9 1613.4,1542.2 1617.2,1543.2 1620.9,1566.7 1624.6,1546 1628.3,1551.9 1632,1544.5 1635.7,1532.5 1639.4,1566.1 1643.1,1542.1 1646.8,1565.8 1650.5,1554.2 1654.2,1549.5 1657.9,1561 1661.6,1506.3 1665.3,1566.7 1669,1562.3 1672.7,1561.4 1676.4,1553.2 1680.1,1561.4 1683.8,1546.8 1687.5,1556.1 1691.2,1543 1694.9,1562.8 1698.7,1558.9 1702.4,1549.4 1706.1,1555 1709.8,1543.3 1713.5,1552.4 1717.2,1552.5 1720.9,1552.5 1724.6,1563.2 1728.3,1553.6 1732,1564.8 1735.7,1564.4 1739.4,1552.2 1743.1,1557.2 1746.8,1542.2 1750.5,1562.5 1754.2,1547.7 1757.9,1559.4 1761.6,1551.1 1765.3,1548.5 1769,1553.2 1772.7,1552.3 1776.4,1559.1 1780.2,1564.1 1783.9,1558.5 1787.6,1538.2 1791.3,1553.2 1795,1544 1798.7,1565.8 1802.4,1542.9 1806.1,1560.5 1809.8,1566.2 1813.5,1560.8 1817.2,1546.7 1820.9,1562.2 1824.6,1558.6 1828.3,1542.9 1832,1544.1 1835.7,1482.4 1839.4,1552.9 1843.1,1547.4 1846.8,1551.8 1850.5,1561.9 1854.2,1546.8 1858,1566 1861.7,1552.6 1865.4,1546.1 1869.1,1555 1872.8,1562.2 1876.5,1556.1 1880.2,1550.5 1883.9,1559.4 1887.6,1544.6 1891.3,1561.8 1895,1558.4 1898.7,1561.5 1902.4,1551.5 1906.1,1559.3 1909.8,1548.8 1913.5,1557.6 1917.2,1545.2 1920.9,1559 1924.6,1563.8 1928.3,1557.7 1932,1555 1935.7,1542.6 1939.5,1548 1943.2,1562 1946.9,1543.5 1950.6,1565 1954.3,1562.3 1958,1549.5 1961.7,1553.5 1965.4,1548.4 1969.1,1557.7 1972.8,1542 1976.5,1552.5 1980.2,1557.6 1983.9,1542.7 1987.6,1527.1 1991.3,1565.6 1995,1532.2 1998.7,1564.2 2002.4,1554.1 2006.1,1548.7 2009.8,1561.5 2013.5,1564.2 2017.2,1562.8 2021,1559.5 2024.7,1550.7 2028.4,1563.1 2032.1,1556.2 2035.8,1558.3 2039.5,1550.6 2043.2,1553.6 2046.9,1563.2 2050.6,1563 2054.3,1545 2058,1553.3 2061.7,1545.6 2065.4,1557.6 2069.1,1543.6 2072.8,1545.2 2076.5,1561.4 2080.2,1543.1 2083.9,1547.1 2087.6,1544.9 2091.3,1562 2095,1551.6 2098.7,1563.2 2102.5,1527 2106.2,1546.6 2109.9,1561.2 2113.6,1554.4 2117.3,1547.2 2121,1566.2 2124.7,1564.7 2128.4,1557.1 2132.1,1543.8 2135.8,1531.4 2139.5,1545.6 2143.2,1565 2146.9,1545.5 2150.6,1556.3 2154.3,1556.2 2158,1545.7 2161.7,1557.4 2165.4,1554.3 2169.1,1563.3 2172.8,1547.8 2176.5,1564 2180.3,1562.4 2184,1552.9 2187.7,1553.5 2191.4,1558.4 2195.1,1542.3 2198.8,1557.2 2202.5,1564.2 2206.2,1560.1 2209.9,1560.2 2213.6,1555.7 2217.3,1545.4 2221,1543.7 2224.7,1546.1 2228.4,1533.3 2232.1,1565.9 2235.8,1549.3 2239.5,1548.8 2243.2,1553.7 2246.9,1558.5 2250.6,1545.7 2254.3,1559.2 2258,1543.9 2261.8,1560.2 2265.5,1453.6 2269.2,1560.1 2272.9,1552.3 2276.6,1559.9 2280.3,1558.9 2284,1560.1 2287.7,1560.1 2291.4,1551.7 2295.1,1560.2 2298.8,1560.9 2302.5,1545.9 2306.2,1558.7 2309.9,1564.7 2313.6,1543.1 2317.3,1542.4 2321,1542.2 2324.7,1554.3 2328.4,1552.1 2332.1,1566.5 2335.8,1550.5 2339.5,1557 2343.3,1551.5 2347,1562.4 2350.7,1555.6 2354.4,1561.5 2358.1,1542.9 2361.8,1564.6 2365.5,1542.3 2369.2,1554.7 2372.9,1555.9 2376.6,1549 2380.3,1559.2 2384,1553.9 2384,1578.3" fill="#86cf9c" fill-opacity="0.5"/>
<polyline points="1498.6,1552.6 1502.3,1559 1506,1552.9 1509.7,1566.7 1513.4,1552.5 1517.1,1540.4 1520.8,1554.3 1524.5,1542.4 1528.2,1563.4 1531.9,1559.5 1535.7,1554.8 1539.4,1557.8 1543.1,1556.7 1546.8,1548.6 1550.5,1551.2 1554.2,1559.4 1557.9,1555.8 1561.6,1548.9 1565.3,1561.4 1569,1560.6 1572.7,1565.9 1576.4,1544.5 1580.1,1555.2 1583.8,1543.9 1587.5,1546.3 1591.2,1552.1 1594.9,1560.7 1598.6,1551.7 1602.3,1565.4 1606,1546.5 1609.7,1543.9 1613.4,1542.2 1617.2,1543.2 1620.9,1566.7 1624.6,1546 1628.3,1551.9 1632,1544.5 1635.7,1532.5 1639.4,1566.1 1643.1,1542.1 1646.8,1565.8 1650.5,1554.2 1654.2,1549.5 1657.9,1561 1661.6,1506.3 1665.3,1566.7 1669,1562.3 1672.7,1561.4 1676.4,1553.2 1680.1,1561.4 1683.8,1546.8 1687.5,1556.1 1691.2,1543 1694.9,1562.8 1698.7,1558.9 1702.4,1549.4 1706.1,1555 1709.8,1543.3 1713.5,1552.4 1717.2,1552.5 1720.9,1552.5 1724.6,1563.2 1728.3,1553.6 1732,1564.8 1735.7,1564.4 1739.4,1552.2 1743.1,1557.2 1746.8,1542.2 1750.5,1562.5 1754.2,1547.7 1757.9,1559.4 1761.6,1551.1 1765.3,1548.5 1769,1553.2 1772.7,1552.3 1776.4,1559.1 1780.2,1564.1 1783.9,1558.5 1787.6,1538.2 1791.3,1553.2 1795,1544 1798.7,1565.8 1802.4,1542.9 1806.1,1560.5 1809.8,1566.2 1813.5,1560.8 1817.2,1546.7 1820.9,1562.2 1824.6,1558.6 1828.3,1542.9 1832,1544.1 1835.7,1482.4 1839.4,1552.9 1843.1,1547.4 1846.8,1551.8 1850.5,1561.9 1854.2,1546.8 1858,1566 1861.7,1552.6 1865.4,1546.1 1869.1,1555 1872.8,1562.2 1876.5,1556.1 1880.2,1550.5 1883.9,1559.4 1887.6,1544.6 1891.3,1561.8 1895,1558.4 1898.7,1561.5 1902.4,1551.5 1906.1,1559.3 1909.8,1548.8 1913.5,1557.6 1917.2,1545.2 1920.9,1559 1924.6,1563.8 1928.3,1557.7 1932,1555 1935.7,1542.6 1939.5,1548 1943.2,1562 1946.9,1543.5 1950.6,1565 1954.3,1562.3 1958,1549.5 1961.7,1553.5 1965.4,1548.4 1969.1,1557.7 1972.8,1542 1976.5,1552.5 1980.2,1557.6 1983.9,1542.7 1987.6,1527.1 1991.3,1565.6 1995,1532.2 1998.7,1564.2 2002.4,1554.1 2006.1,1548.7 2009.8,1561.5 2013.5,1564.2 2017.2,1562.8 2021,1559.5 2024.7,1550.7 2028.4,1563.1 2032.1,1556.2 2035.8,1558.3 2039.5,1550.6 2043.2,1553.6 2046.9,1563.2 2050.6,1563 2054.3,1545 2058,1553.3 2061.7,1545.6 2065.4,1557.6 2069.1,1543.6 2072.8,1545.2 2076.5,1561.4 2080.2,1543.1 2083.9,1547.1 2087.6,1544.9 2091.3,1562 2095,1551.6 2098.7,1563.2 2102.5,1527 2106.2,1546.6 2109.9,1561.2 2113.6,1554.4 2117.3,1547.2 2121,1566.2 2124.7,1564.7 2128.4,1557.1 2132.1,1543.8 2135.8,1531.4 2139.5,1545.6 2143.2,1565 2146.9,1545.5 2150.6,1556.3 2154.3,1556.2 2158,1545.7 2161.7,1557.4 2165.4,1554.3 2169.1,1563.3 2172.8,1547.8 2176.5,1564 2180.3,1562.4 2184,1552.9 2187.7,1553.5 2191.4,1558.4 2195.1,1542.3 2198.8,1557.2 2202.5,1564.2 2206.2,1560.1 2209.9,1560.2 2213.6,1555.7 2217.3,1545.4 2221,1543.7 2224.7,1546.1 2228.4,1533.3 2232.1,1565.9 2235.8,1549.3 2239.5,1548.8 2243.2,1553.7 2246.9,1558.5 2250.6,1545.7 2254.3,1559.2 2258,1543.9 2261.8,1560.2 2265.5,1453.6 2269.2,1560.1 2272.9,1552.3 2276.6,1559.9 2280.3,1558.9 2284,1560.1 2287.7,1560.1 2291.4,1551.7 2295.1,1560.2 2298.8,1560.9 2302.5,1545.9 2306.2,1558.7 2309.9,1564.7 2313.6,1543.1 2317.3,1542.4 2321,1542.2 2324.7,1554.3 2328.4,1552.1 2332.1,1566.5 2335.8,1550.5 2339.5,1557 2343.3,1551.5 2347,1562.4 2350.7,1555.6 2354.4,1561.5 2358.1,1542.9 2361.8,1564.6 2365.5,1542.3 2369.2,1554.7 2372.9,1555.9 2376.6,1549 2380.3,1559.2 2384,1553.9" fill="none" stroke="#86cf9c" stroke-width="3.7" stroke-linejoin="bevel" stroke-opacity="0.35"/>
<polygon points="1498.6,1578.3 1498.6,1526.1 1502.3,1554.1 1506,1553.5 1509.7,1527.4 1513.4,1537.6 1517.1,1553.8 1520.8,1544.8 1524.5,1531.9 1528.2,1553.9 1531.9,1538 1535.7,1560.2 1539.4,1557.9 1543.1,1532.5 1546.8,1525.8 1550.5,1558.5 1554.2,1557.1 1557.9,1551.8 1561.6,1544.3 1565.3,1540.6 1569,1541.1 1572.7,1544.3 1576.4,1543.5 1580.1,1527.6 1583.8,1558.1 1587.5,1533.2 1591.2,1559.9 1594.9,1561.8 1598.6,1551.2 1602.3,1530.4 1606,1526.2 1609.7,1533.3 1613.4,1556.7 1617.2,1547 1620.9,1534.7 1624.6,1556.5 1628.3,1530 1632,1560 1635.7,1539.9 1639.4,1542.3 1643.1,1561.8 1646.8,1551.2 1650.5,1559.9 1654.2,1554.6 1657.9,1535.2 1661.6,1554.4 1665.3,1541.2 1669,1550.2 1672.7,1536 1676.4,1545.7 1680.1,1553.3 1683.8,1561 1687.5,1537.6 1691.2,1552.1 1694.9,1551.7 1698.7,1538.7 1702.4,1551.8 1706.1,1536.8 1709.8,1551.9 1713.5,1540.4 1717.2,1549.4 1720.9,1557.7 1724.6,1561.6 1728.3,1545.2 1732,1530.8 1735.7,1560.9 1739.4,1548.1 1743.1,1539.2 1746.8,1538.7 1750.5,1553.4 1754.2,1552.7 1757.9,1557.2 1761.6,1537.5 1765.3,1543.7 1769,1543.1 1772.7,1557 1776.4,1560.4 1780.2,1536.9 1783.9,1548.5 1787.6,1557.2 1791.3,1551.2 1795,1550.1 1798.7,1524.7 1802.4,1550.1 1806.1,1554.2 1809.8,1561.5 1813.5,1538.1 1817.2,1552.1 1820.9,1553.2 1824.6,1526.1 1828.3,1544.8 1832,1549.6 1835.7,1482.4 1839.4,1539.9 1843.1,1545.4 1846.8,1528.6 1850.5,1534.5 1854.2,1551.7 1858,1554.7 1861.7,1542 1865.4,1548.1 1869.1,1539.2 1872.8,1532.9 1876.5,1526 1880.2,1541.4 1883.9,1562 1887.6,1526.6 1891.3,1540.3 1895,1527.4 1898.7,1538 1902.4,1537.4 1906.1,1557.8 1909.8,1560.6 1913.5,1542.2 1917.2,1541.9 1920.9,1544.7 1924.6,1553.3 1928.3,1554.4 1932,1533.4 1935.7,1546 1939.5,1561.7 1943.2,1544.9 1946.9,1523.8 1950.6,1547.5 1954.3,1548.3 1958,1540 1961.7,1546.8 1965.4,1539.2 1969.1,1538.6 1972.8,1542.5 1976.5,1543.3 1980.2,1525.4 1983.9,1539.1 1987.6,1537 1991.3,1548.6 1995,1524 1998.7,1548.5 2002.4,1544.9 2006.1,1541.3 2009.8,1537.5 2013.5,1530 2017.2,1545.5 2021,1531 2024.7,1543.6 2028.4,1543 2032.1,1528.1 2035.8,1554.8 2039.5,1525.7 2043.2,1552 2046.9,1544.7 2050.6,1542.7 2054.3,1558.3 2058,1535.9 2061.7,1555.2 2065.4,1530 2069.1,1561.5 2072.8,1557.7 2076.5,1526.2 2080.2,1552.9 2083.9,1554.2 2087.6,1551.6 2091.3,1539.5 2095,1561.9 2098.7,1540.5 2102.5,1537.5 2106.2,1561.8 2109.9,1560.2 2113.6,1541.7 2117.3,1542.3 2121,1540.3 2124.7,1561.4 2128.4,1528.2 2132.1,1559.2 2135.8,1549.5 2139.5,1538.6 2143.2,1539.7 2146.9,1543.7 2150.6,1541.5 2154.3,1552.4 2158,1552.7 2161.7,1535.9 2165.4,1552.7 2169.1,1551.8 2172.8,1559.6 2176.5,1535.3 2180.3,1546.4 2184,1417.6 2187.7,1458.4 2191.4,1520.7 2195.1,1559.8 2198.8,1542.4 2202.5,1552.2 2206.2,1546 2209.9,1561.9 2213.6,1526.2 2217.3,1558 2221,1545.6 2224.7,1528.6 2228.4,1550.1 2232.1,1526.9 2235.8,1541.9 2239.5,1553 2243.2,1546 2246.9,1549.7 2250.6,1542.4 2254.3,1558.9 2258,1561.2 2261.8,1536.8 2265.5,1529.3 2269.2,1562 2272.9,1561 2276.6,1553.9 2280.3,1539 2284,1555.3 2287.7,1530.4 2291.4,1526.4 2295.1,1539 2298.8,1546.3 2302.5,1548 2306.2,1546.3 2309.9,1548.8 2313.6,1526.4 2317.3,1524.3 2321,1537.7 2324.7,1561.8 2328.4,1528.1 2332.1,1551.4 2335.8,1550.5 2339.5,1545.3 2343.3,1540.4 2347,1554 2350.7,1541.6 2354.4,1561.3 2358.1,1532.4 2361.8,1548.7 2365.5,1549.7 2369.2,1542.5 2372.9,1557.5 2376.6,1557.9 2380.3,1527.8 2384,1538.6 2384,1578.3" fill="#6cb0e6" fill-opacity="0.4"/>
<polyline points="1498.6,1526.1 1502.3,1554.1 1506,1553.5 1509.7,1527.4 1513.4,1537.6 1517.1,1553.8 1520.8,1544.8 1524.5,1531.9 1528.2,1553.9 1531.9,1538 1535.7,1560.2 1539.4,1557.9 1543.1,1532.5 1546.8,1525.8 1550.5,1558.5 1554.2,1557.1 1557.9,1551.8 1561.6,1544.3 1565.3,1540.6 1569,1541.1 1572.7,1544.3 1576.4,1543.5 1580.1,1527.6 1583.8,1558.1 1587.5,1533.2 1591.2,1559.9 1594.9,1561.8 1598.6,1551.2 1602.3,1530.4 1606,1526.2 1609.7,1533.3 1613.4,1556.7 1617.2,1547 1620.9,1534.7 1624.6,1556.5 1628.3,1530 1632,1560 1635.7,1539.9 1639.4,1542.3 1643.1,1561.8 1646.8,1551.2 1650.5,1559.9 1654.2,1554.6 1657.9,1535.2 1661.6,1554.4 1665.3,1541.2 1669,1550.2 1672.7,1536 1676.4,1545.7 1680.1,1553.3 1683.8,1561 1687.5,1537.6 1691.2,1552.1 1694.9,1551.7 1698.7,1538.7 1702.4,1551.8 1706.1,1536.8 1709.8,1551.9 1713.5,1540.4 1717.2,1549.4 1720.9,1557.7 1724.6,1561.6 1728.3,1545.2 1732,1530.8 1735.7,1560.9 1739.4,1548.1 1743.1,1539.2 1746.8,1538.7 1750.5,1553.4 1754.2,1552.7 1757.9,1557.2 1761.6,1537.5 1765.3,1543.7 1769,1543.1 1772.7,1557 1776.4,1560.4 1780.2,1536.9 1783.9,1548.5 1787.6,1557.2 1791.3,1551.2 1795,1550.1 1798.7,1524.7 1802.4,1550.1 1806.1,1554.2 1809.8,1561.5 1813.5,1538.1 1817.2,1552.1 1820.9,1553.2 1824.6,1526.1 1828.3,1544.8 1832,1549.6 1835.7,1482.4 1839.4,1539.9 1843.1,1545.4 1846.8,1528.6 1850.5,1534.5 1854.2,1551.7 1858,1554.7 1861.7,1542 1865.4,1548.1 1869.1,1539.2 1872.8,1532.9 1876.5,1526 1880.2,1541.4 1883.9,1562 1887.6,1526.6 1891.3,1540.3 1895,1527.4 1898.7,1538 1902.4,1537.4 1906.1,1557.8 1909.8,1560.6 1913.5,1542.2 1917.2,1541.9 1920.9,1544.7 1924.6,1553.3 1928.3,1554.4 1932,1533.4 1935.7,1546 1939.5,1561.7 1943.2,1544.9 1946.9,1523.8 1950.6,1547.5 1954.3,1548.3 1958,1540 1961.7,1546.8 1965.4,1539.2 1969.1,1538.6 1972.8,1542.5 1976.5,1543.3 1980.2,1525.4 1983.9,1539.1 1987.6,1537 1991.3,1548.6 1995,1524 1998.7,1548.5 2002.4,1544.9 2006.1,1541.3 2009.8,1537.5 2013.5,1530 2017.2,1545.5 2021,1531 2024.7,1543.6 2028.4,1543 2032.1,1528.1 2035.8,1554.8 2039.5,1525.7 2043.2,1552 2046.9,1544.7 2050.6,1542.7 2054.3,1558.3 2058,1535.9 2061.7,1555.2 2065.4,1530 2069.1,1561.5 2072.8,1557.7 2076.5,1526.2 2080.2,1552.9 2083.9,1554.2 2087.6,1551.6 2091.3,1539.5 2095,1561.9 2098.7,1540.5 2102.5,1537.5 2106.2,1561.8 2109.9,1560.2 2113.6,1541.7 2117.3,1542.3 2121,1540.3 2124.7,1561.4 2128.4,1528.2 2132.1,1559.2 2135.8,1549.5 2139.5,1538.6 2143.2,1539.7 2146.9,1543.7 2150.6,1541.5 2154.3,1552.4 2158,1552.7 2161.7,1535.9 2165.4,1552.7 2169.1,1551.8 2172.8,1559.6 2176.5,1535.3 2180.3,1546.4 2184,1417.6 2187.7,1458.4 2191.4,1520.7 2195.1,1559.8 2198.8,1542.4 2202.5,1552.2 2206.2,1546 2209.9,1561.9 2213.6,1526.2 2217.3,1558 2221,1545.6 2224.7,1528.6 2228.4,1550.1 2232.1,1526.9 2235.8,1541.9 2239.5,1553 2243.2,1546 2246.9,1549.7 2250.6,1542.4 2254.3,1558.9 2258,1561.2 2261.8,1536.8 2265.5,1529.3 2269.2,1562 2272.9,1561 2276.6,1553.9 2280.3,1539 2284,1555.3 2287.7,1530.4 2291.4,1526.4 2295.1,1539 2298.8,1546.3 2302.5,1548 2306.2,1546.3 2309.9,1548.8 2313.6,1526.4 2317.3,1524.3 2321,1537.7 2324.7,1561.8 2328.4,1528.1 2332.1,1551.4 2335.8,1550.5 2339.5,1545.3 2343.3,1540.4 2347,1554 2350.7,1541.6 2354.4,1561.3 2358.1,1532.4 2361.8,1548.7 2365.5,1549.7 2369.2,1542.5 2372.9,1557.5 2376.6,1557.9 2380.3,1527.8 2384,1538.6" fill="none" stroke="#6cb0e6" stroke-width="3.7" stroke-linejoin="bevel" stroke-opacity="0.88"/>
<polygon points="1498.6,1578.3 1498.6,1496.8 1502.3,1499.2 1506,1492 1509.7,1476.7 1513.4,1493 1517.1,1474.4 1520.8,1486.9 1524.5,1488.5 1528.2,1487.7 1531.9,1480.3 1535.7,1491.5 1539.4,1487.7 1543.1,1480.9 1546.8,1487.6 1550.5,1494.9 1554.2,1481.1 1557.9,1494.4 1561.6,1477.7 1565.3,1495.2 1569,1488.5 1572.7,1489.4 1576.4,1487 1580.1,1486.1 1583.8,1475.7 1587.5,1484.6 1591.2,1481.3 1594.9,1483.8 1598.6,1486.3 1602.3,1486.2 1606,1476.2 1609.7,1481.5 1613.4,1483.1 1617.2,1490.6 1620.9,1478.2 1624.6,1480.8 1628.3,1485.4 1632,1493.6 1635.7,1488.2 1639.4,1486.7 1643.1,1479.4 1646.8,1480.4 1650.5,1475 1654.2,1486.2 1657.9,1479.3 1661.6,1489.2 1665.3,1475.1 1669,1481.8 1672.7,1477.8 1676.4,1484.2 1680.1,1484.4 1683.8,1487.2 1687.5,1489.3 1691.2,1493.4 1694.9,1479.4 1698.7,1482.3 1702.4,1474.6 1706.1,1483.6 1709.8,1483.3 1713.5,1492 1717.2,1479.7 1720.9,1460.8 1724.6,1472.8 1728.3,1487.2 1732,1484.9 1735.7,1493.3 1739.4,1478.4 1743.1,1493.8 1746.8,1470.4 1750.5,1484 1754.2,1487.1 1757.9,1490.9 1761.6,1489.5 1765.3,1492.3 1769,1484.6 1772.7,1481.5 1776.4,1479.9 1780.2,1488.6 1783.9,1489 1787.6,1494.5 1791.3,1476.8 1795,1484.3 1798.7,1478.2 1802.4,1494 1806.1,1487.4 1809.8,1493.9 1813.5,1488.5 1817.2,1487.5 1820.9,1482.8 1824.6,1483.6 1828.3,1488.6 1832,1494 1835.7,1475.9 1839.4,1485.7 1843.1,1479.2 1846.8,1482.8 1850.5,1482.6 1854.2,1480.4 1858,1488 1861.7,1487.1 1865.4,1486 1869.1,1480.8 1872.8,1481.9 1876.5,1488.3 1880.2,1484.3 1883.9,1482.9 1887.6,1485.9 1891.3,1480.2 1895,1479.7 1898.7,1487 1902.4,1489.5 1906.1,1495 1909.8,1478 1913.5,1485.1 1917.2,1488.8 1920.9,1488.5 1924.6,1476.4 1928.3,1482.8 1932,1488.7 1935.7,1492.3 1939.5,1486.3 1943.2,1483 1946.9,1479.1 1950.6,1463.2 1954.3,1488.4 1958,1465.6 1961.7,1477.5 1965.4,1495.3 1969.1,1483.5 1972.8,1495.1 1976.5,1478.9 1980.2,1496.8 1983.9,1506.3 1987.6,1501.6 1991.3,1475.9 1995,1491.6 1998.7,1480.9 2002.4,1483.8 2006.1,1488.2 2009.8,1485.8 2013.5,1483.4 2017.2,1491.6 2021,1481.2 2024.7,1487.7 2028.4,1484.3 2032.1,1486.3 2035.8,1489 2039.5,1490.4 2043.2,1482.5 2046.9,1483.8 2050.6,1478.4 2054.3,1493.9 2058,1475 2061.7,1487.2 2065.4,1480.2 2069.1,1485.3 2072.8,1479.8 2076.5,1491.8 2080.2,1475.6 2083.9,1482.2 2087.6,1485.6 2091.3,1481.6 2095,1484.1 2098.7,1486.1 2102.5,1475.6 2106.2,1495.3 2109.9,1478.3 2113.6,1492.3 2117.3,1478.7 2121,1491.6 2124.7,1460.8 2128.4,1468 2132.1,1480.2 2135.8,1488.3 2139.5,1475.8 2143.2,1480.2 2146.9,1474.6 2150.6,1490.5 2154.3,1479.2 2158,1489.4 2161.7,1486.5 2165.4,1485.2 2169.1,1486.7 2172.8,1472.8 2176.5,1464.1 2180.3,1540.8 2184,1545.8 2187.7,1552.3 2191.4,1545.5 2195.1,1551.7 2198.8,1550.9 2202.5,1561.5 2206.2,1511.1 2209.9,1544.5 2213.6,1544.4 2217.3,1530.3 2221,1562.3 2224.7,1558 2228.4,1544.7 2232.1,1558.7 2235.8,1560.5 2239.5,1559.3 2243.2,1562.3 2246.9,1561.6 2250.6,1541 2254.3,1553.9 2258,1539.4 2261.8,1539.4 2265.5,1494.4 2269.2,1541.6 2272.9,1539.3 2276.6,1562.6 2280.3,1555.4 2284,1553.8 2287.7,1501.6 2291.4,1561 2295.1,1558.7 2298.8,1552.9 2302.5,1548.5 2306.2,1543 2309.9,1520.7 2313.6,1553.3 2317.3,1562.9 2321,1539.6 2324.7,1553.1 2328.4,1539.9 2332.1,1562.7 2335.8,1552.5 2339.5,1558.6 2343.3,1557.5 2347,1537.9 2350.7,1539.5 2354.4,1558.1 2358.1,1551.9 2361.8,1492 2365.5,1552.3 2369.2,1563.9 2372.9,1515.9 2376.6,1547.4 2380.3,1553.9 2384,1523.1 2384,1578.3" fill="#d0b572" fill-opacity="0.4"/>
<polyline points="1498.6,1496.8 1502.3,1499.2 1506,1492 1509.7,1476.7 1513.4,1493 1517.1,1474.4 1520.8,1486.9 1524.5,1488.5 1528.2,1487.7 1531.9,1480.3 1535.7,1491.5 1539.4,1487.7 1543.1,1480.9 1546.8,1487.6 1550.5,1494.9 1554.2,1481.1 1557.9,1494.4 1561.6,1477.7 1565.3,1495.2 1569,1488.5 1572.7,1489.4 1576.4,1487 1580.1,1486.1 1583.8,1475.7 1587.5,1484.6 1591.2,1481.3 1594.9,1483.8 1598.6,1486.3 1602.3,1486.2 1606,1476.2 1609.7,1481.5 1613.4,1483.1 1617.2,1490.6 1620.9,1478.2 1624.6,1480.8 1628.3,1485.4 1632,1493.6 1635.7,1488.2 1639.4,1486.7 1643.1,1479.4 1646.8,1480.4 1650.5,1475 1654.2,1486.2 1657.9,1479.3 1661.6,1489.2 1665.3,1475.1 1669,1481.8 1672.7,1477.8 1676.4,1484.2 1680.1,1484.4 1683.8,1487.2 1687.5,1489.3 1691.2,1493.4 1694.9,1479.4 1698.7,1482.3 1702.4,1474.6 1706.1,1483.6 1709.8,1483.3 1713.5,1492 1717.2,1479.7 1720.9,1460.8 1724.6,1472.8 1728.3,1487.2 1732,1484.9 1735.7,1493.3 1739.4,1478.4 1743.1,1493.8 1746.8,1470.4 1750.5,1484 1754.2,1487.1 1757.9,1490.9 1761.6,1489.5 1765.3,1492.3 1769,1484.6 1772.7,1481.5 1776.4,1479.9 1780.2,1488.6 1783.9,1489 1787.6,1494.5 1791.3,1476.8 1795,1484.3 1798.7,1478.2 1802.4,1494 1806.1,1487.4 1809.8,1493.9 1813.5,1488.5 1817.2,1487.5 1820.9,1482.8 1824.6,1483.6 1828.3,1488.6 1832,1494 1835.7,1475.9 1839.4,1485.7 1843.1,1479.2 1846.8,1482.8 1850.5,1482.6 1854.2,1480.4 1858,1488 1861.7,1487.1 1865.4,1486 1869.1,1480.8 1872.8,1481.9 1876.5,1488.3 1880.2,1484.3 1883.9,1482.9 1887.6,1485.9 1891.3,1480.2 1895,1479.7 1898.7,1487 1902.4,1489.5 1906.1,1495 1909.8,1478 1913.5,1485.1 1917.2,1488.8 1920.9,1488.5 1924.6,1476.4 1928.3,1482.8 1932,1488.7 1935.7,1492.3 1939.5,1486.3 1943.2,1483 1946.9,1479.1 1950.6,1463.2 1954.3,1488.4 1958,1465.6 1961.7,1477.5 1965.4,1495.3 1969.1,1483.5 1972.8,1495.1 1976.5,1478.9 1980.2,1496.8 1983.9,1506.3 1987.6,1501.6 1991.3,1475.9 1995,1491.6 1998.7,1480.9 2002.4,1483.8 2006.1,1488.2 2009.8,1485.8 2013.5,1483.4 2017.2,1491.6 2021,1481.2 2024.7,1487.7 2028.4,1484.3 2032.1,1486.3 2035.8,1489 2039.5,1490.4 2043.2,1482.5 2046.9,1483.8 2050.6,1478.4 2054.3,1493.9 2058,1475 2061.7,1487.2 2065.4,1480.2 2069.1,1485.3 2072.8,1479.8 2076.5,1491.8 2080.2,1475.6 2083.9,1482.2 2087.6,1485.6 2091.3,1481.6 2095,1484.1 2098.7,1486.1 2102.5,1475.6 2106.2,1495.3 2109.9,1478.3 2113.6,1492.3 2117.3,1478.7 2121,1491.6 2124.7,1460.8 2128.4,1468 2132.1,1480.2 2135.8,1488.3 2139.5,1475.8 2143.2,1480.2 2146.9,1474.6 2150.6,1490.5 2154.3,1479.2 2158,1489.4 2161.7,1486.5 2165.4,1485.2 2169.1,1486.7 2172.8,1472.8 2176.5,1464.1 2180.3,1540.8 2184,1545.8 2187.7,1552.3 2191.4,1545.5 2195.1,1551.7 2198.8,1550.9 2202.5,1561.5 2206.2,1511.1 2209.9,1544.5 2213.6,1544.4 2217.3,1530.3 2221,1562.3 2224.7,1558 2228.4,1544.7 2232.1,1558.7 2235.8,1560.5 2239.5,1559.3 2243.2,1562.3 2246.9,1561.6 2250.6,1541 2254.3,1553.9 2258,1539.4 2261.8,1539.4 2265.5,1494.4 2269.2,1541.6 2272.9,1539.3 2276.6,1562.6 2280.3,1555.4 2284,1553.8 2287.7,1501.6 2291.4,1561 2295.1,1558.7 2298.8,1552.9 2302.5,1548.5 2306.2,1543 2309.9,1520.7 2313.6,1553.3 2317.3,1562.9 2321,1539.6 2324.7,1553.1 2328.4,1539.9 2332.1,1562.7 2335.8,1552.5 2339.5,1558.6 2343.3,1557.5 2347,1537.9 2350.7,1539.5 2354.4,1558.1 2358.1,1551.9 2361.8,1492 2365.5,1552.3 2369.2,1563.9 2372.9,1515.9 2376.6,1547.4 2380.3,1553.9 2384,1523.1" fill="none" stroke="#d0b572" stroke-width="3.7" stroke-linejoin="bevel" stroke-opacity="0.88"/>
<polygon points="1498.6,1578.3 1498.6,1551.1 1502.3,1542.3 1506,1557.5 1509.7,1563.1 1513.4,1557.8 1517.1,1553.7 1520.8,1537.5 1524.5,1565 1528.2,1547.9 1531.9,1558.3 1535.7,1561.5 1539.4,1549 1543.1,1552.2 1546.8,1556.6 1550.5,1541 1554.2,1551.2 1557.9,1551.3 1561.6,1548.9 1565.3,1558.3 1569,1565.6 1572.7,1539.3 1576.4,1565.7 1580.1,1551.7 1583.8,1555 1587.5,1552.1 1591.2,1558.1 1594.9,1561.5 1598.6,1551.7 1602.3,1561 1606,1540.2 1609.7,1557.8 1613.4,1539.5 1617.2,1548.7 1620.9,1555.6 1624.6,1552.8 1628.3,1552.2 1632,1561.4 1635.7,1543.8 1639.4,1551.6 1643.1,1543.8 1646.8,1552.9 1650.5,1553.3 1654.2,1559.5 1657.9,1557.9 1661.6,1560.1 1665.3,1560 1669,1557.5 1672.7,1561.3 1676.4,1547.8 1680.1,1561 1683.8,1550.8 1687.5,1552 1691.2,1537.3 1694.9,1545.9 1698.7,1555.1 1702.4,1559.2 1706.1,1559.5 1709.8,1554.9 1713.5,1554.9 1717.2,1548.4 1720.9,1553.3 1724.6,1560.9 1728.3,1561.3 1732,1547.8 1735.7,1539.8 1739.4,1554.6 1743.1,1548.2 1746.8,1547.5 1750.5,1542 1754.2,1544.2 1757.9,1543 1761.6,1558.5 1765.3,1548 1769,1557.5 1772.7,1560.8 1776.4,1552.3 1780.2,1556.9 1783.9,1550.5 1787.6,1548 1791.3,1539.9 1795,1562.1 1798.7,1555.8 1802.4,1559.9 1806.1,1546.6 1809.8,1552.4 1813.5,1547.6 1817.2,1558.5 1820.9,1565 1824.6,1551.8 1828.3,1558.3 1832,1562.3 1835.7,1556.7 1839.4,1551.8 1843.1,1557.5 1846.8,1557.9 1850.5,1549.4 1854.2,1542.1 1858,1556.5 1861.7,1541.6 1865.4,1560 1869.1,1552.3 1872.8,1560.1 1876.5,1561.6 1880.2,1541.6 1883.9,1542.2 1887.6,1553.6 1891.3,1539.2 1895,1564.9 1898.7,1564.3 1902.4,1556.9 1906.1,1552 1909.8,1552.1 1913.5,1539.4 1917.2,1556.7 1920.9,1544.7 1924.6,1560.9 1928.3,1539 1932,1547.2 1935.7,1562.8 1939.5,1550.7 1943.2,1564.5 1946.9,1562.4 1950.6,1559.5 1954.3,1551.8 1958,1548 1961.7,1562.8 1965.4,1539.1 1969.1,1562.8 1972.8,1551.5 1976.5,1543.1 1980.2,1546.2 1983.9,1555.5 1987.6,1557.8 1991.3,1551.2 1995,1554.4 1998.7,1555.1 2002.4,1560.5 2006.1,1565.3 2009.8,1550.8 2013.5,1547.5 2017.2,1550.8 2021,1547.6 2024.7,1554.1 2028.4,1554.3 2032.1,1549.8 2035.8,1561.4 2039.5,1540.4 2043.2,1554.1 2046.9,1555.6 2050.6,1563.2 2054.3,1559.1 2058,1544.3 2061.7,1541.3 2065.4,1552.8 2069.1,1549.1 2072.8,1555.9 2076.5,1549.7 2080.2,1555 2083.9,1548.8 2087.6,1549.6 2091.3,1560.9 2095,1558 2098.7,1548.3 2102.5,1565.3 2106.2,1555.8 2109.9,1554.7 2113.6,1556.5 2117.3,1543.3 2121,1547.6 2124.7,1537.4 2128.4,1561.3 2132.1,1554.6 2135.8,1552.6 2139.5,1555.8 2143.2,1551.5 2146.9,1561.3 2150.6,1552.7 2154.3,1562.1 2158,1561.6 2161.7,1558 2165.4,1558.5 2169.1,1540.3 2172.8,1550.4 2176.5,1537.5 2180.3,1563.8 2184,1557.2 2187.7,1556.4 2191.4,1542 2195.1,1554.6 2198.8,1546.4 2202.5,1543.4 2206.2,1553 2209.9,1548.7 2213.6,1561.9 2217.3,1555.7 2221,1544.6 2224.7,1559.9 2228.4,1561.8 2232.1,1553.3 2235.8,1564.1 2239.5,1560.8 2243.2,1556 2246.9,1549.8 2250.6,1542.7 2254.3,1557.7 2258,1555.3 2261.8,1566.1 2265.5,1541.5 2269.2,1548 2272.9,1563.3 2276.6,1544.2 2280.3,1559 2284,1563.2 2287.7,1558.1 2291.4,1557.2 2295.1,1547.4 2298.8,1556.1 2302.5,1565.9 2306.2,1549.3 2309.9,1555.6 2313.6,1565.5 2317.3,1540.9 2321,1559.9 2324.7,1555.8 2328.4,1539.6 2332.1,1554.4 2335.8,1551.7 2339.5,1560.5 2343.3,1543.7 2347,1554.8 2350.7,1552.6 2354.4,1544.5 2358.1,1549.6 2361.8,1561.9 2365.5,1563.9 2369.2,1550.7 2372.9,1549.8 2376.6,1564.4 2380.3,1558.8 2384,1560.1 2384,1578.3" fill="#fba692" fill-opacity="0.5"/>
<polyline points="1498.6,1551.1 1502.3,1542.3 1506,1557.5 1509.7,1563.1 1513.4,1557.8 1517.1,1553.7 1520.8,1537.5 1524.5,1565 1528.2,1547.9 1531.9,1558.3 1535.7,1561.5 1539.4,1549 1543.1,1552.2 1546.8,1556.6 1550.5,1541 1554.2,1551.2 1557.9,1551.3 1561.6,1548.9 1565.3,1558.3 1569,1565.6 1572.7,1539.3 1576.4,1565.7 1580.1,1551.7 1583.8,1555 1587.5,1552.1 1591.2,1558.1 1594.9,1561.5 1598.6,1551.7 1602.3,1561 1606,1540.2 1609.7,1557.8 1613.4,1539.5 1617.2,1548.7 1620.9,1555.6 1624.6,1552.8 1628.3,1552.2 1632,1561.4 1635.7,1543.8 1639.4,1551.6 1643.1,1543.8 1646.8,1552.9 1650.5,1553.3 1654.2,1559.5 1657.9,1557.9 1661.6,1560.1 1665.3,1560 1669,1557.5 1672.7,1561.3 1676.4,1547.8 1680.1,1561 1683.8,1550.8 1687.5,1552 1691.2,1537.3 1694.9,1545.9 1698.7,1555.1 1702.4,1559.2 1706.1,1559.5 1709.8,1554.9 1713.5,1554.9 1717.2,1548.4 1720.9,1553.3 1724.6,1560.9 1728.3,1561.3 1732,1547.8 1735.7,1539.8 1739.4,1554.6 1743.1,1548.2 1746.8,1547.5 1750.5,1542 1754.2,1544.2 1757.9,1543 1761.6,1558.5 1765.3,1548 1769,1557.5 1772.7,1560.8 1776.4,1552.3 1780.2,1556.9 1783.9,1550.5 1787.6,1548 1791.3,1539.9 1795,1562.1 1798.7,1555.8 1802.4,1559.9 1806.1,1546.6 1809.8,1552.4 1813.5,1547.6 1817.2,1558.5 1820.9,1565 1824.6,1551.8 1828.3,1558.3 1832,1562.3 1835.7,1556.7 1839.4,1551.8 1843.1,1557.5 1846.8,1557.9 1850.5,1549.4 1854.2,1542.1 1858,1556.5 1861.7,1541.6 1865.4,1560 1869.1,1552.3 1872.8,1560.1 1876.5,1561.6 1880.2,1541.6 1883.9,1542.2 1887.6,1553.6 1891.3,1539.2 1895,1564.9 1898.7,1564.3 1902.4,1556.9 1906.1,1552 1909.8,1552.1 1913.5,1539.4 1917.2,1556.7 1920.9,1544.7 1924.6,1560.9 1928.3,1539 1932,1547.2 1935.7,1562.8 1939.5,1550.7 1943.2,1564.5 1946.9,1562.4 1950.6,1559.5 1954.3,1551.8 1958,1548 1961.7,1562.8 1965.4,1539.1 1969.1,1562.8 1972.8,1551.5 1976.5,1543.1 1980.2,1546.2 1983.9,1555.5 1987.6,1557.8 1991.3,1551.2 1995,1554.4 1998.7,1555.1 2002.4,1560.5 2006.1,1565.3 2009.8,1550.8 2013.5,1547.5 2017.2,1550.8 2021,1547.6 2024.7,1554.1 2028.4,1554.3 2032.1,1549.8 2035.8,1561.4 2039.5,1540.4 2043.2,1554.1 2046.9,1555.6 2050.6,1563.2 2054.3,1559.1 2058,1544.3 2061.7,1541.3 2065.4,1552.8 2069.1,1549.1 2072.8,1555.9 2076.5,1549.7 2080.2,1555 2083.9,1548.8 2087.6,1549.6 2091.3,1560.9 2095,1558 2098.7,1548.3 2102.5,1565.3 2106.2,1555.8 2109.9,1554.7 2113.6,1556.5 2117.3,1543.3 2121,1547.6 2124.7,1537.4 2128.4,1561.3 2132.1,1554.6 2135.8,1552.6 2139.5,1555.8 2143.2,1551.5 2146.9,1561.3 2150.6,1552.7 2154.3,1562.1 2158,1561.6 2161.7,1558 2165.4,1558.5 2169.1,1540.3 2172.8,1550.4 2176.5,1537.5 2180.3,1563.8 2184,1557.2 2187.7,1556.4 2191.4,1542 2195.1,1554.6 2198.8,1546.4 2202.5,1543.4 2206.2,1553 2209.9,1548.7 2213.6,1561.9 2217.3,1555.7 2221,1544.6 2224.7,1559.9 2228.4,1561.8 2232.1,1553.3 2235.8,1564.1 2239.5,1560.8 2243.2,1556 2246.9,1549.8 2250.6,1542.7 2254.3,1557.7 2258,1555.3 2261.8,1566.1 2265.5,1541.5 2269.2,1548 2272.9,1563.3 2276.6,1544.2 2280.3,1559 2284,1563.2 2287.7,1558.1 2291.4,1557.2 2295.1,1547.4 2298.8,1556.1 2302.5,1565.9 2306.2,1549.3 2309.9,1555.6 2313.6,1565.5 2317.3,1540.9 2321,1559.9 2324.7,1555.8 2328.4,1539.6 2332.1,1554.4 2335.8,1551.7 2339.5,1560.5 2343.3,1543.7 2347,1554.8 2350.7,1552.6 2354.4,1544.5 2358.1,1549.6 2361.8,1561.9 2365.5,1563.9 2369.2,1550.7 2372.9,1549.8 2376.6,1564.4 2380.3,1558.8 2384,1560.1" fill="none" stroke="#fba692" stroke-width="3.7" stroke-linejoin="bevel" stroke-opacity="0.35"/>
<polygon points="1498.6,1578.3 1498.6,1531.7 1502.3,1522.8 1506,1554 1509.7,1543.2 1513.4,1538.8 1517.1,1544.9 1520.8,1552.3 1524.5,1545.3 1528.2,1547 1531.9,1558.6 1535.7,1549.5 1539.4,1539 1543.1,1547.5 1546.8,1539.1 1550.5,1531.2 1554.2,1541.6 1557.9,1549.3 1561.6,1546.3 1565.3,1548.3 1569,1545.2 1572.7,1536.5 1576.4,1549.1 1580.1,1553.4 1583.8,1549.6 1587.5,1546.3 1591.2,1527 1594.9,1536.7 1598.6,1549.6 1602.3,1556.6 1606,1541.5 1609.7,1558.3 1613.4,1536.6 1617.2,1538.5 1620.9,1554.5 1624.6,1553.2 1628.3,1537.9 1632,1541.5 1635.7,1542.1 1639.4,1541.8 1643.1,1525.6 1646.8,1533.4 1650.5,1544.9 1654.2,1557.4 1657.9,1541.1 1661.6,1555.1 1665.3,1550.3 1669,1525.4 1672.7,1523.6 1676.4,1536 1680.1,1540.3 1683.8,1520.5 1687.5,1526.9 1691.2,1557.1 1694.9,1534.6 1698.7,1546.1 1702.4,1547.1 1706.1,1545.1 1709.8,1536 1713.5,1554.3 1717.2,1538.2 1720.9,1521.3 1724.6,1538.6 1728.3,1554.9 1732,1539 1735.7,1533 1739.4,1555.5 1743.1,1523.9 1746.8,1522.5 1750.5,1543 1754.2,1527.6 1757.9,1552.1 1761.6,1545.5 1765.3,1553.1 1769,1530.6 1772.7,1543.2 1776.4,1546 1780.2,1553.5 1783.9,1540.5 1787.6,1549.6 1791.3,1545.1 1795,1557.8 1798.7,1547.7 1802.4,1521 1806.1,1539.7 1809.8,1546.3 1813.5,1526.5 1817.2,1541.2 1820.9,1541.6 1824.6,1544.9 1828.3,1550.4 1832,1553.5 1835.7,1528.6 1839.4,1536.3 1843.1,1532.3 1846.8,1537.1 1850.5,1554.3 1854.2,1539 1858,1556.5 1861.7,1552.2 1865.4,1538 1869.1,1551.2 1872.8,1537.6 1876.5,1540.8 1880.2,1546.1 1883.9,1527.9 1887.6,1530.9 1891.3,1544.4 1895,1553 1898.7,1555.9 1902.4,1554 1906.1,1529.4 1909.8,1543.1 1913.5,1541.8 1917.2,1521.5 1920.9,1551.1 1924.6,1524.2 1928.3,1521.2 1932,1525.9 1935.7,1548 1939.5,1539.6 1943.2,1550.5 1946.9,1520.5 1950.6,1550 1954.3,1546.9 1958,1540.2 1961.7,1550.6 1965.4,1526.1 1969.1,1539.9 1972.8,1554.1 1976.5,1525 1980.2,1537.5 1983.9,1538.9 1987.6,1558.3 1991.3,1554.7 1995,1521.9 1998.7,1554.1 2002.4,1523.2 2006.1,1555.2 2009.8,1528.8 2013.5,1537.1 2017.2,1529.1 2021,1548.1 2024.7,1550.7 2028.4,1530.2 2032.1,1542.7 2035.8,1532.6 2039.5,1539.6 2043.2,1550.7 2046.9,1554 2050.6,1557.7 2054.3,1539.9 2058,1551.9 2061.7,1557.2 2065.4,1552 2069.1,1539.8 2072.8,1550.3 2076.5,1548.2 2080.2,1550.2 2083.9,1555.1 2087.6,1549.4 2091.3,1546.8 2095,1548.7 2098.7,1550.3 2102.5,1551.6 2106.2,1547.1 2109.9,1553.5 2113.6,1521.1 2117.3,1552.6 2121,1543.6 2124.7,1551.2 2128.4,1536.1 2132.1,1525.2 2135.8,1531 2139.5,1548.1 2143.2,1542.2 2146.9,1523.7 2150.6,1542.4 2154.3,1533.9 2158,1555.2 2161.7,1537.7 2165.4,1537.9 2169.1,1545.6 2172.8,1554.5 2176.5,1537.4 2180.3,1552.9 2184,1531.9 2187.7,1557.4 2191.4,1531 2195.1,1541.9 2198.8,1542.4 2202.5,1547.5 2206.2,1522.5 2209.9,1555.6 2213.6,1537.1 2217.3,1535.8 2221,1547.5 2224.7,1545.4 2228.4,1548.5 2232.1,1529.7 2235.8,1538.3 2239.5,1551.4 2243.2,1535.7 2246.9,1532.8 2250.6,1540.5 2254.3,1552.7 2258,1555.2 2261.8,1546.1 2265.5,1543.6 2269.2,1550.9 2272.9,1536.6 2276.6,1558.1 2280.3,1555 2284,1554 2287.7,1525.3 2291.4,1519.4 2295.1,1526.4 2298.8,1558 2302.5,1529.6 2306.2,1543.7 2309.9,1530.8 2313.6,1546.5 2317.3,1529.8 2321,1546.3 2324.7,1558.6 2328.4,1524.3 2332.1,1534.6 2335.8,1520.7 2339.5,1547.4 2343.3,1541 2347,1555.7 2350.7,1546.4 2354.4,1540 2358.1,1544.2 2361.8,1551.4 2365.5,1552.3 2369.2,1558.3 2372.9,1524.9 2376.6,1551.9 2380.3,1555.3 2384,1532.7 2384,1578.3" fill="#c99ae6" fill-opacity="0.5"/>
<polyline points="1498.6,1531.7 1502.3,1522.8 1506,1554 1509.7,1543.2 1513.4,1538.8 1517.1,1544.9 1520.8,1552.3 1524.5,1545.3 1528.2,1547 1531.9,1558.6 1535.7,1549.5 1539.4,1539 1543.1,1547.5 1546.8,1539.1 1550.5,1531.2 1554.2,1541.6 1557.9,1549.3 1561.6,1546.3 1565.3,1548.3 1569,1545.2 1572.7,1536.5 1576.4,1549.1 1580.1,1553.4 1583.8,1549.6 1587.5,1546.3 1591.2,1527 1594.9,1536.7 1598.6,1549.6 1602.3,1556.6 1606,1541.5 1609.7,1558.3 1613.4,1536.6 1617.2,1538.5 1620.9,1554.5 1624.6,1553.2 1628.3,1537.9 1632,1541.5 1635.7,1542.1 1639.4,1541.8 1643.1,1525.6 1646.8,1533.4 1650.5,1544.9 1654.2,1557.4 1657.9,1541.1 1661.6,1555.1 1665.3,1550.3 1669,1525.4 1672.7,1523.6 1676.4,1536 1680.1,1540.3 1683.8,1520.5 1687.5,1526.9 1691.2,1557.1 1694.9,1534.6 1698.7,1546.1 1702.4,1547.1 1706.1,1545.1 1709.8,1536 1713.5,1554.3 1717.2,1538.2 1720.9,1521.3 1724.6,1538.6 1728.3,1554.9 1732,1539 1735.7,1533 1739.4,1555.5 1743.1,1523.9 1746.8,1522.5 1750.5,1543 1754.2,1527.6 1757.9,1552.1 1761.6,1545.5 1765.3,1553.1 1769,1530.6 1772.7,1543.2 1776.4,1546 1780.2,1553.5 1783.9,1540.5 1787.6,1549.6 1791.3,1545.1 1795,1557.8 1798.7,1547.7 1802.4,1521 1806.1,1539.7 1809.8,1546.3 1813.5,1526.5 1817.2,1541.2 1820.9,1541.6 1824.6,1544.9 1828.3,1550.4 1832,1553.5 1835.7,1528.6 1839.4,1536.3 1843.1,1532.3 1846.8,1537.1 1850.5,1554.3 1854.2,1539 1858,1556.5 1861.7,1552.2 1865.4,1538 1869.1,1551.2 1872.8,1537.6 1876.5,1540.8 1880.2,1546.1 1883.9,1527.9 1887.6,1530.9 1891.3,1544.4 1895,1553 1898.7,1555.9 1902.4,1554 1906.1,1529.4 1909.8,1543.1 1913.5,1541.8 1917.2,1521.5 1920.9,1551.1 1924.6,1524.2 1928.3,1521.2 1932,1525.9 1935.7,1548 1939.5,1539.6 1943.2,1550.5 1946.9,1520.5 1950.6,1550 1954.3,1546.9 1958,1540.2 1961.7,1550.6 1965.4,1526.1 1969.1,1539.9 1972.8,1554.1 1976.5,1525 1980.2,1537.5 1983.9,1538.9 1987.6,1558.3 1991.3,1554.7 1995,1521.9 1998.7,1554.1 2002.4,1523.2 2006.1,1555.2 2009.8,1528.8 2013.5,1537.1 2017.2,1529.1 2021,1548.1 2024.7,1550.7 2028.4,1530.2 2032.1,1542.7 2035.8,1532.6 2039.5,1539.6 2043.2,1550.7 2046.9,1554 2050.6,1557.7 2054.3,1539.9 2058,1551.9 2061.7,1557.2 2065.4,1552 2069.1,1539.8 2072.8,1550.3 2076.5,1548.2 2080.2,1550.2 2083.9,1555.1 2087.6,1549.4 2091.3,1546.8 2095,1548.7 2098.7,1550.3 2102.5,1551.6 2106.2,1547.1 2109.9,1553.5 2113.6,1521.1 2117.3,1552.6 2121,1543.6 2124.7,1551.2 2128.4,1536.1 2132.1,1525.2 2135.8,1531 2139.5,1548.1 2143.2,1542.2 2146.9,1523.7 2150.6,1542.4 2154.3,1533.9 2158,1555.2 2161.7,1537.7 2165.4,1537.9 2169.1,1545.6 2172.8,1554.5 2176.5,1537.4 2180.3,1552.9 2184,1531.9 2187.7,1557.4 2191.4,1531 2195.1,1541.9 2198.8,1542.4 2202.5,1547.5 2206.2,1522.5 2209.9,1555.6 2213.6,1537.1 2217.3,1535.8 2221,1547.5 2224.7,1545.4 2228.4,1548.5 2232.1,1529.7 2235.8,1538.3 2239.5,1551.4 2243.2,1535.7 2246.9,1532.8 2250.6,1540.5 2254.3,1552.7 2258,1555.2 2261.8,1546.1 2265.5,1543.6 2269.2,1550.9 2272.9,1536.6 2276.6,1558.1 2280.3,1555 2284,1554 2287.7,1525.3 2291.4,1519.4 2295.1,1526.4 2298.8,1558 2302.5,1529.6 2306.2,1543.7 2309.9,1530.8 2313.6,1546.5 2317.3,1529.8 2321,1546.3 2324.7,1558.6 2328.4,1524.3 2332.1,1534.6 2335.8,1520.7 2339.5,1547.4 2343.3,1541 2347,1555.7 2350.7,1546.4 2354.4,1540 2358.1,1544.2 2361.8,1551.4 2365.5,1552.3 2369.2,1558.3 2372.9,1524.9 2376.6,1551.9 2380.3,1555.3 2384,1532.7" fill="none" stroke="#c99ae6" stroke-width="3.7" stroke-linejoin="bevel" stroke-opacity="0.35"/>
<polygon points="1498.6,1578.3 1498.6,1551.6 1502.3,1547 1506,1567.1 1509.7,1563.7 1513.4,1566.8 1517.1,1549 1520.8,1559.1 1524.5,1557.7 1528.2,1551.5 1531.9,1567.3 1535.7,1555.9 1539.4,1556.7 1543.1,1549.3 1546.8,1546.6 1550.5,1547.3 1554.2,1560.9 1557.9,1556.7 1561.6,1561.9 1565.3,1550.7 1569,1559.6 1572.7,1561 1576.4,1562.7 1580.1,1565.8 1583.8,1562.5 1587.5,1559.4 1591.2,1546.7 1594.9,1549.9 1598.6,1563.6 1602.3,1552.1 1606,1543.5 1609.7,1548.7 1613.4,1557.9 1617.2,1559 1620.9,1564 1624.6,1540.2 1628.3,1541.3 1632,1555.5 1635.7,1549.9 1639.4,1561.2 1643.1,1562.8 1646.8,1554.5 1650.5,1557.5 1654.2,1544.9 1657.9,1561.3 1661.6,1537.7 1665.3,1561.6 1669,1557.7 1672.7,1541.2 1676.4,1556.1 1680.1,1561.4 1683.8,1547.3 1687.5,1560.9 1691.2,1566.9 1694.9,1559.9 1698.7,1541.8 1702.4,1559.7 1706.1,1545.6 1709.8,1550.4 1713.5,1555.5 1717.2,1544.8 1720.9,1554.2 1724.6,1550.2 1728.3,1553.8 1732,1540.3 1735.7,1557.5 1739.4,1557.6 1743.1,1556.5 1746.8,1538.2 1750.5,1541.2 1754.2,1560 1757.9,1542 1761.6,1554.6 1765.3,1552.9 1769,1565.2 1772.7,1551.5 1776.4,1549 1780.2,1563.8 1783.9,1555.2 1787.6,1555.1 1791.3,1564.3 1795,1558.7 1798.7,1557.1 1802.4,1549.7 1806.1,1554.8 1809.8,1539.6 1813.5,1538.1 1817.2,1560.6 1820.9,1553.7 1824.6,1539.9 1828.3,1546.5 1832,1560.2 1835.7,1559.2 1839.4,1564.6 1843.1,1546.9 1846.8,1561.5 1850.5,1540.1 1854.2,1565.6 1858,1564.2 1861.7,1564.3 1865.4,1546.4 1869.1,1554.9 1872.8,1543.1 1876.5,1555.8 1880.2,1564.2 1883.9,1559.9 1887.6,1547.1 1891.3,1560 1895,1543.7 1898.7,1543.9 1902.4,1549.7 1906.1,1545.8 1909.8,1551.5 1913.5,1544.4 1917.2,1543.1 1920.9,1539.2 1924.6,1548 1928.3,1564.8 1932,1543.3 1935.7,1564 1939.5,1548.4 1943.2,1565.5 1946.9,1562.8 1950.6,1561.1 1954.3,1563.9 1958,1559.3 1961.7,1561.9 1965.4,1552 1969.1,1557.5 1972.8,1552.5 1976.5,1559.8 1980.2,1546.6 1983.9,1415.2 1987.6,1548.9 1991.3,1556.3 1995,1560.8 1998.7,1565 2002.4,1546.5 2006.1,1554 2009.8,1553.4 2013.5,1548.2 2017.2,1562.1 2021,1566.1 2024.7,1564 2028.4,1555.4 2032.1,1554 2035.8,1541.8 2039.5,1542.2 2043.2,1562.8 2046.9,1566.2 2050.6,1546.1 2054.3,1541.7 2058,1538.1 2061.7,1563 2065.4,1553.7 2069.1,1549.8 2072.8,1551.4 2076.5,1548.3 2080.2,1552.9 2083.9,1558 2087.6,1560 2091.3,1558.4 2095,1548.1 2098.7,1561.4 2102.5,1560.2 2106.2,1563 2109.9,1545.2 2113.6,1547.1 2117.3,1544.7 2121,1564.8 2124.7,1553.4 2128.4,1554.1 2132.1,1554.2 2135.8,1547.6 2139.5,1554.9 2143.2,1554.7 2146.9,1545.4 2150.6,1546.5 2154.3,1558.6 2158,1546.2 2161.7,1558.4 2165.4,1559.3 2169.1,1553.6 2172.8,1562.6 2176.5,1548 2180.3,1554.2 2184,1560.6 2187.7,1562 2191.4,1543.4 2195.1,1562.1 2198.8,1566.9 2202.5,1561.2 2206.2,1558.5 2209.9,1563.5 2213.6,1551.6 2217.3,1565 2221,1550.5 2224.7,1563.2 2228.4,1549.8 2232.1,1548.8 2235.8,1553.4 2239.5,1552.1 2243.2,1560.6 2246.9,1556.1 2250.6,1557.4 2254.3,1558.7 2258,1556.5 2261.8,1554.5 2265.5,1555.8 2269.2,1553.2 2272.9,1538.2 2276.6,1552.4 2280.3,1559.2 2284,1553.1 2287.7,1546.4 2291.4,1555.4 2295.1,1549.5 2298.8,1560.1 2302.5,1558.9 2306.2,1538.9 2309.9,1549.9 2313.6,1552.3 2317.3,1557.9 2321,1562.8 2324.7,1555.9 2328.4,1561.3 2332.1,1543.4 2335.8,1553.7 2339.5,1559 2343.3,1557.4 2347,1551.4 2350.7,1557.1 2354.4,1558.5 2358.1,1567 2361.8,1560.8 2365.5,1567.2 2369.2,1556.8 2372.9,1559.5 2376.6,1545.8 2380.3,1545 2384,1551.3 2384,1578.3" fill="#aeaeb4" fill-opacity="0.5"/>
<polyline points="1498.6,1551.6 1502.3,1547 1506,1567.1 1509.7,1563.7 1513.4,1566.8 1517.1,1549 1520.8,1559.1 1524.5,1557.7 1528.2,1551.5 1531.9,1567.3 1535.7,1555.9 1539.4,1556.7 1543.1,1549.3 1546.8,1546.6 1550.5,1547.3 1554.2,1560.9 1557.9,1556.7 1561.6,1561.9 1565.3,1550.7 1569,1559.6 1572.7,1561 1576.4,1562.7 1580.1,1565.8 1583.8,1562.5 1587.5,1559.4 1591.2,1546.7 1594.9,1549.9 1598.6,1563.6 1602.3,1552.1 1606,1543.5 1609.7,1548.7 1613.4,1557.9 1617.2,1559 1620.9,1564 1624.6,1540.2 1628.3,1541.3 1632,1555.5 1635.7,1549.9 1639.4,1561.2 1643.1,1562.8 1646.8,1554.5 1650.5,1557.5 1654.2,1544.9 1657.9,1561.3 1661.6,1537.7 1665.3,1561.6 1669,1557.7 1672.7,1541.2 1676.4,1556.1 1680.1,1561.4 1683.8,1547.3 1687.5,1560.9 1691.2,1566.9 1694.9,1559.9 1698.7,1541.8 1702.4,1559.7 1706.1,1545.6 1709.8,1550.4 1713.5,1555.5 1717.2,1544.8 1720.9,1554.2 1724.6,1550.2 1728.3,1553.8 1732,1540.3 1735.7,1557.5 1739.4,1557.6 1743.1,1556.5 1746.8,1538.2 1750.5,1541.2 1754.2,1560 1757.9,1542 1761.6,1554.6 1765.3,1552.9 1769,1565.2 1772.7,1551.5 1776.4,1549 1780.2,1563.8 1783.9,1555.2 1787.6,1555.1 1791.3,1564.3 1795,1558.7 1798.7,1557.1 1802.4,1549.7 1806.1,1554.8 1809.8,1539.6 1813.5,1538.1 1817.2,1560.6 1820.9,1553.7 1824.6,1539.9 1828.3,1546.5 1832,1560.2 1835.7,1559.2 1839.4,1564.6 1843.1,1546.9 1846.8,1561.5 1850.5,1540.1 1854.2,1565.6 1858,1564.2 1861.7,1564.3 1865.4,1546.4 1869.1,1554.9 1872.8,1543.1 1876.5,1555.8 1880.2,1564.2 1883.9,1559.9 1887.6,1547.1 1891.3,1560 1895,1543.7 1898.7,1543.9 1902.4,1549.7 1906.1,1545.8 1909.8,1551.5 1913.5,1544.4 1917.2,1543.1 1920.9,1539.2 1924.6,1548 1928.3,1564.8 1932,1543.3 1935.7,1564 1939.5,1548.4 1943.2,1565.5 1946.9,1562.8 1950.6,1561.1 1954.3,1563.9 1958,1559.3 1961.7,1561.9 1965.4,1552 1969.1,1557.5 1972.8,1552.5 1976.5,1559.8 1980.2,1546.6 1983.9,1415.2 1987.6,1548.9 1991.3,1556.3 1995,1560.8 1998.7,1565 2002.4,1546.5 2006.1,1554 2009.8,1553.4 2013.5,1548.2 2017.2,1562.1 2021,1566.1 2024.7,1564 2028.4,1555.4 2032.1,1554 2035.8,1541.8 2039.5,1542.2 2043.2,1562.8 2046.9,1566.2 2050.6,1546.1 2054.3,1541.7 2058,1538.1 2061.7,1563 2065.4,1553.7 2069.1,1549.8 2072.8,1551.4 2076.5,1548.3 2080.2,1552.9 2083.9,1558 2087.6,1560 2091.3,1558.4 2095,1548.1 2098.7,1561.4 2102.5,1560.2 2106.2,1563 2109.9,1545.2 2113.6,1547.1 2117.3,1544.7 2121,1564.8 2124.7,1553.4 2128.4,1554.1 2132.1,1554.2 2135.8,1547.6 2139.5,1554.9 2143.2,1554.7 2146.9,1545.4 2150.6,1546.5 2154.3,1558.6 2158,1546.2 2161.7,1558.4 2165.4,1559.3 2169.1,1553.6 2172.8,1562.6 2176.5,1548 2180.3,1554.2 2184,1560.6 2187.7,1562 2191.4,1543.4 2195.1,1562.1 2198.8,1566.9 2202.5,1561.2 2206.2,1558.5 2209.9,1563.5 2213.6,1551.6 2217.3,1565 2221,1550.5 2224.7,1563.2 2228.4,1549.8 2232.1,1548.8 2235.8,1553.4 2239.5,1552.1 2243.2,1560.6 2246.9,1556.1 2250.6,1557.4 2254.3,1558.7 2258,1556.5 2261.8,1554.5 2265.5,1555.8 2269.2,1553.2 2272.9,1538.2 2276.6,1552.4 2280.3,1559.2 2284,1553.1 2287.7,1546.4 2291.4,1555.4 2295.1,1549.5 2298.8,1560.1 2302.5,1558.9 2306.2,1538.9 2309.9,1549.9 2313.6,1552.3 2317.3,1557.9 2321,1562.8 2324.7,1555.9 2328.4,1561.3 2332.1,1543.4 2335.8,1553.7 2339.5,1559 2343.3,1557.4 2347,1551.4 2350.7,1557.1 2354.4,1558.5 2358.1,1567 2361.8,1560.8 2365.5,1567.2 2369.2,1556.8 2372.9,1559.5 2376.6,1545.8 2380.3,1545 2384,1551.3" fill="none" stroke="#aeaeb4" stroke-width="3.7" stroke-linejoin="bevel" stroke-opacity="0.35"/>
<polygon points="1498.6,1578.3 1498.6,1545.3 1502.3,1526.8 1506,1529.8 1509.7,1542.7 1513.4,1536.9 1517.1,1549.7 1520.8,1549.1 1524.5,1548.7 1528.2,1561.1 1531.9,1538 1535.7,1527.3 1539.4,1557 1543.1,1546.4 1546.8,1552.2 1550.5,1560.9 1554.2,1547.6 1557.9,1557.3 1561.6,1541.4 1565.3,1550.4 1569,1554.4 1572.7,1528.2 1576.4,1532.6 1580.1,1552.4 1583.8,1554 1587.5,1556.2 1591.2,1541.4 1594.9,1550.1 1598.6,1538.3 1602.3,1557.6 1606,1538 1609.7,1550.3 1613.4,1526.5 1617.2,1525.4 1620.9,1547.7 1624.6,1553.7 1628.3,1554.4 1632,1541.1 1635.7,1527.9 1639.4,1553.6 1643.1,1542.8 1646.8,1540.4 1650.5,1529.3 1654.2,1551.4 1657.9,1536.2 1661.6,1544.7 1665.3,1548.7 1669,1553.4 1672.7,1558.1 1676.4,1525 1680.1,1524.3 1683.8,1540.1 1687.5,1561.1 1691.2,1529.3 1694.9,1555.6 1698.7,1533.7 1702.4,1560.3 1706.1,1543.9 1709.8,1556.3 1713.5,1550.8 1717.2,1525 1720.9,1540 1724.6,1538.9 1728.3,1527.6 1732,1545.9 1735.7,1545.7 1739.4,1529.1 1743.1,1534.8 1746.8,1536.5 1750.5,1554.3 1754.2,1543.9 1757.9,1548.9 1761.6,1561.5 1765.3,1556.9 1769,1539.9 1772.7,1545.6 1776.4,1555 1780.2,1545.6 1783.9,1545 1787.6,1553.2 1791.3,1558.8 1795,1556.7 1798.7,1545.1 1802.4,1557.7 1806.1,1551.1 1809.8,1555.1 1813.5,1542.7 1817.2,1528.7 1820.9,1551.7 1824.6,1550.2 1828.3,1561.3 1832,1526.1 1835.7,1558.4 1839.4,1548.3 1843.1,1541 1846.8,1552.6 1850.5,1546.8 1854.2,1555.4 1858,1534.5 1861.7,1538.4 1865.4,1548.3 1869.1,1542.8 1872.8,1540.5 1876.5,1524.3 1880.2,1558.5 1883.9,1533.4 1887.6,1543.8 1891.3,1537.6 1895,1537 1898.7,1548 1902.4,1544.8 1906.1,1541.8 1909.8,1559.9 1913.5,1558.1 1917.2,1554.4 1920.9,1551.8 1924.6,1559.8 1928.3,1532.2 1932,1551.2 1935.7,1538.3 1939.5,1558.3 1943.2,1556 1946.9,1545.9 1950.6,1551.9 1954.3,1548.9 1958,1550.1 1961.7,1552.9 1965.4,1556.8 1969.1,1555.8 1972.8,1552.2 1976.5,1552.7 1980.2,1530.7 1983.9,1544.2 1987.6,1542 1991.3,1540.4 1995,1553.2 1998.7,1542.7 2002.4,1554.1 2006.1,1539.6 2009.8,1541.7 2013.5,1539.7 2017.2,1536 2021,1555.2 2024.7,1554.7 2028.4,1554.7 2032.1,1546 2035.8,1553.4 2039.5,1552.8 2043.2,1560.5 2046.9,1558.6 2050.6,1550.4 2054.3,1553.9 2058,1539.3 2061.7,1525.9 2065.4,1525.1 2069.1,1542.9 2072.8,1534.5 2076.5,1556.2 2080.2,1544.1 2083.9,1527.1 2087.6,1549.2 2091.3,1538.9 2095,1537.2 2098.7,1548.7 2102.5,1557 2106.2,1545.5 2109.9,1535.6 2113.6,1539.4 2117.3,1525.2 2121,1560.9 2124.7,1552.4 2128.4,1530.9 2132.1,1546.3 2135.8,1554.9 2139.5,1552.4 2143.2,1547.1 2146.9,1535.8 2150.6,1537.5 2154.3,1558 2158,1533.3 2161.7,1541.4 2165.4,1541.8 2169.1,1547.3 2172.8,1542.2 2176.5,1555.4 2180.3,1526.3 2184,1540.2 2187.7,1550.6 2191.4,1537.9 2195.1,1546.3 2198.8,1552.8 2202.5,1539.9 2206.2,1528.2 2209.9,1523.9 2213.6,1554.9 2217.3,1527 2221,1524.3 2224.7,1548.1 2228.4,1541.1 2232.1,1550.9 2235.8,1542.3 2239.5,1559.3 2243.2,1559 2246.9,1524.5 2250.6,1550.3 2254.3,1554.4 2258,1548.1 2261.8,1546.2 2265.5,1560.9 2269.2,1546.9 2272.9,1546.7 2276.6,1559.3 2280.3,1558.8 2284,1534.9 2287.7,1555.5 2291.4,1550.3 2295.1,1527.3 2298.8,1556.6 2302.5,1546.6 2306.2,1558.7 2309.9,1523.7 2313.6,1524.1 2317.3,1551.2 2321,1534.8 2324.7,1561.5 2328.4,1546.9 2332.1,1554 2335.8,1556.7 2339.5,1545.8 2343.3,1554.7 2347,1550 2350.7,1536.8 2354.4,1540.6 2358.1,1551.5 2361.8,1538.2 2365.5,1534.6 2369.2,1524 2372.9,1537.6 2376.6,1538 2380.3,1549.2 2384,1541.5 2384,1578.3" fill="#98cdf0" fill-opacity="0.5"/>
<polyline points="1498.6,1545.3 1502.3,1526.8 1506,1529.8 1509.7,1542.7 1513.4,1536.9 1517.1,1549.7 1520.8,1549.1 1524.5,1548.7 1528.2,1561.1 1531.9,1538 1535.7,1527.3 1539.4,1557 1543.1,1546.4 1546.8,1552.2 1550.5,1560.9 1554.2,1547.6 1557.9,1557.3 1561.6,1541.4 1565.3,1550.4 1569,1554.4 1572.7,1528.2 1576.4,1532.6 1580.1,1552.4 1583.8,1554 1587.5,1556.2 1591.2,1541.4 1594.9,1550.1 1598.6,1538.3 1602.3,1557.6 1606,1538 1609.7,1550.3 1613.4,1526.5 1617.2,1525.4 1620.9,1547.7 1624.6,1553.7 1628.3,1554.4 1632,1541.1 1635.7,1527.9 1639.4,1553.6 1643.1,1542.8 1646.8,1540.4 1650.5,1529.3 1654.2,1551.4 1657.9,1536.2 1661.6,1544.7 1665.3,1548.7 1669,1553.4 1672.7,1558.1 1676.4,1525 1680.1,1524.3 1683.8,1540.1 1687.5,1561.1 1691.2,1529.3 1694.9,1555.6 1698.7,1533.7 1702.4,1560.3 1706.1,1543.9 1709.8,1556.3 1713.5,1550.8 1717.2,1525 1720.9,1540 1724.6,1538.9 1728.3,1527.6 1732,1545.9 1735.7,1545.7 1739.4,1529.1 1743.1,1534.8 1746.8,1536.5 1750.5,1554.3 1754.2,1543.9 1757.9,1548.9 1761.6,1561.5 1765.3,1556.9 1769,1539.9 1772.7,1545.6 1776.4,1555 1780.2,1545.6 1783.9,1545 1787.6,1553.2 1791.3,1558.8 1795,1556.7 1798.7,1545.1 1802.4,1557.7 1806.1,1551.1 1809.8,1555.1 1813.5,1542.7 1817.2,1528.7 1820.9,1551.7 1824.6,1550.2 1828.3,1561.3 1832,1526.1 1835.7,1558.4 1839.4,1548.3 1843.1,1541 1846.8,1552.6 1850.5,1546.8 1854.2,1555.4 1858,1534.5 1861.7,1538.4 1865.4,1548.3 1869.1,1542.8 1872.8,1540.5 1876.5,1524.3 1880.2,1558.5 1883.9,1533.4 1887.6,1543.8 1891.3,1537.6 1895,1537 1898.7,1548 1902.4,1544.8 1906.1,1541.8 1909.8,1559.9 1913.5,1558.1 1917.2,1554.4 1920.9,1551.8 1924.6,1559.8 1928.3,1532.2 1932,1551.2 1935.7,1538.3 1939.5,1558.3 1943.2,1556 1946.9,1545.9 1950.6,1551.9 1954.3,1548.9 1958,1550.1 1961.7,1552.9 1965.4,1556.8 1969.1,1555.8 1972.8,1552.2 1976.5,1552.7 1980.2,1530.7 1983.9,1544.2 1987.6,1542 1991.3,1540.4 1995,1553.2 1998.7,1542.7 2002.4,1554.1 2006.1,1539.6 2009.8,1541.7 2013.5,1539.7 2017.2,1536 2021,1555.2 2024.7,1554.7 2028.4,1554.7 2032.1,1546 2035.8,1553.4 2039.5,1552.8 2043.2,1560.5 2046.9,1558.6 2050.6,1550.4 2054.3,1553.9 2058,1539.3 2061.7,1525.9 2065.4,1525.1 2069.1,1542.9 2072.8,1534.5 2076.5,1556.2 2080.2,1544.1 2083.9,1527.1 2087.6,1549.2 2091.3,1538.9 2095,1537.2 2098.7,1548.7 2102.5,1557 2106.2,1545.5 2109.9,1535.6 2113.6,1539.4 2117.3,1525.2 2121,1560.9 2124.7,1552.4 2128.4,1530.9 2132.1,1546.3 2135.8,1554.9 2139.5,1552.4 2143.2,1547.1 2146.9,1535.8 2150.6,1537.5 2154.3,1558 2158,1533.3 2161.7,1541.4 2165.4,1541.8 2169.1,1547.3 2172.8,1542.2 2176.5,1555.4 2180.3,1526.3 2184,1540.2 2187.7,1550.6 2191.4,1537.9 2195.1,1546.3 2198.8,1552.8 2202.5,1539.9 2206.2,1528.2 2209.9,1523.9 2213.6,1554.9 2217.3,1527 2221,1524.3 2224.7,1548.1 2228.4,1541.1 2232.1,1550.9 2235.8,1542.3 2239.5,1559.3 2243.2,1559 2246.9,1524.5 2250.6,1550.3 2254.3,1554.4 2258,1548.1 2261.8,1546.2 2265.5,1560.9 2269.2,1546.9 2272.9,1546.7 2276.6,1559.3 2280.3,1558.8 2284,1534.9 2287.7,1555.5 2291.4,1550.3 2295.1,1527.3 2298.8,1556.6 2302.5,1546.6 2306.2,1558.7 2309.9,1523.7 2313.6,1524.1 2317.3,1551.2 2321,1534.8 2324.7,1561.5 2328.4,1546.9 2332.1,1554 2335.8,1556.7 2339.5,1545.8 2343.3,1554.7 2347,1550 2350.7,1536.8 2354.4,1540.6 2358.1,1551.5 2361.8,1538.2 2365.5,1534.6 2369.2,1524 2372.9,1537.6 2376.6,1538 2380.3,1549.2 2384,1541.5" fill="none" stroke="#98cdf0" stroke-width="3.7" stroke-linejoin="bevel" stroke-opacity="0.35"/>
<polygon points="1498.6,1578.3 1498.6,1558.2 1502.3,1553.4 1506,1547.8 1509.7,1563.8 1513.4,1566.9 1517.1,1555.5 1520.8,1565.7 1524.5,1564.2 1528.2,1543.8 1531.9,1556.5 1535.7,1554.4 1539.4,1559.4 1543.1,1559.8 1546.8,1555.5 1550.5,1558.4 1554.2,1543.5 1557.9,1562 1561.6,1555.2 1565.3,1562.4 1569,1568.7 1572.7,1553.3 1576.4,1556.8 1580.1,1553.3 1583.8,1566.4 1587.5,1546.7 1591.2,1562.1 1594.9,1568.6 1598.6,1558.3 1602.3,1560.5 1606,1565.7 1609.7,1567.9 1613.4,1550.3 1617.2,1566.9 1620.9,1563.8 1624.6,1546.4 1628.3,1566.6 1632,1564.1 1635.7,1552.3 1639.4,1552 1643.1,1558.1 1646.8,1564 1650.5,1564.6 1654.2,1543.7 1657.9,1564.8 1661.6,1554.9 1665.3,1551.1 1669,1552.8 1672.7,1557.9 1676.4,1556.2 1680.1,1558 1683.8,1560.3 1687.5,1546 1691.2,1550.5 1694.9,1556.2 1698.7,1557.9 1702.4,1566.3 1706.1,1557.3 1709.8,1553.6 1713.5,1555.3 1717.2,1556.2 1720.9,1562.6 1724.6,1557.5 1728.3,1560.3 1732,1560.8 1735.7,1550.7 1739.4,1560.2 1743.1,1552.7 1746.8,1552.4 1750.5,1557.3 1754.2,1562 1757.9,1563.5 1761.6,1561.1 1765.3,1550.3 1769,1567.2 1772.7,1562 1776.4,1555.8 1780.2,1562.4 1783.9,1560.4 1787.6,1566.1 1791.3,1545.5 1795,1565.6 1798.7,1543 1802.4,1549.8 1806.1,1555.1 1809.8,1547.8 1813.5,1559.7 1817.2,1565.3 1820.9,1555.6 1824.6,1564.5 1828.3,1551.5 1832,1565 1835.7,1546.9 1839.4,1560.3 1843.1,1557.7 1846.8,1559.9 1850.5,1547.2 1854.2,1557.1 1858,1562.6 1861.7,1552.2 1865.4,1563.5 1869.1,1557.7 1872.8,1559.6 1876.5,1568 1880.2,1551.4 1883.9,1563.2 1887.6,1554.8 1891.3,1553.8 1895,1556.7 1898.7,1556.9 1902.4,1563.4 1906.1,1554.5 1909.8,1548.2 1913.5,1551.8 1917.2,1556.4 1920.9,1561.7 1924.6,1560.8 1928.3,1565.3 1932,1556.5 1935.7,1554.2 1939.5,1543.3 1943.2,1557.1 1946.9,1547.1 1950.6,1551.1 1954.3,1554.3 1958,1549.8 1961.7,1544.5 1965.4,1551.3 1969.1,1550.4 1972.8,1563.5 1976.5,1553.7 1980.2,1565.7 1983.9,1543.5 1987.6,1566 1991.3,1551.1 1995,1556.2 1998.7,1560.1 2002.4,1547 2006.1,1559.7 2009.8,1545.4 2013.5,1563.3 2017.2,1550.5 2021,1544.6 2024.7,1564.2 2028.4,1550 2032.1,1550.9 2035.8,1551.4 2039.5,1548.3 2043.2,1549.7 2046.9,1564.1 2050.6,1557.6 2054.3,1560 2058,1562.4 2061.7,1549.8 2065.4,1550.2 2069.1,1554.9 2072.8,1544.3 2076.5,1551 2080.2,1557 2083.9,1558.9 2087.6,1558.5 2091.3,1548.1 2095,1563.7 2098.7,1554.3 2102.5,1561.2 2106.2,1551.9 2109.9,1555.1 2113.6,1549.8 2117.3,1555.7 2121,1564.7 2124.7,1555.1 2128.4,1551.9 2132.1,1559.4 2135.8,1563.9 2139.5,1555.4 2143.2,1564.4 2146.9,1560.8 2150.6,1567.8 2154.3,1563 2158,1550.6 2161.7,1563.9 2165.4,1550.9 2169.1,1553 2172.8,1567.4 2176.5,1545.3 2180.3,1556 2184,1555.3 2187.7,1558.5 2191.4,1566.1 2195.1,1562.8 2198.8,1560.8 2202.5,1559.5 2206.2,1557.9 2209.9,1551.8 2213.6,1551.1 2217.3,1560 2221,1556.4 2224.7,1546.1 2228.4,1565.1 2232.1,1554.6 2235.8,1565.8 2239.5,1553.3 2243.2,1552.6 2246.9,1564.8 2250.6,1542.6 2254.3,1562 2258,1549.3 2261.8,1553.1 2265.5,1550.4 2269.2,1561 2272.9,1550.6 2276.6,1565.8 2280.3,1565.4 2284,1566.6 2287.7,1567.6 2291.4,1554.2 2295.1,1556.6 2298.8,1559 2302.5,1544.5 2306.2,1556.1 2309.9,1561.9 2313.6,1555.4 2317.3,1555.8 2321,1545 2324.7,1550.7 2328.4,1554.8 2332.1,1562.9 2335.8,1549.3 2339.5,1562.2 2343.3,1562 2347,1564.6 2350.7,1559.4 2354.4,1568.5 2358.1,1556.2 2361.8,1556.3 2365.5,1561.9 2369.2,1553.6 2372.9,1544.2 2376.6,1567.9 2380.3,1549.1 2384,1550.3 2384,1578.3" fill="#b5807c" fill-opacity="0.5"/>
<polyline points="1498.6,1558.2 1502.3,1553.4 1506,1547.8 1509.7,1563.8 1513.4,1566.9 1517.1,1555.5 1520.8,1565.7 1524.5,1564.2 1528.2,1543.8 1531.9,1556.5 1535.7,1554.4 1539.4,1559.4 1543.1,1559.8 1546.8,1555.5 1550.5,1558.4 1554.2,1543.5 1557.9,1562 1561.6,1555.2 1565.3,1562.4 1569,1568.7 1572.7,1553.3 1576.4,1556.8 1580.1,1553.3 1583.8,1566.4 1587.5,1546.7 1591.2,1562.1 1594.9,1568.6 1598.6,1558.3 1602.3,1560.5 1606,1565.7 1609.7,1567.9 1613.4,1550.3 1617.2,1566.9 1620.9,1563.8 1624.6,1546.4 1628.3,1566.6 1632,1564.1 1635.7,1552.3 1639.4,1552 1643.1,1558.1 1646.8,1564 1650.5,1564.6 1654.2,1543.7 1657.9,1564.8 1661.6,1554.9 1665.3,1551.1 1669,1552.8 1672.7,1557.9 1676.4,1556.2 1680.1,1558 1683.8,1560.3 1687.5,1546 1691.2,1550.5 1694.9,1556.2 1698.7,1557.9 1702.4,1566.3 1706.1,1557.3 1709.8,1553.6 1713.5,1555.3 1717.2,1556.2 1720.9,1562.6 1724.6,1557.5 1728.3,1560.3 1732,1560.8 1735.7,1550.7 1739.4,1560.2 1743.1,1552.7 1746.8,1552.4 1750.5,1557.3 1754.2,1562 1757.9,1563.5 1761.6,1561.1 1765.3,1550.3 1769,1567.2 1772.7,1562 1776.4,1555.8 1780.2,1562.4 1783.9,1560.4 1787.6,1566.1 1791.3,1545.5 1795,1565.6 1798.7,1543 1802.4,1549.8 1806.1,1555.1 1809.8,1547.8 1813.5,1559.7 1817.2,1565.3 1820.9,1555.6 1824.6,1564.5 1828.3,1551.5 1832,1565 1835.7,1546.9 1839.4,1560.3 1843.1,1557.7 1846.8,1559.9 1850.5,1547.2 1854.2,1557.1 1858,1562.6 1861.7,1552.2 1865.4,1563.5 1869.1,1557.7 1872.8,1559.6 1876.5,1568 1880.2,1551.4 1883.9,1563.2 1887.6,1554.8 1891.3,1553.8 1895,1556.7 1898.7,1556.9 1902.4,1563.4 1906.1,1554.5 1909.8,1548.2 1913.5,1551.8 1917.2,1556.4 1920.9,1561.7 1924.6,1560.8 1928.3,1565.3 1932,1556.5 1935.7,1554.2 1939.5,1543.3 1943.2,1557.1 1946.9,1547.1 1950.6,1551.1 1954.3,1554.3 1958,1549.8 1961.7,1544.5 1965.4,1551.3 1969.1,1550.4 1972.8,1563.5 1976.5,1553.7 1980.2,1565.7 1983.9,1543.5 1987.6,1566 1991.3,1551.1 1995,1556.2 1998.7,1560.1 2002.4,1547 2006.1,1559.7 2009.8,1545.4 2013.5,1563.3 2017.2,1550.5 2021,1544.6 2024.7,1564.2 2028.4,1550 2032.1,1550.9 2035.8,1551.4 2039.5,1548.3 2043.2,1549.7 2046.9,1564.1 2050.6,1557.6 2054.3,1560 2058,1562.4 2061.7,1549.8 2065.4,1550.2 2069.1,1554.9 2072.8,1544.3 2076.5,1551 2080.2,1557 2083.9,1558.9 2087.6,1558.5 2091.3,1548.1 2095,1563.7 2098.7,1554.3 2102.5,1561.2 2106.2,1551.9 2109.9,1555.1 2113.6,1549.8 2117.3,1555.7 2121,1564.7 2124.7,1555.1 2128.4,1551.9 2132.1,1559.4 2135.8,1563.9 2139.5,1555.4 2143.2,1564.4 2146.9,1560.8 2150.6,1567.8 2154.3,1563 2158,1550.6 2161.7,1563.9 2165.4,1550.9 2169.1,1553 2172.8,1567.4 2176.5,1545.3 2180.3,1556 2184,1555.3 2187.7,1558.5 2191.4,1566.1 2195.1,1562.8 2198.8,1560.8 2202.5,1559.5 2206.2,1557.9 2209.9,1551.8 2213.6,1551.1 2217.3,1560 2221,1556.4 2224.7,1546.1 2228.4,1565.1 2232.1,1554.6 2235.8,1565.8 2239.5,1553.3 2243.2,1552.6 2246.9,1564.8 2250.6,1542.6 2254.3,1562 2258,1549.3 2261.8,1553.1 2265.5,1550.4 2269.2,1561 2272.9,1550.6 2276.6,1565.8 2280.3,1565.4 2284,1566.6 2287.7,1567.6 2291.4,1554.2 2295.1,1556.6 2298.8,1559 2302.5,1544.5 2306.2,1556.1 2309.9,1561.9 2313.6,1555.4 2317.3,1555.8 2321,1545 2324.7,1550.7 2328.4,1554.8 2332.1,1562.9 2335.8,1549.3 2339.5,1562.2 2343.3,1562 2347,1564.6 2350.7,1559.4 2354.4,1568.5 2358.1,1556.2 2361.8,1556.3 2365.5,1561.9 2369.2,1553.6 2372.9,1544.2 2376.6,1567.9 2380.3,1549.1 2384,1550.3" fill="none" stroke="#b5807c" stroke-width="3.7" stroke-linejoin="bevel" stroke-opacity="0.35"/>
<polygon points="1498.6,1578.3 1498.6,1559 1502.3,1559.2 1506,1564.8 1509.7,1546.3 1513.4,1546.8 1517.1,1567.7 1520.8,1543.7 1524.5,1547.6 1528.2,1550.3 1531.9,1551.2 1535.7,1569.9 1539.4,1566.3 1543.1,1548.3 1546.8,1532.2 1550.5,1546.7 1554.2,1564.3 1557.9,1553.2 1561.6,1546.4 1565.3,1567.9 1569,1558.2 1572.7,1566.8 1576.4,1555.8 1580.1,1566.6 1583.8,1547.3 1587.5,1560.7 1591.2,1557.1 1594.9,1544 1598.6,1551.3 1602.3,1559.6 1606,1560.5 1609.7,1551.7 1613.4,1558.6 1617.2,1566 1620.9,1554.1 1624.6,1550.7 1628.3,1566.9 1632,1540.8 1635.7,1554.8 1639.4,1565.3 1643.1,1546.3 1646.8,1552.9 1650.5,1525.7 1654.2,1562.8 1657.9,1561.5 1661.6,1565.9 1665.3,1559.4 1669,1557.9 1672.7,1562.9 1676.4,1551.8 1680.1,1561.3 1683.8,1561.2 1687.5,1567 1691.2,1557.6 1694.9,1547.7 1698.7,1540 1702.4,1546.2 1706.1,1564.3 1709.8,1553.8 1713.5,1550.2 1717.2,1554.8 1720.9,1564.5 1724.6,1566.2 1728.3,1563.7 1732,1535.5 1735.7,1564.5 1739.4,1565 1743.1,1550.2 1746.8,1564.3 1750.5,1563.4 1754.2,1547.6 1757.9,1535.6 1761.6,1566.4 1765.3,1547 1769,1547.7 1772.7,1550.1 1776.4,1552.8 1780.2,1560.8 1783.9,1567.3 1787.6,1527.4 1791.3,1543.1 1795,1552.8 1798.7,1554.2 1802.4,1546.3 1806.1,1563.7 1809.8,1558.9 1813.5,1549.9 1817.2,1566.3 1820.9,1568.9 1824.6,1547.5 1828.3,1568.9 1832,1559.2 1835.7,1547.9 1839.4,1552.8 1843.1,1562.3 1846.8,1557.6 1850.5,1548.3 1854.2,1565.4 1858,1549.2 1861.7,1558.3 1865.4,1558.1 1869.1,1556 1872.8,1559.7 1876.5,1562.1 1880.2,1562.9 1883.9,1562.5 1887.6,1537 1891.3,1552 1895,1565.2 1898.7,1569.2 1902.4,1547 1906.1,1561.9 1909.8,1560.2 1913.5,1555.8 1917.2,1550.4 1920.9,1554.8 1924.6,1557.5 1928.3,1566.3 1932,1561.7 1935.7,1562.4 1939.5,1556.4 1943.2,1556.1 1946.9,1560 1950.6,1548.3 1954.3,1547 1958,1556.1 1961.7,1566.3 1965.4,1550 1969.1,1558.6 1972.8,1565.8 1976.5,1549.8 1980.2,1569.4 1983.9,1544 1987.6,1541.4 1991.3,1528.4 1995,1544.4 1998.7,1553.9 2002.4,1549.3 2006.1,1564.7 2009.8,1569 2013.5,1567 2017.2,1569.7 2021,1551.2 2024.7,1546.7 2028.4,1552.8 2032.1,1558.5 2035.8,1559.1 2039.5,1548.1 2043.2,1565.5 2046.9,1560 2050.6,1553.8 2054.3,1567.8 2058,1549.4 2061.7,1546.4 2065.4,1562.3 2069.1,1565.6 2072.8,1568.7 2076.5,1549.4 2080.2,1541.7 2083.9,1555 2087.6,1563.8 2091.3,1565.5 2095,1559.5 2098.7,1563.7 2102.5,1567.2 2106.2,1565.8 2109.9,1562 2113.6,1567 2117.3,1565.5 2121,1547.1 2124.7,1567 2128.4,1562.8 2132.1,1563.9 2135.8,1546.2 2139.5,1551.3 2143.2,1562.4 2146.9,1568.3 2150.6,1564.1 2154.3,1564 2158,1554.9 2161.7,1551 2165.4,1564.7 2169.1,1565 2172.8,1549.1 2176.5,1548.3 2180.3,1524.8 2184,1563.1 2187.7,1566.5 2191.4,1551.2 2195.1,1555.5 2198.8,1569.3 2202.5,1568.3 2206.2,1545.9 2209.9,1557.4 2213.6,1557.5 2217.3,1567.2 2221,1538.6 2224.7,1567.9 2228.4,1551.9 2232.1,1566.6 2235.8,1564.6 2239.5,1552 2243.2,1556.9 2246.9,1552.8 2250.6,1552.8 2254.3,1532.4 2258,1554.1 2261.8,1553.8 2265.5,1565.4 2269.2,1548.7 2272.9,1563.6 2276.6,1548.1 2280.3,1547.7 2284,1549 2287.7,1552.2 2291.4,1568.4 2295.1,1560.3 2298.8,1562.5 2302.5,1550.3 2306.2,1562.7 2309.9,1555.5 2313.6,1535.4 2317.3,1564.4 2321,1548.5 2324.7,1569.8 2328.4,1565.3 2332.1,1561 2335.8,1524.5 2339.5,1560 2343.3,1551.3 2347,1558.4 2350.7,1541.9 2354.4,1554.4 2358.1,1553.3 2361.8,1567.9 2365.5,1561.1 2369.2,1549.4 2372.9,1554.1 2376.6,1566.2 2380.3,1538.4 2384,1525.2 2384,1578.3" fill="#e6bc3c" fill-opacity="0.5"/>
<polyline points="1498.6,1559 1502.3,1559.2 1506,1564.8 1509.7,1546.3 1513.4,1546.8 1517.1,1567.7 1520.8,1543.7 1524.5,1547.6 1528.2,1550.3 1531.9,1551.2 1535.7,1569.9 1539.4,1566.3 1543.1,1548.3 1546.8,1532.2 1550.5,1546.7 1554.2,1564.3 1557.9,1553.2 1561.6,1546.4 1565.3,1567.9 1569,1558.2 1572.7,1566.8 1576.4,1555.8 1580.1,1566.6 1583.8,1547.3 1587.5,1560.7 1591.2,1557.1 1594.9,1544 1598.6,1551.3 1602.3,1559.6 1606,1560.5 1609.7,1551.7 1613.4,1558.6 1617.2,1566 1620.9,1554.1 1624.6,1550.7 1628.3,1566.9 1632,1540.8 1635.7,1554.8 1639.4,1565.3 1643.1,1546.3 1646.8,1552.9 1650.5,1525.7 1654.2,1562.8 1657.9,1561.5 1661.6,1565.9 1665.3,1559.4 1669,1557.9 1672.7,1562.9 1676.4,1551.8 1680.1,1561.3 1683.8,1561.2 1687.5,1567 1691.2,1557.6 1694.9,1547.7 1698.7,1540 1702.4,1546.2 1706.1,1564.3 1709.8,1553.8 1713.5,1550.2 1717.2,1554.8 1720.9,1564.5 1724.6,1566.2 1728.3,1563.7 1732,1535.5 1735.7,1564.5 1739.4,1565 1743.1,1550.2 1746.8,1564.3 1750.5,1563.4 1754.2,1547.6 1757.9,1535.6 1761.6,1566.4 1765.3,1547 1769,1547.7 1772.7,1550.1 1776.4,1552.8 1780.2,1560.8 1783.9,1567.3 1787.6,1527.4 1791.3,1543.1 1795,1552.8 1798.7,1554.2 1802.4,1546.3 1806.1,1563.7 1809.8,1558.9 1813.5,1549.9 1817.2,1566.3 1820.9,1568.9 1824.6,1547.5 1828.3,1568.9 1832,1559.2 1835.7,1547.9 1839.4,1552.8 1843.1,1562.3 1846.8,1557.6 1850.5,1548.3 1854.2,1565.4 1858,1549.2 1861.7,1558.3 1865.4,1558.1 1869.1,1556 1872.8,1559.7 1876.5,1562.1 1880.2,1562.9 1883.9,1562.5 1887.6,1537 1891.3,1552 1895,1565.2 1898.7,1569.2 1902.4,1547 1906.1,1561.9 1909.8,1560.2 1913.5,1555.8 1917.2,1550.4 1920.9,1554.8 1924.6,1557.5 1928.3,1566.3 1932,1561.7 1935.7,1562.4 1939.5,1556.4 1943.2,1556.1 1946.9,1560 1950.6,1548.3 1954.3,1547 1958,1556.1 1961.7,1566.3 1965.4,1550 1969.1,1558.6 1972.8,1565.8 1976.5,1549.8 1980.2,1569.4 1983.9,1544 1987.6,1541.4 1991.3,1528.4 1995,1544.4 1998.7,1553.9 2002.4,1549.3 2006.1,1564.7 2009.8,1569 2013.5,1567 2017.2,1569.7 2021,1551.2 2024.7,1546.7 2028.4,1552.8 2032.1,1558.5 2035.8,1559.1 2039.5,1548.1 2043.2,1565.5 2046.9,1560 2050.6,1553.8 2054.3,1567.8 2058,1549.4 2061.7,1546.4 2065.4,1562.3 2069.1,1565.6 2072.8,1568.7 2076.5,1549.4 2080.2,1541.7 2083.9,1555 2087.6,1563.8 2091.3,1565.5 2095,1559.5 2098.7,1563.7 2102.5,1567.2 2106.2,1565.8 2109.9,1562 2113.6,1567 2117.3,1565.5 2121,1547.1 2124.7,1567 2128.4,1562.8 2132.1,1563.9 2135.8,1546.2 2139.5,1551.3 2143.2,1562.4 2146.9,1568.3 2150.6,1564.1 2154.3,1564 2158,1554.9 2161.7,1551 2165.4,1564.7 2169.1,1565 2172.8,1549.1 2176.5,1548.3 2180.3,1524.8 2184,1563.1 2187.7,1566.5 2191.4,1551.2 2195.1,1555.5 2198.8,1569.3 2202.5,1568.3 2206.2,1545.9 2209.9,1557.4 2213.6,1557.5 2217.3,1567.2 2221,1538.6 2224.7,1567.9 2228.4,1551.9 2232.1,1566.6 2235.8,1564.6 2239.5,1552 2243.2,1556.9 2246.9,1552.8 2250.6,1552.8 2254.3,1532.4 2258,1554.1 2261.8,1553.8 2265.5,1565.4 2269.2,1548.7 2272.9,1563.6 2276.6,1548.1 2280.3,1547.7 2284,1549 2287.7,1552.2 2291.4,1568.4 2295.1,1560.3 2298.8,1562.5 2302.5,1550.3 2306.2,1562.7 2309.9,1555.5 2313.6,1535.4 2317.3,1564.4 2321,1548.5 2324.7,1569.8 2328.4,1565.3 2332.1,1561 2335.8,1524.5 2339.5,1560 2343.3,1551.3 2347,1558.4 2350.7,1541.9 2354.4,1554.4 2358.1,1553.3 2361.8,1567.9 2365.5,1561.1 2369.2,1549.4 2372.9,1554.1 2376.6,1566.2 2380.3,1538.4 2384,1525.2" fill="none" stroke="#e6bc3c" stroke-width="3.7" stroke-linejoin="bevel" stroke-opacity="0.35"/>
<polygon points="1498.6,1578.3 1498.6,1562.8 1502.3,1563.5 1506,1563.8 1509.7,1564.1 1513.4,1566.4 1517.1,1568.2 1520.8,1561.7 1524.5,1565.5 1528.2,1563.3 1531.9,1567.4 1535.7,1566.4 1539.4,1561.6 1543.1,1567.1 1546.8,1557 1550.5,1553.4 1554.2,1567.7 1557.9,1567.4 1561.6,1564.3 1565.3,1563.8 1569,1565.5 1572.7,1560.3 1576.4,1561 1580.1,1561.3 1583.8,1560.1 1587.5,1562.3 1591.2,1562.7 1594.9,1564.7 1598.6,1562 1602.3,1559.6 1606,1567 1609.7,1565 1613.4,1567 1617.2,1560.3 1620.9,1564.2 1624.6,1563.2 1628.3,1563.5 1632,1567.4 1635.7,1563.3 1639.4,1567.2 1643.1,1565.4 1646.8,1567.3 1650.5,1553.8 1654.2,1561.9 1657.9,1566.4 1661.6,1562.2 1665.3,1561.9 1669,1562.2 1672.7,1565.5 1676.4,1564.2 1680.1,1565.4 1683.8,1561.7 1687.5,1564.9 1691.2,1562.4 1694.9,1567.3 1698.7,1564.1 1702.4,1556.4 1706.1,1565.4 1709.8,1563.6 1713.5,1560.5 1717.2,1568.1 1720.9,1560.7 1724.6,1559.8 1728.3,1560.9 1732,1562.3 1735.7,1562.5 1739.4,1564.8 1743.1,1566.4 1746.8,1565.8 1750.5,1567.1 1754.2,1566.4 1757.9,1566.2 1761.6,1563 1765.3,1568.1 1769,1566.8 1772.7,1560.1 1776.4,1564 1780.2,1560.4 1783.9,1565.5 1787.6,1560.5 1791.3,1560.3 1795,1551 1798.7,1561 1802.4,1561.4 1806.1,1564.1 1809.8,1565.1 1813.5,1560 1817.2,1562 1820.9,1567.5 1824.6,1567.6 1828.3,1565 1832,1565.8 1835.7,1561.9 1839.4,1553.4 1843.1,1562 1846.8,1564.6 1850.5,1562.9 1854.2,1566.1 1858,1556.5 1861.7,1559.6 1865.4,1566.5 1869.1,1554.8 1872.8,1562.5 1876.5,1566.6 1880.2,1567.2 1883.9,1567 1887.6,1562.4 1891.3,1560.4 1895,1566.1 1898.7,1560.5 1902.4,1561 1906.1,1566.7 1909.8,1565.3 1913.5,1561.4 1917.2,1564 1920.9,1566.2 1924.6,1563.9 1928.3,1565.2 1932,1561.9 1935.7,1563.4 1939.5,1564.3 1943.2,1561 1946.9,1567.8 1950.6,1561.5 1954.3,1559.6 1958,1562.7 1961.7,1561.3 1965.4,1567.7 1969.1,1564.2 1972.8,1561.6 1976.5,1564.1 1980.2,1565.3 1983.9,1357.7 1987.6,1559.8 1991.3,1564.3 1995,1564.8 1998.7,1562.4 2002.4,1566.4 2006.1,1562.3 2009.8,1563.9 2013.5,1567.6 2017.2,1564.6 2021,1561.9 2024.7,1567 2028.4,1551.9 2032.1,1560.2 2035.8,1567.9 2039.5,1567.5 2043.2,1565.2 2046.9,1565.4 2050.6,1568 2054.3,1561.8 2058,1566.3 2061.7,1561.6 2065.4,1568.1 2069.1,1568.1 2072.8,1566.8 2076.5,1562.9 2080.2,1561.3 2083.9,1561.1 2087.6,1560.7 2091.3,1563.8 2095,1553.3 2098.7,1567.3 2102.5,1566.2 2106.2,1560.4 2109.9,1561.1 2113.6,1561.7 2117.3,1562.6 2121,1562 2124.7,1567 2128.4,1562.8 2132.1,1567.2 2135.8,1565.1 2139.5,1563.4 2143.2,1565.3 2146.9,1562.8 2150.6,1559.9 2154.3,1559.7 2158,1565 2161.7,1560.5 2165.4,1559.9 2169.1,1563.3 2172.8,1568.2 2176.5,1564.7 2180.3,1561.7 2184,1568.1 2187.7,1563.1 2191.4,1565.7 2195.1,1561.9 2198.8,1565.6 2202.5,1559.7 2206.2,1566.2 2209.9,1567.7 2213.6,1566.8 2217.3,1562.1 2221,1564.5 2224.7,1563.1 2228.4,1566 2232.1,1564.8 2235.8,1561.8 2239.5,1567.5 2243.2,1563.6 2246.9,1561.3 2250.6,1560.3 2254.3,1567.8 2258,1563.5 2261.8,1565.7 2265.5,1470.4 2269.2,1563 2272.9,1566.1 2276.6,1565.2 2280.3,1560 2284,1561.5 2287.7,1562.6 2291.4,1567.5 2295.1,1560.8 2298.8,1567.9 2302.5,1563.8 2306.2,1560.5 2309.9,1566.2 2313.6,1565.3 2317.3,1564.2 2321,1560.5 2324.7,1566.8 2328.4,1565.2 2332.1,1567.8 2335.8,1561.3 2339.5,1562.8 2343.3,1562.7 2347,1562.8 2350.7,1556.2 2354.4,1566.6 2358.1,1567.9 2361.8,1551.7 2365.5,1566.6 2369.2,1563.2 2372.9,1487.2 2376.6,1566.5 2380.3,1554.6 2384,1566.1 2384,1578.3" fill="#f5829c" fill-opacity="0.4"/>
<polyline points="1498.6,1562.8 1502.3,1563.5 1506,1563.8 1509.7,1564.1 1513.4,1566.4 1517.1,1568.2 1520.8,1561.7 1524.5,1565.5 1528.2,1563.3 1531.9,1567.4 1535.7,1566.4 1539.4,1561.6 1543.1,1567.1 1546.8,1557 1550.5,1553.4 1554.2,1567.7 1557.9,1567.4 1561.6,1564.3 1565.3,1563.8 1569,1565.5 1572.7,1560.3 1576.4,1561 1580.1,1561.3 1583.8,1560.1 1587.5,1562.3 1591.2,1562.7 1594.9,1564.7 1598.6,1562 1602.3,1559.6 1606,1567 1609.7,1565 1613.4,1567 1617.2,1560.3 1620.9,1564.2 1624.6,1563.2 1628.3,1563.5 1632,1567.4 1635.7,1563.3 1639.4,1567.2 1643.1,1565.4 1646.8,1567.3 1650.5,1553.8 1654.2,1561.9 1657.9,1566.4 1661.6,1562.2 1665.3,1561.9 1669,1562.2 1672.7,1565.5 1676.4,1564.2 1680.1,1565.4 1683.8,1561.7 1687.5,1564.9 1691.2,1562.4 1694.9,1567.3 1698.7,1564.1 1702.4,1556.4 1706.1,1565.4 1709.8,1563.6 1713.5,1560.5 1717.2,1568.1 1720.9,1560.7 1724.6,1559.8 1728.3,1560.9 1732,1562.3 1735.7,1562.5 1739.4,1564.8 1743.1,1566.4 1746.8,1565.8 1750.5,1567.1 1754.2,1566.4 1757.9,1566.2 1761.6,1563 1765.3,1568.1 1769,1566.8 1772.7,1560.1 1776.4,1564 1780.2,1560.4 1783.9,1565.5 1787.6,1560.5 1791.3,1560.3 1795,1551 1798.7,1561 1802.4,1561.4 1806.1,1564.1 1809.8,1565.1 1813.5,1560 1817.2,1562 1820.9,1567.5 1824.6,1567.6 1828.3,1565 1832,1565.8 1835.7,1561.9 1839.4,1553.4 1843.1,1562 1846.8,1564.6 1850.5,1562.9 1854.2,1566.1 1858,1556.5 1861.7,1559.6 1865.4,1566.5 1869.1,1554.8 1872.8,1562.5 1876.5,1566.6 1880.2,1567.2 1883.9,1567 1887.6,1562.4 1891.3,1560.4 1895,1566.1 1898.7,1560.5 1902.4,1561 1906.1,1566.7 1909.8,1565.3 1913.5,1561.4 1917.2,1564 1920.9,1566.2 1924.6,1563.9 1928.3,1565.2 1932,1561.9 1935.7,1563.4 1939.5,1564.3 1943.2,1561 1946.9,1567.8 1950.6,1561.5 1954.3,1559.6 1958,1562.7 1961.7,1561.3 1965.4,1567.7 1969.1,1564.2 1972.8,1561.6 1976.5,1564.1 1980.2,1565.3 1983.9,1357.7 1987.6,1559.8 1991.3,1564.3 1995,1564.8 1998.7,1562.4 2002.4,1566.4 2006.1,1562.3 2009.8,1563.9 2013.5,1567.6 2017.2,1564.6 2021,1561.9 2024.7,1567 2028.4,1551.9 2032.1,1560.2 2035.8,1567.9 2039.5,1567.5 2043.2,1565.2 2046.9,1565.4 2050.6,1568 2054.3,1561.8 2058,1566.3 2061.7,1561.6 2065.4,1568.1 2069.1,1568.1 2072.8,1566.8 2076.5,1562.9 2080.2,1561.3 2083.9,1561.1 2087.6,1560.7 2091.3,1563.8 2095,1553.3 2098.7,1567.3 2102.5,1566.2 2106.2,1560.4 2109.9,1561.1 2113.6,1561.7 2117.3,1562.6 2121,1562 2124.7,1567 2128.4,1562.8 2132.1,1567.2 2135.8,1565.1 2139.5,1563.4 2143.2,1565.3 2146.9,1562.8 2150.6,1559.9 2154.3,1559.7 2158,1565 2161.7,1560.5 2165.4,1559.9 2169.1,1563.3 2172.8,1568.2 2176.5,1564.7 2180.3,1561.7 2184,1568.1 2187.7,1563.1 2191.4,1565.7 2195.1,1561.9 2198.8,1565.6 2202.5,1559.7 2206.2,1566.2 2209.9,1567.7 2213.6,1566.8 2217.3,1562.1 2221,1564.5 2224.7,1563.1 2228.4,1566 2232.1,1564.8 2235.8,1561.8 2239.5,1567.5 2243.2,1563.6 2246.9,1561.3 2250.6,1560.3 2254.3,1567.8 2258,1563.5 2261.8,1565.7 2265.5,1470.4 2269.2,1563 2272.9,1566.1 2276.6,1565.2 2280.3,1560 2284,1561.5 2287.7,1562.6 2291.4,1567.5 2295.1,1560.8 2298.8,1567.9 2302.5,1563.8 2306.2,1560.5 2309.9,1566.2 2313.6,1565.3 2317.3,1564.2 2321,1560.5 2324.7,1566.8 2328.4,1565.2 2332.1,1567.8 2335.8,1561.3 2339.5,1562.8 2343.3,1562.7 2347,1562.8 2350.7,1556.2 2354.4,1566.6 2358.1,1567.9 2361.8,1551.7 2365.5,1566.6 2369.2,1563.2 2372.9,1487.2 2376.6,1566.5 2380.3,1554.6 2384,1566.1" fill="none" stroke="#f5829c" stroke-width="3.7" stroke-linejoin="bevel" stroke-opacity="0.88"/>
<polygon points="1498.6,1578.3 1498.6,1508.7 1502.3,1520.7 1506,1523.1 1509.7,1512.9 1513.4,1518.8 1517.1,1522.8 1520.8,1513.6 1524.5,1517.3 1528.2,1513 1531.9,1516.6 1535.7,1521 1539.4,1514.8 1543.1,1517 1546.8,1506.3 1550.5,1515.9 1554.2,1518.1 1557.9,1516.5 1561.6,1523.5 1565.3,1523.1 1569,1518.1 1572.7,1484.8 1576.4,1496.8 1580.1,1485.7 1583.8,1508.7 1587.5,1522.7 1591.2,1521.4 1594.9,1513 1598.6,1522.7 1602.3,1523 1606,1522.5 1609.7,1517.5 1613.4,1520.4 1617.2,1518.9 1620.9,1513.8 1624.6,1499.2 1628.3,1513.5 1632,1518.5 1635.7,1517.6 1639.4,1521.7 1643.1,1518.7 1646.8,1520.3 1650.5,1513.2 1654.2,1514.9 1657.9,1522.6 1661.6,1489.6 1665.3,1516.8 1669,1523.1 1672.7,1516.5 1676.4,1516.8 1680.1,1523.5 1683.8,1516.1 1687.5,1516 1691.2,1516 1694.9,1521.9 1698.7,1515.5 1702.4,1516.7 1706.1,1515.1 1709.8,1522.2 1713.5,1512.6 1717.2,1518.8 1720.9,1523.4 1724.6,1519.8 1728.3,1517.4 1732,1512.8 1735.7,1514.6 1739.4,1520.2 1743.1,1516.9 1746.8,1470.4 1750.5,1494.4 1754.2,1513.5 1757.9,1523.6 1761.6,1514.4 1765.3,1513.2 1769,1513.4 1772.7,1519.9 1776.4,1520.2 1780.2,1524 1783.9,1519.5 1787.6,1523 1791.3,1516.2 1795,1522.9 1798.7,1513.9 1802.4,1514.1 1806.1,1516.8 1809.8,1515 1813.5,1519.1 1817.2,1518 1820.9,1516.1 1824.6,1519.6 1828.3,1514 1832,1523.9 1835.7,1482.4 1839.4,1513.5 1843.1,1522.5 1846.8,1514.6 1850.5,1515.4 1854.2,1512.8 1858,1515 1861.7,1520.4 1865.4,1518 1869.1,1520.2 1872.8,1514.6 1876.5,1517.9 1880.2,1520.4 1883.9,1522.7 1887.6,1514.9 1891.3,1514.7 1895,1524 1898.7,1520.7 1902.4,1522.4 1906.1,1521.1 1909.8,1523.5 1913.5,1514.2 1917.2,1523.6 1920.9,1514.2 1924.6,1516.9 1928.3,1521.1 1932,1518.8 1935.7,1522.5 1939.5,1517.3 1943.2,1519.3 1946.9,1515.5 1950.6,1523.2 1954.3,1515.3 1958,1523.6 1961.7,1522.9 1965.4,1515.4 1969.1,1501.6 1972.8,1519.9 1976.5,1512.7 1980.2,1518.8 1983.9,1522.4 1987.6,1516.7 1991.3,1513.1 1995,1513.4 1998.7,1518 2002.4,1512.9 2006.1,1513.6 2009.8,1519 2013.5,1514.8 2017.2,1518.8 2021,1518.8 2024.7,1518.2 2028.4,1513.1 2032.1,1521.5 2035.8,1514.2 2039.5,1519.3 2043.2,1516.2 2046.9,1517.5 2050.6,1514.7 2054.3,1518 2058,1520.1 2061.7,1515.3 2065.4,1501.6 2069.1,1522.9 2072.8,1514.8 2076.5,1513.4 2080.2,1514 2083.9,1512.9 2087.6,1521.5 2091.3,1521.6 2095,1518.3 2098.7,1516.1 2102.5,1482.4 2106.2,1512.6 2109.9,1496.8 2113.6,1513.5 2117.3,1515.9 2121,1518 2124.7,1519.9 2128.4,1520.4 2132.1,1522.5 2135.8,1514.2 2139.5,1518 2143.2,1513.3 2146.9,1482.4 2150.6,1448.8 2154.3,1487.2 2158,1524 2161.7,1489.6 2165.4,1518 2169.1,1515 2172.8,1513.9 2176.5,1516.1 2180.3,1496 2184,1434.4 2187.7,1384 2191.4,1472.8 2195.1,1506 2198.8,1504.8 2202.5,1496.2 2206.2,1505.1 2209.9,1496.1 2213.6,1502.7 2217.3,1504.6 2221,1513.5 2224.7,1500.5 2228.4,1502.7 2232.1,1499.8 2235.8,1506.1 2239.5,1502.7 2243.2,1502.1 2246.9,1503.3 2250.6,1496.9 2254.3,1501.2 2258,1510.3 2261.8,1495.5 2265.5,1508.9 2269.2,1507.8 2272.9,1477.6 2276.6,1448.8 2280.3,1470.4 2284,1460.8 2287.7,1482.4 2291.4,1502.9 2295.1,1472.8 2298.8,1505.6 2302.5,1499.9 2306.2,1504.9 2309.9,1504.7 2313.6,1500.9 2317.3,1510.9 2321,1495.8 2324.7,1509.2 2328.4,1508.3 2332.1,1499.2 2335.8,1499.1 2339.5,1505.5 2343.3,1495.1 2347,1477.6 2350.7,1472.8 2354.4,1475.2 2358.1,1504 2361.8,1511.4 2365.5,1456 2369.2,1496.8 2372.9,1510.2 2376.6,1496.6 2380.3,1495 2384,1507.2 2384,1578.3" fill="#b0bcf5" fill-opacity="0.4"/>
<polyline points="1498.6,1508.7 1502.3,1520.7 1506,1523.1 1509.7,1512.9 1513.4,1518.8 1517.1,1522.8 1520.8,1513.6 1524.5,1517.3 1528.2,1513 1531.9,1516.6 1535.7,1521 1539.4,1514.8 1543.1,1517 1546.8,1506.3 1550.5,1515.9 1554.2,1518.1 1557.9,1516.5 1561.6,1523.5 1565.3,1523.1 1569,1518.1 1572.7,1484.8 1576.4,1496.8 1580.1,1485.7 1583.8,1508.7 1587.5,1522.7 1591.2,1521.4 1594.9,1513 1598.6,1522.7 1602.3,1523 1606,1522.5 1609.7,1517.5 1613.4,1520.4 1617.2,1518.9 1620.9,1513.8 1624.6,1499.2 1628.3,1513.5 1632,1518.5 1635.7,1517.6 1639.4,1521.7 1643.1,1518.7 1646.8,1520.3 1650.5,1513.2 1654.2,1514.9 1657.9,1522.6 1661.6,1489.6 1665.3,1516.8 1669,1523.1 1672.7,1516.5 1676.4,1516.8 1680.1,1523.5 1683.8,1516.1 1687.5,1516 1691.2,1516 1694.9,1521.9 1698.7,1515.5 1702.4,1516.7 1706.1,1515.1 1709.8,1522.2 1713.5,1512.6 1717.2,1518.8 1720.9,1523.4 1724.6,1519.8 1728.3,1517.4 1732,1512.8 1735.7,1514.6 1739.4,1520.2 1743.1,1516.9 1746.8,1470.4 1750.5,1494.4 1754.2,1513.5 1757.9,1523.6 1761.6,1514.4 1765.3,1513.2 1769,1513.4 1772.7,1519.9 1776.4,1520.2 1780.2,1524 1783.9,1519.5 1787.6,1523 1791.3,1516.2 1795,1522.9 1798.7,1513.9 1802.4,1514.1 1806.1,1516.8 1809.8,1515 1813.5,1519.1 1817.2,1518 1820.9,1516.1 1824.6,1519.6 1828.3,1514 1832,1523.9 1835.7,1482.4 1839.4,1513.5 1843.1,1522.5 1846.8,1514.6 1850.5,1515.4 1854.2,1512.8 1858,1515 1861.7,1520.4 1865.4,1518 1869.1,1520.2 1872.8,1514.6 1876.5,1517.9 1880.2,1520.4 1883.9,1522.7 1887.6,1514.9 1891.3,1514.7 1895,1524 1898.7,1520.7 1902.4,1522.4 1906.1,1521.1 1909.8,1523.5 1913.5,1514.2 1917.2,1523.6 1920.9,1514.2 1924.6,1516.9 1928.3,1521.1 1932,1518.8 1935.7,1522.5 1939.5,1517.3 1943.2,1519.3 1946.9,1515.5 1950.6,1523.2 1954.3,1515.3 1958,1523.6 1961.7,1522.9 1965.4,1515.4 1969.1,1501.6 1972.8,1519.9 1976.5,1512.7 1980.2,1518.8 1983.9,1522.4 1987.6,1516.7 1991.3,1513.1 1995,1513.4 1998.7,1518 2002.4,1512.9 2006.1,1513.6 2009.8,1519 2013.5,1514.8 2017.2,1518.8 2021,1518.8 2024.7,1518.2 2028.4,1513.1 2032.1,1521.5 2035.8,1514.2 2039.5,1519.3 2043.2,1516.2 2046.9,1517.5 2050.6,1514.7 2054.3,1518 2058,1520.1 2061.7,1515.3 2065.4,1501.6 2069.1,1522.9 2072.8,1514.8 2076.5,1513.4 2080.2,1514 2083.9,1512.9 2087.6,1521.5 2091.3,1521.6 2095,1518.3 2098.7,1516.1 2102.5,1482.4 2106.2,1512.6 2109.9,1496.8 2113.6,1513.5 2117.3,1515.9 2121,1518 2124.7,1519.9 2128.4,1520.4 2132.1,1522.5 2135.8,1514.2 2139.5,1518 2143.2,1513.3 2146.9,1482.4 2150.6,1448.8 2154.3,1487.2 2158,1524 2161.7,1489.6 2165.4,1518 2169.1,1515 2172.8,1513.9 2176.5,1516.1 2180.3,1496 2184,1434.4 2187.7,1384 2191.4,1472.8 2195.1,1506 2198.8,1504.8 2202.5,1496.2 2206.2,1505.1 2209.9,1496.1 2213.6,1502.7 2217.3,1504.6 2221,1513.5 2224.7,1500.5 2228.4,1502.7 2232.1,1499.8 2235.8,1506.1 2239.5,1502.7 2243.2,1502.1 2246.9,1503.3 2250.6,1496.9 2254.3,1501.2 2258,1510.3 2261.8,1495.5 2265.5,1508.9 2269.2,1507.8 2272.9,1477.6 2276.6,1448.8 2280.3,1470.4 2284,1460.8 2287.7,1482.4 2291.4,1502.9 2295.1,1472.8 2298.8,1505.6 2302.5,1499.9 2306.2,1504.9 2309.9,1504.7 2313.6,1500.9 2317.3,1510.9 2321,1495.8 2324.7,1509.2 2328.4,1508.3 2332.1,1499.2 2335.8,1499.1 2339.5,1505.5 2343.3,1495.1 2347,1477.6 2350.7,1472.8 2354.4,1475.2 2358.1,1504 2361.8,1511.4 2365.5,1456 2369.2,1496.8 2372.9,1510.2 2376.6,1496.6 2380.3,1495 2384,1507.2" fill="none" stroke="#b0bcf5" stroke-width="3.7" stroke-linejoin="bevel" stroke-opacity="0.88"/>
<polygon points="1498.6,1578.3 1498.6,1527.1 1502.3,1554.5 1506,1530 1509.7,1557 1513.4,1555.9 1517.1,1542.8 1520.8,1541.5 1524.5,1543.7 1528.2,1557.1 1531.9,1521.8 1535.7,1548.7 1539.4,1549.6 1543.1,1545.9 1546.8,1547 1550.5,1544.1 1554.2,1540.4 1557.9,1551.6 1561.6,1527.3 1565.3,1522.8 1569,1532.6 1572.7,1531.7 1576.4,1541.3 1580.1,1557.2 1583.8,1556.4 1587.5,1548.7 1591.2,1557.8 1594.9,1551.6 1598.6,1551.7 1602.3,1546.6 1606,1546.5 1609.7,1558.1 1613.4,1546.9 1617.2,1555.8 1620.9,1527.8 1624.6,1551.9 1628.3,1538.7 1632,1540.6 1635.7,1546.8 1639.4,1553.5 1643.1,1535.9 1646.8,1526.2 1650.5,1550.7 1654.2,1531.9 1657.9,1537.4 1661.6,1534.3 1665.3,1542 1669,1551.5 1672.7,1547 1676.4,1556.4 1680.1,1548 1683.8,1553.4 1687.5,1548.2 1691.2,1521.6 1694.9,1553.4 1698.7,1540.6 1702.4,1519.9 1706.1,1542.4 1709.8,1553.4 1713.5,1550.1 1717.2,1546.7 1720.9,1552.6 1724.6,1550.5 1728.3,1553 1732,1554.9 1735.7,1544.4 1739.4,1538.8 1743.1,1550.1 1746.8,1553.8 1750.5,1524.2 1754.2,1524.5 1757.9,1537.1 1761.6,1549.6 1765.3,1526.5 1769,1522.9 1772.7,1538.5 1776.4,1527.5 1780.2,1556.9 1783.9,1539 1787.6,1555.4 1791.3,1554.8 1795,1544.8 1798.7,1556.6 1802.4,1542.8 1806.1,1546.7 1809.8,1549.7 1813.5,1557.4 1817.2,1558.3 1820.9,1545 1824.6,1552.4 1828.3,1539.8 1832,1549.2 1835.7,1544.9 1839.4,1546.6 1843.1,1555.5 1846.8,1536.6 1850.5,1553 1854.2,1548.1 1858,1530.7 1861.7,1558 1865.4,1556.1 1869.1,1547.3 1872.8,1541.7 1876.5,1544.7 1880.2,1520.3 1883.9,1528.9 1887.6,1557.5 1891.3,1549.6 1895,1531.9 1898.7,1524.2 1902.4,1540.5 1906.1,1539.6 1909.8,1522.3 1913.5,1538.1 1917.2,1540.5 1920.9,1543.3 1924.6,1557.5 1928.3,1524.2 1932,1540.3 1935.7,1522.9 1939.5,1558.4 1943.2,1550.6 1946.9,1551.2 1950.6,1557.1 1954.3,1555.8 1958,1541.3 1961.7,1547.7 1965.4,1534.2 1969.1,1541.6 1972.8,1526.1 1976.5,1528.2 1980.2,1552.4 1983.9,1529.6 1987.6,1547 1991.3,1554.7 1995,1545.4 1998.7,1523.2 2002.4,1554.6 2006.1,1541.5 2009.8,1534 2013.5,1558.5 2017.2,1545.4 2021,1521.7 2024.7,1522.8 2028.4,1557.9 2032.1,1520 2035.8,1543.8 2039.5,1544.5 2043.2,1554.8 2046.9,1529.6 2050.6,1541.4 2054.3,1551.5 2058,1532.6 2061.7,1529.8 2065.4,1534.6 2069.1,1541.9 2072.8,1539.9 2076.5,1551 2080.2,1540.8 2083.9,1521.8 2087.6,1548.9 2091.3,1528.8 2095,1550.7 2098.7,1539.3 2102.5,1550.3 2106.2,1539.3 2109.9,1551 2113.6,1557.6 2117.3,1556.9 2121,1539.7 2124.7,1540.3 2128.4,1537 2132.1,1544.7 2135.8,1524.6 2139.5,1544.8 2143.2,1531 2146.9,1542.7 2150.6,1520.6 2154.3,1552.7 2158,1524.6 2161.7,1553.8 2165.4,1521.6 2169.1,1524.7 2172.8,1536.2 2176.5,1557.4 2180.3,1543.3 2184,1544.1 2187.7,1540.3 2191.4,1550.5 2195.1,1537.1 2198.8,1550.5 2202.5,1537 2206.2,1541.9 2209.9,1532.1 2213.6,1556.5 2217.3,1539.6 2221,1552.9 2224.7,1522.6 2228.4,1521.7 2232.1,1537.9 2235.8,1549.6 2239.5,1536.6 2243.2,1553.3 2246.9,1554.1 2250.6,1556.1 2254.3,1537.2 2258,1550.8 2261.8,1537 2265.5,1550.9 2269.2,1551.7 2272.9,1553.2 2276.6,1542.6 2280.3,1553.1 2284,1544.8 2287.7,1548.3 2291.4,1552.8 2295.1,1552.4 2298.8,1540.9 2302.5,1543.2 2306.2,1529.3 2309.9,1537 2313.6,1537.4 2317.3,1553.5 2321,1528.4 2324.7,1545.4 2328.4,1522.8 2332.1,1547.6 2335.8,1547 2339.5,1550.5 2343.3,1539.9 2347,1544.8 2350.7,1557.2 2354.4,1550.4 2358.1,1536.1 2361.8,1544.7 2365.5,1554.5 2369.2,1553.1 2372.9,1539.4 2376.6,1554.1 2380.3,1550 2384,1521.6 2384,1578.3" fill="#5b7fd0" fill-opacity="0.5"/>
<polyline points="1498.6,1527.1 1502.3,1554.5 1506,1530 1509.7,1557 1513.4,1555.9 1517.1,1542.8 1520.8,1541.5 1524.5,1543.7 1528.2,1557.1 1531.9,1521.8 1535.7,1548.7 1539.4,1549.6 1543.1,1545.9 1546.8,1547 1550.5,1544.1 1554.2,1540.4 1557.9,1551.6 1561.6,1527.3 1565.3,1522.8 1569,1532.6 1572.7,1531.7 1576.4,1541.3 1580.1,1557.2 1583.8,1556.4 1587.5,1548.7 1591.2,1557.8 1594.9,1551.6 1598.6,1551.7 1602.3,1546.6 1606,1546.5 1609.7,1558.1 1613.4,1546.9 1617.2,1555.8 1620.9,1527.8 1624.6,1551.9 1628.3,1538.7 1632,1540.6 1635.7,1546.8 1639.4,1553.5 1643.1,1535.9 1646.8,1526.2 1650.5,1550.7 1654.2,1531.9 1657.9,1537.4 1661.6,1534.3 1665.3,1542 1669,1551.5 1672.7,1547 1676.4,1556.4 1680.1,1548 1683.8,1553.4 1687.5,1548.2 1691.2,1521.6 1694.9,1553.4 1698.7,1540.6 1702.4,1519.9 1706.1,1542.4 1709.8,1553.4 1713.5,1550.1 1717.2,1546.7 1720.9,1552.6 1724.6,1550.5 1728.3,1553 1732,1554.9 1735.7,1544.4 1739.4,1538.8 1743.1,1550.1 1746.8,1553.8 1750.5,1524.2 1754.2,1524.5 1757.9,1537.1 1761.6,1549.6 1765.3,1526.5 1769,1522.9 1772.7,1538.5 1776.4,1527.5 1780.2,1556.9 1783.9,1539 1787.6,1555.4 1791.3,1554.8 1795,1544.8 1798.7,1556.6 1802.4,1542.8 1806.1,1546.7 1809.8,1549.7 1813.5,1557.4 1817.2,1558.3 1820.9,1545 1824.6,1552.4 1828.3,1539.8 1832,1549.2 1835.7,1544.9 1839.4,1546.6 1843.1,1555.5 1846.8,1536.6 1850.5,1553 1854.2,1548.1 1858,1530.7 1861.7,1558 1865.4,1556.1 1869.1,1547.3 1872.8,1541.7 1876.5,1544.7 1880.2,1520.3 1883.9,1528.9 1887.6,1557.5 1891.3,1549.6 1895,1531.9 1898.7,1524.2 1902.4,1540.5 1906.1,1539.6 1909.8,1522.3 1913.5,1538.1 1917.2,1540.5 1920.9,1543.3 1924.6,1557.5 1928.3,1524.2 1932,1540.3 1935.7,1522.9 1939.5,1558.4 1943.2,1550.6 1946.9,1551.2 1950.6,1557.1 1954.3,1555.8 1958,1541.3 1961.7,1547.7 1965.4,1534.2 1969.1,1541.6 1972.8,1526.1 1976.5,1528.2 1980.2,1552.4 1983.9,1529.6 1987.6,1547 1991.3,1554.7 1995,1545.4 1998.7,1523.2 2002.4,1554.6 2006.1,1541.5 2009.8,1534 2013.5,1558.5 2017.2,1545.4 2021,1521.7 2024.7,1522.8 2028.4,1557.9 2032.1,1520 2035.8,1543.8 2039.5,1544.5 2043.2,1554.8 2046.9,1529.6 2050.6,1541.4 2054.3,1551.5 2058,1532.6 2061.7,1529.8 2065.4,1534.6 2069.1,1541.9 2072.8,1539.9 2076.5,1551 2080.2,1540.8 2083.9,1521.8 2087.6,1548.9 2091.3,1528.8 2095,1550.7 2098.7,1539.3 2102.5,1550.3 2106.2,1539.3 2109.9,1551 2113.6,1557.6 2117.3,1556.9 2121,1539.7 2124.7,1540.3 2128.4,1537 2132.1,1544.7 2135.8,1524.6 2139.5,1544.8 2143.2,1531 2146.9,1542.7 2150.6,1520.6 2154.3,1552.7 2158,1524.6 2161.7,1553.8 2165.4,1521.6 2169.1,1524.7 2172.8,1536.2 2176.5,1557.4 2180.3,1543.3 2184,1544.1 2187.7,1540.3 2191.4,1550.5 2195.1,1537.1 2198.8,1550.5 2202.5,1537 2206.2,1541.9 2209.9,1532.1 2213.6,1556.5 2217.3,1539.6 2221,1552.9 2224.7,1522.6 2228.4,1521.7 2232.1,1537.9 2235.8,1549.6 2239.5,1536.6 2243.2,1553.3 2246.9,1554.1 2250.6,1556.1 2254.3,1537.2 2258,1550.8 2261.8,1537 2265.5,1550.9 2269.2,1551.7 2272.9,1553.2 2276.6,1542.6 2280.3,1553.1 2284,1544.8 2287.7,1548.3 2291.4,1552.8 2295.1,1552.4 2298.8,1540.9 2302.5,1543.2 2306.2,1529.3 2309.9,1537 2313.6,1537.4 2317.3,1553.5 2321,1528.4 2324.7,1545.4 2328.4,1522.8 2332.1,1547.6 2335.8,1547 2339.5,1550.5 2343.3,1539.9 2347,1544.8 2350.7,1557.2 2354.4,1550.4 2358.1,1536.1 2361.8,1544.7 2365.5,1554.5 2369.2,1553.1 2372.9,1539.4 2376.6,1554.1 2380.3,1550 2384,1521.6" fill="none" stroke="#5b7fd0" stroke-width="3.7" stroke-linejoin="bevel" stroke-opacity="0.35"/>
<polygon points="1498.6,1578.3 1498.6,1561 1502.3,1558.6 1506,1565.1 1509.7,1547.1 1513.4,1560.3 1517.1,1559.5 1520.8,1563.1 1524.5,1563.1 1528.2,1562 1531.9,1556.9 1535.7,1564.2 1539.4,1564.9 1543.1,1562 1546.8,1561.6 1550.5,1558.4 1554.2,1560.5 1557.9,1563.7 1561.6,1562.1 1565.3,1561.8 1569,1557.6 1572.7,1563.1 1576.4,1555.6 1580.1,1563.5 1583.8,1559.9 1587.5,1565.4 1591.2,1565.4 1594.9,1563.7 1598.6,1558.1 1602.3,1563.3 1606,1555.4 1609.7,1557.2 1613.4,1535.9 1617.2,1566.7 1620.9,1565.3 1624.6,1537.5 1628.3,1564.5 1632,1557 1635.7,1564.4 1639.4,1556.3 1643.1,1560.6 1646.8,1562.6 1650.5,1564.5 1654.2,1561.3 1657.9,1564.3 1661.6,1551.9 1665.3,1562.8 1669,1557 1672.7,1539.9 1676.4,1558.2 1680.1,1564.4 1683.8,1561.3 1687.5,1564 1691.2,1559.9 1694.9,1555.8 1698.7,1564.1 1702.4,1558.5 1706.1,1565.2 1709.8,1560.6 1713.5,1565.8 1717.2,1560.1 1720.9,1555.6 1724.6,1548.3 1728.3,1558.8 1732,1555.5 1735.7,1555.5 1739.4,1561.4 1743.1,1556 1746.8,1560.9 1750.5,1560.9 1754.2,1555.7 1757.9,1555.6 1761.6,1563.6 1765.3,1559.3 1769,1564.7 1772.7,1558.1 1776.4,1559.3 1780.2,1562.7 1783.9,1566.4 1787.6,1557 1791.3,1557.8 1795,1565.6 1798.7,1555.7 1802.4,1558.6 1806.1,1566.3 1809.8,1566 1813.5,1559 1817.2,1558.6 1820.9,1556.5 1824.6,1559.2 1828.3,1564.5 1832,1564.6 1835.7,1565.3 1839.4,1564.8 1843.1,1564.3 1846.8,1565.5 1850.5,1561 1854.2,1555.7 1858,1561.1 1861.7,1562.6 1865.4,1560.6 1869.1,1561.3 1872.8,1559 1876.5,1562.5 1880.2,1546.4 1883.9,1565.6 1887.6,1559.1 1891.3,1561.8 1895,1555.5 1898.7,1566.8 1902.4,1556.9 1906.1,1557.5 1909.8,1555.7 1913.5,1559.7 1917.2,1564.9 1920.9,1558.6 1924.6,1542.1 1928.3,1513.5 1932,1564.4 1935.7,1561.7 1939.5,1561 1943.2,1566.4 1946.9,1555.7 1950.6,1557.8 1954.3,1560.6 1958,1556.7 1961.7,1558.6 1965.4,1556.3 1969.1,1539.8 1972.8,1556 1976.5,1557.6 1980.2,1564 1983.9,1530.3 1987.6,1565.8 1991.3,1560.3 1995,1557.4 1998.7,1555.8 2002.4,1564.4 2006.1,1561.8 2009.8,1564.5 2013.5,1559.7 2017.2,1561.3 2021,1561.3 2024.7,1561.1 2028.4,1556.4 2032.1,1556.1 2035.8,1535.1 2039.5,1563.5 2043.2,1560.9 2046.9,1563.1 2050.6,1558.1 2054.3,1562.1 2058,1558.7 2061.7,1549.9 2065.4,1561.7 2069.1,1558.5 2072.8,1561.2 2076.5,1565.4 2080.2,1563.3 2083.9,1555.5 2087.6,1549.7 2091.3,1556.7 2095,1566 2098.7,1556.2 2102.5,1557.4 2106.2,1565.5 2109.9,1553.1 2113.6,1549.2 2117.3,1562.7 2121,1556.7 2124.7,1547 2128.4,1556.5 2132.1,1566.2 2135.8,1560 2139.5,1557.7 2143.2,1564.2 2146.9,1549.7 2150.6,1555.6 2154.3,1557.2 2158,1565.6 2161.7,1559 2165.4,1563.2 2169.1,1565.4 2172.8,1562.5 2176.5,1559.7 2180.3,1563.5 2184,1556 2187.7,1562.2 2191.4,1558 2195.1,1557.4 2198.8,1557.6 2202.5,1555.3 2206.2,1562 2209.9,1564.9 2213.6,1558.6 2217.3,1561.4 2221,1565.5 2224.7,1564.2 2228.4,1560.4 2232.1,1560 2235.8,1566.2 2239.5,1557.4 2243.2,1558.6 2246.9,1559.3 2250.6,1557.7 2254.3,1563.8 2258,1556.2 2261.8,1563.1 2265.5,1564 2269.2,1534.8 2272.9,1559.5 2276.6,1494.4 2280.3,1561.9 2284,1559.7 2287.7,1559.4 2291.4,1550.3 2295.1,1562.7 2298.8,1563.9 2302.5,1536.5 2306.2,1553.7 2309.9,1556.5 2313.6,1565.1 2317.3,1558 2321,1556 2324.7,1555.8 2328.4,1557.1 2332.1,1561.2 2335.8,1560.3 2339.5,1558.1 2343.3,1555.8 2347,1565.8 2350.7,1560 2354.4,1566.6 2358.1,1543.5 2361.8,1560.2 2365.5,1557.3 2369.2,1559.1 2372.9,1564.7 2376.6,1566.7 2380.3,1556.3 2384,1555.9 2384,1578.3" fill="#d35cf0" fill-opacity="0.5"/>
<polyline points="1498.6,1561 1502.3,1558.6 1506,1565.1 1509.7,1547.1 1513.4,1560.3 1517.1,1559.5 1520.8,1563.1 1524.5,1563.1 1528.2,1562 1531.9,1556.9 1535.7,1564.2 1539.4,1564.9 1543.1,1562 1546.8,1561.6 1550.5,1558.4 1554.2,1560.5 1557.9,1563.7 1561.6,1562.1 1565.3,1561.8 1569,1557.6 1572.7,1563.1 1576.4,1555.6 1580.1,1563.5 1583.8,1559.9 1587.5,1565.4 1591.2,1565.4 1594.9,1563.7 1598.6,1558.1 1602.3,1563.3 1606,1555.4 1609.7,1557.2 1613.4,1535.9 1617.2,1566.7 1620.9,1565.3 1624.6,1537.5 1628.3,1564.5 1632,1557 1635.7,1564.4 1639.4,1556.3 1643.1,1560.6 1646.8,1562.6 1650.5,1564.5 1654.2,1561.3 1657.9,1564.3 1661.6,1551.9 1665.3,1562.8 1669,1557 1672.7,1539.9 1676.4,1558.2 1680.1,1564.4 1683.8,1561.3 1687.5,1564 1691.2,1559.9 1694.9,1555.8 1698.7,1564.1 1702.4,1558.5 1706.1,1565.2 1709.8,1560.6 1713.5,1565.8 1717.2,1560.1 1720.9,1555.6 1724.6,1548.3 1728.3,1558.8 1732,1555.5 1735.7,1555.5 1739.4,1561.4 1743.1,1556 1746.8,1560.9 1750.5,1560.9 1754.2,1555.7 1757.9,1555.6 1761.6,1563.6 1765.3,1559.3 1769,1564.7 1772.7,1558.1 1776.4,1559.3 1780.2,1562.7 1783.9,1566.4 1787.6,1557 1791.3,1557.8 1795,1565.6 1798.7,1555.7 1802.4,1558.6 1806.1,1566.3 1809.8,1566 1813.5,1559 1817.2,1558.6 1820.9,1556.5 1824.6,1559.2 1828.3,1564.5 1832,1564.6 1835.7,1565.3 1839.4,1564.8 1843.1,1564.3 1846.8,1565.5 1850.5,1561 1854.2,1555.7 1858,1561.1 1861.7,1562.6 1865.4,1560.6 1869.1,1561.3 1872.8,1559 1876.5,1562.5 1880.2,1546.4 1883.9,1565.6 1887.6,1559.1 1891.3,1561.8 1895,1555.5 1898.7,1566.8 1902.4,1556.9 1906.1,1557.5 1909.8,1555.7 1913.5,1559.7 1917.2,1564.9 1920.9,1558.6 1924.6,1542.1 1928.3,1513.5 1932,1564.4 1935.7,1561.7 1939.5,1561 1943.2,1566.4 1946.9,1555.7 1950.6,1557.8 1954.3,1560.6 1958,1556.7 1961.7,1558.6 1965.4,1556.3 1969.1,1539.8 1972.8,1556 1976.5,1557.6 1980.2,1564 1983.9,1530.3 1987.6,1565.8 1991.3,1560.3 1995,1557.4 1998.7,1555.8 2002.4,1564.4 2006.1,1561.8 2009.8,1564.5 2013.5,1559.7 2017.2,1561.3 2021,1561.3 2024.7,1561.1 2028.4,1556.4 2032.1,1556.1 2035.8,1535.1 2039.5,1563.5 2043.2,1560.9 2046.9,1563.1 2050.6,1558.1 2054.3,1562.1 2058,1558.7 2061.7,1549.9 2065.4,1561.7 2069.1,1558.5 2072.8,1561.2 2076.5,1565.4 2080.2,1563.3 2083.9,1555.5 2087.6,1549.7 2091.3,1556.7 2095,1566 2098.7,1556.2 2102.5,1557.4 2106.2,1565.5 2109.9,1553.1 2113.6,1549.2 2117.3,1562.7 2121,1556.7 2124.7,1547 2128.4,1556.5 2132.1,1566.2 2135.8,1560 2139.5,1557.7 2143.2,1564.2 2146.9,1549.7 2150.6,1555.6 2154.3,1557.2 2158,1565.6 2161.7,1559 2165.4,1563.2 2169.1,1565.4 2172.8,1562.5 2176.5,1559.7 2180.3,1563.5 2184,1556 2187.7,1562.2 2191.4,1558 2195.1,1557.4 2198.8,1557.6 2202.5,1555.3 2206.2,1562 2209.9,1564.9 2213.6,1558.6 2217.3,1561.4 2221,1565.5 2224.7,1564.2 2228.4,1560.4 2232.1,1560 2235.8,1566.2 2239.5,1557.4 2243.2,1558.6 2246.9,1559.3 2250.6,1557.7 2254.3,1563.8 2258,1556.2 2261.8,1563.1 2265.5,1564 2269.2,1534.8 2272.9,1559.5 2276.6,1494.4 2280.3,1561.9 2284,1559.7 2287.7,1559.4 2291.4,1550.3 2295.1,1562.7 2298.8,1563.9 2302.5,1536.5 2306.2,1553.7 2309.9,1556.5 2313.6,1565.1 2317.3,1558 2321,1556 2324.7,1555.8 2328.4,1557.1 2332.1,1561.2 2335.8,1560.3 2339.5,1558.1 2343.3,1555.8 2347,1565.8 2350.7,1560 2354.4,1566.6 2358.1,1543.5 2361.8,1560.2 2365.5,1557.3 2369.2,1559.1 2372.9,1564.7 2376.6,1566.7 2380.3,1556.3 2384,1555.9" fill="none" stroke="#d35cf0" stroke-width="3.7" stroke-linejoin="bevel" stroke-opacity="0.35"/>
<polygon points="1498.6,1578.3 1498.6,1545.6 1502.3,1554.9 1506,1527.7 1509.7,1524.1 1513.4,1544.6 1517.1,1539.7 1520.8,1550.2 1524.5,1541.1 1528.2,1544.9 1531.9,1548.3 1535.7,1536.5 1539.4,1549.1 1543.1,1522.8 1546.8,1535.2 1550.5,1556 1554.2,1547.6 1557.9,1543.1 1561.6,1538 1565.3,1538.5 1569,1542.6 1572.7,1538.3 1576.4,1541.4 1580.1,1517.4 1583.8,1520.2 1587.5,1521 1591.2,1545.4 1594.9,1551.2 1598.6,1536.8 1602.3,1543.8 1606,1528.1 1609.7,1538.1 1613.4,1552.2 1617.2,1539.4 1620.9,1539.8 1624.6,1541.8 1628.3,1553.6 1632,1545.9 1635.7,1541.6 1639.4,1538.7 1643.1,1535.8 1646.8,1542.5 1650.5,1539 1654.2,1547 1657.9,1519.4 1661.6,1551.7 1665.3,1550.3 1669,1545.1 1672.7,1544.5 1676.4,1522.8 1680.1,1540.9 1683.8,1553.2 1687.5,1542.9 1691.2,1554.9 1694.9,1544.3 1698.7,1548.8 1702.4,1523.5 1706.1,1545.5 1709.8,1539.9 1713.5,1541.3 1717.2,1538.4 1720.9,1548.7 1724.6,1518.2 1728.3,1554.7 1732,1554.5 1735.7,1543.9 1739.4,1539.2 1743.1,1535.3 1746.8,1537.3 1750.5,1521.7 1754.2,1543 1757.9,1535.3 1761.6,1549.8 1765.3,1553.2 1769,1516.7 1772.7,1549.4 1776.4,1553.5 1780.2,1538.8 1783.9,1531.6 1787.6,1547.2 1791.3,1553 1795,1522.7 1798.7,1531.6 1802.4,1543.8 1806.1,1553.3 1809.8,1536.5 1813.5,1538.1 1817.2,1531.5 1820.9,1542.2 1824.6,1547.3 1828.3,1539.2 1832,1545.2 1835.7,1553 1839.4,1551.6 1843.1,1535.2 1846.8,1541 1850.5,1546.7 1854.2,1546.5 1858,1541.3 1861.7,1551 1865.4,1520.8 1869.1,1551.7 1872.8,1548.4 1876.5,1536.4 1880.2,1553.6 1883.9,1532.2 1887.6,1536.3 1891.3,1555.8 1895,1536.3 1898.7,1554.8 1902.4,1551.5 1906.1,1536.2 1909.8,1547.5 1913.5,1537.5 1917.2,1525.2 1920.9,1538 1924.6,1523.7 1928.3,1536 1932,1538.4 1935.7,1554 1939.5,1535.4 1943.2,1535.4 1946.9,1548.2 1950.6,1552.8 1954.3,1540.2 1958,1546.5 1961.7,1547.4 1965.4,1550.5 1969.1,1544.1 1972.8,1541.3 1976.5,1535.4 1980.2,1553.3 1983.9,1529.7 1987.6,1519.1 1991.3,1522.5 1995,1540.2 1998.7,1519 2002.4,1549.9 2006.1,1548.1 2009.8,1535.5 2013.5,1535.2 2017.2,1555.2 2021,1538.8 2024.7,1552.7 2028.4,1556.1 2032.1,1552.9 2035.8,1531.4 2039.5,1551.6 2043.2,1524.3 2046.9,1549.3 2050.6,1550.9 2054.3,1549.8 2058,1548.7 2061.7,1521.3 2065.4,1545.7 2069.1,1540.7 2072.8,1555.2 2076.5,1523.8 2080.2,1544 2083.9,1555 2087.6,1527.8 2091.3,1553.8 2095,1551.2 2098.7,1532.4 2102.5,1547.1 2106.2,1550.5 2109.9,1542.6 2113.6,1549.9 2117.3,1538.1 2121,1550 2124.7,1536.7 2128.4,1520.7 2132.1,1519.5 2135.8,1546.4 2139.5,1545.7 2143.2,1549.4 2146.9,1538.9 2150.6,1540.9 2154.3,1540.5 2158,1549.3 2161.7,1551.9 2165.4,1546.5 2169.1,1553.2 2172.8,1549.7 2176.5,1543.3 2180.3,1541.7 2184,1542.5 2187.7,1539 2191.4,1543.8 2195.1,1536.6 2198.8,1517.1 2202.5,1544.2 2206.2,1484.8 2209.9,1520.6 2213.6,1540.6 2217.3,1548.5 2221,1540.3 2224.7,1543.2 2228.4,1536.8 2232.1,1541.6 2235.8,1537 2239.5,1537 2243.2,1544.1 2246.9,1519.9 2250.6,1545.1 2254.3,1550.1 2258,1549 2261.8,1521.4 2265.5,1536.8 2269.2,1539 2272.9,1548.8 2276.6,1541.5 2280.3,1543.8 2284,1544.4 2287.7,1542.4 2291.4,1555.9 2295.1,1460.8 2298.8,1496.8 2302.5,1531.3 2306.2,1544.6 2309.9,1552.2 2313.6,1524.2 2317.3,1542.3 2321,1555.9 2324.7,1536.2 2328.4,1549.7 2332.1,1545.7 2335.8,1531.9 2339.5,1546 2343.3,1540.5 2347,1535.9 2350.7,1537.3 2354.4,1549.4 2358.1,1549.6 2361.8,1537.9 2365.5,1518.3 2369.2,1548.9 2372.9,1547.7 2376.6,1523.9 2380.3,1549.7 2384,1550.1 2384,1578.3" fill="#9584dc" fill-opacity="0.5"/>
<polyline points="1498.6,1545.6 1502.3,1554.9 1506,1527.7 1509.7,1524.1 1513.4,1544.6 1517.1,1539.7 1520.8,1550.2 1524.5,1541.1 1528.2,1544.9 1531.9,1548.3 1535.7,1536.5 1539.4,1549.1 1543.1,1522.8 1546.8,1535.2 1550.5,1556 1554.2,1547.6 1557.9,1543.1 1561.6,1538 1565.3,1538.5 1569,1542.6 1572.7,1538.3 1576.4,1541.4 1580.1,1517.4 1583.8,1520.2 1587.5,1521 1591.2,1545.4 1594.9,1551.2 1598.6,1536.8 1602.3,1543.8 1606,1528.1 1609.7,1538.1 1613.4,1552.2 1617.2,1539.4 1620.9,1539.8 1624.6,1541.8 1628.3,1553.6 1632,1545.9 1635.7,1541.6 1639.4,1538.7 1643.1,1535.8 1646.8,1542.5 1650.5,1539 1654.2,1547 1657.9,1519.4 1661.6,1551.7 1665.3,1550.3 1669,1545.1 1672.7,1544.5 1676.4,1522.8 1680.1,1540.9 1683.8,1553.2 1687.5,1542.9 1691.2,1554.9 1694.9,1544.3 1698.7,1548.8 1702.4,1523.5 1706.1,1545.5 1709.8,1539.9 1713.5,1541.3 1717.2,1538.4 1720.9,1548.7 1724.6,1518.2 1728.3,1554.7 1732,1554.5 1735.7,1543.9 1739.4,1539.2 1743.1,1535.3 1746.8,1537.3 1750.5,1521.7 1754.2,1543 1757.9,1535.3 1761.6,1549.8 1765.3,1553.2 1769,1516.7 1772.7,1549.4 1776.4,1553.5 1780.2,1538.8 1783.9,1531.6 1787.6,1547.2 1791.3,1553 1795,1522.7 1798.7,1531.6 1802.4,1543.8 1806.1,1553.3 1809.8,1536.5 1813.5,1538.1 1817.2,1531.5 1820.9,1542.2 1824.6,1547.3 1828.3,1539.2 1832,1545.2 1835.7,1553 1839.4,1551.6 1843.1,1535.2 1846.8,1541 1850.5,1546.7 1854.2,1546.5 1858,1541.3 1861.7,1551 1865.4,1520.8 1869.1,1551.7 1872.8,1548.4 1876.5,1536.4 1880.2,1553.6 1883.9,1532.2 1887.6,1536.3 1891.3,1555.8 1895,1536.3 1898.7,1554.8 1902.4,1551.5 1906.1,1536.2 1909.8,1547.5 1913.5,1537.5 1917.2,1525.2 1920.9,1538 1924.6,1523.7 1928.3,1536 1932,1538.4 1935.7,1554 1939.5,1535.4 1943.2,1535.4 1946.9,1548.2 1950.6,1552.8 1954.3,1540.2 1958,1546.5 1961.7,1547.4 1965.4,1550.5 1969.1,1544.1 1972.8,1541.3 1976.5,1535.4 1980.2,1553.3 1983.9,1529.7 1987.6,1519.1 1991.3,1522.5 1995,1540.2 1998.7,1519 2002.4,1549.9 2006.1,1548.1 2009.8,1535.5 2013.5,1535.2 2017.2,1555.2 2021,1538.8 2024.7,1552.7 2028.4,1556.1 2032.1,1552.9 2035.8,1531.4 2039.5,1551.6 2043.2,1524.3 2046.9,1549.3 2050.6,1550.9 2054.3,1549.8 2058,1548.7 2061.7,1521.3 2065.4,1545.7 2069.1,1540.7 2072.8,1555.2 2076.5,1523.8 2080.2,1544 2083.9,1555 2087.6,1527.8 2091.3,1553.8 2095,1551.2 2098.7,1532.4 2102.5,1547.1 2106.2,1550.5 2109.9,1542.6 2113.6,1549.9 2117.3,1538.1 2121,1550 2124.7,1536.7 2128.4,1520.7 2132.1,1519.5 2135.8,1546.4 2139.5,1545.7 2143.2,1549.4 2146.9,1538.9 2150.6,1540.9 2154.3,1540.5 2158,1549.3 2161.7,1551.9 2165.4,1546.5 2169.1,1553.2 2172.8,1549.7 2176.5,1543.3 2180.3,1541.7 2184,1542.5 2187.7,1539 2191.4,1543.8 2195.1,1536.6 2198.8,1517.1 2202.5,1544.2 2206.2,1484.8 2209.9,1520.6 2213.6,1540.6 2217.3,1548.5 2221,1540.3 2224.7,1543.2 2228.4,1536.8 2232.1,1541.6 2235.8,1537 2239.5,1537 2243.2,1544.1 2246.9,1519.9 2250.6,1545.1 2254.3,1550.1 2258,1549 2261.8,1521.4 2265.5,1536.8 2269.2,1539 2272.9,1548.8 2276.6,1541.5 2280.3,1543.8 2284,1544.4 2287.7,1542.4 2291.4,1555.9 2295.1,1460.8 2298.8,1496.8 2302.5,1531.3 2306.2,1544.6 2309.9,1552.2 2313.6,1524.2 2317.3,1542.3 2321,1555.9 2324.7,1536.2 2328.4,1549.7 2332.1,1545.7 2335.8,1531.9 2339.5,1546 2343.3,1540.5 2347,1535.9 2350.7,1537.3 2354.4,1549.4 2358.1,1549.6 2361.8,1537.9 2365.5,1518.3 2369.2,1548.9 2372.9,1547.7 2376.6,1523.9 2380.3,1549.7 2384,1550.1" fill="none" stroke="#9584dc" stroke-width="3.7" stroke-linejoin="bevel" stroke-opacity="0.35"/>
<polygon points="1498.6,1578.3 1498.6,1563.3 1502.3,1565.4 1506,1565.4 1509.7,1564.9 1513.4,1563.8 1517.1,1563.4 1520.8,1566.9 1524.5,1566.9 1528.2,1559.5 1531.9,1563.8 1535.7,1566.1 1539.4,1563.2 1543.1,1564.6 1546.8,1565.8 1550.5,1564.4 1554.2,1565.9 1557.9,1565 1561.6,1564.5 1565.3,1564.2 1569,1564.7 1572.7,1565.8 1576.4,1563.3 1580.1,1565 1583.8,1566.1 1587.5,1565.3 1591.2,1565.8 1594.9,1563.4 1598.6,1566.5 1602.3,1566.9 1606,1567 1609.7,1566.5 1613.4,1565.7 1617.2,1563.1 1620.9,1565.3 1624.6,1567.2 1628.3,1564.7 1632,1567.9 1635.7,1567.5 1639.4,1565.3 1643.1,1564.1 1646.8,1568 1650.5,1565.5 1654.2,1563.8 1657.9,1563.7 1661.6,1564.4 1665.3,1567.6 1669,1567.1 1672.7,1568.5 1676.4,1563.1 1680.1,1566.9 1683.8,1567.6 1687.5,1563.3 1691.2,1568.4 1694.9,1563.7 1698.7,1563.5 1702.4,1559.4 1706.1,1563.4 1709.8,1568.6 1713.5,1563 1717.2,1566.7 1720.9,1566 1724.6,1563.3 1728.3,1567.6 1732,1567.7 1735.7,1568.7 1739.4,1563 1743.1,1563.2 1746.8,1564.5 1750.5,1564.2 1754.2,1567.3 1757.9,1566 1761.6,1563.4 1765.3,1567.2 1769,1567.7 1772.7,1564 1776.4,1568.4 1780.2,1567.9 1783.9,1566.8 1787.6,1564.4 1791.3,1568.2 1795,1567.8 1798.7,1564.1 1802.4,1565.5 1806.1,1563.9 1809.8,1563.6 1813.5,1560.7 1817.2,1565 1820.9,1565.1 1824.6,1567.9 1828.3,1567.1 1832,1565.8 1835.7,1566.5 1839.4,1567.7 1843.1,1566.4 1846.8,1563.1 1850.5,1568.2 1854.2,1568.3 1858,1567.9 1861.7,1555.8 1865.4,1564 1869.1,1563.3 1872.8,1566.2 1876.5,1568.4 1880.2,1566.1 1883.9,1565 1887.6,1564.7 1891.3,1568.5 1895,1567.6 1898.7,1568.1 1902.4,1568.7 1906.1,1566 1909.8,1566.1 1913.5,1566.4 1917.2,1564.1 1920.9,1565.6 1924.6,1566.3 1928.3,1564.2 1932,1566.3 1935.7,1566.9 1939.5,1563 1943.2,1564.2 1946.9,1567.7 1950.6,1566.9 1954.3,1564.4 1958,1566.8 1961.7,1568.1 1965.4,1568.7 1969.1,1565.9 1972.8,1567.8 1976.5,1566.9 1980.2,1563.7 1983.9,1565.5 1987.6,1563.3 1991.3,1565.6 1995,1566.1 1998.7,1563.4 2002.4,1563 2006.1,1567.4 2009.8,1568.5 2013.5,1564.1 2017.2,1567.6 2021,1568.7 2024.7,1566.2 2028.4,1563.8 2032.1,1568 2035.8,1563.3 2039.5,1568.3 2043.2,1563.2 2046.9,1566.2 2050.6,1566.5 2054.3,1566.8 2058,1568.2 2061.7,1567.6 2065.4,1564.8 2069.1,1567.3 2072.8,1563.4 2076.5,1568.4 2080.2,1565.7 2083.9,1566.7 2087.6,1564.4 2091.3,1566.1 2095,1565.7 2098.7,1566.3 2102.5,1563.2 2106.2,1564.2 2109.9,1567.5 2113.6,1568.5 2117.3,1566.6 2121,1566.1 2124.7,1566.9 2128.4,1568.1 2132.1,1566 2135.8,1564.4 2139.5,1567.8 2143.2,1563.8 2146.9,1564.1 2150.6,1564.6 2154.3,1564.8 2158,1565.5 2161.7,1555 2165.4,1566.5 2169.1,1564.1 2172.8,1565.1 2176.5,1566.2 2180.3,1565.4 2184,1564.9 2187.7,1565 2191.4,1568 2195.1,1567.5 2198.8,1566 2202.5,1567.2 2206.2,1563.3 2209.9,1555 2213.6,1565 2217.3,1563.1 2221,1564.9 2224.7,1568.5 2228.4,1568.1 2232.1,1568.1 2235.8,1564.9 2239.5,1564.8 2243.2,1563.9 2246.9,1563.4 2250.6,1563.7 2254.3,1565.2 2258,1567.3 2261.8,1565.7 2265.5,1560.7 2269.2,1564.8 2272.9,1564.9 2276.6,1564 2280.3,1566.6 2284,1563.6 2287.7,1567.2 2291.4,1558.6 2295.1,1564.7 2298.8,1567.3 2302.5,1564.6 2306.2,1563 2309.9,1563.2 2313.6,1568.4 2317.3,1564.1 2321,1565.4 2324.7,1568.4 2328.4,1564 2332.1,1565.4 2335.8,1568 2339.5,1555.3 2343.3,1565.6 2347,1492 2350.7,1285.7 2354.4,1482.4 2358.1,1567.7 2361.8,1567 2365.5,1564.4 2369.2,1565.6 2372.9,1564.8 2376.6,1568.3 2380.3,1563.5 2384,1568.7 2384,1578.3" fill="#dba6d4" fill-opacity="0.4"/>
<polyline points="1498.6,1563.3 1502.3,1565.4 1506,1565.4 1509.7,1564.9 1513.4,1563.8 1517.1,1563.4 1520.8,1566.9 1524.5,1566.9 1528.2,1559.5 1531.9,1563.8 1535.7,1566.1 1539.4,1563.2 1543.1,1564.6 1546.8,1565.8 1550.5,1564.4 1554.2,1565.9 1557.9,1565 1561.6,1564.5 1565.3,1564.2 1569,1564.7 1572.7,1565.8 1576.4,1563.3 1580.1,1565 1583.8,1566.1 1587.5,1565.3 1591.2,1565.8 1594.9,1563.4 1598.6,1566.5 1602.3,1566.9 1606,1567 1609.7,1566.5 1613.4,1565.7 1617.2,1563.1 1620.9,1565.3 1624.6,1567.2 1628.3,1564.7 1632,1567.9 1635.7,1567.5 1639.4,1565.3 1643.1,1564.1 1646.8,1568 1650.5,1565.5 1654.2,1563.8 1657.9,1563.7 1661.6,1564.4 1665.3,1567.6 1669,1567.1 1672.7,1568.5 1676.4,1563.1 1680.1,1566.9 1683.8,1567.6 1687.5,1563.3 1691.2,1568.4 1694.9,1563.7 1698.7,1563.5 1702.4,1559.4 1706.1,1563.4 1709.8,1568.6 1713.5,1563 1717.2,1566.7 1720.9,1566 1724.6,1563.3 1728.3,1567.6 1732,1567.7 1735.7,1568.7 1739.4,1563 1743.1,1563.2 1746.8,1564.5 1750.5,1564.2 1754.2,1567.3 1757.9,1566 1761.6,1563.4 1765.3,1567.2 1769,1567.7 1772.7,1564 1776.4,1568.4 1780.2,1567.9 1783.9,1566.8 1787.6,1564.4 1791.3,1568.2 1795,1567.8 1798.7,1564.1 1802.4,1565.5 1806.1,1563.9 1809.8,1563.6 1813.5,1560.7 1817.2,1565 1820.9,1565.1 1824.6,1567.9 1828.3,1567.1 1832,1565.8 1835.7,1566.5 1839.4,1567.7 1843.1,1566.4 1846.8,1563.1 1850.5,1568.2 1854.2,1568.3 1858,1567.9 1861.7,1555.8 1865.4,1564 1869.1,1563.3 1872.8,1566.2 1876.5,1568.4 1880.2,1566.1 1883.9,1565 1887.6,1564.7 1891.3,1568.5 1895,1567.6 1898.7,1568.1 1902.4,1568.7 1906.1,1566 1909.8,1566.1 1913.5,1566.4 1917.2,1564.1 1920.9,1565.6 1924.6,1566.3 1928.3,1564.2 1932,1566.3 1935.7,1566.9 1939.5,1563 1943.2,1564.2 1946.9,1567.7 1950.6,1566.9 1954.3,1564.4 1958,1566.8 1961.7,1568.1 1965.4,1568.7 1969.1,1565.9 1972.8,1567.8 1976.5,1566.9 1980.2,1563.7 1983.9,1565.5 1987.6,1563.3 1991.3,1565.6 1995,1566.1 1998.7,1563.4 2002.4,1563 2006.1,1567.4 2009.8,1568.5 2013.5,1564.1 2017.2,1567.6 2021,1568.7 2024.7,1566.2 2028.4,1563.8 2032.1,1568 2035.8,1563.3 2039.5,1568.3 2043.2,1563.2 2046.9,1566.2 2050.6,1566.5 2054.3,1566.8 2058,1568.2 2061.7,1567.6 2065.4,1564.8 2069.1,1567.3 2072.8,1563.4 2076.5,1568.4 2080.2,1565.7 2083.9,1566.7 2087.6,1564.4 2091.3,1566.1 2095,1565.7 2098.7,1566.3 2102.5,1563.2 2106.2,1564.2 2109.9,1567.5 2113.6,1568.5 2117.3,1566.6 2121,1566.1 2124.7,1566.9 2128.4,1568.1 2132.1,1566 2135.8,1564.4 2139.5,1567.8 2143.2,1563.8 2146.9,1564.1 2150.6,1564.6 2154.3,1564.8 2158,1565.5 2161.7,1555 2165.4,1566.5 2169.1,1564.1 2172.8,1565.1 2176.5,1566.2 2180.3,1565.4 2184,1564.9 2187.7,1565 2191.4,1568 2195.1,1567.5 2198.8,1566 2202.5,1567.2 2206.2,1563.3 2209.9,1555 2213.6,1565 2217.3,1563.1 2221,1564.9 2224.7,1568.5 2228.4,1568.1 2232.1,1568.1 2235.8,1564.9 2239.5,1564.8 2243.2,1563.9 2246.9,1563.4 2250.6,1563.7 2254.3,1565.2 2258,1567.3 2261.8,1565.7 2265.5,1560.7 2269.2,1564.8 2272.9,1564.9 2276.6,1564 2280.3,1566.6 2284,1563.6 2287.7,1567.2 2291.4,1558.6 2295.1,1564.7 2298.8,1567.3 2302.5,1564.6 2306.2,1563 2309.9,1563.2 2313.6,1568.4 2317.3,1564.1 2321,1565.4 2324.7,1568.4 2328.4,1564 2332.1,1565.4 2335.8,1568 2339.5,1555.3 2343.3,1565.6 2347,1492 2350.7,1285.7 2354.4,1482.4 2358.1,1567.7 2361.8,1567 2365.5,1564.4 2369.2,1565.6 2372.9,1564.8 2376.6,1568.3 2380.3,1563.5 2384,1568.7" fill="none" stroke="#dba6d4" stroke-width="3.7" stroke-linejoin="bevel" stroke-opacity="0.88"/>
<polygon points="1498.6,1578.3 1498.6,1556.6 1502.3,1559.2 1506,1540 1509.7,1566.4 1513.4,1552.2 1517.1,1556.2 1520.8,1564.5 1524.5,1557.3 1528.2,1566.8 1531.9,1555.8 1535.7,1559 1539.4,1530.3 1543.1,1549 1546.8,1561.7 1550.5,1553.8 1554.2,1558.8 1557.9,1552.9 1561.6,1556.5 1565.3,1549.3 1569,1555.5 1572.7,1564.2 1576.4,1554.2 1580.1,1562.9 1583.8,1561.2 1587.5,1555.9 1591.2,1560 1594.9,1557.3 1598.6,1558.3 1602.3,1556 1606,1559.6 1609.7,1566.3 1613.4,1527.9 1617.2,1562.2 1620.9,1560.2 1624.6,1555.4 1628.3,1566 1632,1555.3 1635.7,1557.5 1639.4,1554.5 1643.1,1562 1646.8,1558.4 1650.5,1558.6 1654.2,1556.4 1657.9,1565.6 1661.6,1558.8 1665.3,1566.3 1669,1559.6 1672.7,1547.8 1676.4,1559.7 1680.1,1563.9 1683.8,1557.1 1687.5,1556.8 1691.2,1538.5 1694.9,1559.3 1698.7,1566 1702.4,1565.5 1706.1,1557.3 1709.8,1556.7 1713.5,1566 1717.2,1561.4 1720.9,1558.3 1724.6,1564.6 1728.3,1563.6 1732,1562.2 1735.7,1561.8 1739.4,1565.9 1743.1,1564.4 1746.8,1523.1 1750.5,1558.9 1754.2,1562.4 1757.9,1533.6 1761.6,1553.9 1765.3,1558.1 1769,1565.2 1772.7,1563.7 1776.4,1562.5 1780.2,1565.2 1783.9,1550.3 1787.6,1563.9 1791.3,1553.5 1795,1553.7 1798.7,1555.7 1802.4,1565.4 1806.1,1561.5 1809.8,1550.2 1813.5,1557.7 1817.2,1556.9 1820.9,1558.7 1824.6,1561.1 1828.3,1559.8 1832,1548.4 1835.7,1511.1 1839.4,1554.6 1843.1,1560.4 1846.8,1567 1850.5,1558.6 1854.2,1567 1858,1564.8 1861.7,1563.9 1865.4,1554.3 1869.1,1557 1872.8,1559.1 1876.5,1555.8 1880.2,1554.2 1883.9,1556.7 1887.6,1545.1 1891.3,1562.8 1895,1555.2 1898.7,1558.6 1902.4,1553.2 1906.1,1565.7 1909.8,1564.9 1913.5,1563.5 1917.2,1553.5 1920.9,1556.1 1924.6,1556.4 1928.3,1564.9 1932,1563.5 1935.7,1554.3 1939.5,1556.6 1943.2,1560.2 1946.9,1556.2 1950.6,1564 1954.3,1556.5 1958,1563.6 1961.7,1560.4 1965.4,1555.2 1969.1,1555 1972.8,1567.2 1976.5,1566.3 1980.2,1565.2 1983.9,1554.6 1987.6,1567.1 1991.3,1557.1 1995,1556.1 1998.7,1557 2002.4,1559.7 2006.1,1559.5 2009.8,1566.3 2013.5,1511.1 2017.2,1563.2 2021,1567.1 2024.7,1553.2 2028.4,1564.3 2032.1,1557.3 2035.8,1554.8 2039.5,1548.3 2043.2,1552.9 2046.9,1563.8 2050.6,1554.6 2054.3,1555.9 2058,1561.5 2061.7,1531.7 2065.4,1553.8 2069.1,1567.1 2072.8,1555.4 2076.5,1563.7 2080.2,1557 2083.9,1558 2087.6,1554.8 2091.3,1562.7 2095,1557.5 2098.7,1561 2102.5,1527.9 2106.2,1564.5 2109.9,1565.6 2113.6,1566.7 2117.3,1566.7 2121,1557.7 2124.7,1542.8 2128.4,1554.9 2132.1,1553.3 2135.8,1555.5 2139.5,1553.1 2143.2,1557.6 2146.9,1555 2150.6,1558.5 2154.3,1548.3 2158,1558.8 2161.7,1540.4 2165.4,1566.4 2169.1,1563.5 2172.8,1565.9 2176.5,1565.2 2180.3,1559.6 2184,1564.9 2187.7,1565.3 2191.4,1562.4 2195.1,1555.5 2198.8,1556.6 2202.5,1553.1 2206.2,1558.1 2209.9,1552.8 2213.6,1540.1 2217.3,1566.5 2221,1554.8 2224.7,1565.2 2228.4,1556.9 2232.1,1544.2 2235.8,1557.3 2239.5,1553.2 2243.2,1566.1 2246.9,1558.4 2250.6,1563.7 2254.3,1555.2 2258,1559.5 2261.8,1565.1 2265.5,1537.7 2269.2,1562.8 2272.9,1563.9 2276.6,1557.7 2280.3,1563.8 2284,1559.2 2287.7,1560.4 2291.4,1547 2295.1,1565.4 2298.8,1558.1 2302.5,1542 2306.2,1560 2309.9,1564.8 2313.6,1565.8 2317.3,1555.8 2321,1554.5 2324.7,1562.6 2328.4,1554.5 2332.1,1563.1 2335.8,1561.7 2339.5,1566.9 2343.3,1562.8 2347,1554.2 2350.7,1563.5 2354.4,1565.7 2358.1,1558 2361.8,1561.7 2365.5,1565.6 2369.2,1554.2 2372.9,1566.7 2376.6,1565.5 2380.3,1567.1 2384,1563.8 2384,1578.3" fill="#66788e" fill-opacity="0.5"/>
<polyline points="1498.6,1556.6 1502.3,1559.2 1506,1540 1509.7,1566.4 1513.4,1552.2 1517.1,1556.2 1520.8,1564.5 1524.5,1557.3 1528.2,1566.8 1531.9,1555.8 1535.7,1559 1539.4,1530.3 1543.1,1549 1546.8,1561.7 1550.5,1553.8 1554.2,1558.8 1557.9,1552.9 1561.6,1556.5 1565.3,1549.3 1569,1555.5 1572.7,1564.2 1576.4,1554.2 1580.1,1562.9 1583.8,1561.2 1587.5,1555.9 1591.2,1560 1594.9,1557.3 1598.6,1558.3 1602.3,1556 1606,1559.6 1609.7,1566.3 1613.4,1527.9 1617.2,1562.2 1620.9,1560.2 1624.6,1555.4 1628.3,1566 1632,1555.3 1635.7,1557.5 1639.4,1554.5 1643.1,1562 1646.8,1558.4 1650.5,1558.6 1654.2,1556.4 1657.9,1565.6 1661.6,1558.8 1665.3,1566.3 1669,1559.6 1672.7,1547.8 1676.4,1559.7 1680.1,1563.9 1683.8,1557.1 1687.5,1556.8 1691.2,1538.5 1694.9,1559.3 1698.7,1566 1702.4,1565.5 1706.1,1557.3 1709.8,1556.7 1713.5,1566 1717.2,1561.4 1720.9,1558.3 1724.6,1564.6 1728.3,1563.6 1732,1562.2 1735.7,1561.8 1739.4,1565.9 1743.1,1564.4 1746.8,1523.1 1750.5,1558.9 1754.2,1562.4 1757.9,1533.6 1761.6,1553.9 1765.3,1558.1 1769,1565.2 1772.7,1563.7 1776.4,1562.5 1780.2,1565.2 1783.9,1550.3 1787.6,1563.9 1791.3,1553.5 1795,1553.7 1798.7,1555.7 1802.4,1565.4 1806.1,1561.5 1809.8,1550.2 1813.5,1557.7 1817.2,1556.9 1820.9,1558.7 1824.6,1561.1 1828.3,1559.8 1832,1548.4 1835.7,1511.1 1839.4,1554.6 1843.1,1560.4 1846.8,1567 1850.5,1558.6 1854.2,1567 1858,1564.8 1861.7,1563.9 1865.4,1554.3 1869.1,1557 1872.8,1559.1 1876.5,1555.8 1880.2,1554.2 1883.9,1556.7 1887.6,1545.1 1891.3,1562.8 1895,1555.2 1898.7,1558.6 1902.4,1553.2 1906.1,1565.7 1909.8,1564.9 1913.5,1563.5 1917.2,1553.5 1920.9,1556.1 1924.6,1556.4 1928.3,1564.9 1932,1563.5 1935.7,1554.3 1939.5,1556.6 1943.2,1560.2 1946.9,1556.2 1950.6,1564 1954.3,1556.5 1958,1563.6 1961.7,1560.4 1965.4,1555.2 1969.1,1555 1972.8,1567.2 1976.5,1566.3 1980.2,1565.2 1983.9,1554.6 1987.6,1567.1 1991.3,1557.1 1995,1556.1 1998.7,1557 2002.4,1559.7 2006.1,1559.5 2009.8,1566.3 2013.5,1511.1 2017.2,1563.2 2021,1567.1 2024.7,1553.2 2028.4,1564.3 2032.1,1557.3 2035.8,1554.8 2039.5,1548.3 2043.2,1552.9 2046.9,1563.8 2050.6,1554.6 2054.3,1555.9 2058,1561.5 2061.7,1531.7 2065.4,1553.8 2069.1,1567.1 2072.8,1555.4 2076.5,1563.7 2080.2,1557 2083.9,1558 2087.6,1554.8 2091.3,1562.7 2095,1557.5 2098.7,1561 2102.5,1527.9 2106.2,1564.5 2109.9,1565.6 2113.6,1566.7 2117.3,1566.7 2121,1557.7 2124.7,1542.8 2128.4,1554.9 2132.1,1553.3 2135.8,1555.5 2139.5,1553.1 2143.2,1557.6 2146.9,1555 2150.6,1558.5 2154.3,1548.3 2158,1558.8 2161.7,1540.4 2165.4,1566.4 2169.1,1563.5 2172.8,1565.9 2176.5,1565.2 2180.3,1559.6 2184,1564.9 2187.7,1565.3 2191.4,1562.4 2195.1,1555.5 2198.8,1556.6 2202.5,1553.1 2206.2,1558.1 2209.9,1552.8 2213.6,1540.1 2217.3,1566.5 2221,1554.8 2224.7,1565.2 2228.4,1556.9 2232.1,1544.2 2235.8,1557.3 2239.5,1553.2 2243.2,1566.1 2246.9,1558.4 2250.6,1563.7 2254.3,1555.2 2258,1559.5 2261.8,1565.1 2265.5,1537.7 2269.2,1562.8 2272.9,1563.9 2276.6,1557.7 2280.3,1563.8 2284,1559.2 2287.7,1560.4 2291.4,1547 2295.1,1565.4 2298.8,1558.1 2302.5,1542 2306.2,1560 2309.9,1564.8 2313.6,1565.8 2317.3,1555.8 2321,1554.5 2324.7,1562.6 2328.4,1554.5 2332.1,1563.1 2335.8,1561.7 2339.5,1566.9 2343.3,1562.8 2347,1554.2 2350.7,1563.5 2354.4,1565.7 2358.1,1558 2361.8,1561.7 2365.5,1565.6 2369.2,1554.2 2372.9,1566.7 2376.6,1565.5 2380.3,1567.1 2384,1563.8" fill="none" stroke="#66788e" stroke-width="3.7" stroke-linejoin="bevel" stroke-opacity="0.35"/>
<polygon points="1498.6,1578.3 1498.6,1562.9 1502.3,1564.8 1506,1562.3 1509.7,1563.7 1513.4,1563.4 1517.1,1561.5 1520.8,1562 1524.5,1562.8 1528.2,1564.9 1531.9,1563.4 1535.7,1563.5 1539.4,1563.7 1543.1,1563.1 1546.8,1562.4 1550.5,1562.5 1554.2,1563.3 1557.9,1562.7 1561.6,1563.9 1565.3,1563.6 1569,1563.9 1572.7,1562 1576.4,1564.2 1580.1,1561.7 1583.8,1562.2 1587.5,1564.9 1591.2,1563.3 1594.9,1564.1 1598.6,1563.2 1602.3,1561.6 1606,1564.8 1609.7,1564.4 1613.4,1563.8 1617.2,1564.2 1620.9,1562.3 1624.6,1562.8 1628.3,1562.1 1632,1565.2 1635.7,1564.2 1639.4,1563.3 1643.1,1562.3 1646.8,1562.3 1650.5,1562.5 1654.2,1564.5 1657.9,1562.1 1661.6,1561.9 1665.3,1561.7 1669,1564.6 1672.7,1565 1676.4,1562.7 1680.1,1562.8 1683.8,1565.3 1687.5,1562.9 1691.2,1564.3 1694.9,1562.9 1698.7,1565.2 1702.4,1562.8 1706.1,1561.8 1709.8,1564.9 1713.5,1563.5 1717.2,1564.9 1720.9,1563.4 1724.6,1562.5 1728.3,1565.3 1732,1563.5 1735.7,1562.8 1739.4,1563 1743.1,1563.3 1746.8,1563.5 1750.5,1561.7 1754.2,1564.6 1757.9,1565.1 1761.6,1562.3 1765.3,1562.7 1769,1563.7 1772.7,1561.8 1776.4,1563.5 1780.2,1562.8 1783.9,1562.9 1787.6,1562.1 1791.3,1563.5 1795,1563.8 1798.7,1561.8 1802.4,1563.2 1806.1,1564.1 1809.8,1563.2 1813.5,1564.7 1817.2,1563 1820.9,1562.3 1824.6,1563.2 1828.3,1565.3 1832,1565.3 1835.7,1563.7 1839.4,1562.7 1843.1,1562.8 1846.8,1564 1850.5,1564.2 1854.2,1561.7 1858,1554.9 1861.7,1565.1 1865.4,1565.1 1869.1,1562.4 1872.8,1562.9 1876.5,1561.8 1880.2,1561.6 1883.9,1565.3 1887.6,1564.9 1891.3,1563.7 1895,1557.1 1898.7,1564.5 1902.4,1561.9 1906.1,1563.8 1909.8,1564.8 1913.5,1561.7 1917.2,1562.7 1920.9,1562.7 1924.6,1564.1 1928.3,1564.5 1932,1565.2 1935.7,1565 1939.5,1565.3 1943.2,1561.9 1946.9,1562.5 1950.6,1563.7 1954.3,1564.3 1958,1563 1961.7,1563.5 1965.4,1564.6 1969.1,1563.2 1972.8,1561.6 1976.5,1562.7 1980.2,1564.2 1983.9,1564.5 1987.6,1561.7 1991.3,1564.6 1995,1564.2 1998.7,1564.3 2002.4,1561.6 2006.1,1562.5 2009.8,1562.9 2013.5,1564.9 2017.2,1563.8 2021,1563.5 2024.7,1564 2028.4,1563.9 2032.1,1561.6 2035.8,1565.1 2039.5,1562.7 2043.2,1561.8 2046.9,1562.2 2050.6,1565 2054.3,1561.5 2058,1562.9 2061.7,1564 2065.4,1563.2 2069.1,1564.1 2072.8,1564.8 2076.5,1562.9 2080.2,1564.6 2083.9,1563.6 2087.6,1562.8 2091.3,1564.5 2095,1565 2098.7,1563.5 2102.5,1561.9 2106.2,1562.1 2109.9,1562.4 2113.6,1562.2 2117.3,1563.4 2121,1565 2124.7,1563.1 2128.4,1561.9 2132.1,1561.7 2135.8,1564.7 2139.5,1561.7 2143.2,1561.7 2146.9,1564.4 2150.6,1563.3 2154.3,1562.3 2158,1556 2161.7,1562.9 2165.4,1562.7 2169.1,1563.1 2172.8,1564.8 2176.5,1563.9 2180.3,1563 2184,1561.8 2187.7,1565.2 2191.4,1565 2195.1,1561.6 2198.8,1563.3 2202.5,1564.1 2206.2,1564.7 2209.9,1563.5 2213.6,1565.2 2217.3,1565 2221,1563.2 2224.7,1564.3 2228.4,1562.1 2232.1,1561.7 2235.8,1564.1 2239.5,1564.6 2243.2,1563.9 2246.9,1563.3 2250.6,1563.8 2254.3,1562.3 2258,1562.5 2261.8,1563.9 2265.5,1563.4 2269.2,1563.5 2272.9,1563.6 2276.6,1564 2280.3,1563.5 2284,1563.4 2287.7,1565 2291.4,1562.2 2295.1,1564.4 2298.8,1563.4 2302.5,1562.3 2306.2,1556.5 2309.9,1564.4 2313.6,1562 2317.3,1563 2321,1563.2 2324.7,1555.9 2328.4,1564.5 2332.1,1564.4 2335.8,1563.7 2339.5,1564.2 2343.3,1563.6 2347,1563.8 2350.7,1564.6 2354.4,1563.8 2358.1,1565 2361.8,1564.7 2365.5,1565.3 2369.2,1561.8 2372.9,1562.1 2376.6,1564.8 2380.3,1565.2 2384,1563.2 2384,1578.3" fill="#dd566e" fill-opacity="0.5"/>
<polyline points="1498.6,1562.9 1502.3,1564.8 1506,1562.3 1509.7,1563.7 1513.4,1563.4 1517.1,1561.5 1520.8,1562 1524.5,1562.8 1528.2,1564.9 1531.9,1563.4 1535.7,1563.5 1539.4,1563.7 1543.1,1563.1 1546.8,1562.4 1550.5,1562.5 1554.2,1563.3 1557.9,1562.7 1561.6,1563.9 1565.3,1563.6 1569,1563.9 1572.7,1562 1576.4,1564.2 1580.1,1561.7 1583.8,1562.2 1587.5,1564.9 1591.2,1563.3 1594.9,1564.1 1598.6,1563.2 1602.3,1561.6 1606,1564.8 1609.7,1564.4 1613.4,1563.8 1617.2,1564.2 1620.9,1562.3 1624.6,1562.8 1628.3,1562.1 1632,1565.2 1635.7,1564.2 1639.4,1563.3 1643.1,1562.3 1646.8,1562.3 1650.5,1562.5 1654.2,1564.5 1657.9,1562.1 1661.6,1561.9 1665.3,1561.7 1669,1564.6 1672.7,1565 1676.4,1562.7 1680.1,1562.8 1683.8,1565.3 1687.5,1562.9 1691.2,1564.3 1694.9,1562.9 1698.7,1565.2 1702.4,1562.8 1706.1,1561.8 1709.8,1564.9 1713.5,1563.5 1717.2,1564.9 1720.9,1563.4 1724.6,1562.5 1728.3,1565.3 1732,1563.5 1735.7,1562.8 1739.4,1563 1743.1,1563.3 1746.8,1563.5 1750.5,1561.7 1754.2,1564.6 1757.9,1565.1 1761.6,1562.3 1765.3,1562.7 1769,1563.7 1772.7,1561.8 1776.4,1563.5 1780.2,1562.8 1783.9,1562.9 1787.6,1562.1 1791.3,1563.5 1795,1563.8 1798.7,1561.8 1802.4,1563.2 1806.1,1564.1 1809.8,1563.2 1813.5,1564.7 1817.2,1563 1820.9,1562.3 1824.6,1563.2 1828.3,1565.3 1832,1565.3 1835.7,1563.7 1839.4,1562.7 1843.1,1562.8 1846.8,1564 1850.5,1564.2 1854.2,1561.7 1858,1554.9 1861.7,1565.1 1865.4,1565.1 1869.1,1562.4 1872.8,1562.9 1876.5,1561.8 1880.2,1561.6 1883.9,1565.3 1887.6,1564.9 1891.3,1563.7 1895,1557.1 1898.7,1564.5 1902.4,1561.9 1906.1,1563.8 1909.8,1564.8 1913.5,1561.7 1917.2,1562.7 1920.9,1562.7 1924.6,1564.1 1928.3,1564.5 1932,1565.2 1935.7,1565 1939.5,1565.3 1943.2,1561.9 1946.9,1562.5 1950.6,1563.7 1954.3,1564.3 1958,1563 1961.7,1563.5 1965.4,1564.6 1969.1,1563.2 1972.8,1561.6 1976.5,1562.7 1980.2,1564.2 1983.9,1564.5 1987.6,1561.7 1991.3,1564.6 1995,1564.2 1998.7,1564.3 2002.4,1561.6 2006.1,1562.5 2009.8,1562.9 2013.5,1564.9 2017.2,1563.8 2021,1563.5 2024.7,1564 2028.4,1563.9 2032.1,1561.6 2035.8,1565.1 2039.5,1562.7 2043.2,1561.8 2046.9,1562.2 2050.6,1565 2054.3,1561.5 2058,1562.9 2061.7,1564 2065.4,1563.2 2069.1,1564.1 2072.8,1564.8 2076.5,1562.9 2080.2,1564.6 2083.9,1563.6 2087.6,1562.8 2091.3,1564.5 2095,1565 2098.7,1563.5 2102.5,1561.9 2106.2,1562.1 2109.9,1562.4 2113.6,1562.2 2117.3,1563.4 2121,1565 2124.7,1563.1 2128.4,1561.9 2132.1,1561.7 2135.8,1564.7 2139.5,1561.7 2143.2,1561.7 2146.9,1564.4 2150.6,1563.3 2154.3,1562.3 2158,1556 2161.7,1562.9 2165.4,1562.7 2169.1,1563.1 2172.8,1564.8 2176.5,1563.9 2180.3,1563 2184,1561.8 2187.7,1565.2 2191.4,1565 2195.1,1561.6 2198.8,1563.3 2202.5,1564.1 2206.2,1564.7 2209.9,1563.5 2213.6,1565.2 2217.3,1565 2221,1563.2 2224.7,1564.3 2228.4,1562.1 2232.1,1561.7 2235.8,1564.1 2239.5,1564.6 2243.2,1563.9 2246.9,1563.3 2250.6,1563.8 2254.3,1562.3 2258,1562.5 2261.8,1563.9 2265.5,1563.4 2269.2,1563.5 2272.9,1563.6 2276.6,1564 2280.3,1563.5 2284,1563.4 2287.7,1565 2291.4,1562.2 2295.1,1564.4 2298.8,1563.4 2302.5,1562.3 2306.2,1556.5 2309.9,1564.4 2313.6,1562 2317.3,1563 2321,1563.2 2324.7,1555.9 2328.4,1564.5 2332.1,1564.4 2335.8,1563.7 2339.5,1564.2 2343.3,1563.6 2347,1563.8 2350.7,1564.6 2354.4,1563.8 2358.1,1565 2361.8,1564.7 2365.5,1565.3 2369.2,1561.8 2372.9,1562.1 2376.6,1564.8 2380.3,1565.2 2384,1563.2" fill="none" stroke="#dd566e" stroke-width="3.7" stroke-linejoin="bevel" stroke-opacity="0.6"/>
<polygon points="1498.6,1578.3 1498.6,1565.6 1502.3,1567 1506,1565.4 1509.7,1566.2 1513.4,1565.4 1517.1,1567.5 1520.8,1565.5 1524.5,1565 1528.2,1565.2 1531.9,1567.4 1535.7,1564.9 1539.4,1565.9 1543.1,1566.4 1546.8,1566.8 1550.5,1565.5 1554.2,1566.9 1557.9,1566.9 1561.6,1567.4 1565.3,1565.7 1569,1567.1 1572.7,1547.1 1576.4,1566.7 1580.1,1566.2 1583.8,1566.6 1587.5,1565.1 1591.2,1565.5 1594.9,1565.4 1598.6,1567.6 1602.3,1567 1606,1565.1 1609.7,1567.1 1613.4,1566.4 1617.2,1566.5 1620.9,1566.5 1624.6,1567.1 1628.3,1567.2 1632,1566.3 1635.7,1566.3 1639.4,1567.6 1643.1,1566 1646.8,1567.5 1650.5,1565.5 1654.2,1567.7 1657.9,1565 1661.6,1549.5 1665.3,1566.4 1669,1565.5 1672.7,1564.9 1676.4,1564.9 1680.1,1564.9 1683.8,1565.1 1687.5,1567.7 1691.2,1566 1694.9,1566.1 1698.7,1565.2 1702.4,1567.3 1706.1,1566.9 1709.8,1566.4 1713.5,1565.8 1717.2,1566 1720.9,1565.3 1724.6,1565.9 1728.3,1567 1732,1565.2 1735.7,1566.4 1739.4,1565.8 1743.1,1567.7 1746.8,1532.7 1750.5,1566.6 1754.2,1565.4 1757.9,1566 1761.6,1566.2 1765.3,1566.6 1769,1566.9 1772.7,1565.9 1776.4,1566.4 1780.2,1567.1 1783.9,1567.2 1787.6,1565.8 1791.3,1567.3 1795,1551.9 1798.7,1567.4 1802.4,1565.3 1806.1,1567.4 1809.8,1566.7 1813.5,1565.9 1817.2,1566.7 1820.9,1567.3 1824.6,1567.5 1828.3,1565 1832,1565.5 1835.7,1549.5 1839.4,1566.2 1843.1,1565 1846.8,1566.5 1850.5,1565.8 1854.2,1565.8 1858,1566.9 1861.7,1566.8 1865.4,1566.6 1869.1,1566.8 1872.8,1567.4 1876.5,1566.8 1880.2,1567.3 1883.9,1556.7 1887.6,1566.2 1891.3,1566.1 1895,1565.2 1898.7,1566.3 1902.4,1565.5 1906.1,1565.5 1909.8,1567.4 1913.5,1565.6 1917.2,1566.3 1920.9,1566.7 1924.6,1567.1 1928.3,1527.9 1932,1567.6 1935.7,1566.9 1939.5,1566.4 1943.2,1565.8 1946.9,1567.5 1950.6,1567.5 1954.3,1567.5 1958,1567 1961.7,1566.9 1965.4,1566.6 1969.1,1567.5 1972.8,1567.6 1976.5,1565.9 1980.2,1565.7 1983.9,1554.3 1987.6,1566.1 1991.3,1566.7 1995,1565.4 1998.7,1567.3 2002.4,1567.1 2006.1,1565.1 2009.8,1565.1 2013.5,1547.1 2017.2,1566.1 2021,1566.8 2024.7,1566.2 2028.4,1566 2032.1,1567.7 2035.8,1566.9 2039.5,1565.6 2043.2,1566.7 2046.9,1566.1 2050.6,1566.2 2054.3,1556.7 2058,1567 2061.7,1565.1 2065.4,1567 2069.1,1565.3 2072.8,1566.1 2076.5,1566.7 2080.2,1567.7 2083.9,1564.9 2087.6,1565.9 2091.3,1566.9 2095,1567.3 2098.7,1566.1 2102.5,1539.9 2106.2,1566.4 2109.9,1564.9 2113.6,1566.7 2117.3,1566.2 2121,1565.3 2124.7,1566.2 2128.4,1565.4 2132.1,1566 2135.8,1566.5 2139.5,1565.2 2143.2,1565.8 2146.9,1566.5 2150.6,1565.9 2154.3,1566.3 2158,1567 2161.7,1565.2 2165.4,1566.7 2169.1,1566.4 2172.8,1566.4 2176.5,1566.1 2180.3,1566.8 2184,1566.8 2187.7,1544.7 2191.4,1566.1 2195.1,1565.7 2198.8,1566.3 2202.5,1565.3 2206.2,1567 2209.9,1565.5 2213.6,1567 2217.3,1565.6 2221,1567 2224.7,1567.2 2228.4,1566.6 2232.1,1566.3 2235.8,1556.7 2239.5,1565.6 2243.2,1566.9 2246.9,1565.3 2250.6,1566.7 2254.3,1567.1 2258,1566.3 2261.8,1566.7 2265.5,1567.7 2269.2,1565.6 2272.9,1547.1 2276.6,1566.2 2280.3,1567 2284,1565.9 2287.7,1567.6 2291.4,1566.1 2295.1,1554.3 2298.8,1564.9 2302.5,1565.8 2306.2,1565.8 2309.9,1566.8 2313.6,1567.3 2317.3,1567.1 2321,1554.3 2324.7,1566.3 2328.4,1567.7 2332.1,1567.7 2335.8,1567.5 2339.5,1565.3 2343.3,1566.8 2347,1539.9 2350.7,1567.4 2354.4,1567.3 2358.1,1565 2361.8,1565.7 2365.5,1535.1 2369.2,1566.2 2372.9,1567.3 2376.6,1567.4 2380.3,1549.5 2384,1567.2 2384,1578.3" fill="#93546c" fill-opacity="0.4"/>
<polyline points="1498.6,1565.6 1502.3,1567 1506,1565.4 1509.7,1566.2 1513.4,1565.4 1517.1,1567.5 1520.8,1565.5 1524.5,1565 1528.2,1565.2 1531.9,1567.4 1535.7,1564.9 1539.4,1565.9 1543.1,1566.4 1546.8,1566.8 1550.5,1565.5 1554.2,1566.9 1557.9,1566.9 1561.6,1567.4 1565.3,1565.7 1569,1567.1 1572.7,1547.1 1576.4,1566.7 1580.1,1566.2 1583.8,1566.6 1587.5,1565.1 1591.2,1565.5 1594.9,1565.4 1598.6,1567.6 1602.3,1567 1606,1565.1 1609.7,1567.1 1613.4,1566.4 1617.2,1566.5 1620.9,1566.5 1624.6,1567.1 1628.3,1567.2 1632,1566.3 1635.7,1566.3 1639.4,1567.6 1643.1,1566 1646.8,1567.5 1650.5,1565.5 1654.2,1567.7 1657.9,1565 1661.6,1549.5 1665.3,1566.4 1669,1565.5 1672.7,1564.9 1676.4,1564.9 1680.1,1564.9 1683.8,1565.1 1687.5,1567.7 1691.2,1566 1694.9,1566.1 1698.7,1565.2 1702.4,1567.3 1706.1,1566.9 1709.8,1566.4 1713.5,1565.8 1717.2,1566 1720.9,1565.3 1724.6,1565.9 1728.3,1567 1732,1565.2 1735.7,1566.4 1739.4,1565.8 1743.1,1567.7 1746.8,1532.7 1750.5,1566.6 1754.2,1565.4 1757.9,1566 1761.6,1566.2 1765.3,1566.6 1769,1566.9 1772.7,1565.9 1776.4,1566.4 1780.2,1567.1 1783.9,1567.2 1787.6,1565.8 1791.3,1567.3 1795,1551.9 1798.7,1567.4 1802.4,1565.3 1806.1,1567.4 1809.8,1566.7 1813.5,1565.9 1817.2,1566.7 1820.9,1567.3 1824.6,1567.5 1828.3,1565 1832,1565.5 1835.7,1549.5 1839.4,1566.2 1843.1,1565 1846.8,1566.5 1850.5,1565.8 1854.2,1565.8 1858,1566.9 1861.7,1566.8 1865.4,1566.6 1869.1,1566.8 1872.8,1567.4 1876.5,1566.8 1880.2,1567.3 1883.9,1556.7 1887.6,1566.2 1891.3,1566.1 1895,1565.2 1898.7,1566.3 1902.4,1565.5 1906.1,1565.5 1909.8,1567.4 1913.5,1565.6 1917.2,1566.3 1920.9,1566.7 1924.6,1567.1 1928.3,1527.9 1932,1567.6 1935.7,1566.9 1939.5,1566.4 1943.2,1565.8 1946.9,1567.5 1950.6,1567.5 1954.3,1567.5 1958,1567 1961.7,1566.9 1965.4,1566.6 1969.1,1567.5 1972.8,1567.6 1976.5,1565.9 1980.2,1565.7 1983.9,1554.3 1987.6,1566.1 1991.3,1566.7 1995,1565.4 1998.7,1567.3 2002.4,1567.1 2006.1,1565.1 2009.8,1565.1 2013.5,1547.1 2017.2,1566.1 2021,1566.8 2024.7,1566.2 2028.4,1566 2032.1,1567.7 2035.8,1566.9 2039.5,1565.6 2043.2,1566.7 2046.9,1566.1 2050.6,1566.2 2054.3,1556.7 2058,1567 2061.7,1565.1 2065.4,1567 2069.1,1565.3 2072.8,1566.1 2076.5,1566.7 2080.2,1567.7 2083.9,1564.9 2087.6,1565.9 2091.3,1566.9 2095,1567.3 2098.7,1566.1 2102.5,1539.9 2106.2,1566.4 2109.9,1564.9 2113.6,1566.7 2117.3,1566.2 2121,1565.3 2124.7,1566.2 2128.4,1565.4 2132.1,1566 2135.8,1566.5 2139.5,1565.2 2143.2,1565.8 2146.9,1566.5 2150.6,1565.9 2154.3,1566.3 2158,1567 2161.7,1565.2 2165.4,1566.7 2169.1,1566.4 2172.8,1566.4 2176.5,1566.1 2180.3,1566.8 2184,1566.8 2187.7,1544.7 2191.4,1566.1 2195.1,1565.7 2198.8,1566.3 2202.5,1565.3 2206.2,1567 2209.9,1565.5 2213.6,1567 2217.3,1565.6 2221,1567 2224.7,1567.2 2228.4,1566.6 2232.1,1566.3 2235.8,1556.7 2239.5,1565.6 2243.2,1566.9 2246.9,1565.3 2250.6,1566.7 2254.3,1567.1 2258,1566.3 2261.8,1566.7 2265.5,1567.7 2269.2,1565.6 2272.9,1547.1 2276.6,1566.2 2280.3,1567 2284,1565.9 2287.7,1567.6 2291.4,1566.1 2295.1,1554.3 2298.8,1564.9 2302.5,1565.8 2306.2,1565.8 2309.9,1566.8 2313.6,1567.3 2317.3,1567.1 2321,1554.3 2324.7,1566.3 2328.4,1567.7 2332.1,1567.7 2335.8,1567.5 2339.5,1565.3 2343.3,1566.8 2347,1539.9 2350.7,1567.4 2354.4,1567.3 2358.1,1565 2361.8,1565.7 2365.5,1535.1 2369.2,1566.2 2372.9,1567.3 2376.6,1567.4 2380.3,1549.5 2384,1567.2" fill="none" stroke="#93546c" stroke-width="3.7" stroke-linejoin="bevel" stroke-opacity="0.88"/>
<path d="M1475.2 1579.1H2401.7" stroke="#e8e8e8" stroke-width="2"/>
</g>
<g>
<text x="2580.5" y="1242.3" font-size="30.6" textLength="304" lengthAdjust="spacingAndGlyphs">CPU Idle Time (VIWMI)</text>
<text x="2705.8" y="1586" font-size="20.4" text-anchor="end" textLength="9.9" lengthAdjust="spacingAndGlyphs">0</text>
<path d="M2715.9 1483.4H3631.7" stroke="#e8e8e8" stroke-width="1.8"/>
<text x="2705.8" y="1491.1" font-size="20.4" text-anchor="end" textLength="64.7" lengthAdjust="spacingAndGlyphs">100000</text>
<path d="M2715.9 1388.4H3631.7" stroke="#e8e8e8" stroke-width="1.8"/>
<text x="2705.8" y="1396.1" font-size="20.4" text-anchor="end" textLength="64.7" lengthAdjust="spacingAndGlyphs">200000</text>
<path d="M2715.9 1293.5H3631.7" stroke="#e8e8e8" stroke-width="1.8"/>
<text x="2705.8" y="1301.2" font-size="20.4" text-anchor="end" textLength="64.7" lengthAdjust="spacingAndGlyphs">300000</text>
<path d="M2721.8 1272.6V1578.3" stroke="#e8e8e8" stroke-width="1.8"/>
<path d="M2738.9 1578.3V1584.7" stroke="#e8e8e8" stroke-width="1.8"/>
<text x="2738.9" y="1609.2" font-size="20.4" text-anchor="middle" textLength="47.6" lengthAdjust="spacingAndGlyphs">00:03</text>
<path d="M2808.8 1578.3V1584.7" stroke="#e8e8e8" stroke-width="1.8"/>
<text x="2808.8" y="1609.2" font-size="20.4" text-anchor="middle" textLength="47.6" lengthAdjust="spacingAndGlyphs">01:40</text>
<path d="M2878.6 1578.3V1584.7" stroke="#e8e8e8" stroke-width="1.8"/>
<text x="2878.6" y="1609.2" font-size="20.4" text-anchor="middle" textLength="47.6" lengthAdjust="spacingAndGlyphs">03:16</text>
<path d="M2948.5 1578.3V1584.7" stroke="#e8e8e8" stroke-width="1.8"/>
<text x="2948.5" y="1609.2" font-size="20.4" text-anchor="middle" textLength="47.6" lengthAdjust="spacingAndGlyphs">04:52</text>
<path d="M3018.3 1578.3V1584.7" stroke="#e8e8e8" stroke-width="1.8"/>
<text x="3018.3" y="1609.2" font-size="20.4" text-anchor="middle" textLength="47.6" lengthAdjust="spacingAndGlyphs">06:28</text>
<path d="M3088.2 1578.3V1584.7" stroke="#e8e8e8" stroke-width="1.8"/>
<text x="3088.2" y="1609.2" font-size="20.4" text-anchor="middle" textLength="47.6" lengthAdjust="spacingAndGlyphs">08:05</text>
<path d="M3158 1578.3V1584.7" stroke="#e8e8e8" stroke-width="1.8"/>
<text x="3158" y="1609.2" font-size="20.4" text-anchor="middle" textLength="47.6" lengthAdjust="spacingAndGlyphs">09:41</text>
<path d="M3227.9 1578.3V1584.7" stroke="#e8e8e8" stroke-width="1.8"/>
<text x="3227.9" y="1609.2" font-size="20.4" text-anchor="middle" textLength="47.6" lengthAdjust="spacingAndGlyphs">11:17</text>
<path d="M3297.7 1578.3V1584.7" stroke="#e8e8e8" stroke-width="1.8"/>
<text x="3297.7" y="1609.2" font-size="20.4" text-anchor="middle" textLength="47.6" lengthAdjust="spacingAndGlyphs">12:53</text>
<path d="M3367.6 1578.3V1584.7" stroke="#e8e8e8" stroke-width="1.8"/>
<text x="3367.6" y="1609.2" font-size="20.4" text-anchor="middle" textLength="47.6" lengthAdjust="spacingAndGlyphs">14:30</text>
<path d="M3437.4 1578.3V1584.7" stroke="#e8e8e8" stroke-width="1.8"/>
<text x="3437.4" y="1609.2" font-size="20.4" text-anchor="middle" textLength="47.6" lengthAdjust="spacingAndGlyphs">16:06</text>
<path d="M3507.3 1578.3V1584.7" stroke="#e8e8e8" stroke-width="1.8"/>
<text x="3507.3" y="1609.2" font-size="20.4" text-anchor="middle" textLength="47.6" lengthAdjust="spacingAndGlyphs">17:42</text>
<path d="M3577.1 1578.3V1584.7" stroke="#e8e8e8" stroke-width="1.8"/>
<text x="3577.1" y="1609.2" font-size="20.4" text-anchor="middle" textLength="47.6" lengthAdjust="spacingAndGlyphs">19:18</text>
<text x="3176.6" y="1653.7" font-size="21.5" text-anchor="middle" textLength="47" lengthAdjust="spacingAndGlyphs">Time</text>
<text transform="translate(2612.5 1425.4) rotate(-90)" font-size="21.5" text-anchor="middle" textLength="120.5" lengthAdjust="spacingAndGlyphs">Milliseconds</text>
<polygon points="2738.9,1578.3 2738.9,1295.8 2742.6,1294.9 2746.3,1295.8 2749.9,1294.8 2753.6,1295.4 2757.2,1295.3 2760.9,1295 2764.6,1295.4 2768.2,1295.7 2771.9,1295.8 2775.6,1296 2779.2,1295.1 2782.9,1295.5 2786.5,1295.9 2790.2,1294.9 2793.9,1295.7 2797.5,1295.5 2801.2,1295.7 2804.9,1295.2 2808.5,1295.3 2812.2,1295.3 2815.8,1295.7 2819.5,1295.7 2823.2,1292.6 2826.8,1281.2 2830.5,1303.1 2834.1,1297.3 2837.8,1294.8 2841.5,1294.8 2845.1,1295.8 2848.8,1296 2852.5,1295.8 2856.1,1295.1 2859.8,1295 2863.4,1296 2867.1,1295.3 2870.8,1296.1 2874.4,1295.4 2878.1,1295.2 2881.8,1294.8 2885.4,1295.7 2889.1,1295 2892.7,1294.9 2896.4,1294.8 2900.1,1296.1 2903.7,1295.4 2907.4,1294.8 2911.1,1295.5 2914.7,1295 2918.4,1295.3 2922,1295 2925.7,1295.4 2929.4,1296 2933,1295.9 2936.7,1295.9 2940.4,1292.6 2944,1285.9 2947.7,1302.8 2951.3,1297.3 2955,1295.3 2958.7,1295.2 2962.3,1295 2966,1294.8 2969.7,1294.9 2973.3,1295 2977,1295.9 2980.6,1295.6 2984.3,1296 2988,1295.3 2991.6,1295 2995.3,1296 2998.9,1295.8 3002.6,1295.6 3006.3,1295.7 3009.9,1295 3013.6,1295.6 3017.3,1295.2 3020.9,1295.4 3024.6,1295.3 3028.2,1294.8 3031.9,1294.8 3035.6,1295.9 3039.2,1294.9 3042.9,1295.6 3046.6,1295.9 3050.2,1295.6 3053.9,1295.4 3057.5,1294.8 3061.2,1295.6 3064.9,1296 3068.5,1294.9 3072.2,1292.6 3075.9,1285.9 3079.5,1302.5 3083.2,1297.3 3086.8,1295.5 3090.5,1295 3094.2,1296 3097.8,1295.3 3101.5,1295.5 3105.2,1296.1 3108.8,1292.6 3112.5,1290.2 3116.1,1298.6 3119.8,1297.3 3123.5,1295.9 3127.1,1297.1 3130.8,1294.8 3134.5,1295.4 3138.1,1296 3141.8,1294.4 3145.4,1294 3149.1,1296.3 3152.8,1297.3 3156.4,1292.6 3160.1,1283.1 3163.8,1301.9 3167.4,1297.3 3171.1,1294.2 3174.7,1293.5 3178.4,1296.3 3182.1,1296.4 3185.7,1296 3189.4,1295.7 3193,1292.6 3196.7,1281.2 3200.4,1302.8 3204,1297.3 3207.7,1294.6 3211.4,1294.3 3215,1296.7 3218.7,1296.5 3222.3,1296.2 3226,1294.9 3229.7,1294.7 3233.3,1297.2 3237,1295.3 3240.7,1292.6 3244.3,1287.8 3248,1300.1 3251.6,1297.3 3255.3,1294.4 3259,1296.4 3262.6,1293.9 3266.3,1296.7 3270,1294 3273.6,1296.7 3277.3,1297.3 3280.9,1293.6 3284.6,1296.3 3288.3,1292.6 3291.9,1285 3295.6,1302.8 3299.3,1297.3 3302.9,1293.7 3306.6,1294.9 3310.2,1296.7 3313.9,1294 3317.6,1296.9 3321.2,1293.8 3324.9,1292.6 3328.6,1283.1 3332.2,1304.5 3335.9,1297.3 3339.5,1293.2 3343.2,1296 3346.9,1294.3 3350.5,1297.1 3354.2,1296.9 3357.8,1296.4 3361.5,1296.6 3365.2,1295.7 3368.8,1295 3372.5,1296.5 3376.2,1294.4 3379.8,1294.4 3383.5,1296.7 3387.1,1292.6 3390.8,1276.4 3394.5,1276.9 3398.1,1309.6 3401.8,1298.2 3405.5,1297.2 3409.1,1295 3412.8,1295.9 3416.4,1296.1 3420.1,1293.6 3423.8,1296.2 3427.4,1293.9 3431.1,1293.7 3434.8,1293.9 3438.4,1296.8 3442.1,1294 3445.7,1292.6 3449.4,1283.1 3453.1,1302.2 3456.7,1297.3 3460.4,1297.1 3464.1,1296.5 3467.7,1294.8 3471.4,1295 3475,1294.9 3478.7,1296.5 3482.4,1294.4 3486,1296.7 3489.7,1296.4 3493.4,1294.1 3497,1293.5 3500.7,1294.4 3504.3,1297.3 3508,1293.9 3511.7,1294.3 3515.3,1296.2 3519,1293.7 3522.7,1294 3526.3,1294.3 3530,1296.1 3533.6,1296 3537.3,1295.8 3541,1295 3544.6,1297.4 3548.3,1293.3 3551.9,1292.6 3555.6,1282.1 3559.3,1303.3 3562.9,1297.3 3566.6,1294.3 3570.3,1295.1 3573.9,1297 3577.6,1297.1 3581.2,1296.8 3584.9,1296.2 3588.6,1292.6 3592.2,1289.2 3595.9,1299.5 3599.6,1297.3 3603.2,1294.4 3606.9,1293.3 3610.5,1294 3614.2,1296 3614.2,1578.3" fill="#a16b83"/>
<polygon points="3574.7,1296.3 3580.5,1346.7 3586,1296.3" fill="#c0607a" fill-opacity="0.45"/>
<polygon points="3503.6,1296.3 3508,1313.4 3512.4,1296.3" fill="#c0607a" fill-opacity="0.3"/>
<polyline points="2738.9,1295.2 2742.6,1294.3 2746.3,1295.2 2749.9,1294.2 2753.6,1294.8 2757.2,1294.7 2760.9,1294.4 2764.6,1294.8 2768.2,1295.1 2771.9,1295.2 2775.6,1295.4 2779.2,1294.5 2782.9,1294.9 2786.5,1295.3 2790.2,1294.3 2793.9,1295.1 2797.5,1294.9 2801.2,1295.1 2804.9,1294.6 2808.5,1294.7 2812.2,1294.7 2815.8,1295.1 2819.5,1295.1 2823.2,1292 2826.8,1280.6 2830.5,1302.5 2834.1,1296.7 2837.8,1294.2 2841.5,1294.2 2845.1,1295.2 2848.8,1295.4 2852.5,1295.2 2856.1,1294.5 2859.8,1294.4 2863.4,1295.4 2867.1,1294.7 2870.8,1295.5 2874.4,1294.8 2878.1,1294.6 2881.8,1294.2 2885.4,1295.1 2889.1,1294.4 2892.7,1294.3 2896.4,1294.2 2900.1,1295.5 2903.7,1294.8 2907.4,1294.2 2911.1,1294.9 2914.7,1294.4 2918.4,1294.7 2922,1294.4 2925.7,1294.8 2929.4,1295.4 2933,1295.3 2936.7,1295.3 2940.4,1292 2944,1285.3 2947.7,1302.2 2951.3,1296.7 2955,1294.7 2958.7,1294.6 2962.3,1294.4 2966,1294.2 2969.7,1294.3 2973.3,1294.4 2977,1295.3 2980.6,1295 2984.3,1295.4 2988,1294.7 2991.6,1294.4 2995.3,1295.4 2998.9,1295.2 3002.6,1295 3006.3,1295.1 3009.9,1294.4 3013.6,1295 3017.3,1294.6 3020.9,1294.8 3024.6,1294.7 3028.2,1294.2 3031.9,1294.2 3035.6,1295.3 3039.2,1294.3 3042.9,1295 3046.6,1295.3 3050.2,1295 3053.9,1294.8 3057.5,1294.2 3061.2,1295 3064.9,1295.4 3068.5,1294.3 3072.2,1292 3075.9,1285.3 3079.5,1301.9 3083.2,1296.7 3086.8,1294.9 3090.5,1294.4 3094.2,1295.4 3097.8,1294.7 3101.5,1294.9 3105.2,1295.5 3108.8,1292 3112.5,1289.6 3116.1,1298 3119.8,1296.7 3123.5,1295.3 3127.1,1296.5 3130.8,1294.2 3134.5,1294.8 3138.1,1295.4 3141.8,1293.8 3145.4,1293.4 3149.1,1295.7 3152.8,1296.7 3156.4,1292 3160.1,1282.5 3163.8,1301.3 3167.4,1296.7 3171.1,1293.6 3174.7,1292.9 3178.4,1295.7 3182.1,1295.8 3185.7,1295.4 3189.4,1295.1 3193,1292 3196.7,1280.6 3200.4,1302.2 3204,1296.7 3207.7,1294 3211.4,1293.7 3215,1296.1 3218.7,1295.9 3222.3,1295.6 3226,1294.3 3229.7,1294.1 3233.3,1296.6 3237,1294.7 3240.7,1292 3244.3,1287.2 3248,1299.5 3251.6,1296.7 3255.3,1293.8 3259,1295.8 3262.6,1293.3 3266.3,1296.1 3270,1293.4 3273.6,1296.1 3277.3,1296.7 3280.9,1293 3284.6,1295.7 3288.3,1292 3291.9,1284.4 3295.6,1302.2 3299.3,1296.7 3302.9,1293.1 3306.6,1294.3 3310.2,1296.1 3313.9,1293.4 3317.6,1296.3 3321.2,1293.2 3324.9,1292 3328.6,1282.5 3332.2,1303.9 3335.9,1296.7 3339.5,1292.6 3343.2,1295.4 3346.9,1293.7 3350.5,1296.5 3354.2,1296.3 3357.8,1295.8 3361.5,1296 3365.2,1295.1 3368.8,1294.4 3372.5,1295.9 3376.2,1293.8 3379.8,1293.8 3383.5,1296.1 3387.1,1292 3390.8,1275.8 3394.5,1276.3 3398.1,1309 3401.8,1297.6 3405.5,1296.6 3409.1,1294.4 3412.8,1295.3 3416.4,1295.5 3420.1,1293 3423.8,1295.6 3427.4,1293.3 3431.1,1293.1 3434.8,1293.3 3438.4,1296.2 3442.1,1293.4 3445.7,1292 3449.4,1282.5 3453.1,1301.6 3456.7,1296.7 3460.4,1296.5 3464.1,1295.9 3467.7,1294.2 3471.4,1294.4 3475,1294.3 3478.7,1295.9 3482.4,1293.8 3486,1296.1 3489.7,1295.8 3493.4,1293.5 3497,1292.9 3500.7,1293.8 3504.3,1296.7 3508,1293.3 3511.7,1293.7 3515.3,1295.6 3519,1293.1 3522.7,1293.4 3526.3,1293.7 3530,1295.5 3533.6,1295.4 3537.3,1295.2 3541,1294.4 3544.6,1296.8 3548.3,1292.7 3551.9,1292 3555.6,1281.5 3559.3,1302.7 3562.9,1296.7 3566.6,1293.7 3570.3,1294.5 3573.9,1296.4 3577.6,1296.5 3581.2,1296.2 3584.9,1295.6 3588.6,1292 3592.2,1288.6 3595.9,1298.9 3599.6,1296.7 3603.2,1293.8 3606.9,1292.7 3610.5,1293.4 3614.2,1295.4" fill="none" stroke="#c44c68" stroke-width="4.2" stroke-opacity="0.7" stroke-linejoin="miter"/>
<polyline points="2738.9,1296.6 2742.6,1295.7 2746.3,1296.6 2749.9,1295.6 2753.6,1296.2 2757.2,1296.1 2760.9,1295.8 2764.6,1296.2 2768.2,1296.5 2771.9,1296.6 2775.6,1296.8 2779.2,1295.9 2782.9,1296.3 2786.5,1296.7 2790.2,1295.7 2793.9,1296.5 2797.5,1296.3 2801.2,1296.5 2804.9,1296 2808.5,1296.1 2812.2,1296.1 2815.8,1296.5 2819.5,1296.5 2823.2,1293.4 2826.8,1282 2830.5,1303.9 2834.1,1298.1 2837.8,1295.6 2841.5,1295.6 2845.1,1296.6 2848.8,1296.8 2852.5,1296.6 2856.1,1295.9 2859.8,1295.8 2863.4,1296.8 2867.1,1296.1 2870.8,1296.9 2874.4,1296.2 2878.1,1296 2881.8,1295.6 2885.4,1296.5 2889.1,1295.8 2892.7,1295.7 2896.4,1295.6 2900.1,1296.9 2903.7,1296.2 2907.4,1295.6 2911.1,1296.3 2914.7,1295.8 2918.4,1296.1 2922,1295.8 2925.7,1296.2 2929.4,1296.8 2933,1296.7 2936.7,1296.7 2940.4,1293.4 2944,1286.7 2947.7,1303.6 2951.3,1298.1 2955,1296.1 2958.7,1296 2962.3,1295.8 2966,1295.6 2969.7,1295.7 2973.3,1295.8 2977,1296.7 2980.6,1296.4 2984.3,1296.8 2988,1296.1 2991.6,1295.8 2995.3,1296.8 2998.9,1296.6 3002.6,1296.4 3006.3,1296.5 3009.9,1295.8 3013.6,1296.4 3017.3,1296 3020.9,1296.2 3024.6,1296.1 3028.2,1295.6 3031.9,1295.6 3035.6,1296.7 3039.2,1295.7 3042.9,1296.4 3046.6,1296.7 3050.2,1296.4 3053.9,1296.2 3057.5,1295.6 3061.2,1296.4 3064.9,1296.8 3068.5,1295.7 3072.2,1293.4 3075.9,1286.7 3079.5,1303.3 3083.2,1298.1 3086.8,1296.3 3090.5,1295.8 3094.2,1296.8 3097.8,1296.1 3101.5,1296.3 3105.2,1296.9 3108.8,1293.4 3112.5,1291 3116.1,1299.4 3119.8,1298.1 3123.5,1296.7 3127.1,1297.9 3130.8,1295.6 3134.5,1296.2 3138.1,1296.8 3141.8,1295.2 3145.4,1294.8 3149.1,1297.1 3152.8,1298.1 3156.4,1293.4 3160.1,1283.9 3163.8,1302.7 3167.4,1298.1 3171.1,1295 3174.7,1294.3 3178.4,1297.1 3182.1,1297.2 3185.7,1296.8 3189.4,1296.5 3193,1293.4 3196.7,1282 3200.4,1303.6 3204,1298.1 3207.7,1295.4 3211.4,1295.1 3215,1297.5 3218.7,1297.3 3222.3,1297 3226,1295.7 3229.7,1295.5 3233.3,1298 3237,1296.1 3240.7,1293.4 3244.3,1288.6 3248,1300.9 3251.6,1298.1 3255.3,1295.2 3259,1297.2 3262.6,1294.7 3266.3,1297.5 3270,1294.8 3273.6,1297.5 3277.3,1298.1 3280.9,1294.4 3284.6,1297.1 3288.3,1293.4 3291.9,1285.8 3295.6,1303.6 3299.3,1298.1 3302.9,1294.5 3306.6,1295.7 3310.2,1297.5 3313.9,1294.8 3317.6,1297.7 3321.2,1294.6 3324.9,1293.4 3328.6,1283.9 3332.2,1305.3 3335.9,1298.1 3339.5,1294 3343.2,1296.8 3346.9,1295.1 3350.5,1297.9 3354.2,1297.7 3357.8,1297.2 3361.5,1297.4 3365.2,1296.5 3368.8,1295.8 3372.5,1297.3 3376.2,1295.2 3379.8,1295.2 3383.5,1297.5 3387.1,1293.4 3390.8,1277.2 3394.5,1277.7 3398.1,1310.4 3401.8,1299 3405.5,1298 3409.1,1295.8 3412.8,1296.7 3416.4,1296.9 3420.1,1294.4 3423.8,1297 3427.4,1294.7 3431.1,1294.5 3434.8,1294.7 3438.4,1297.6 3442.1,1294.8 3445.7,1293.4 3449.4,1283.9 3453.1,1303 3456.7,1298.1 3460.4,1297.9 3464.1,1297.3 3467.7,1295.6 3471.4,1295.8 3475,1295.7 3478.7,1297.3 3482.4,1295.2 3486,1297.5 3489.7,1297.2 3493.4,1294.9 3497,1294.3 3500.7,1295.2 3504.3,1298.1 3508,1294.7 3511.7,1295.1 3515.3,1297 3519,1294.5 3522.7,1294.8 3526.3,1295.1 3530,1296.9 3533.6,1296.8 3537.3,1296.6 3541,1295.8 3544.6,1298.2 3548.3,1294.1 3551.9,1293.4 3555.6,1282.9 3559.3,1304.1 3562.9,1298.1 3566.6,1295.1 3570.3,1295.9 3573.9,1297.8 3577.6,1297.9 3581.2,1297.6 3584.9,1297 3588.6,1293.4 3592.2,1290 3595.9,1300.3 3599.6,1298.1 3603.2,1295.2 3606.9,1294.1 3610.5,1294.8 3614.2,1296.8" fill="none" stroke="#8a5569" stroke-width="2.6" stroke-linejoin="miter"/>
<path d="M2715.9 1579.1H3631.7" stroke="#e8e8e8" stroke-width="2"/>
</g>
<g>
<text x="120.5" y="1762.3" font-size="30.6" textLength="313.4" lengthAdjust="spacingAndGlyphs">CPU Utilization (VIWMI)</text>
<text x="189.9" y="2106" font-size="20.4" text-anchor="end" textLength="9.9" lengthAdjust="spacingAndGlyphs">0</text>
<path d="M200 2014.8H1171.7" stroke="#e8e8e8" stroke-width="1.8"/>
<text x="189.9" y="2022.5" font-size="20.4" text-anchor="end" textLength="9.9" lengthAdjust="spacingAndGlyphs">2</text>
<path d="M200 1931.2H1171.7" stroke="#e8e8e8" stroke-width="1.8"/>
<text x="189.9" y="1938.9" font-size="20.4" text-anchor="end" textLength="9.9" lengthAdjust="spacingAndGlyphs">4</text>
<path d="M200 1847.7H1171.7" stroke="#e8e8e8" stroke-width="1.8"/>
<text x="189.9" y="1855.4" font-size="20.4" text-anchor="end" textLength="9.9" lengthAdjust="spacingAndGlyphs">6</text>
<path d="M205.9 1792.6V2098.3" stroke="#e8e8e8" stroke-width="1.8"/>
<path d="M225 2098.3V2104.7" stroke="#e8e8e8" stroke-width="1.8"/>
<text x="225" y="2129.2" font-size="20.4" text-anchor="middle" textLength="47.6" lengthAdjust="spacingAndGlyphs">00:03</text>
<path d="M294.8 2098.3V2104.7" stroke="#e8e8e8" stroke-width="1.8"/>
<text x="294.8" y="2129.2" font-size="20.4" text-anchor="middle" textLength="47.6" lengthAdjust="spacingAndGlyphs">01:34</text>
<path d="M364.7 2098.3V2104.7" stroke="#e8e8e8" stroke-width="1.8"/>
<text x="364.7" y="2129.2" font-size="20.4" text-anchor="middle" textLength="47.6" lengthAdjust="spacingAndGlyphs">03:05</text>
<path d="M434.5 2098.3V2104.7" stroke="#e8e8e8" stroke-width="1.8"/>
<text x="434.5" y="2129.2" font-size="20.4" text-anchor="middle" textLength="47.6" lengthAdjust="spacingAndGlyphs">04:35</text>
<path d="M504.4 2098.3V2104.7" stroke="#e8e8e8" stroke-width="1.8"/>
<text x="504.4" y="2129.2" font-size="20.4" text-anchor="middle" textLength="47.6" lengthAdjust="spacingAndGlyphs">06:06</text>
<path d="M574.2 2098.3V2104.7" stroke="#e8e8e8" stroke-width="1.8"/>
<text x="574.2" y="2129.2" font-size="20.4" text-anchor="middle" textLength="47.6" lengthAdjust="spacingAndGlyphs">07:37</text>
<path d="M644.1 2098.3V2104.7" stroke="#e8e8e8" stroke-width="1.8"/>
<text x="644.1" y="2129.2" font-size="20.4" text-anchor="middle" textLength="47.6" lengthAdjust="spacingAndGlyphs">09:07</text>
<path d="M713.9 2098.3V2104.7" stroke="#e8e8e8" stroke-width="1.8"/>
<text x="713.9" y="2129.2" font-size="20.4" text-anchor="middle" textLength="47.6" lengthAdjust="spacingAndGlyphs">10:38</text>
<path d="M783.8 2098.3V2104.7" stroke="#e8e8e8" stroke-width="1.8"/>
<text x="783.8" y="2129.2" font-size="20.4" text-anchor="middle" textLength="47.6" lengthAdjust="spacingAndGlyphs">12:08</text>
<path d="M853.6 2098.3V2104.7" stroke="#e8e8e8" stroke-width="1.8"/>
<text x="853.6" y="2129.2" font-size="20.4" text-anchor="middle" textLength="47.6" lengthAdjust="spacingAndGlyphs">13:39</text>
<path d="M923.5 2098.3V2104.7" stroke="#e8e8e8" stroke-width="1.8"/>
<text x="923.5" y="2129.2" font-size="20.4" text-anchor="middle" textLength="47.6" lengthAdjust="spacingAndGlyphs">15:10</text>
<path d="M993.3 2098.3V2104.7" stroke="#e8e8e8" stroke-width="1.8"/>
<text x="993.3" y="2129.2" font-size="20.4" text-anchor="middle" textLength="47.6" lengthAdjust="spacingAndGlyphs">16:40</text>
<path d="M1063.2 2098.3V2104.7" stroke="#e8e8e8" stroke-width="1.8"/>
<text x="1063.2" y="2129.2" font-size="20.4" text-anchor="middle" textLength="47.6" lengthAdjust="spacingAndGlyphs">18:11</text>
<path d="M1133 2098.3V2104.7" stroke="#e8e8e8" stroke-width="1.8"/>
<text x="1133" y="2129.2" font-size="20.4" text-anchor="middle" textLength="47.6" lengthAdjust="spacingAndGlyphs">19:42</text>
<text x="688.6" y="2173.7" font-size="21.5" text-anchor="middle" textLength="47" lengthAdjust="spacingAndGlyphs">Time</text>
<text transform="translate(152.5 1945.5) rotate(-90)" font-size="21.5" text-anchor="middle">%</text>
<polygon points="225,2098.3 225,2056.5 228.8,2098.3 232.7,2098.3 236.5,2056.5 240.4,2098.3 244.2,2014.8 248.1,2014.8 251.9,2056.5 255.8,2098.3 259.6,2014.8 263.5,2098.3 267.4,2056.5 271.2,2098.3 275.1,2098.3 278.9,2056.5 282.8,2056.5 286.6,2098.3 290.5,2056.5 294.3,2056.5 298.2,2056.5 302,2098.3 305.9,2056.5 309.7,2098.3 313.6,2098.3 317.4,2056.5 321.3,1973 325.1,2098.3 329,2098.3 332.8,2056.5 336.7,2056.5 340.5,2056.5 344.4,2056.5 348.2,2056.5 352.1,2056.5 355.9,1973 359.8,2056.5 363.6,2098.3 367.5,2014.8 371.3,2056.5 375.2,2098.3 379,1931.2 382.9,2098.3 386.7,2056.5 390.6,2056.5 394.4,2098.3 398.3,2098.3 402.1,2056.5 406,2056.5 409.8,2056.5 413.7,2098.3 417.6,2098.3 421.4,2098.3 425.3,2098.3 429.1,2098.3 433,2098.3 436.8,2098.3 440.7,2056.5 444.5,2098.3 448.4,2098.3 452.2,2098.3 456.1,2098.3 459.9,2098.3 463.8,2056.5 467.6,2056.5 471.5,2098.3 475.3,2098.3 479.2,2056.5 483,2098.3 486.9,2056.5 490.7,2098.3 494.6,2098.3 498.4,1973 502.3,2056.5 506.1,2098.3 510,1889.5 513.8,2098.3 517.7,2056.5 521.5,2056.5 525.4,2098.3 529.2,2098.3 533.1,2056.5 536.9,2098.3 540.8,2098.3 544.6,2098.3 548.5,2098.3 552.3,1973 556.2,2056.5 560,2056.5 563.9,2098.3 567.8,2014.8 571.6,2098.3 575.5,2098.3 579.3,2098.3 583.2,2056.5 587,2098.3 590.9,2056.5 594.7,2056.5 598.6,2098.3 602.4,2098.3 606.3,2014.8 610.1,2098.3 614,2098.3 617.8,1973 621.7,2056.5 625.5,2056.5 629.4,1973 633.2,1973 637.1,2098.3 640.9,2056.5 644.8,2098.3 648.6,2098.3 652.5,2056.5 656.3,2098.3 660.2,2098.3 664,2098.3 667.9,2098.3 671.7,2014.8 675.6,2056.5 679.4,2056.5 683.3,2056.5 687.1,2098.3 691,2098.3 694.8,2056.5 698.7,2098.3 702.5,2098.3 706.4,2098.3 710.2,2056.5 714.1,2098.3 718,2098.3 721.8,2056.5 725.7,2056.5 729.5,1973 733.4,1973 737.2,2014.8 741.1,2014.8 744.9,2056.5 748.8,1931.2 752.6,2056.5 756.5,2056.5 760.3,2056.5 764.2,2056.5 768,2056.5 771.9,2098.3 775.7,2056.5 779.6,2098.3 783.4,2098.3 787.3,2098.3 791.1,2098.3 795,2098.3 798.8,2014.8 802.7,1973 806.5,2098.3 810.4,2056.5 814.2,2098.3 818.1,2098.3 821.9,2056.5 825.8,2056.5 829.6,2098.3 833.5,2014.8 837.3,2098.3 841.2,2098.3 845,2056.5 848.9,2014.8 852.7,2098.3 856.6,2056.5 860.4,2098.3 864.3,2014.8 868.1,2014.8 872,2056.5 875.9,2098.3 879.7,2056.5 883.6,2098.3 887.4,2098.3 891.3,2014.8 895.1,2098.3 899,2098.3 902.8,2056.5 906.7,2098.3 910.5,2098.3 914.4,2098.3 918.2,2056.5 922.1,2056.5 925.9,2056.5 929.8,2098.3 933.6,2098.3 937.5,2098.3 941.3,2098.3 945.2,2014.8 949,2098.3 952.9,2098.3 956.7,2098.3 960.6,2098.3 964.4,2098.3 968.3,2098.3 972.1,2098.3 976,2056.5 979.8,2098.3 983.7,2056.5 987.5,2014.8 991.4,2098.3 995.2,2098.3 999.1,2098.3 1002.9,2098.3 1006.8,2098.3 1010.6,2056.5 1014.5,2098.3 1018.3,2056.5 1022.2,2014.8 1026.1,2098.3 1029.9,2056.5 1033.8,1889.5 1037.6,2056.5 1041.5,2056.5 1045.3,2098.3 1049.2,2098.3 1053,2056.5 1056.9,2098.3 1060.7,1805.9 1064.6,2056.5 1068.4,2098.3 1072.3,2098.3 1076.1,2098.3 1080,2098.3 1083.8,2014.8 1087.7,2098.3 1091.5,1931.2 1095.4,2098.3 1099.2,2098.3 1103.1,2098.3 1106.9,2098.3 1110.8,2098.3 1114.6,2056.5 1118.5,1973 1122.3,2056.5 1126.2,2098.3 1130,2014.8 1133.9,2098.3 1137.7,2098.3 1141.6,2098.3 1145.4,2098.3 1149.3,2098.3 1153.1,2098.3 1153.1,2098.3" fill="rgba(30,185,220,0.26)"/>
<polyline points="225,2056.5 228.8,2098.3 232.7,2098.3 236.5,2056.5 240.4,2098.3 244.2,2014.8 248.1,2014.8 251.9,2056.5 255.8,2098.3 259.6,2014.8 263.5,2098.3 267.4,2056.5 271.2,2098.3 275.1,2098.3 278.9,2056.5 282.8,2056.5 286.6,2098.3 290.5,2056.5 294.3,2056.5 298.2,2056.5 302,2098.3 305.9,2056.5 309.7,2098.3 313.6,2098.3 317.4,2056.5 321.3,1973 325.1,2098.3 329,2098.3 332.8,2056.5 336.7,2056.5 340.5,2056.5 344.4,2056.5 348.2,2056.5 352.1,2056.5 355.9,1973 359.8,2056.5 363.6,2098.3 367.5,2014.8 371.3,2056.5 375.2,2098.3 379,1931.2 382.9,2098.3 386.7,2056.5 390.6,2056.5 394.4,2098.3 398.3,2098.3 402.1,2056.5 406,2056.5 409.8,2056.5 413.7,2098.3 417.6,2098.3 421.4,2098.3 425.3,2098.3 429.1,2098.3 433,2098.3 436.8,2098.3 440.7,2056.5 444.5,2098.3 448.4,2098.3 452.2,2098.3 456.1,2098.3 459.9,2098.3 463.8,2056.5 467.6,2056.5 471.5,2098.3 475.3,2098.3 479.2,2056.5 483,2098.3 486.9,2056.5 490.7,2098.3 494.6,2098.3 498.4,1973 502.3,2056.5 506.1,2098.3 510,1889.5 513.8,2098.3 517.7,2056.5 521.5,2056.5 525.4,2098.3 529.2,2098.3 533.1,2056.5 536.9,2098.3 540.8,2098.3 544.6,2098.3 548.5,2098.3 552.3,1973 556.2,2056.5 560,2056.5 563.9,2098.3 567.8,2014.8 571.6,2098.3 575.5,2098.3 579.3,2098.3 583.2,2056.5 587,2098.3 590.9,2056.5 594.7,2056.5 598.6,2098.3 602.4,2098.3 606.3,2014.8 610.1,2098.3 614,2098.3 617.8,1973 621.7,2056.5 625.5,2056.5 629.4,1973 633.2,1973 637.1,2098.3 640.9,2056.5 644.8,2098.3 648.6,2098.3 652.5,2056.5 656.3,2098.3 660.2,2098.3 664,2098.3 667.9,2098.3 671.7,2014.8 675.6,2056.5 679.4,2056.5 683.3,2056.5 687.1,2098.3 691,2098.3 694.8,2056.5 698.7,2098.3 702.5,2098.3 706.4,2098.3 710.2,2056.5 714.1,2098.3 718,2098.3 721.8,2056.5 725.7,2056.5 729.5,1973 733.4,1973 737.2,2014.8 741.1,2014.8 744.9,2056.5 748.8,1931.2 752.6,2056.5 756.5,2056.5 760.3,2056.5 764.2,2056.5 768,2056.5 771.9,2098.3 775.7,2056.5 779.6,2098.3 783.4,2098.3 787.3,2098.3 791.1,2098.3 795,2098.3 798.8,2014.8 802.7,1973 806.5,2098.3 810.4,2056.5 814.2,2098.3 818.1,2098.3 821.9,2056.5 825.8,2056.5 829.6,2098.3 833.5,2014.8 837.3,2098.3 841.2,2098.3 845,2056.5 848.9,2014.8 852.7,2098.3 856.6,2056.5 860.4,2098.3 864.3,2014.8 868.1,2014.8 872,2056.5 875.9,2098.3 879.7,2056.5 883.6,2098.3 887.4,2098.3 891.3,2014.8 895.1,2098.3 899,2098.3 902.8,2056.5 906.7,2098.3 910.5,2098.3 914.4,2098.3 918.2,2056.5 922.1,2056.5 925.9,2056.5 929.8,2098.3 933.6,2098.3 937.5,2098.3 941.3,2098.3 945.2,2014.8 949,2098.3 952.9,2098.3 956.7,2098.3 960.6,2098.3 964.4,2098.3 968.3,2098.3 972.1,2098.3 976,2056.5 979.8,2098.3 983.7,2056.5 987.5,2014.8 991.4,2098.3 995.2,2098.3 999.1,2098.3 1002.9,2098.3 1006.8,2098.3 1010.6,2056.5 1014.5,2098.3 1018.3,2056.5 1022.2,2014.8 1026.1,2098.3 1029.9,2056.5 1033.8,1889.5 1037.6,2056.5 1041.5,2056.5 1045.3,2098.3 1049.2,2098.3 1053,2056.5 1056.9,2098.3 1060.7,1805.9 1064.6,2056.5 1068.4,2098.3 1072.3,2098.3 1076.1,2098.3 1080,2098.3 1083.8,2014.8 1087.7,2098.3 1091.5,1931.2 1095.4,2098.3 1099.2,2098.3 1103.1,2098.3 1106.9,2098.3 1110.8,2098.3 1114.6,2056.5 1118.5,1973 1122.3,2056.5 1126.2,2098.3 1130,2014.8 1133.9,2098.3 1137.7,2098.3 1141.6,2098.3 1145.4,2098.3 1149.3,2098.3 1153.1,2098.3" fill="none" stroke="#8fdcf0" stroke-width="3.5" stroke-linejoin="round"/>
<g fill="#00bfe0" stroke="#fff" stroke-width="3"><circle cx="225" cy="2056.5" r="5.4"/><circle cx="228.8" cy="2098.3" r="5.4"/><circle cx="232.7" cy="2098.3" r="5.4"/><circle cx="236.5" cy="2056.5" r="5.4"/><circle cx="240.4" cy="2098.3" r="5.4"/><circle cx="244.2" cy="2014.8" r="5.4"/><circle cx="248.1" cy="2014.8" r="5.4"/><circle cx="251.9" cy="2056.5" r="5.4"/><circle cx="255.8" cy="2098.3" r="5.4"/><circle cx="259.6" cy="2014.8" r="5.4"/><circle cx="263.5" cy="2098.3" r="5.4"/><circle cx="267.4" cy="2056.5" r="5.4"/><circle cx="271.2" cy="2098.3" r="5.4"/><circle cx="275.1" cy="2098.3" r="5.4"/><circle cx="278.9" cy="2056.5" r="5.4"/><circle cx="282.8" cy="2056.5" r="5.4"/><circle cx="286.6" cy="2098.3" r="5.4"/><circle cx="290.5" cy="2056.5" r="5.4"/><circle cx="294.3" cy="2056.5" r="5.4"/><circle cx="298.2" cy="2056.5" r="5.4"/><circle cx="302" cy="2098.3" r="5.4"/><circle cx="305.9" cy="2056.5" r="5.4"/><circle cx="309.7" cy="2098.3" r="5.4"/><circle cx="313.6" cy="2098.3" r="5.4"/><circle cx="317.4" cy="2056.5" r="5.4"/><circle cx="321.3" cy="1973" r="5.4"/><circle cx="325.1" cy="2098.3" r="5.4"/><circle cx="329" cy="2098.3" r="5.4"/><circle cx="332.8" cy="2056.5" r="5.4"/><circle cx="336.7" cy="2056.5" r="5.4"/><circle cx="340.5" cy="2056.5" r="5.4"/><circle cx="344.4" cy="2056.5" r="5.4"/><circle cx="348.2" cy="2056.5" r="5.4"/><circle cx="352.1" cy="2056.5" r="5.4"/><circle cx="355.9" cy="1973" r="5.4"/><circle cx="359.8" cy="2056.5" r="5.4"/><circle cx="363.6" cy="2098.3" r="5.4"/><circle cx="367.5" cy="2014.8" r="5.4"/><circle cx="371.3" cy="2056.5" r="5.4"/><circle cx="375.2" cy="2098.3" r="5.4"/><circle cx="379" cy="1931.2" r="5.4"/><circle cx="382.9" cy="2098.3" r="5.4"/><circle cx="386.7" cy="2056.5" r="5.4"/><circle cx="390.6" cy="2056.5" r="5.4"/><circle cx="394.4" cy="2098.3" r="5.4"/><circle cx="398.3" cy="2098.3" r="5.4"/><circle cx="402.1" cy="2056.5" r="5.4"/><circle cx="406" cy="2056.5" r="5.4"/><circle cx="409.8" cy="2056.5" r="5.4"/><circle cx="413.7" cy="2098.3" r="5.4"/><circle cx="417.6" cy="2098.3" r="5.4"/><circle cx="421.4" cy="2098.3" r="5.4"/><circle cx="425.3" cy="2098.3" r="5.4"/><circle cx="429.1" cy="2098.3" r="5.4"/><circle cx="433" cy="2098.3" r="5.4"/><circle cx="436.8" cy="2098.3" r="5.4"/><circle cx="440.7" cy="2056.5" r="5.4"/><circle cx="444.5" cy="2098.3" r="5.4"/><circle cx="448.4" cy="2098.3" r="5.4"/><circle cx="452.2" cy="2098.3" r="5.4"/><circle cx="456.1" cy="2098.3" r="5.4"/><circle cx="459.9" cy="2098.3" r="5.4"/><circle cx="463.8" cy="2056.5" r="5.4"/><circle cx="467.6" cy="2056.5" r="5.4"/><circle cx="471.5" cy="2098.3" r="5.4"/><circle cx="475.3" cy="2098.3" r="5.4"/><circle cx="479.2" cy="2056.5" r="5.4"/><circle cx="483" cy="2098.3" r="5.4"/><circle cx="486.9" cy="2056.5" r="5.4"/><circle cx="490.7" cy="2098.3" r="5.4"/><circle cx="494.6" cy="2098.3" r="5.4"/><circle cx="498.4" cy="1973" r="5.4"/><circle cx="502.3" cy="2056.5" r="5.4"/><circle cx="506.1" cy="2098.3" r="5.4"/><circle cx="510" cy="1889.5" r="5.4"/><circle cx="513.8" cy="2098.3" r="5.4"/><circle cx="517.7" cy="2056.5" r="5.4"/><circle cx="521.5" cy="2056.5" r="5.4"/><circle cx="525.4" cy="2098.3" r="5.4"/><circle cx="529.2" cy="2098.3" r="5.4"/><circle cx="533.1" cy="2056.5" r="5.4"/><circle cx="536.9" cy="2098.3" r="5.4"/><circle cx="540.8" cy="2098.3" r="5.4"/><circle cx="544.6" cy="2098.3" r="5.4"/><circle cx="548.5" cy="2098.3" r="5.4"/><circle cx="552.3" cy="1973" r="5.4"/><circle cx="556.2" cy="2056.5" r="5.4"/><circle cx="560" cy="2056.5" r="5.4"/><circle cx="563.9" cy="2098.3" r="5.4"/><circle cx="567.8" cy="2014.8" r="5.4"/><circle cx="571.6" cy="2098.3" r="5.4"/><circle cx="575.5" cy="2098.3" r="5.4"/><circle cx="579.3" cy="2098.3" r="5.4"/><circle cx="583.2" cy="2056.5" r="5.4"/><circle cx="587" cy="2098.3" r="5.4"/><circle cx="590.9" cy="2056.5" r="5.4"/><circle cx="594.7" cy="2056.5" r="5.4"/><circle cx="598.6" cy="2098.3" r="5.4"/><circle cx="602.4" cy="2098.3" r="5.4"/><circle cx="606.3" cy="2014.8" r="5.4"/><circle cx="610.1" cy="2098.3" r="5.4"/><circle cx="614" cy="2098.3" r="5.4"/><circle cx="617.8" cy="1973" r="5.4"/><circle cx="621.7" cy="2056.5" r="5.4"/><circle cx="625.5" cy="2056.5" r="5.4"/><circle cx="629.4" cy="1973" r="5.4"/><circle cx="633.2" cy="1973" r="5.4"/><circle cx="637.1" cy="2098.3" r="5.4"/><circle cx="640.9" cy="2056.5" r="5.4"/><circle cx="644.8" cy="2098.3" r="5.4"/><circle cx="648.6" cy="2098.3" r="5.4"/><circle cx="652.5" cy="2056.5" r="5.4"/><circle cx="656.3" cy="2098.3" r="5.4"/><circle cx="660.2" cy="2098.3" r="5.4"/><circle cx="664" cy="2098.3" r="5.4"/><circle cx="667.9" cy="2098.3" r="5.4"/><circle cx="671.7" cy="2014.8" r="5.4"/><circle cx="675.6" cy="2056.5" r="5.4"/><circle cx="679.4" cy="2056.5" r="5.4"/><circle cx="683.3" cy="2056.5" r="5.4"/><circle cx="687.1" cy="2098.3" r="5.4"/><circle cx="691" cy="2098.3" r="5.4"/><circle cx="694.8" cy="2056.5" r="5.4"/><circle cx="698.7" cy="2098.3" r="5.4"/><circle cx="702.5" cy="2098.3" r="5.4"/><circle cx="706.4" cy="2098.3" r="5.4"/><circle cx="710.2" cy="2056.5" r="5.4"/><circle cx="714.1" cy="2098.3" r="5.4"/><circle cx="718" cy="2098.3" r="5.4"/><circle cx="721.8" cy="2056.5" r="5.4"/><circle cx="725.7" cy="2056.5" r="5.4"/><circle cx="729.5" cy="1973" r="5.4"/><circle cx="733.4" cy="1973" r="5.4"/><circle cx="737.2" cy="2014.8" r="5.4"/><circle cx="741.1" cy="2014.8" r="5.4"/><circle cx="744.9" cy="2056.5" r="5.4"/><circle cx="748.8" cy="1931.2" r="5.4"/><circle cx="752.6" cy="2056.5" r="5.4"/><circle cx="756.5" cy="2056.5" r="5.4"/><circle cx="760.3" cy="2056.5" r="5.4"/><circle cx="764.2" cy="2056.5" r="5.4"/><circle cx="768" cy="2056.5" r="5.4"/><circle cx="771.9" cy="2098.3" r="5.4"/><circle cx="775.7" cy="2056.5" r="5.4"/><circle cx="779.6" cy="2098.3" r="5.4"/><circle cx="783.4" cy="2098.3" r="5.4"/><circle cx="787.3" cy="2098.3" r="5.4"/><circle cx="791.1" cy="2098.3" r="5.4"/><circle cx="795" cy="2098.3" r="5.4"/><circle cx="798.8" cy="2014.8" r="5.4"/><circle cx="802.7" cy="1973" r="5.4"/><circle cx="806.5" cy="2098.3" r="5.4"/><circle cx="810.4" cy="2056.5" r="5.4"/><circle cx="814.2" cy="2098.3" r="5.4"/><circle cx="818.1" cy="2098.3" r="5.4"/><circle cx="821.9" cy="2056.5" r="5.4"/><circle cx="825.8" cy="2056.5" r="5.4"/><circle cx="829.6" cy="2098.3" r="5.4"/><circle cx="833.5" cy="2014.8" r="5.4"/><circle cx="837.3" cy="2098.3" r="5.4"/><circle cx="841.2" cy="2098.3" r="5.4"/><circle cx="845" cy="2056.5" r="5.4"/><circle cx="848.9" cy="2014.8" r="5.4"/><circle cx="852.7" cy="2098.3" r="5.4"/><circle cx="856.6" cy="2056.5" r="5.4"/><circle cx="860.4" cy="2098.3" r="5.4"/><circle cx="864.3" cy="2014.8" r="5.4"/><circle cx="868.1" cy="2014.8" r="5.4"/><circle cx="872" cy="2056.5" r="5.4"/><circle cx="875.9" cy="2098.3" r="5.4"/><circle cx="879.7" cy="2056.5" r="5.4"/><circle cx="883.6" cy="2098.3" r="5.4"/><circle cx="887.4" cy="2098.3" r="5.4"/><circle cx="891.3" cy="2014.8" r="5.4"/><circle cx="895.1" cy="2098.3" r="5.4"/><circle cx="899" cy="2098.3" r="5.4"/><circle cx="902.8" cy="2056.5" r="5.4"/><circle cx="906.7" cy="2098.3" r="5.4"/><circle cx="910.5" cy="2098.3" r="5.4"/><circle cx="914.4" cy="2098.3" r="5.4"/><circle cx="918.2" cy="2056.5" r="5.4"/><circle cx="922.1" cy="2056.5" r="5.4"/><circle cx="925.9" cy="2056.5" r="5.4"/><circle cx="929.8" cy="2098.3" r="5.4"/><circle cx="933.6" cy="2098.3" r="5.4"/><circle cx="937.5" cy="2098.3" r="5.4"/><circle cx="941.3" cy="2098.3" r="5.4"/><circle cx="945.2" cy="2014.8" r="5.4"/><circle cx="949" cy="2098.3" r="5.4"/><circle cx="952.9" cy="2098.3" r="5.4"/><circle cx="956.7" cy="2098.3" r="5.4"/><circle cx="960.6" cy="2098.3" r="5.4"/><circle cx="964.4" cy="2098.3" r="5.4"/><circle cx="968.3" cy="2098.3" r="5.4"/><circle cx="972.1" cy="2098.3" r="5.4"/><circle cx="976" cy="2056.5" r="5.4"/><circle cx="979.8" cy="2098.3" r="5.4"/><circle cx="983.7" cy="2056.5" r="5.4"/><circle cx="987.5" cy="2014.8" r="5.4"/><circle cx="991.4" cy="2098.3" r="5.4"/><circle cx="995.2" cy="2098.3" r="5.4"/><circle cx="999.1" cy="2098.3" r="5.4"/><circle cx="1002.9" cy="2098.3" r="5.4"/><circle cx="1006.8" cy="2098.3" r="5.4"/><circle cx="1010.6" cy="2056.5" r="5.4"/><circle cx="1014.5" cy="2098.3" r="5.4"/><circle cx="1018.3" cy="2056.5" r="5.4"/><circle cx="1022.2" cy="2014.8" r="5.4"/><circle cx="1026.1" cy="2098.3" r="5.4"/><circle cx="1029.9" cy="2056.5" r="5.4"/><circle cx="1033.8" cy="1889.5" r="5.4"/><circle cx="1037.6" cy="2056.5" r="5.4"/><circle cx="1041.5" cy="2056.5" r="5.4"/><circle cx="1045.3" cy="2098.3" r="5.4"/><circle cx="1049.2" cy="2098.3" r="5.4"/><circle cx="1053" cy="2056.5" r="5.4"/><circle cx="1056.9" cy="2098.3" r="5.4"/><circle cx="1060.7" cy="1805.9" r="5.4"/><circle cx="1064.6" cy="2056.5" r="5.4"/><circle cx="1068.4" cy="2098.3" r="5.4"/><circle cx="1072.3" cy="2098.3" r="5.4"/><circle cx="1076.1" cy="2098.3" r="5.4"/><circle cx="1080" cy="2098.3" r="5.4"/><circle cx="1083.8" cy="2014.8" r="5.4"/><circle cx="1087.7" cy="2098.3" r="5.4"/><circle cx="1091.5" cy="1931.2" r="5.4"/><circle cx="1095.4" cy="2098.3" r="5.4"/><circle cx="1099.2" cy="2098.3" r="5.4"/><circle cx="1103.1" cy="2098.3" r="5.4"/><circle cx="1106.9" cy="2098.3" r="5.4"/><circle cx="1110.8" cy="2098.3" r="5.4"/><circle cx="1114.6" cy="2056.5" r="5.4"/><circle cx="1118.5" cy="1973" r="5.4"/><circle cx="1122.3" cy="2056.5" r="5.4"/><circle cx="1126.2" cy="2098.3" r="5.4"/><circle cx="1130" cy="2014.8" r="5.4"/><circle cx="1133.9" cy="2098.3" r="5.4"/><circle cx="1137.7" cy="2098.3" r="5.4"/><circle cx="1141.6" cy="2098.3" r="5.4"/><circle cx="1145.4" cy="2098.3" r="5.4"/><circle cx="1149.3" cy="2098.3" r="5.4"/><circle cx="1153.1" cy="2098.3" r="5.4"/></g>
<path d="M200 2099.1H1171.7" stroke="#e8e8e8" stroke-width="2"/>
</g>
<g>
<text x="1350.5" y="1762.3" font-size="30.6" textLength="365.5" lengthAdjust="spacingAndGlyphs">Memory Utilization (VIWMI)</text>
<text x="1431" y="2106" font-size="20.4" text-anchor="end" textLength="9.9" lengthAdjust="spacingAndGlyphs">0</text>
<path d="M1441.1 2029.9H2401.7" stroke="#e8e8e8" stroke-width="1.8"/>
<text x="1431" y="2037.6" font-size="20.4" text-anchor="end" textLength="20.9" lengthAdjust="spacingAndGlyphs">20</text>
<path d="M1441.1 1961.5H2401.7" stroke="#e8e8e8" stroke-width="1.8"/>
<text x="1431" y="1969.2" font-size="20.4" text-anchor="end" textLength="20.9" lengthAdjust="spacingAndGlyphs">40</text>
<path d="M1441.1 1893H2401.7" stroke="#e8e8e8" stroke-width="1.8"/>
<text x="1431" y="1900.7" font-size="20.4" text-anchor="end" textLength="20.9" lengthAdjust="spacingAndGlyphs">60</text>
<path d="M1441.1 1824.6H2401.7" stroke="#e8e8e8" stroke-width="1.8"/>
<text x="1431" y="1832.3" font-size="20.4" text-anchor="end" textLength="20.9" lengthAdjust="spacingAndGlyphs">80</text>
<path d="M1447 1792.6V2098.3" stroke="#e8e8e8" stroke-width="1.8"/>
<path d="M1465.7 2098.3V2104.7" stroke="#e8e8e8" stroke-width="1.8"/>
<text x="1465.7" y="2129.2" font-size="20.4" text-anchor="middle" textLength="47.6" lengthAdjust="spacingAndGlyphs">00:03</text>
<path d="M1535.5 2098.3V2104.7" stroke="#e8e8e8" stroke-width="1.8"/>
<text x="1535.5" y="2129.2" font-size="20.4" text-anchor="middle" textLength="47.6" lengthAdjust="spacingAndGlyphs">01:35</text>
<path d="M1605.4 2098.3V2104.7" stroke="#e8e8e8" stroke-width="1.8"/>
<text x="1605.4" y="2129.2" font-size="20.4" text-anchor="middle" textLength="47.6" lengthAdjust="spacingAndGlyphs">03:07</text>
<path d="M1675.2 2098.3V2104.7" stroke="#e8e8e8" stroke-width="1.8"/>
<text x="1675.2" y="2129.2" font-size="20.4" text-anchor="middle" textLength="47.6" lengthAdjust="spacingAndGlyphs">04:38</text>
<path d="M1745.1 2098.3V2104.7" stroke="#e8e8e8" stroke-width="1.8"/>
<text x="1745.1" y="2129.2" font-size="20.4" text-anchor="middle" textLength="47.6" lengthAdjust="spacingAndGlyphs">06:10</text>
<path d="M1814.9 2098.3V2104.7" stroke="#e8e8e8" stroke-width="1.8"/>
<text x="1814.9" y="2129.2" font-size="20.4" text-anchor="middle" textLength="47.6" lengthAdjust="spacingAndGlyphs">07:42</text>
<path d="M1884.8 2098.3V2104.7" stroke="#e8e8e8" stroke-width="1.8"/>
<text x="1884.8" y="2129.2" font-size="20.4" text-anchor="middle" textLength="47.6" lengthAdjust="spacingAndGlyphs">09:14</text>
<path d="M1954.6 2098.3V2104.7" stroke="#e8e8e8" stroke-width="1.8"/>
<text x="1954.6" y="2129.2" font-size="20.4" text-anchor="middle" textLength="47.6" lengthAdjust="spacingAndGlyphs">10:45</text>
<path d="M2024.5 2098.3V2104.7" stroke="#e8e8e8" stroke-width="1.8"/>
<text x="2024.5" y="2129.2" font-size="20.4" text-anchor="middle" textLength="47.6" lengthAdjust="spacingAndGlyphs">12:17</text>
<path d="M2094.3 2098.3V2104.7" stroke="#e8e8e8" stroke-width="1.8"/>
<text x="2094.3" y="2129.2" font-size="20.4" text-anchor="middle" textLength="47.6" lengthAdjust="spacingAndGlyphs">13:49</text>
<path d="M2164.2 2098.3V2104.7" stroke="#e8e8e8" stroke-width="1.8"/>
<text x="2164.2" y="2129.2" font-size="20.4" text-anchor="middle" textLength="47.6" lengthAdjust="spacingAndGlyphs">15:20</text>
<path d="M2234 2098.3V2104.7" stroke="#e8e8e8" stroke-width="1.8"/>
<text x="2234" y="2129.2" font-size="20.4" text-anchor="middle" textLength="47.6" lengthAdjust="spacingAndGlyphs">16:52</text>
<path d="M2303.9 2098.3V2104.7" stroke="#e8e8e8" stroke-width="1.8"/>
<text x="2303.9" y="2129.2" font-size="20.4" text-anchor="middle" textLength="47.6" lengthAdjust="spacingAndGlyphs">18:24</text>
<path d="M2373.7 2098.3V2104.7" stroke="#e8e8e8" stroke-width="1.8"/>
<text x="2373.7" y="2129.2" font-size="20.4" text-anchor="middle" textLength="47.6" lengthAdjust="spacingAndGlyphs">19:56</text>
<text x="1924.1" y="2173.7" font-size="21.5" text-anchor="middle" textLength="47" lengthAdjust="spacingAndGlyphs">Time</text>
<text transform="translate(1382.5 1945.5) rotate(-90)" font-size="21.5" text-anchor="middle">%</text>
<polygon points="1465.7,2098.3 1465.7,1899.9 1469.5,1899.9 1473.3,1899.9 1477.1,1899.9 1480.9,1899.9 1484.7,1899.9 1488.5,1899.9 1492.4,1899.9 1496.2,1899.9 1500,1899.9 1503.8,1899.9 1507.6,1899.9 1511.4,1899.9 1515.2,1899.9 1519,1899.9 1522.8,1899.9 1526.6,1899.9 1530.4,1899.9 1534.2,1899.9 1538,1899.9 1541.9,1899.9 1545.7,1899.9 1549.5,1899.9 1553.3,1899.9 1557.1,1899.9 1560.9,1899.9 1564.7,1899.9 1568.5,1899.9 1572.3,1899.9 1576.1,1899.9 1579.9,1899.9 1583.7,1899.9 1587.5,1899.9 1591.4,1899.9 1595.2,1899.9 1599,1899.9 1602.8,1899.9 1606.6,1899.9 1610.4,1899.9 1614.2,1899.9 1618,1899.9 1621.8,1899.9 1625.6,1899.9 1629.4,1899.9 1633.2,1899.9 1637,1899.9 1640.9,1899.9 1644.7,1899.9 1648.5,1899.9 1652.3,1899.9 1656.1,1899.9 1659.9,1899.9 1663.7,1899.9 1667.5,1899.9 1671.3,1899.9 1675.1,1899.9 1678.9,1899.9 1682.7,1899.9 1686.5,1899.9 1690.4,1899.9 1694.2,1899.9 1698,1899.9 1701.8,1899.9 1705.6,1899.9 1709.4,1899.9 1713.2,1899.9 1717,1899.9 1720.8,1899.9 1724.6,1899.9 1728.4,1899.9 1732.2,1899.9 1736,1899.9 1739.9,1899.9 1743.7,1899.9 1747.5,1899.9 1751.3,1899.9 1755.1,1899.9 1758.9,1899.9 1762.7,1899.9 1766.5,1899.9 1770.3,1899.9 1774.1,1899.9 1777.9,1899.9 1781.7,1899.9 1785.5,1899.9 1789.4,1899.9 1793.2,1899.9 1797,1899.9 1800.8,1899.9 1804.6,1899.9 1808.4,1899.9 1812.2,1899.9 1816,1899.9 1819.8,1899.9 1823.6,1899.9 1827.4,1899.9 1831.2,1899.9 1835,1899.9 1838.9,1899.9 1842.7,1899.9 1846.5,1899.9 1850.3,1899.9 1854.1,1899.9 1857.9,1899.9 1861.7,1899.9 1865.5,1899.9 1869.3,1899.9 1873.1,1899.9 1876.9,1899.9 1880.7,1899.9 1884.5,1899.9 1888.4,1899.9 1892.2,1899.9 1896,1899.9 1899.8,1899.9 1903.6,1899.9 1907.4,1899.9 1911.2,1899.9 1915,1899.9 1918.8,1899.9 1922.6,1899.9 1926.4,1899.9 1930.2,1899.9 1934,1899.9 1937.9,1899.9 1941.7,1899.9 1945.5,1899.9 1949.3,1899.9 1953.1,1899.9 1956.9,1899.9 1960.7,1899.9 1964.5,1899.9 1968.3,1899.9 1972.1,1899.9 1975.9,1899.9 1979.7,1899.9 1983.5,1899.9 1987.4,1899.9 1991.2,1899.9 1995,1899.9 1998.8,1899.9 2002.6,1899.9 2006.4,1899.9 2010.2,1899.9 2014,1899.9 2017.8,1899.9 2021.6,1899.9 2025.4,1899.9 2029.2,1899.9 2033,1899.9 2036.9,1899.9 2040.7,1899.9 2044.5,1899.9 2048.3,1899.9 2052.1,1899.9 2055.9,1899.9 2059.7,1899.9 2063.5,1899.9 2067.3,1899.9 2071.1,1899.9 2074.9,1899.9 2078.7,1899.9 2082.5,1899.9 2086.4,1899.9 2090.2,1899.9 2094,1899.9 2097.8,1899.9 2101.6,1899.9 2105.4,1896.4 2109.2,1899.9 2113,1899.9 2116.8,1899.9 2120.6,1899.9 2124.4,1899.9 2128.2,1899.9 2132,1899.9 2135.9,1899.9 2139.7,1899.9 2143.5,1899.9 2147.3,1899.9 2151.1,1899.9 2154.9,1899.9 2158.7,1899.9 2162.5,1899.9 2166.3,1899.9 2170.1,1899.9 2173.9,1899.9 2177.7,1899.9 2181.5,1899.9 2185.4,1899.9 2189.2,1899.9 2193,1899.9 2196.8,1899.9 2200.6,1899.9 2204.4,1899.9 2208.2,1899.9 2212,1899.9 2215.8,1899.9 2219.6,1899.9 2223.4,1899.9 2227.2,1899.9 2231,1899.9 2234.9,1899.9 2238.7,1899.9 2242.5,1899.9 2246.3,1899.9 2250.1,1899.9 2253.9,1899.9 2257.7,1898.2 2261.5,1896.4 2265.3,1893 2269.1,1886.2 2272.9,1886.2 2276.7,1886.2 2280.5,1886.2 2284.4,1886.2 2288.2,1886.2 2292,1824.6 2295.8,1800.7 2299.6,1800.7 2303.4,1800.7 2307.2,1800.7 2311,1800.7 2314.8,1800.7 2318.6,1800.7 2322.4,1800.7 2326.2,1800.7 2330,1800.7 2333.9,1800.7 2337.7,1800.7 2341.5,1797.2 2345.3,1797.2 2349.1,1797.2 2352.9,1797.2 2356.7,1797.2 2360.5,1797.2 2364.3,1797.2 2368.1,1797.2 2371.9,1797.2 2375.7,1797.2 2379.5,1797.2 2383.4,1797.2 2383.4,2098.3" fill="rgba(30,185,220,0.26)"/>
<polyline points="1465.7,1899.9 1469.5,1899.9 1473.3,1899.9 1477.1,1899.9 1480.9,1899.9 1484.7,1899.9 1488.5,1899.9 1492.4,1899.9 1496.2,1899.9 1500,1899.9 1503.8,1899.9 1507.6,1899.9 1511.4,1899.9 1515.2,1899.9 1519,1899.9 1522.8,1899.9 1526.6,1899.9 1530.4,1899.9 1534.2,1899.9 1538,1899.9 1541.9,1899.9 1545.7,1899.9 1549.5,1899.9 1553.3,1899.9 1557.1,1899.9 1560.9,1899.9 1564.7,1899.9 1568.5,1899.9 1572.3,1899.9 1576.1,1899.9 1579.9,1899.9 1583.7,1899.9 1587.5,1899.9 1591.4,1899.9 1595.2,1899.9 1599,1899.9 1602.8,1899.9 1606.6,1899.9 1610.4,1899.9 1614.2,1899.9 1618,1899.9 1621.8,1899.9 1625.6,1899.9 1629.4,1899.9 1633.2,1899.9 1637,1899.9 1640.9,1899.9 1644.7,1899.9 1648.5,1899.9 1652.3,1899.9 1656.1,1899.9 1659.9,1899.9 1663.7,1899.9 1667.5,1899.9 1671.3,1899.9 1675.1,1899.9 1678.9,1899.9 1682.7,1899.9 1686.5,1899.9 1690.4,1899.9 1694.2,1899.9 1698,1899.9 1701.8,1899.9 1705.6,1899.9 1709.4,1899.9 1713.2,1899.9 1717,1899.9 1720.8,1899.9 1724.6,1899.9 1728.4,1899.9 1732.2,1899.9 1736,1899.9 1739.9,1899.9 1743.7,1899.9 1747.5,1899.9 1751.3,1899.9 1755.1,1899.9 1758.9,1899.9 1762.7,1899.9 1766.5,1899.9 1770.3,1899.9 1774.1,1899.9 1777.9,1899.9 1781.7,1899.9 1785.5,1899.9 1789.4,1899.9 1793.2,1899.9 1797,1899.9 1800.8,1899.9 1804.6,1899.9 1808.4,1899.9 1812.2,1899.9 1816,1899.9 1819.8,1899.9 1823.6,1899.9 1827.4,1899.9 1831.2,1899.9 1835,1899.9 1838.9,1899.9 1842.7,1899.9 1846.5,1899.9 1850.3,1899.9 1854.1,1899.9 1857.9,1899.9 1861.7,1899.9 1865.5,1899.9 1869.3,1899.9 1873.1,1899.9 1876.9,1899.9 1880.7,1899.9 1884.5,1899.9 1888.4,1899.9 1892.2,1899.9 1896,1899.9 1899.8,1899.9 1903.6,1899.9 1907.4,1899.9 1911.2,1899.9 1915,1899.9 1918.8,1899.9 1922.6,1899.9 1926.4,1899.9 1930.2,1899.9 1934,1899.9 1937.9,1899.9 1941.7,1899.9 1945.5,1899.9 1949.3,1899.9 1953.1,1899.9 1956.9,1899.9 1960.7,1899.9 1964.5,1899.9 1968.3,1899.9 1972.1,1899.9 1975.9,1899.9 1979.7,1899.9 1983.5,1899.9 1987.4,1899.9 1991.2,1899.9 1995,1899.9 1998.8,1899.9 2002.6,1899.9 2006.4,1899.9 2010.2,1899.9 2014,1899.9 2017.8,1899.9 2021.6,1899.9 2025.4,1899.9 2029.2,1899.9 2033,1899.9 2036.9,1899.9 2040.7,1899.9 2044.5,1899.9 2048.3,1899.9 2052.1,1899.9 2055.9,1899.9 2059.7,1899.9 2063.5,1899.9 2067.3,1899.9 2071.1,1899.9 2074.9,1899.9 2078.7,1899.9 2082.5,1899.9 2086.4,1899.9 2090.2,1899.9 2094,1899.9 2097.8,1899.9 2101.6,1899.9 2105.4,1896.4 2109.2,1899.9 2113,1899.9 2116.8,1899.9 2120.6,1899.9 2124.4,1899.9 2128.2,1899.9 2132,1899.9 2135.9,1899.9 2139.7,1899.9 2143.5,1899.9 2147.3,1899.9 2151.1,1899.9 2154.9,1899.9 2158.7,1899.9 2162.5,1899.9 2166.3,1899.9 2170.1,1899.9 2173.9,1899.9 2177.7,1899.9 2181.5,1899.9 2185.4,1899.9 2189.2,1899.9 2193,1899.9 2196.8,1899.9 2200.6,1899.9 2204.4,1899.9 2208.2,1899.9 2212,1899.9 2215.8,1899.9 2219.6,1899.9 2223.4,1899.9 2227.2,1899.9 2231,1899.9 2234.9,1899.9 2238.7,1899.9 2242.5,1899.9 2246.3,1899.9 2250.1,1899.9 2253.9,1899.9 2257.7,1898.2 2261.5,1896.4 2265.3,1893 2269.1,1886.2 2272.9,1886.2 2276.7,1886.2 2280.5,1886.2 2284.4,1886.2 2288.2,1886.2 2292,1824.6 2295.8,1800.7 2299.6,1800.7 2303.4,1800.7 2307.2,1800.7 2311,1800.7 2314.8,1800.7 2318.6,1800.7 2322.4,1800.7 2326.2,1800.7 2330,1800.7 2333.9,1800.7 2337.7,1800.7 2341.5,1797.2 2345.3,1797.2 2349.1,1797.2 2352.9,1797.2 2356.7,1797.2 2360.5,1797.2 2364.3,1797.2 2368.1,1797.2 2371.9,1797.2 2375.7,1797.2 2379.5,1797.2 2383.4,1797.2" fill="none" stroke="#8fdcf0" stroke-width="3.5" stroke-linejoin="round"/>
<g fill="#00bfe0" stroke="#fff" stroke-width="3"><circle cx="1465.7" cy="1899.9" r="5.4"/><circle cx="1469.5" cy="1899.9" r="5.4"/><circle cx="1473.3" cy="1899.9" r="5.4"/><circle cx="1477.1" cy="1899.9" r="5.4"/><circle cx="1480.9" cy="1899.9" r="5.4"/><circle cx="1484.7" cy="1899.9" r="5.4"/><circle cx="1488.5" cy="1899.9" r="5.4"/><circle cx="1492.4" cy="1899.9" r="5.4"/><circle cx="1496.2" cy="1899.9" r="5.4"/><circle cx="1500" cy="1899.9" r="5.4"/><circle cx="1503.8" cy="1899.9" r="5.4"/><circle cx="1507.6" cy="1899.9" r="5.4"/><circle cx="1511.4" cy="1899.9" r="5.4"/><circle cx="1515.2" cy="1899.9" r="5.4"/><circle cx="1519" cy="1899.9" r="5.4"/><circle cx="1522.8" cy="1899.9" r="5.4"/><circle cx="1526.6" cy="1899.9" r="5.4"/><circle cx="1530.4" cy="1899.9" r="5.4"/><circle cx="1534.2" cy="1899.9" r="5.4"/><circle cx="1538" cy="1899.9" r="5.4"/><circle cx="1541.9" cy="1899.9" r="5.4"/><circle cx="1545.7" cy="1899.9" r="5.4"/><circle cx="1549.5" cy="1899.9" r="5.4"/><circle cx="1553.3" cy="1899.9" r="5.4"/><circle cx="1557.1" cy="1899.9" r="5.4"/><circle cx="1560.9" cy="1899.9" r="5.4"/><circle cx="1564.7" cy="1899.9" r="5.4"/><circle cx="1568.5" cy="1899.9" r="5.4"/><circle cx="1572.3" cy="1899.9" r="5.4"/><circle cx="1576.1" cy="1899.9" r="5.4"/><circle cx="1579.9" cy="1899.9" r="5.4"/><circle cx="1583.7" cy="1899.9" r="5.4"/><circle cx="1587.5" cy="1899.9" r="5.4"/><circle cx="1591.4" cy="1899.9" r="5.4"/><circle cx="1595.2" cy="1899.9" r="5.4"/><circle cx="1599" cy="1899.9" r="5.4"/><circle cx="1602.8" cy="1899.9" r="5.4"/><circle cx="1606.6" cy="1899.9" r="5.4"/><circle cx="1610.4" cy="1899.9" r="5.4"/><circle cx="1614.2" cy="1899.9" r="5.4"/><circle cx="1618" cy="1899.9" r="5.4"/><circle cx="1621.8" cy="1899.9" r="5.4"/><circle cx="1625.6" cy="1899.9" r="5.4"/><circle cx="1629.4" cy="1899.9" r="5.4"/><circle cx="1633.2" cy="1899.9" r="5.4"/><circle cx="1637" cy="1899.9" r="5.4"/><circle cx="1640.9" cy="1899.9" r="5.4"/><circle cx="1644.7" cy="1899.9" r="5.4"/><circle cx="1648.5" cy="1899.9" r="5.4"/><circle cx="1652.3" cy="1899.9" r="5.4"/><circle cx="1656.1" cy="1899.9" r="5.4"/><circle cx="1659.9" cy="1899.9" r="5.4"/><circle cx="1663.7" cy="1899.9" r="5.4"/><circle cx="1667.5" cy="1899.9" r="5.4"/><circle cx="1671.3" cy="1899.9" r="5.4"/><circle cx="1675.1" cy="1899.9" r="5.4"/><circle cx="1678.9" cy="1899.9" r="5.4"/><circle cx="1682.7" cy="1899.9" r="5.4"/><circle cx="1686.5" cy="1899.9" r="5.4"/><circle cx="1690.4" cy="1899.9" r="5.4"/><circle cx="1694.2" cy="1899.9" r="5.4"/><circle cx="1698" cy="1899.9" r="5.4"/><circle cx="1701.8" cy="1899.9" r="5.4"/><circle cx="1705.6" cy="1899.9" r="5.4"/><circle cx="1709.4" cy="1899.9" r="5.4"/><circle cx="1713.2" cy="1899.9" r="5.4"/><circle cx="1717" cy="1899.9" r="5.4"/><circle cx="1720.8" cy="1899.9" r="5.4"/><circle cx="1724.6" cy="1899.9" r="5.4"/><circle cx="1728.4" cy="1899.9" r="5.4"/><circle cx="1732.2" cy="1899.9" r="5.4"/><circle cx="1736" cy="1899.9" r="5.4"/><circle cx="1739.9" cy="1899.9" r="5.4"/><circle cx="1743.7" cy="1899.9" r="5.4"/><circle cx="1747.5" cy="1899.9" r="5.4"/><circle cx="1751.3" cy="1899.9" r="5.4"/><circle cx="1755.1" cy="1899.9" r="5.4"/><circle cx="1758.9" cy="1899.9" r="5.4"/><circle cx="1762.7" cy="1899.9" r="5.4"/><circle cx="1766.5" cy="1899.9" r="5.4"/><circle cx="1770.3" cy="1899.9" r="5.4"/><circle cx="1774.1" cy="1899.9" r="5.4"/><circle cx="1777.9" cy="1899.9" r="5.4"/><circle cx="1781.7" cy="1899.9" r="5.4"/><circle cx="1785.5" cy="1899.9" r="5.4"/><circle cx="1789.4" cy="1899.9" r="5.4"/><circle cx="1793.2" cy="1899.9" r="5.4"/><circle cx="1797" cy="1899.9" r="5.4"/><circle cx="1800.8" cy="1899.9" r="5.4"/><circle cx="1804.6" cy="1899.9" r="5.4"/><circle cx="1808.4" cy="1899.9" r="5.4"/><circle cx="1812.2" cy="1899.9" r="5.4"/><circle cx="1816" cy="1899.9" r="5.4"/><circle cx="1819.8" cy="1899.9" r="5.4"/><circle cx="1823.6" cy="1899.9" r="5.4"/><circle cx="1827.4" cy="1899.9" r="5.4"/><circle cx="1831.2" cy="1899.9" r="5.4"/><circle cx="1835" cy="1899.9" r="5.4"/><circle cx="1838.9" cy="1899.9" r="5.4"/><circle cx="1842.7" cy="1899.9" r="5.4"/><circle cx="1846.5" cy="1899.9" r="5.4"/><circle cx="1850.3" cy="1899.9" r="5.4"/><circle cx="1854.1" cy="1899.9" r="5.4"/><circle cx="1857.9" cy="1899.9" r="5.4"/><circle cx="1861.7" cy="1899.9" r="5.4"/><circle cx="1865.5" cy="1899.9" r="5.4"/><circle cx="1869.3" cy="1899.9" r="5.4"/><circle cx="1873.1" cy="1899.9" r="5.4"/><circle cx="1876.9" cy="1899.9" r="5.4"/><circle cx="1880.7" cy="1899.9" r="5.4"/><circle cx="1884.5" cy="1899.9" r="5.4"/><circle cx="1888.4" cy="1899.9" r="5.4"/><circle cx="1892.2" cy="1899.9" r="5.4"/><circle cx="1896" cy="1899.9" r="5.4"/><circle cx="1899.8" cy="1899.9" r="5.4"/><circle cx="1903.6" cy="1899.9" r="5.4"/><circle cx="1907.4" cy="1899.9" r="5.4"/><circle cx="1911.2" cy="1899.9" r="5.4"/><circle cx="1915" cy="1899.9" r="5.4"/><circle cx="1918.8" cy="1899.9" r="5.4"/><circle cx="1922.6" cy="1899.9" r="5.4"/><circle cx="1926.4" cy="1899.9" r="5.4"/><circle cx="1930.2" cy="1899.9" r="5.4"/><circle cx="1934" cy="1899.9" r="5.4"/><circle cx="1937.9" cy="1899.9" r="5.4"/><circle cx="1941.7" cy="1899.9" r="5.4"/><circle cx="1945.5" cy="1899.9" r="5.4"/><circle cx="1949.3" cy="1899.9" r="5.4"/><circle cx="1953.1" cy="1899.9" r="5.4"/><circle cx="1956.9" cy="1899.9" r="5.4"/><circle cx="1960.7" cy="1899.9" r="5.4"/><circle cx="1964.5" cy="1899.9" r="5.4"/><circle cx="1968.3" cy="1899.9" r="5.4"/><circle cx="1972.1" cy="1899.9" r="5.4"/><circle cx="1975.9" cy="1899.9" r="5.4"/><circle cx="1979.7" cy="1899.9" r="5.4"/><circle cx="1983.5" cy="1899.9" r="5.4"/><circle cx="1987.4" cy="1899.9" r="5.4"/><circle cx="1991.2" cy="1899.9" r="5.4"/><circle cx="1995" cy="1899.9" r="5.4"/><circle cx="1998.8" cy="1899.9" r="5.4"/><circle cx="2002.6" cy="1899.9" r="5.4"/><circle cx="2006.4" cy="1899.9" r="5.4"/><circle cx="2010.2" cy="1899.9" r="5.4"/><circle cx="2014" cy="1899.9" r="5.4"/><circle cx="2017.8" cy="1899.9" r="5.4"/><circle cx="2021.6" cy="1899.9" r="5.4"/><circle cx="2025.4" cy="1899.9" r="5.4"/><circle cx="2029.2" cy="1899.9" r="5.4"/><circle cx="2033" cy="1899.9" r="5.4"/><circle cx="2036.9" cy="1899.9" r="5.4"/><circle cx="2040.7" cy="1899.9" r="5.4"/><circle cx="2044.5" cy="1899.9" r="5.4"/><circle cx="2048.3" cy="1899.9" r="5.4"/><circle cx="2052.1" cy="1899.9" r="5.4"/><circle cx="2055.9" cy="1899.9" r="5.4"/><circle cx="2059.7" cy="1899.9" r="5.4"/><circle cx="2063.5" cy="1899.9" r="5.4"/><circle cx="2067.3" cy="1899.9" r="5.4"/><circle cx="2071.1" cy="1899.9" r="5.4"/><circle cx="2074.9" cy="1899.9" r="5.4"/><circle cx="2078.7" cy="1899.9" r="5.4"/><circle cx="2082.5" cy="1899.9" r="5.4"/><circle cx="2086.4" cy="1899.9" r="5.4"/><circle cx="2090.2" cy="1899.9" r="5.4"/><circle cx="2094" cy="1899.9" r="5.4"/><circle cx="2097.8" cy="1899.9" r="5.4"/><circle cx="2101.6" cy="1899.9" r="5.4"/><circle cx="2105.4" cy="1896.4" r="5.4"/><circle cx="2109.2" cy="1899.9" r="5.4"/><circle cx="2113" cy="1899.9" r="5.4"/><circle cx="2116.8" cy="1899.9" r="5.4"/><circle cx="2120.6" cy="1899.9" r="5.4"/><circle cx="2124.4" cy="1899.9" r="5.4"/><circle cx="2128.2" cy="1899.9" r="5.4"/><circle cx="2132" cy="1899.9" r="5.4"/><circle cx="2135.9" cy="1899.9" r="5.4"/><circle cx="2139.7" cy="1899.9" r="5.4"/><circle cx="2143.5" cy="1899.9" r="5.4"/><circle cx="2147.3" cy="1899.9" r="5.4"/><circle cx="2151.1" cy="1899.9" r="5.4"/><circle cx="2154.9" cy="1899.9" r="5.4"/><circle cx="2158.7" cy="1899.9" r="5.4"/><circle cx="2162.5" cy="1899.9" r="5.4"/><circle cx="2166.3" cy="1899.9" r="5.4"/><circle cx="2170.1" cy="1899.9" r="5.4"/><circle cx="2173.9" cy="1899.9" r="5.4"/><circle cx="2177.7" cy="1899.9" r="5.4"/><circle cx="2181.5" cy="1899.9" r="5.4"/><circle cx="2185.4" cy="1899.9" r="5.4"/><circle cx="2189.2" cy="1899.9" r="5.4"/><circle cx="2193" cy="1899.9" r="5.4"/><circle cx="2196.8" cy="1899.9" r="5.4"/><circle cx="2200.6" cy="1899.9" r="5.4"/><circle cx="2204.4" cy="1899.9" r="5.4"/><circle cx="2208.2" cy="1899.9" r="5.4"/><circle cx="2212" cy="1899.9" r="5.4"/><circle cx="2215.8" cy="1899.9" r="5.4"/><circle cx="2219.6" cy="1899.9" r="5.4"/><circle cx="2223.4" cy="1899.9" r="5.4"/><circle cx="2227.2" cy="1899.9" r="5.4"/><circle cx="2231" cy="1899.9" r="5.4"/><circle cx="2234.9" cy="1899.9" r="5.4"/><circle cx="2238.7" cy="1899.9" r="5.4"/><circle cx="2242.5" cy="1899.9" r="5.4"/><circle cx="2246.3" cy="1899.9" r="5.4"/><circle cx="2250.1" cy="1899.9" r="5.4"/><circle cx="2253.9" cy="1899.9" r="5.4"/><circle cx="2257.7" cy="1898.2" r="5.4"/><circle cx="2261.5" cy="1896.4" r="5.4"/><circle cx="2265.3" cy="1893" r="5.4"/><circle cx="2269.1" cy="1886.2" r="5.4"/><circle cx="2272.9" cy="1886.2" r="5.4"/><circle cx="2276.7" cy="1886.2" r="5.4"/><circle cx="2280.5" cy="1886.2" r="5.4"/><circle cx="2284.4" cy="1886.2" r="5.4"/><circle cx="2288.2" cy="1886.2" r="5.4"/><circle cx="2292" cy="1824.6" r="5.4"/><circle cx="2295.8" cy="1800.7" r="5.4"/><circle cx="2299.6" cy="1800.7" r="5.4"/><circle cx="2303.4" cy="1800.7" r="5.4"/><circle cx="2307.2" cy="1800.7" r="5.4"/><circle cx="2311" cy="1800.7" r="5.4"/><circle cx="2314.8" cy="1800.7" r="5.4"/><circle cx="2318.6" cy="1800.7" r="5.4"/><circle cx="2322.4" cy="1800.7" r="5.4"/><circle cx="2326.2" cy="1800.7" r="5.4"/><circle cx="2330" cy="1800.7" r="5.4"/><circle cx="2333.9" cy="1800.7" r="5.4"/><circle cx="2337.7" cy="1800.7" r="5.4"/><circle cx="2341.5" cy="1797.2" r="5.4"/><circle cx="2345.3" cy="1797.2" r="5.4"/><circle cx="2349.1" cy="1797.2" r="5.4"/><circle cx="2352.9" cy="1797.2" r="5.4"/><circle cx="2356.7" cy="1797.2" r="5.4"/><circle cx="2360.5" cy="1797.2" r="5.4"/><circle cx="2364.3" cy="1797.2" r="5.4"/><circle cx="2368.1" cy="1797.2" r="5.4"/><circle cx="2371.9" cy="1797.2" r="5.4"/><circle cx="2375.7" cy="1797.2" r="5.4"/><circle cx="2379.5" cy="1797.2" r="5.4"/><circle cx="2383.4" cy="1797.2" r="5.4"/></g>
<path d="M1441.1 2099.1H2401.7" stroke="#e8e8e8" stroke-width="2"/>
</g>
<g>
<text x="2580.5" y="1762.3" font-size="30.6" textLength="299.7" lengthAdjust="spacingAndGlyphs">Memory Used (VIWMI)</text>
<text x="2729.3" y="2106" font-size="20.4" text-anchor="end" textLength="9.9" lengthAdjust="spacingAndGlyphs">0</text>
<path d="M2739.4 1995.6H3631.7" stroke="#e8e8e8" stroke-width="1.8"/>
<text x="2729.3" y="2003.3" font-size="20.4" text-anchor="end" textLength="86.6" lengthAdjust="spacingAndGlyphs">10000000</text>
<path d="M2739.4 1892.9H3631.7" stroke="#e8e8e8" stroke-width="1.8"/>
<text x="2729.3" y="1900.6" font-size="20.4" text-anchor="end" textLength="86.6" lengthAdjust="spacingAndGlyphs">20000000</text>
<path d="M2745.3 1792.6V2098.3" stroke="#e8e8e8" stroke-width="1.8"/>
<path d="M2761.6 2098.3V2104.7" stroke="#e8e8e8" stroke-width="1.8"/>
<text x="2761.6" y="2129.2" font-size="20.4" text-anchor="middle" textLength="47.6" lengthAdjust="spacingAndGlyphs">00:03</text>
<path d="M2831.5 2098.3V2104.7" stroke="#e8e8e8" stroke-width="1.8"/>
<text x="2831.5" y="2129.2" font-size="20.4" text-anchor="middle" textLength="47.6" lengthAdjust="spacingAndGlyphs">01:42</text>
<path d="M2901.3 2098.3V2104.7" stroke="#e8e8e8" stroke-width="1.8"/>
<text x="2901.3" y="2129.2" font-size="20.4" text-anchor="middle" textLength="47.6" lengthAdjust="spacingAndGlyphs">03:21</text>
<path d="M2971.2 2098.3V2104.7" stroke="#e8e8e8" stroke-width="1.8"/>
<text x="2971.2" y="2129.2" font-size="20.4" text-anchor="middle" textLength="47.6" lengthAdjust="spacingAndGlyphs">04:59</text>
<path d="M3041 2098.3V2104.7" stroke="#e8e8e8" stroke-width="1.8"/>
<text x="3041" y="2129.2" font-size="20.4" text-anchor="middle" textLength="47.6" lengthAdjust="spacingAndGlyphs">06:38</text>
<path d="M3110.9 2098.3V2104.7" stroke="#e8e8e8" stroke-width="1.8"/>
<text x="3110.9" y="2129.2" font-size="20.4" text-anchor="middle" textLength="47.6" lengthAdjust="spacingAndGlyphs">08:17</text>
<path d="M3180.7 2098.3V2104.7" stroke="#e8e8e8" stroke-width="1.8"/>
<text x="3180.7" y="2129.2" font-size="20.4" text-anchor="middle" textLength="47.6" lengthAdjust="spacingAndGlyphs">09:55</text>
<path d="M3250.6 2098.3V2104.7" stroke="#e8e8e8" stroke-width="1.8"/>
<text x="3250.6" y="2129.2" font-size="20.4" text-anchor="middle" textLength="47.6" lengthAdjust="spacingAndGlyphs">11:34</text>
<path d="M3320.4 2098.3V2104.7" stroke="#e8e8e8" stroke-width="1.8"/>
<text x="3320.4" y="2129.2" font-size="20.4" text-anchor="middle" textLength="47.6" lengthAdjust="spacingAndGlyphs">13:13</text>
<path d="M3390.3 2098.3V2104.7" stroke="#e8e8e8" stroke-width="1.8"/>
<text x="3390.3" y="2129.2" font-size="20.4" text-anchor="middle" textLength="47.6" lengthAdjust="spacingAndGlyphs">14:51</text>
<path d="M3460.1 2098.3V2104.7" stroke="#e8e8e8" stroke-width="1.8"/>
<text x="3460.1" y="2129.2" font-size="20.4" text-anchor="middle" textLength="47.6" lengthAdjust="spacingAndGlyphs">16:30</text>
<path d="M3530 2098.3V2104.7" stroke="#e8e8e8" stroke-width="1.8"/>
<text x="3530" y="2129.2" font-size="20.4" text-anchor="middle" textLength="47.6" lengthAdjust="spacingAndGlyphs">18:09</text>
<path d="M3599.8 2098.3V2104.7" stroke="#e8e8e8" stroke-width="1.8"/>
<text x="3599.8" y="2129.2" font-size="20.4" text-anchor="middle" textLength="47.6" lengthAdjust="spacingAndGlyphs">19:48</text>
<text x="3188.3" y="2173.7" font-size="21.5" text-anchor="middle" textLength="47" lengthAdjust="spacingAndGlyphs">Time</text>
<text transform="translate(2612.5 1945.5) rotate(-90)" font-size="21.5" text-anchor="middle">KB</text>
<polygon points="2761.6,2098.3 2761.6,1900.1 2765.1,1899.7 2768.7,1899.9 2772.2,1899.7 2775.8,1899.6 2779.3,1899.8 2782.8,1899.8 2786.4,1900.1 2789.9,1900 2793.5,1899.8 2797,1899.7 2800.5,1899.6 2804.1,1899.9 2807.6,1900.1 2811.2,1899.9 2814.7,1899.5 2818.2,1900 2821.8,1899.8 2825.3,1899.5 2828.9,1900.1 2832.4,1899.7 2835.9,1899.5 2839.5,1899.9 2843,1899.7 2846.6,1899.5 2850.1,1900 2853.6,1899.7 2857.2,1899.6 2860.7,1899.6 2864.3,1899.7 2867.8,1899.9 2871.3,1899.7 2874.9,1899.8 2878.4,1899.7 2882,1899.8 2885.5,1899.5 2889,1899.5 2892.6,1899.8 2896.1,1899.6 2899.7,1899.8 2903.2,1899.7 2906.7,1899.7 2910.3,1899.5 2913.8,1899.7 2917.4,1899.6 2920.9,1899.5 2924.4,1899.7 2928,1899.4 2931.5,1899.8 2935,1899.4 2938.6,1899.6 2942.1,1899.6 2945.7,1899.5 2949.2,1899.6 2952.7,1899.6 2956.3,1899.9 2959.8,1899.8 2963.4,1899.4 2966.9,1899.5 2970.4,1899.4 2974,1899.2 2977.5,1899.4 2981.1,1899.8 2984.6,1899.6 2988.1,1899.4 2991.7,1899.7 2995.2,1899.2 2998.8,1899.2 3002.3,1899.3 3005.8,1899.5 3009.4,1899.3 3012.9,1899.7 3016.5,1899.6 3020,1899.5 3023.5,1899.3 3027.1,1899.4 3030.6,1899.7 3034.2,1899.5 3037.7,1899.5 3041.2,1899.5 3044.8,1899.6 3048.3,1899.5 3051.9,1899.4 3055.4,1899.2 3058.9,1899.2 3062.5,1899.4 3066,1899.4 3069.6,1899.2 3073.1,1899.1 3076.6,1899.2 3080.2,1899.2 3083.7,1899.1 3087.3,1899.6 3090.8,1899.1 3094.3,1899.5 3097.9,1899.3 3101.4,1899.1 3104.9,1899.2 3108.5,1899.5 3112,1899.2 3115.6,1899.6 3119.1,1899.4 3122.6,1899.1 3126.2,1899.3 3129.7,1899.2 3133.3,1899.1 3136.8,1899.1 3140.3,1899.1 3143.9,1899.5 3147.4,1899.3 3151,1899.3 3154.5,1899.5 3158,1899.2 3161.6,1899.1 3165.1,1899 3168.7,1898.9 3172.2,1899.4 3175.7,1899.4 3179.3,1899.1 3182.8,1899.4 3186.4,1899.3 3189.9,1899.1 3193.4,1899.4 3197,1899 3200.5,1898.9 3204.1,1899.4 3207.6,1899.1 3211.1,1898.9 3214.7,1898.8 3218.2,1899.3 3221.8,1899.3 3225.3,1898.9 3228.8,1898.8 3232.4,1899.3 3235.9,1899.1 3239.5,1898.9 3243,1898.9 3246.5,1899.3 3250.1,1899 3253.6,1898.9 3257.2,1899 3260.7,1899.3 3264.2,1899.3 3267.8,1899.2 3271.3,1898.8 3274.9,1899.3 3278.4,1899.3 3281.9,1899.1 3285.5,1899.3 3289,1899.2 3292.5,1899.3 3296.1,1899 3299.6,1898.9 3303.2,1899 3306.7,1899.2 3310.2,1899.1 3313.8,1898.9 3317.3,1898.7 3320.9,1898.6 3324.4,1899.1 3327.9,1899.2 3331.5,1898.7 3335,1898.7 3338.6,1898.9 3342.1,1898.7 3345.6,1898.7 3349.2,1898.8 3352.7,1898.7 3356.3,1899.2 3359.8,1899 3363.3,1899 3366.9,1899.1 3370.4,1898.6 3374,1899.1 3377.5,1898.7 3381,1899.1 3384.6,1898.9 3388.1,1898.9 3391.7,1899 3395.2,1898.8 3398.7,1898.8 3402.3,1898.9 3405.8,1898.7 3409.4,1899 3412.9,1899 3416.4,1898.9 3420,1898.9 3423.5,1899 3427.1,1898.5 3430.6,1898.6 3434.1,1899 3437.7,1898.8 3441.2,1898.9 3444.8,1898.8 3448.3,1898.9 3451.8,1898.7 3455.4,1898.5 3458.9,1898.8 3462.4,1898.6 3466,1898.6 3469.5,1898.5 3473.1,1899 3476.6,1898.5 3480.1,1898.4 3483.7,1898.6 3487.2,1898.8 3490.8,1898.6 3494.3,1898.5 3497.8,1898 3501.4,1896 3504.9,1895 3508.5,1893.9 3512,1889.8 3515.5,1885.7 3519.1,1885.7 3522.6,1885.7 3526.2,1885.7 3529.7,1825.1 3533.2,1800.3 3536.8,1800.8 3540.3,1800 3543.9,1800 3547.4,1800.5 3550.9,1800.4 3554.5,1800.9 3558,1800 3561.6,1800.1 3565.1,1800.3 3568.6,1800.2 3572.2,1800.8 3575.7,1797.4 3579.3,1797.4 3582.8,1797.4 3586.3,1797.4 3589.9,1797.4 3593.4,1797.4 3597,1797.4 3600.5,1797.4 3604,1797.4 3607.6,1797.4 3611.1,1797.4 3614.7,1797.4 3614.7,2098.3" fill="rgba(30,185,220,0.26)"/>
<polyline points="2761.6,1900.1 2765.1,1899.7 2768.7,1899.9 2772.2,1899.7 2775.8,1899.6 2779.3,1899.8 2782.8,1899.8 2786.4,1900.1 2789.9,1900 2793.5,1899.8 2797,1899.7 2800.5,1899.6 2804.1,1899.9 2807.6,1900.1 2811.2,1899.9 2814.7,1899.5 2818.2,1900 2821.8,1899.8 2825.3,1899.5 2828.9,1900.1 2832.4,1899.7 2835.9,1899.5 2839.5,1899.9 2843,1899.7 2846.6,1899.5 2850.1,1900 2853.6,1899.7 2857.2,1899.6 2860.7,1899.6 2864.3,1899.7 2867.8,1899.9 2871.3,1899.7 2874.9,1899.8 2878.4,1899.7 2882,1899.8 2885.5,1899.5 2889,1899.5 2892.6,1899.8 2896.1,1899.6 2899.7,1899.8 2903.2,1899.7 2906.7,1899.7 2910.3,1899.5 2913.8,1899.7 2917.4,1899.6 2920.9,1899.5 2924.4,1899.7 2928,1899.4 2931.5,1899.8 2935,1899.4 2938.6,1899.6 2942.1,1899.6 2945.7,1899.5 2949.2,1899.6 2952.7,1899.6 2956.3,1899.9 2959.8,1899.8 2963.4,1899.4 2966.9,1899.5 2970.4,1899.4 2974,1899.2 2977.5,1899.4 2981.1,1899.8 2984.6,1899.6 2988.1,1899.4 2991.7,1899.7 2995.2,1899.2 2998.8,1899.2 3002.3,1899.3 3005.8,1899.5 3009.4,1899.3 3012.9,1899.7 3016.5,1899.6 3020,1899.5 3023.5,1899.3 3027.1,1899.4 3030.6,1899.7 3034.2,1899.5 3037.7,1899.5 3041.2,1899.5 3044.8,1899.6 3048.3,1899.5 3051.9,1899.4 3055.4,1899.2 3058.9,1899.2 3062.5,1899.4 3066,1899.4 3069.6,1899.2 3073.1,1899.1 3076.6,1899.2 3080.2,1899.2 3083.7,1899.1 3087.3,1899.6 3090.8,1899.1 3094.3,1899.5 3097.9,1899.3 3101.4,1899.1 3104.9,1899.2 3108.5,1899.5 3112,1899.2 3115.6,1899.6 3119.1,1899.4 3122.6,1899.1 3126.2,1899.3 3129.7,1899.2 3133.3,1899.1 3136.8,1899.1 3140.3,1899.1 3143.9,1899.5 3147.4,1899.3 3151,1899.3 3154.5,1899.5 3158,1899.2 3161.6,1899.1 3165.1,1899 3168.7,1898.9 3172.2,1899.4 3175.7,1899.4 3179.3,1899.1 3182.8,1899.4 3186.4,1899.3 3189.9,1899.1 3193.4,1899.4 3197,1899 3200.5,1898.9 3204.1,1899.4 3207.6,1899.1 3211.1,1898.9 3214.7,1898.8 3218.2,1899.3 3221.8,1899.3 3225.3,1898.9 3228.8,1898.8 3232.4,1899.3 3235.9,1899.1 3239.5,1898.9 3243,1898.9 3246.5,1899.3 3250.1,1899 3253.6,1898.9 3257.2,1899 3260.7,1899.3 3264.2,1899.3 3267.8,1899.2 3271.3,1898.8 3274.9,1899.3 3278.4,1899.3 3281.9,1899.1 3285.5,1899.3 3289,1899.2 3292.5,1899.3 3296.1,1899 3299.6,1898.9 3303.2,1899 3306.7,1899.2 3310.2,1899.1 3313.8,1898.9 3317.3,1898.7 3320.9,1898.6 3324.4,1899.1 3327.9,1899.2 3331.5,1898.7 3335,1898.7 3338.6,1898.9 3342.1,1898.7 3345.6,1898.7 3349.2,1898.8 3352.7,1898.7 3356.3,1899.2 3359.8,1899 3363.3,1899 3366.9,1899.1 3370.4,1898.6 3374,1899.1 3377.5,1898.7 3381,1899.1 3384.6,1898.9 3388.1,1898.9 3391.7,1899 3395.2,1898.8 3398.7,1898.8 3402.3,1898.9 3405.8,1898.7 3409.4,1899 3412.9,1899 3416.4,1898.9 3420,1898.9 3423.5,1899 3427.1,1898.5 3430.6,1898.6 3434.1,1899 3437.7,1898.8 3441.2,1898.9 3444.8,1898.8 3448.3,1898.9 3451.8,1898.7 3455.4,1898.5 3458.9,1898.8 3462.4,1898.6 3466,1898.6 3469.5,1898.5 3473.1,1899 3476.6,1898.5 3480.1,1898.4 3483.7,1898.6 3487.2,1898.8 3490.8,1898.6 3494.3,1898.5 3497.8,1898 3501.4,1896 3504.9,1895 3508.5,1893.9 3512,1889.8 3515.5,1885.7 3519.1,1885.7 3522.6,1885.7 3526.2,1885.7 3529.7,1825.1 3533.2,1800.3 3536.8,1800.8 3540.3,1800 3543.9,1800 3547.4,1800.5 3550.9,1800.4 3554.5,1800.9 3558,1800 3561.6,1800.1 3565.1,1800.3 3568.6,1800.2 3572.2,1800.8 3575.7,1797.4 3579.3,1797.4 3582.8,1797.4 3586.3,1797.4 3589.9,1797.4 3593.4,1797.4 3597,1797.4 3600.5,1797.4 3604,1797.4 3607.6,1797.4 3611.1,1797.4 3614.7,1797.4" fill="none" stroke="#8fdcf0" stroke-width="3.5" stroke-linejoin="round"/>
<g fill="#00bfe0" stroke="#fff" stroke-width="3"><circle cx="2761.6" cy="1900.1" r="5.4"/><circle cx="2765.1" cy="1899.7" r="5.4"/><circle cx="2768.7" cy="1899.9" r="5.4"/><circle cx="2772.2" cy="1899.7" r="5.4"/><circle cx="2775.8" cy="1899.6" r="5.4"/><circle cx="2779.3" cy="1899.8" r="5.4"/><circle cx="2782.8" cy="1899.8" r="5.4"/><circle cx="2786.4" cy="1900.1" r="5.4"/><circle cx="2789.9" cy="1900" r="5.4"/><circle cx="2793.5" cy="1899.8" r="5.4"/><circle cx="2797" cy="1899.7" r="5.4"/><circle cx="2800.5" cy="1899.6" r="5.4"/><circle cx="2804.1" cy="1899.9" r="5.4"/><circle cx="2807.6" cy="1900.1" r="5.4"/><circle cx="2811.2" cy="1899.9" r="5.4"/><circle cx="2814.7" cy="1899.5" r="5.4"/><circle cx="2818.2" cy="1900" r="5.4"/><circle cx="2821.8" cy="1899.8" r="5.4"/><circle cx="2825.3" cy="1899.5" r="5.4"/><circle cx="2828.9" cy="1900.1" r="5.4"/><circle cx="2832.4" cy="1899.7" r="5.4"/><circle cx="2835.9" cy="1899.5" r="5.4"/><circle cx="2839.5" cy="1899.9" r="5.4"/><circle cx="2843" cy="1899.7" r="5.4"/><circle cx="2846.6" cy="1899.5" r="5.4"/><circle cx="2850.1" cy="1900" r="5.4"/><circle cx="2853.6" cy="1899.7" r="5.4"/><circle cx="2857.2" cy="1899.6" r="5.4"/><circle cx="2860.7" cy="1899.6" r="5.4"/><circle cx="2864.3" cy="1899.7" r="5.4"/><circle cx="2867.8" cy="1899.9" r="5.4"/><circle cx="2871.3" cy="1899.7" r="5.4"/><circle cx="2874.9" cy="1899.8" r="5.4"/><circle cx="2878.4" cy="1899.7" r="5.4"/><circle cx="2882" cy="1899.8" r="5.4"/><circle cx="2885.5" cy="1899.5" r="5.4"/><circle cx="2889" cy="1899.5" r="5.4"/><circle cx="2892.6" cy="1899.8" r="5.4"/><circle cx="2896.1" cy="1899.6" r="5.4"/><circle cx="2899.7" cy="1899.8" r="5.4"/><circle cx="2903.2" cy="1899.7" r="5.4"/><circle cx="2906.7" cy="1899.7" r="5.4"/><circle cx="2910.3" cy="1899.5" r="5.4"/><circle cx="2913.8" cy="1899.7" r="5.4"/><circle cx="2917.4" cy="1899.6" r="5.4"/><circle cx="2920.9" cy="1899.5" r="5.4"/><circle cx="2924.4" cy="1899.7" r="5.4"/><circle cx="2928" cy="1899.4" r="5.4"/><circle cx="2931.5" cy="1899.8" r="5.4"/><circle cx="2935" cy="1899.4" r="5.4"/><circle cx="2938.6" cy="1899.6" r="5.4"/><circle cx="2942.1" cy="1899.6" r="5.4"/><circle cx="2945.7" cy="1899.5" r="5.4"/><circle cx="2949.2" cy="1899.6" r="5.4"/><circle cx="2952.7" cy="1899.6" r="5.4"/><circle cx="2956.3" cy="1899.9" r="5.4"/><circle cx="2959.8" cy="1899.8" r="5.4"/><circle cx="2963.4" cy="1899.4" r="5.4"/><circle cx="2966.9" cy="1899.5" r="5.4"/><circle cx="2970.4" cy="1899.4" r="5.4"/><circle cx="2974" cy="1899.2" r="5.4"/><circle cx="2977.5" cy="1899.4" r="5.4"/><circle cx="2981.1" cy="1899.8" r="5.4"/><circle cx="2984.6" cy="1899.6" r="5.4"/><circle cx="2988.1" cy="1899.4" r="5.4"/><circle cx="2991.7" cy="1899.7" r="5.4"/><circle cx="2995.2" cy="1899.2" r="5.4"/><circle cx="2998.8" cy="1899.2" r="5.4"/><circle cx="3002.3" cy="1899.3" r="5.4"/><circle cx="3005.8" cy="1899.5" r="5.4"/><circle cx="3009.4" cy="1899.3" r="5.4"/><circle cx="3012.9" cy="1899.7" r="5.4"/><circle cx="3016.5" cy="1899.6" r="5.4"/><circle cx="3020" cy="1899.5" r="5.4"/><circle cx="3023.5" cy="1899.3" r="5.4"/><circle cx="3027.1" cy="1899.4" r="5.4"/><circle cx="3030.6" cy="1899.7" r="5.4"/><circle cx="3034.2" cy="1899.5" r="5.4"/><circle cx="3037.7" cy="1899.5" r="5.4"/><circle cx="3041.2" cy="1899.5" r="5.4"/><circle cx="3044.8" cy="1899.6" r="5.4"/><circle cx="3048.3" cy="1899.5" r="5.4"/><circle cx="3051.9" cy="1899.4" r="5.4"/><circle cx="3055.4" cy="1899.2" r="5.4"/><circle cx="3058.9" cy="1899.2" r="5.4"/><circle cx="3062.5" cy="1899.4" r="5.4"/><circle cx="3066" cy="1899.4" r="5.4"/><circle cx="3069.6" cy="1899.2" r="5.4"/><circle cx="3073.1" cy="1899.1" r="5.4"/><circle cx="3076.6" cy="1899.2" r="5.4"/><circle cx="3080.2" cy="1899.2" r="5.4"/><circle cx="3083.7" cy="1899.1" r="5.4"/><circle cx="3087.3" cy="1899.6" r="5.4"/><circle cx="3090.8" cy="1899.1" r="5.4"/><circle cx="3094.3" cy="1899.5" r="5.4"/><circle cx="3097.9" cy="1899.3" r="5.4"/><circle cx="3101.4" cy="1899.1" r="5.4"/><circle cx="3104.9" cy="1899.2" r="5.4"/><circle cx="3108.5" cy="1899.5" r="5.4"/><circle cx="3112" cy="1899.2" r="5.4"/><circle cx="3115.6" cy="1899.6" r="5.4"/><circle cx="3119.1" cy="1899.4" r="5.4"/><circle cx="3122.6" cy="1899.1" r="5.4"/><circle cx="3126.2" cy="1899.3" r="5.4"/><circle cx="3129.7" cy="1899.2" r="5.4"/><circle cx="3133.3" cy="1899.1" r="5.4"/><circle cx="3136.8" cy="1899.1" r="5.4"/><circle cx="3140.3" cy="1899.1" r="5.4"/><circle cx="3143.9" cy="1899.5" r="5.4"/><circle cx="3147.4" cy="1899.3" r="5.4"/><circle cx="3151" cy="1899.3" r="5.4"/><circle cx="3154.5" cy="1899.5" r="5.4"/><circle cx="3158" cy="1899.2" r="5.4"/><circle cx="3161.6" cy="1899.1" r="5.4"/><circle cx="3165.1" cy="1899" r="5.4"/><circle cx="3168.7" cy="1898.9" r="5.4"/><circle cx="3172.2" cy="1899.4" r="5.4"/><circle cx="3175.7" cy="1899.4" r="5.4"/><circle cx="3179.3" cy="1899.1" r="5.4"/><circle cx="3182.8" cy="1899.4" r="5.4"/><circle cx="3186.4" cy="1899.3" r="5.4"/><circle cx="3189.9" cy="1899.1" r="5.4"/><circle cx="3193.4" cy="1899.4" r="5.4"/><circle cx="3197" cy="1899" r="5.4"/><circle cx="3200.5" cy="1898.9" r="5.4"/><circle cx="3204.1" cy="1899.4" r="5.4"/><circle cx="3207.6" cy="1899.1" r="5.4"/><circle cx="3211.1" cy="1898.9" r="5.4"/><circle cx="3214.7" cy="1898.8" r="5.4"/><circle cx="3218.2" cy="1899.3" r="5.4"/><circle cx="3221.8" cy="1899.3" r="5.4"/><circle cx="3225.3" cy="1898.9" r="5.4"/><circle cx="3228.8" cy="1898.8" r="5.4"/><circle cx="3232.4" cy="1899.3" r="5.4"/><circle cx="3235.9" cy="1899.1" r="5.4"/><circle cx="3239.5" cy="1898.9" r="5.4"/><circle cx="3243" cy="1898.9" r="5.4"/><circle cx="3246.5" cy="1899.3" r="5.4"/><circle cx="3250.1" cy="1899" r="5.4"/><circle cx="3253.6" cy="1898.9" r="5.4"/><circle cx="3257.2" cy="1899" r="5.4"/><circle cx="3260.7" cy="1899.3" r="5.4"/><circle cx="3264.2" cy="1899.3" r="5.4"/><circle cx="3267.8" cy="1899.2" r="5.4"/><circle cx="3271.3" cy="1898.8" r="5.4"/><circle cx="3274.9" cy="1899.3" r="5.4"/><circle cx="3278.4" cy="1899.3" r="5.4"/><circle cx="3281.9" cy="1899.1" r="5.4"/><circle cx="3285.5" cy="1899.3" r="5.4"/><circle cx="3289" cy="1899.2" r="5.4"/><circle cx="3292.5" cy="1899.3" r="5.4"/><circle cx="3296.1" cy="1899" r="5.4"/><circle cx="3299.6" cy="1898.9" r="5.4"/><circle cx="3303.2" cy="1899" r="5.4"/><circle cx="3306.7" cy="1899.2" r="5.4"/><circle cx="3310.2" cy="1899.1" r="5.4"/><circle cx="3313.8" cy="1898.9" r="5.4"/><circle cx="3317.3" cy="1898.7" r="5.4"/><circle cx="3320.9" cy="1898.6" r="5.4"/><circle cx="3324.4" cy="1899.1" r="5.4"/><circle cx="3327.9" cy="1899.2" r="5.4"/><circle cx="3331.5" cy="1898.7" r="5.4"/><circle cx="3335" cy="1898.7" r="5.4"/><circle cx="3338.6" cy="1898.9" r="5.4"/><circle cx="3342.1" cy="1898.7" r="5.4"/><circle cx="3345.6" cy="1898.7" r="5.4"/><circle cx="3349.2" cy="1898.8" r="5.4"/><circle cx="3352.7" cy="1898.7" r="5.4"/><circle cx="3356.3" cy="1899.2" r="5.4"/><circle cx="3359.8" cy="1899" r="5.4"/><circle cx="3363.3" cy="1899" r="5.4"/><circle cx="3366.9" cy="1899.1" r="5.4"/><circle cx="3370.4" cy="1898.6" r="5.4"/><circle cx="3374" cy="1899.1" r="5.4"/><circle cx="3377.5" cy="1898.7" r="5.4"/><circle cx="3381" cy="1899.1" r="5.4"/><circle cx="3384.6" cy="1898.9" r="5.4"/><circle cx="3388.1" cy="1898.9" r="5.4"/><circle cx="3391.7" cy="1899" r="5.4"/><circle cx="3395.2" cy="1898.8" r="5.4"/><circle cx="3398.7" cy="1898.8" r="5.4"/><circle cx="3402.3" cy="1898.9" r="5.4"/><circle cx="3405.8" cy="1898.7" r="5.4"/><circle cx="3409.4" cy="1899" r="5.4"/><circle cx="3412.9" cy="1899" r="5.4"/><circle cx="3416.4" cy="1898.9" r="5.4"/><circle cx="3420" cy="1898.9" r="5.4"/><circle cx="3423.5" cy="1899" r="5.4"/><circle cx="3427.1" cy="1898.5" r="5.4"/><circle cx="3430.6" cy="1898.6" r="5.4"/><circle cx="3434.1" cy="1899" r="5.4"/><circle cx="3437.7" cy="1898.8" r="5.4"/><circle cx="3441.2" cy="1898.9" r="5.4"/><circle cx="3444.8" cy="1898.8" r="5.4"/><circle cx="3448.3" cy="1898.9" r="5.4"/><circle cx="3451.8" cy="1898.7" r="5.4"/><circle cx="3455.4" cy="1898.5" r="5.4"/><circle cx="3458.9" cy="1898.8" r="5.4"/><circle cx="3462.4" cy="1898.6" r="5.4"/><circle cx="3466" cy="1898.6" r="5.4"/><circle cx="3469.5" cy="1898.5" r="5.4"/><circle cx="3473.1" cy="1899" r="5.4"/><circle cx="3476.6" cy="1898.5" r="5.4"/><circle cx="3480.1" cy="1898.4" r="5.4"/><circle cx="3483.7" cy="1898.6" r="5.4"/><circle cx="3487.2" cy="1898.8" r="5.4"/><circle cx="3490.8" cy="1898.6" r="5.4"/><circle cx="3494.3" cy="1898.5" r="5.4"/><circle cx="3497.8" cy="1898" r="5.4"/><circle cx="3501.4" cy="1896" r="5.4"/><circle cx="3504.9" cy="1895" r="5.4"/><circle cx="3508.5" cy="1893.9" r="5.4"/><circle cx="3512" cy="1889.8" r="5.4"/><circle cx="3515.5" cy="1885.7" r="5.4"/><circle cx="3519.1" cy="1885.7" r="5.4"/><circle cx="3522.6" cy="1885.7" r="5.4"/><circle cx="3526.2" cy="1885.7" r="5.4"/><circle cx="3529.7" cy="1825.1" r="5.4"/><circle cx="3533.2" cy="1800.3" r="5.4"/><circle cx="3536.8" cy="1800.8" r="5.4"/><circle cx="3540.3" cy="1800" r="5.4"/><circle cx="3543.9" cy="1800" r="5.4"/><circle cx="3547.4" cy="1800.5" r="5.4"/><circle cx="3550.9" cy="1800.4" r="5.4"/><circle cx="3554.5" cy="1800.9" r="5.4"/><circle cx="3558" cy="1800" r="5.4"/><circle cx="3561.6" cy="1800.1" r="5.4"/><circle cx="3565.1" cy="1800.3" r="5.4"/><circle cx="3568.6" cy="1800.2" r="5.4"/><circle cx="3572.2" cy="1800.8" r="5.4"/><circle cx="3575.7" cy="1797.4" r="5.4"/><circle cx="3579.3" cy="1797.4" r="5.4"/><circle cx="3582.8" cy="1797.4" r="5.4"/><circle cx="3586.3" cy="1797.4" r="5.4"/><circle cx="3589.9" cy="1797.4" r="5.4"/><circle cx="3593.4" cy="1797.4" r="5.4"/><circle cx="3597" cy="1797.4" r="5.4"/><circle cx="3600.5" cy="1797.4" r="5.4"/><circle cx="3604" cy="1797.4" r="5.4"/><circle cx="3607.6" cy="1797.4" r="5.4"/><circle cx="3611.1" cy="1797.4" r="5.4"/><circle cx="3614.7" cy="1797.4" r="5.4"/></g>
<path d="M2739.4 2099.1H3631.7" stroke="#e8e8e8" stroke-width="2"/>
</g>
</svg>
<div class="track"></div><div class="thumb"></div>
<div class="alarms"><b>1</b><span id="alarms" style="transform:scaleX(1.0128)">Alarms</span></div>
<div class="chat"><svg width="48" height="50" viewBox="0 0 48 50" fill="none" stroke="#c9ecd9" stroke-width="1.8" stroke-linejoin="round"><path d="M9 13V8.5Q9 5 12.500 5H40.500Q44 5 44 8.500V25.500Q44 29 40.500 29H37"/><path d="M6 14H33.500Q37 14 37 17.500V35Q37 38.500 33.500 38.500H18L11.500 46V38.500H6Q2.500 38.500 2.500 35V17.500Q2.500 14 6 14Z"/><path d="M10 23H20M10 27.500H30M10 32H30" stroke-width="2.2"/></svg></div>
</body>
</html>
